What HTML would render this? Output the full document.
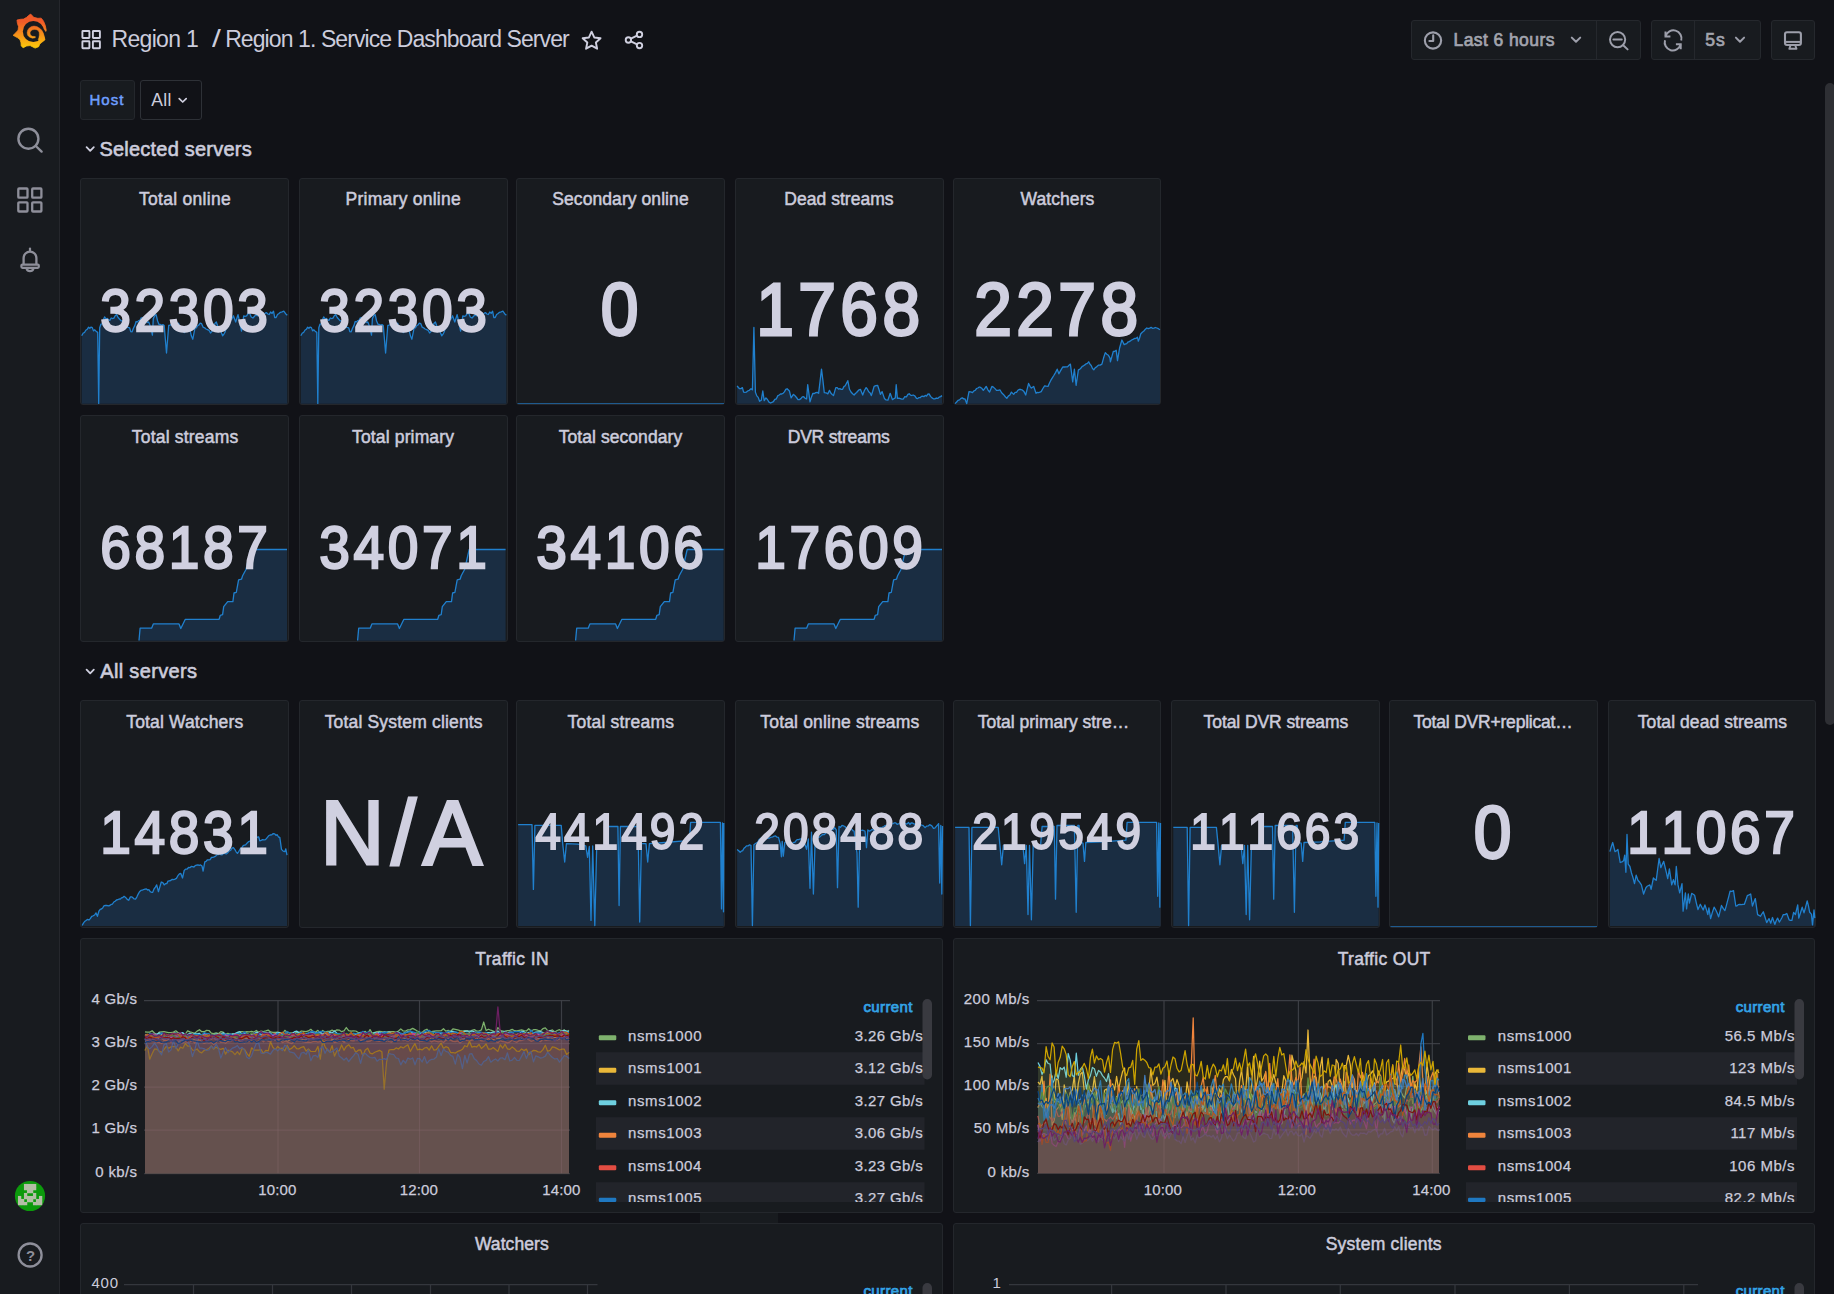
<!DOCTYPE html>
<html lang="en"><head><meta charset="utf-8"><title>Region 1. Service Dashboard Server - Grafana</title>
<style>
html,body{margin:0;padding:0;background:#111217;}
body{width:1834px;height:1294px;overflow:hidden;position:relative;font-family:"Liberation Sans",sans-serif;color:#ccccdc;}
.t{position:absolute;white-space:nowrap;line-height:1;}
.v{font-kerning:none;}
.p{position:absolute;background:#181b1f;border:1px solid #24272c;border-radius:3px;box-sizing:border-box;overflow:hidden;}
.b{position:absolute;box-sizing:border-box;}
svg{position:absolute;left:0;top:0;overflow:visible;}
</style></head><body>

<div class="b" style="left:0;top:0;width:60px;height:1294px;background:#181b1f;border-right:1px solid #25272c;"></div>
<div class="b" style="left:1825px;top:82.8px;width:10px;height:642.2px;background:#2e2f34;border-radius:5px;"></div>
<div class="t" style="left:111.56px;top:28.00px;font-size:23px;color:#ccccdc;letter-spacing:-0.689px;">Region 1</div>
<div class="t" style="left:211.60px;top:28.00px;font-size:23px;color:#ccccdc;letter-spacing:2.460px;transform:scaleX(1.382);transform-origin:0.00px 50%;">/</div>
<div class="t" style="left:225.16px;top:28.00px;font-size:23px;color:#ccccdc;letter-spacing:-0.909px;">Region 1. Service Dashboard Server</div>
<div class="b" style="left:80px;top:80px;width:55px;height:40px;background:#181b1f;border:1px solid #24272c;border-radius:3px;"></div>
<div class="t" style="left:89.50px;top:92.00px;font-size:15px;color:#6e9fff;letter-spacing:1.025px;-webkit-text-stroke:0.5px #6e9fff;">Host</div>
<div class="b" style="left:140px;top:80px;width:62px;height:40px;background:#111217;border:1px solid #2e3137;border-radius:3px;"></div>
<div class="t" style="left:151.20px;top:92.00px;font-size:17.5px;color:#ccccdc;letter-spacing:0.363px;">All</div>
<div class="t" style="left:99.40px;top:139.00px;font-size:20px;color:#ccccdc;letter-spacing:0.220px;-webkit-text-stroke:0.6px #ccccdc;">Selected servers</div>
<div class="t" style="left:100.20px;top:661.00px;font-size:20px;color:#ccccdc;letter-spacing:0.350px;-webkit-text-stroke:0.6px #ccccdc;">All servers</div>
<div class="b" style="left:1411px;top:20px;width:230px;height:40px;background:#181b1f;border:1px solid #25282d;border-radius:3px;"></div>
<div class="b" style="left:1651px;top:20px;width:110px;height:40px;background:#181b1f;border:1px solid #25282d;border-radius:3px;"></div>
<div class="b" style="left:1771px;top:20px;width:44px;height:40px;background:#181b1f;border:1px solid #25282d;border-radius:3px;"></div>
<div class="b" style="left:1596px;top:21px;width:1px;height:38px;background:#25282d;"></div>
<div class="b" style="left:1694px;top:21px;width:1px;height:38px;background:#25282d;"></div>
<div class="t" style="left:1453.60px;top:32.00px;font-size:17.5px;color:#a2a4ae;letter-spacing:0.407px;-webkit-text-stroke:0.7px #a2a4ae;">Last 6 hours</div>
<div class="t" style="left:1705.30px;top:32.00px;font-size:17.5px;color:#a2a4ae;letter-spacing:1.050px;-webkit-text-stroke:0.7px #a2a4ae;">5s</div>
<div class="p" style="left:80px;top:178px;width:209px;height:227px;"></div>
<div class="p" style="left:299px;top:178px;width:209px;height:227px;"></div>
<div class="p" style="left:516px;top:178px;width:209px;height:227px;"></div>
<div class="p" style="left:735px;top:178px;width:209px;height:227px;"></div>
<div class="p" style="left:953px;top:178px;width:208px;height:227px;"></div>
<div class="p" style="left:80px;top:415px;width:209px;height:227px;"></div>
<div class="p" style="left:299px;top:415px;width:209px;height:227px;"></div>
<div class="p" style="left:516px;top:415px;width:209px;height:227px;"></div>
<div class="p" style="left:735px;top:415px;width:209px;height:227px;"></div>
<div class="p" style="left:80px;top:700px;width:209px;height:228px;"></div>
<div class="p" style="left:299px;top:700px;width:209px;height:228px;"></div>
<div class="p" style="left:516px;top:700px;width:209px;height:228px;"></div>
<div class="p" style="left:735px;top:700px;width:209px;height:228px;"></div>
<div class="p" style="left:953px;top:700px;width:208px;height:228px;"></div>
<div class="p" style="left:1171px;top:700px;width:209px;height:228px;"></div>
<div class="p" style="left:1389px;top:700px;width:209px;height:228px;"></div>
<div class="p" style="left:1608px;top:700px;width:208px;height:228px;"></div>
<div class="p" style="left:80px;top:938px;width:863px;height:275px;"></div>
<div class="p" style="left:953px;top:938px;width:862px;height:275px;"></div>
<div class="p" style="left:80px;top:1223px;width:863px;height:100px;"></div>
<div class="p" style="left:953px;top:1223px;width:862px;height:100px;"></div>
<svg width="1834" height="1294" viewBox="0 0 1834 1294">
<path d="M81.7,335.8 L83.1,333.2 L84.5,332.5 L85.8,330.2 L87.2,329.3 L88.6,327.2 L89.8,328.3 L91.1,327.1 L92.3,327.6 L93.5,330.9 L94.8,329.8 L96.0,331.2 L97.7,332.4 L98.7,403.4 L99.7,327.8 L100.9,324.2 L102.2,323.9 L103.4,319.5 L104.6,316.9 L105.9,318.8 L107.2,318.5 L108.5,319.9 L109.8,320.3 L111.2,318.0 L112.5,318.5 L113.9,318.1 L115.2,315.8 L116.6,314.6 L118.1,317.5 L119.7,319.3 L121.2,320.9 L122.7,321.0 L124.3,324.8 L125.8,325.5 L127.1,327.1 L128.3,327.4 L129.6,327.8 L130.8,331.7 L132.1,331.8 L133.4,328.3 L134.8,325.6 L136.1,321.5 L137.4,321.9 L138.6,320.6 L139.9,320.4 L141.1,318.0 L142.4,317.5 L143.7,319.4 L144.9,319.1 L146.2,321.6 L147.4,322.3 L148.7,322.0 L149.9,325.1 L151.2,329.6 L152.4,335.2 L153.3,318.6 L154.7,315.7 L156.1,314.6 L157.6,321.0 L159.0,324.4 L160.3,324.5 L161.6,325.4 L162.9,324.6 L164.2,325.5 L166.5,353.0 L168.7,325.5 L169.9,325.2 L171.1,324.6 L172.4,324.2 L173.6,324.6 L174.8,324.3 L176.1,325.1 L177.3,324.1 L178.5,323.2 L180.0,327.2 L181.5,329.7 L183.0,331.2 L184.4,332.5 L185.8,331.3 L187.2,329.4 L188.6,331.4 L190.0,330.0 L191.4,336.1 L192.8,339.2 L195.0,327.8 L196.3,327.9 L197.6,325.7 L198.9,325.0 L200.2,323.2 L201.6,323.7 L203.1,327.2 L204.6,327.8 L206.0,329.0 L207.5,329.6 L209.0,330.3 L210.5,333.0 L211.9,331.4 L213.4,329.1 L214.9,323.4 L216.3,322.0 L217.6,325.7 L218.8,327.2 L220.1,329.2 L221.3,332.4 L222.6,335.8 L223.9,334.1 L225.1,332.0 L226.4,326.8 L227.6,326.1 L228.9,323.2 L230.4,319.3 L231.9,319.0 L233.4,315.8 L235.7,322.0 L238.0,314.6 L239.8,322.4 L241.5,331.2 L243.7,315.8 L245.1,316.3 L246.6,315.9 L248.1,313.6 L249.5,312.9 L251.2,317.0 L252.9,318.0 L254.3,316.5 L255.8,314.9 L257.2,315.8 L258.6,314.6 L259.9,313.0 L261.2,313.5 L262.5,314.0 L263.9,314.6 L265.2,313.1 L266.5,312.6 L267.8,314.0 L269.2,314.5 L270.6,312.0 L272.1,313.4 L273.5,311.2 L274.7,317.5 L276.1,317.5 L277.5,314.5 L279.0,313.5 L280.4,312.3 L282.1,311.8 L283.8,311.2 L285.6,313.7 L287.3,315.2 L287.3,403.8 L81.7,403.8 Z" fill="#1a2d42" stroke="none"/><path d="M81.7,335.8 L83.1,333.2 L84.5,332.5 L85.8,330.2 L87.2,329.3 L88.6,327.2 L89.8,328.3 L91.1,327.1 L92.3,327.6 L93.5,330.9 L94.8,329.8 L96.0,331.2 L97.7,332.4 L98.7,403.4 L99.7,327.8 L100.9,324.2 L102.2,323.9 L103.4,319.5 L104.6,316.9 L105.9,318.8 L107.2,318.5 L108.5,319.9 L109.8,320.3 L111.2,318.0 L112.5,318.5 L113.9,318.1 L115.2,315.8 L116.6,314.6 L118.1,317.5 L119.7,319.3 L121.2,320.9 L122.7,321.0 L124.3,324.8 L125.8,325.5 L127.1,327.1 L128.3,327.4 L129.6,327.8 L130.8,331.7 L132.1,331.8 L133.4,328.3 L134.8,325.6 L136.1,321.5 L137.4,321.9 L138.6,320.6 L139.9,320.4 L141.1,318.0 L142.4,317.5 L143.7,319.4 L144.9,319.1 L146.2,321.6 L147.4,322.3 L148.7,322.0 L149.9,325.1 L151.2,329.6 L152.4,335.2 L153.3,318.6 L154.7,315.7 L156.1,314.6 L157.6,321.0 L159.0,324.4 L160.3,324.5 L161.6,325.4 L162.9,324.6 L164.2,325.5 L166.5,353.0 L168.7,325.5 L169.9,325.2 L171.1,324.6 L172.4,324.2 L173.6,324.6 L174.8,324.3 L176.1,325.1 L177.3,324.1 L178.5,323.2 L180.0,327.2 L181.5,329.7 L183.0,331.2 L184.4,332.5 L185.8,331.3 L187.2,329.4 L188.6,331.4 L190.0,330.0 L191.4,336.1 L192.8,339.2 L195.0,327.8 L196.3,327.9 L197.6,325.7 L198.9,325.0 L200.2,323.2 L201.6,323.7 L203.1,327.2 L204.6,327.8 L206.0,329.0 L207.5,329.6 L209.0,330.3 L210.5,333.0 L211.9,331.4 L213.4,329.1 L214.9,323.4 L216.3,322.0 L217.6,325.7 L218.8,327.2 L220.1,329.2 L221.3,332.4 L222.6,335.8 L223.9,334.1 L225.1,332.0 L226.4,326.8 L227.6,326.1 L228.9,323.2 L230.4,319.3 L231.9,319.0 L233.4,315.8 L235.7,322.0 L238.0,314.6 L239.8,322.4 L241.5,331.2 L243.7,315.8 L245.1,316.3 L246.6,315.9 L248.1,313.6 L249.5,312.9 L251.2,317.0 L252.9,318.0 L254.3,316.5 L255.8,314.9 L257.2,315.8 L258.6,314.6 L259.9,313.0 L261.2,313.5 L262.5,314.0 L263.9,314.6 L265.2,313.1 L266.5,312.6 L267.8,314.0 L269.2,314.5 L270.6,312.0 L272.1,313.4 L273.5,311.2 L274.7,317.5 L276.1,317.5 L277.5,314.5 L279.0,313.5 L280.4,312.3 L282.1,311.8 L283.8,311.2 L285.6,313.7 L287.3,315.2" fill="none" stroke="#2080ce" stroke-width="1.3" stroke-linejoin="round"/>
<path d="M300.8,335.8 L302.2,333.2 L303.6,332.5 L304.9,330.2 L306.3,329.3 L307.7,327.2 L308.9,328.3 L310.2,327.1 L311.4,327.6 L312.6,330.9 L313.9,329.8 L315.1,331.2 L316.8,332.4 L317.8,403.4 L318.8,327.8 L320.0,324.2 L321.2,323.9 L322.5,319.5 L323.7,316.9 L325.0,318.8 L326.3,318.5 L327.6,319.9 L328.9,320.3 L330.3,318.0 L331.6,318.5 L333.0,318.1 L334.3,315.8 L335.7,314.6 L337.2,317.5 L338.8,319.3 L340.3,320.9 L341.8,321.0 L343.4,324.8 L344.9,325.5 L346.2,327.1 L347.4,327.4 L348.7,327.8 L349.9,331.7 L351.2,331.8 L352.5,328.3 L353.9,325.6 L355.2,321.5 L356.5,321.9 L357.7,320.6 L359.0,320.4 L360.2,318.0 L361.5,317.5 L362.8,319.4 L364.0,319.1 L365.3,321.6 L366.5,322.3 L367.8,322.0 L369.0,325.1 L370.3,329.6 L371.5,335.2 L372.4,318.6 L373.8,315.7 L375.2,314.6 L376.6,321.0 L378.1,324.4 L379.4,324.5 L380.7,325.4 L382.0,324.6 L383.3,325.5 L385.6,353.0 L387.8,325.5 L389.0,325.2 L390.2,324.6 L391.5,324.2 L392.7,324.6 L393.9,324.3 L395.1,325.1 L396.4,324.1 L397.6,323.2 L399.1,327.2 L400.6,329.7 L402.1,331.2 L403.5,332.5 L404.9,331.3 L406.3,329.4 L407.7,331.4 L409.1,330.0 L410.5,336.1 L411.9,339.2 L414.1,327.8 L415.4,327.9 L416.7,325.7 L418.0,325.0 L419.3,323.2 L420.8,323.7 L422.2,327.2 L423.6,327.8 L425.1,329.0 L426.6,329.6 L428.1,330.3 L429.6,333.0 L431.1,331.4 L432.5,329.1 L433.9,323.4 L435.4,322.0 L436.7,325.7 L437.9,327.2 L439.2,329.2 L440.4,332.4 L441.7,335.8 L443.0,334.1 L444.2,332.0 L445.5,326.8 L446.7,326.1 L448.0,323.2 L449.5,319.3 L451.0,319.0 L452.5,315.8 L454.8,322.0 L457.1,314.6 L458.9,322.4 L460.6,331.2 L462.8,315.8 L464.2,316.3 L465.7,315.9 L467.1,313.6 L468.6,312.9 L470.3,317.0 L472.0,318.0 L473.4,316.5 L474.9,314.9 L476.3,315.8 L477.7,314.6 L479.0,313.0 L480.3,313.5 L481.6,314.0 L483.0,314.6 L484.3,313.1 L485.6,312.6 L486.9,314.0 L488.3,314.5 L489.8,312.0 L491.2,313.4 L492.6,311.2 L493.8,317.5 L495.2,317.5 L496.6,314.5 L498.1,313.5 L499.5,312.3 L501.2,311.8 L502.9,311.2 L504.6,313.7 L506.4,315.2 L506.4,403.8 L300.8,403.8 Z" fill="#1a2d42" stroke="none"/><path d="M300.8,335.8 L302.2,333.2 L303.6,332.5 L304.9,330.2 L306.3,329.3 L307.7,327.2 L308.9,328.3 L310.2,327.1 L311.4,327.6 L312.6,330.9 L313.9,329.8 L315.1,331.2 L316.8,332.4 L317.8,403.4 L318.8,327.8 L320.0,324.2 L321.2,323.9 L322.5,319.5 L323.7,316.9 L325.0,318.8 L326.3,318.5 L327.6,319.9 L328.9,320.3 L330.3,318.0 L331.6,318.5 L333.0,318.1 L334.3,315.8 L335.7,314.6 L337.2,317.5 L338.8,319.3 L340.3,320.9 L341.8,321.0 L343.4,324.8 L344.9,325.5 L346.2,327.1 L347.4,327.4 L348.7,327.8 L349.9,331.7 L351.2,331.8 L352.5,328.3 L353.9,325.6 L355.2,321.5 L356.5,321.9 L357.7,320.6 L359.0,320.4 L360.2,318.0 L361.5,317.5 L362.8,319.4 L364.0,319.1 L365.3,321.6 L366.5,322.3 L367.8,322.0 L369.0,325.1 L370.3,329.6 L371.5,335.2 L372.4,318.6 L373.8,315.7 L375.2,314.6 L376.6,321.0 L378.1,324.4 L379.4,324.5 L380.7,325.4 L382.0,324.6 L383.3,325.5 L385.6,353.0 L387.8,325.5 L389.0,325.2 L390.2,324.6 L391.5,324.2 L392.7,324.6 L393.9,324.3 L395.1,325.1 L396.4,324.1 L397.6,323.2 L399.1,327.2 L400.6,329.7 L402.1,331.2 L403.5,332.5 L404.9,331.3 L406.3,329.4 L407.7,331.4 L409.1,330.0 L410.5,336.1 L411.9,339.2 L414.1,327.8 L415.4,327.9 L416.7,325.7 L418.0,325.0 L419.3,323.2 L420.8,323.7 L422.2,327.2 L423.6,327.8 L425.1,329.0 L426.6,329.6 L428.1,330.3 L429.6,333.0 L431.1,331.4 L432.5,329.1 L433.9,323.4 L435.4,322.0 L436.7,325.7 L437.9,327.2 L439.2,329.2 L440.4,332.4 L441.7,335.8 L443.0,334.1 L444.2,332.0 L445.5,326.8 L446.7,326.1 L448.0,323.2 L449.5,319.3 L451.0,319.0 L452.5,315.8 L454.8,322.0 L457.1,314.6 L458.9,322.4 L460.6,331.2 L462.8,315.8 L464.2,316.3 L465.7,315.9 L467.1,313.6 L468.6,312.9 L470.3,317.0 L472.0,318.0 L473.4,316.5 L474.9,314.9 L476.3,315.8 L477.7,314.6 L479.0,313.0 L480.3,313.5 L481.6,314.0 L483.0,314.6 L484.3,313.1 L485.6,312.6 L486.9,314.0 L488.3,314.5 L489.8,312.0 L491.2,313.4 L492.6,311.2 L493.8,317.5 L495.2,317.5 L496.6,314.5 L498.1,313.5 L499.5,312.3 L501.2,311.8 L502.9,311.2 L504.6,313.7 L506.4,315.2" fill="none" stroke="#2080ce" stroke-width="1.3" stroke-linejoin="round"/>
<path d="M517.5,403.5 L724,403.5" stroke="#1f5a8e" stroke-width="1" fill="none"/>
<path d="M737.1,385.8 L738.4,387.5 L739.6,388.7 L741.0,388.6 L742.4,387.6 L743.6,392.1 L744.9,392.3 L746.3,392.2 L747.6,391.0 L749.3,390.3 L751.0,388.7 L752.4,389.8 L753.9,327.4 L755.4,392.1 L756.8,395.9 L758.2,397.4 L759.6,401.3 L761.3,400.2 L762.8,391.0 L764.2,400.7 L765.9,397.9 L767.4,399.5 L769.0,402.1 L770.5,403.0 L771.9,402.3 L773.4,401.7 L774.8,399.3 L776.2,399.0 L777.9,395.6 L779.2,395.0 L780.5,394.0 L781.8,394.0 L783.1,393.3 L784.4,391.9 L785.8,389.4 L787.1,388.7 L789.4,391.0 L791.1,397.9 L793.4,394.4 L794.9,395.6 L796.5,397.5 L798.0,399.6 L799.4,399.6 L800.9,398.6 L802.3,396.8 L803.7,396.7 L805.2,398.4 L806.6,399.0 L807.7,384.7 L810.0,401.9 L811.5,396.9 L812.9,393.3 L814.3,393.5 L815.8,392.6 L817.2,392.4 L818.6,393.3 L820.0,381.9 L821.5,369.2 L822.9,380.4 L824.3,392.7 L826.0,392.8 L827.8,393.9 L829.5,390.4 L830.8,393.0 L832.2,394.5 L833.5,395.6 L835.8,387.6 L837.2,387.6 L838.5,389.1 L839.9,388.7 L841.2,389.3 L842.6,389.3 L843.9,386.6 L845.2,385.8 L846.5,383.2 L847.8,380.7 L849.5,389.3 L851.0,392.0 L852.6,393.8 L854.1,395.0 L855.4,393.5 L856.6,392.5 L857.9,391.0 L859.1,389.8 L860.4,389.3 L862.7,395.0 L864.4,390.5 L866.1,387.6 L867.4,389.2 L868.7,391.8 L870.0,392.7 L871.3,395.6 L872.7,391.3 L874.1,386.4 L875.9,385.6 L877.6,385.3 L879.0,389.5 L880.4,394.4 L882.1,391.6 L884.4,398.4 L886.1,399.9 L887.9,400.2 L890.2,393.3 L892.4,399.6 L893.8,398.7 L895.3,397.9 L896.2,384.7 L897.4,398.4 L898.9,398.2 L900.3,398.7 L901.8,399.2 L903.3,399.0 L904.8,396.7 L906.4,396.8 L907.9,394.4 L909.2,393.7 L910.5,395.1 L911.8,395.5 L913.1,395.0 L914.8,395.8 L916.5,398.4 L917.7,398.6 L919.0,397.6 L920.2,397.7 L921.4,396.4 L922.7,396.2 L923.9,396.7 L925.2,395.4 L926.5,396.1 L927.8,394.1 L929.1,393.9 L930.5,396.4 L932.0,397.9 L933.4,398.8 L934.9,398.9 L936.3,398.0 L937.7,398.4 L939.1,397.2 L940.6,396.6 L942.0,395.6 L942.0,403.8 L737.1,403.8 Z" fill="#1a2d42" stroke="none"/><path d="M737.1,385.8 L738.4,387.5 L739.6,388.7 L741.0,388.6 L742.4,387.6 L743.6,392.1 L744.9,392.3 L746.3,392.2 L747.6,391.0 L749.3,390.3 L751.0,388.7 L752.4,389.8 L753.9,327.4 L755.4,392.1 L756.8,395.9 L758.2,397.4 L759.6,401.3 L761.3,400.2 L762.8,391.0 L764.2,400.7 L765.9,397.9 L767.4,399.5 L769.0,402.1 L770.5,403.0 L771.9,402.3 L773.4,401.7 L774.8,399.3 L776.2,399.0 L777.9,395.6 L779.2,395.0 L780.5,394.0 L781.8,394.0 L783.1,393.3 L784.4,391.9 L785.8,389.4 L787.1,388.7 L789.4,391.0 L791.1,397.9 L793.4,394.4 L794.9,395.6 L796.5,397.5 L798.0,399.6 L799.4,399.6 L800.9,398.6 L802.3,396.8 L803.7,396.7 L805.2,398.4 L806.6,399.0 L807.7,384.7 L810.0,401.9 L811.5,396.9 L812.9,393.3 L814.3,393.5 L815.8,392.6 L817.2,392.4 L818.6,393.3 L820.0,381.9 L821.5,369.2 L822.9,380.4 L824.3,392.7 L826.0,392.8 L827.8,393.9 L829.5,390.4 L830.8,393.0 L832.2,394.5 L833.5,395.6 L835.8,387.6 L837.2,387.6 L838.5,389.1 L839.9,388.7 L841.2,389.3 L842.6,389.3 L843.9,386.6 L845.2,385.8 L846.5,383.2 L847.8,380.7 L849.5,389.3 L851.0,392.0 L852.6,393.8 L854.1,395.0 L855.4,393.5 L856.6,392.5 L857.9,391.0 L859.1,389.8 L860.4,389.3 L862.7,395.0 L864.4,390.5 L866.1,387.6 L867.4,389.2 L868.7,391.8 L870.0,392.7 L871.3,395.6 L872.7,391.3 L874.1,386.4 L875.9,385.6 L877.6,385.3 L879.0,389.5 L880.4,394.4 L882.1,391.6 L884.4,398.4 L886.1,399.9 L887.9,400.2 L890.2,393.3 L892.4,399.6 L893.8,398.7 L895.3,397.9 L896.2,384.7 L897.4,398.4 L898.9,398.2 L900.3,398.7 L901.8,399.2 L903.3,399.0 L904.8,396.7 L906.4,396.8 L907.9,394.4 L909.2,393.7 L910.5,395.1 L911.8,395.5 L913.1,395.0 L914.8,395.8 L916.5,398.4 L917.7,398.6 L919.0,397.6 L920.2,397.7 L921.4,396.4 L922.7,396.2 L923.9,396.7 L925.2,395.4 L926.5,396.1 L927.8,394.1 L929.1,393.9 L930.5,396.4 L932.0,397.9 L933.4,398.8 L934.9,398.9 L936.3,398.0 L937.7,398.4 L939.1,397.2 L940.6,396.6 L942.0,395.6" fill="none" stroke="#2080ce" stroke-width="1.3" stroke-linejoin="round"/>
<path d="M955.1,403.6 L956.6,402.0 L958.0,400.4 L959.5,399.9 L961.0,398.4 L962.3,397.9 L963.7,398.9 L965.0,399.0 L966.7,403.6 L969.0,391.6 L970.8,391.9 L972.5,392.7 L973.9,390.9 L975.2,390.4 L976.6,388.5 L977.9,388.0 L979.3,387.0 L980.6,387.4 L982.0,388.6 L983.3,390.4 L984.8,388.3 L986.2,386.4 L987.9,389.8 L989.6,392.1 L991.9,386.4 L993.4,387.1 L995.0,388.6 L996.5,390.4 L998.2,390.3 L999.9,389.8 L1001.6,392.8 L1003.4,394.4 L1005.1,396.5 L1006.8,398.4 L1008.3,396.1 L1009.9,395.0 L1011.4,392.1 L1013.7,394.4 L1015.1,392.4 L1016.5,392.4 L1018.0,390.2 L1019.4,389.3 L1020.9,389.5 L1022.5,390.2 L1024.0,391.6 L1025.7,395.0 L1027.2,388.9 L1028.6,383.5 L1030.0,386.3 L1031.4,388.1 L1033.7,386.4 L1036.0,393.3 L1037.3,392.4 L1038.6,392.6 L1039.9,392.2 L1041.2,391.6 L1042.9,388.5 L1044.6,385.8 L1046.3,386.2 L1048.0,386.4 L1049.5,383.0 L1050.9,380.2 L1052.3,377.8 L1053.8,375.5 L1055.5,372.6 L1057.2,369.2 L1058.9,373.8 L1060.2,371.4 L1061.6,368.9 L1062.9,366.9 L1064.4,367.0 L1066.0,366.8 L1067.5,366.9 L1069.0,365.2 L1070.4,364.1 L1072.7,381.8 L1074.4,369.2 L1076.1,385.3 L1078.4,369.8 L1079.7,369.3 L1081.0,368.1 L1082.2,366.4 L1083.5,365.8 L1084.8,364.9 L1086.1,363.8 L1087.4,363.4 L1088.7,361.8 L1090.0,364.2 L1091.2,365.5 L1092.5,368.6 L1093.8,369.8 L1095.3,367.7 L1096.9,366.6 L1098.4,365.2 L1100.2,365.1 L1101.9,364.1 L1103.6,357.8 L1105.3,352.6 L1106.8,354.3 L1108.4,355.3 L1109.9,357.8 L1110.4,361.8 L1111.8,356.9 L1113.3,351.5 L1114.8,351.3 L1116.2,350.3 L1117.5,360.6 L1119.6,348.0 L1121.9,340.0 L1124.2,344.6 L1125.4,344.0 L1126.7,343.7 L1127.9,342.0 L1129.1,341.8 L1130.4,340.9 L1131.6,340.0 L1133.0,339.4 L1134.5,338.5 L1136.0,338.4 L1137.4,337.2 L1138.3,341.2 L1139.5,338.2 L1140.8,333.7 L1142.3,332.2 L1143.9,331.0 L1145.4,329.2 L1146.8,328.0 L1148.2,328.6 L1149.7,328.1 L1151.1,327.4 L1152.5,328.3 L1153.9,328.2 L1155.4,327.5 L1156.8,328.0 L1158.4,328.7 L1160.0,329.7 L1160.0,403.8 L955.1,403.8 Z" fill="#1a2d42" stroke="none"/><path d="M955.1,403.6 L956.6,402.0 L958.0,400.4 L959.5,399.9 L961.0,398.4 L962.3,397.9 L963.7,398.9 L965.0,399.0 L966.7,403.6 L969.0,391.6 L970.8,391.9 L972.5,392.7 L973.9,390.9 L975.2,390.4 L976.6,388.5 L977.9,388.0 L979.3,387.0 L980.6,387.4 L982.0,388.6 L983.3,390.4 L984.8,388.3 L986.2,386.4 L987.9,389.8 L989.6,392.1 L991.9,386.4 L993.4,387.1 L995.0,388.6 L996.5,390.4 L998.2,390.3 L999.9,389.8 L1001.6,392.8 L1003.4,394.4 L1005.1,396.5 L1006.8,398.4 L1008.3,396.1 L1009.9,395.0 L1011.4,392.1 L1013.7,394.4 L1015.1,392.4 L1016.5,392.4 L1018.0,390.2 L1019.4,389.3 L1020.9,389.5 L1022.5,390.2 L1024.0,391.6 L1025.7,395.0 L1027.2,388.9 L1028.6,383.5 L1030.0,386.3 L1031.4,388.1 L1033.7,386.4 L1036.0,393.3 L1037.3,392.4 L1038.6,392.6 L1039.9,392.2 L1041.2,391.6 L1042.9,388.5 L1044.6,385.8 L1046.3,386.2 L1048.0,386.4 L1049.5,383.0 L1050.9,380.2 L1052.3,377.8 L1053.8,375.5 L1055.5,372.6 L1057.2,369.2 L1058.9,373.8 L1060.2,371.4 L1061.6,368.9 L1062.9,366.9 L1064.4,367.0 L1066.0,366.8 L1067.5,366.9 L1069.0,365.2 L1070.4,364.1 L1072.7,381.8 L1074.4,369.2 L1076.1,385.3 L1078.4,369.8 L1079.7,369.3 L1081.0,368.1 L1082.2,366.4 L1083.5,365.8 L1084.8,364.9 L1086.1,363.8 L1087.4,363.4 L1088.7,361.8 L1090.0,364.2 L1091.2,365.5 L1092.5,368.6 L1093.8,369.8 L1095.3,367.7 L1096.9,366.6 L1098.4,365.2 L1100.2,365.1 L1101.9,364.1 L1103.6,357.8 L1105.3,352.6 L1106.8,354.3 L1108.4,355.3 L1109.9,357.8 L1110.4,361.8 L1111.8,356.9 L1113.3,351.5 L1114.8,351.3 L1116.2,350.3 L1117.5,360.6 L1119.6,348.0 L1121.9,340.0 L1124.2,344.6 L1125.4,344.0 L1126.7,343.7 L1127.9,342.0 L1129.1,341.8 L1130.4,340.9 L1131.6,340.0 L1133.0,339.4 L1134.5,338.5 L1136.0,338.4 L1137.4,337.2 L1138.3,341.2 L1139.5,338.2 L1140.8,333.7 L1142.3,332.2 L1143.9,331.0 L1145.4,329.2 L1146.8,328.0 L1148.2,328.6 L1149.7,328.1 L1151.1,327.4 L1152.5,328.3 L1153.9,328.2 L1155.4,327.5 L1156.8,328.0 L1158.4,328.7 L1160.0,329.7" fill="none" stroke="#2080ce" stroke-width="1.3" stroke-linejoin="round"/>
<path d="M139.0,640.5 L140.1,628.2 L151.6,628.2 L153.3,623.9 L179.0,623.9 L180.8,628.5 L185.3,619.3 L219.1,619.3 L220.3,615.3 L222.6,614.7 L223.7,606.7 L227.7,601.6 L232.9,601.6 L234.0,593.0 L236.3,592.4 L238.6,579.8 L241.5,579.2 L242.6,575.8 L246.0,569.5 L250.6,549.5 L287.0,549.5 L287.0,640.8 L139.0,640.8 Z" fill="#1a2d42" stroke="none"/><path d="M139.0,640.5 L140.1,628.2 L151.6,628.2 L153.3,623.9 L179.0,623.9 L180.8,628.5 L185.3,619.3 L219.1,619.3 L220.3,615.3 L222.6,614.7 L223.7,606.7 L227.7,601.6 L232.9,601.6 L234.0,593.0 L236.3,592.4 L238.6,579.8 L241.5,579.2 L242.6,575.8 L246.0,569.5 L250.6,549.5 L287.0,549.5" fill="none" stroke="#2080ce" stroke-width="1.3" stroke-linejoin="round"/>
<path d="M357.6,640.5 L358.7,628.2 L370.2,628.2 L371.9,623.9 L397.6,623.9 L399.4,628.5 L403.9,619.3 L437.7,619.3 L438.9,615.3 L441.2,614.7 L442.3,606.7 L446.3,601.6 L451.5,601.6 L452.6,593.0 L454.9,592.4 L457.2,579.8 L460.1,579.2 L461.2,575.8 L464.6,569.5 L469.2,549.5 L505.6,549.5 L505.6,640.8 L357.6,640.8 Z" fill="#1a2d42" stroke="none"/><path d="M357.6,640.5 L358.7,628.2 L370.2,628.2 L371.9,623.9 L397.6,623.9 L399.4,628.5 L403.9,619.3 L437.7,619.3 L438.9,615.3 L441.2,614.7 L442.3,606.7 L446.3,601.6 L451.5,601.6 L452.6,593.0 L454.9,592.4 L457.2,579.8 L460.1,579.2 L461.2,575.8 L464.6,569.5 L469.2,549.5 L505.6,549.5" fill="none" stroke="#2080ce" stroke-width="1.3" stroke-linejoin="round"/>
<path d="M575.6,640.5 L576.7,628.2 L588.2,628.2 L589.9,623.9 L615.6,623.9 L617.4,628.5 L621.9,619.3 L655.7,619.3 L656.9,615.3 L659.2,614.7 L660.3,606.7 L664.3,601.6 L669.5,601.6 L670.6,593.0 L672.9,592.4 L675.2,579.8 L678.1,579.2 L679.2,575.8 L682.6,569.5 L687.2,549.5 L723.6,549.5 L723.6,640.8 L575.6,640.8 Z" fill="#1a2d42" stroke="none"/><path d="M575.6,640.5 L576.7,628.2 L588.2,628.2 L589.9,623.9 L615.6,623.9 L617.4,628.5 L621.9,619.3 L655.7,619.3 L656.9,615.3 L659.2,614.7 L660.3,606.7 L664.3,601.6 L669.5,601.6 L670.6,593.0 L672.9,592.4 L675.2,579.8 L678.1,579.2 L679.2,575.8 L682.6,569.5 L687.2,549.5 L723.6,549.5" fill="none" stroke="#2080ce" stroke-width="1.3" stroke-linejoin="round"/>
<path d="M794.0,640.5 L795.1,628.2 L806.6,628.2 L808.3,623.9 L834.0,623.9 L835.8,628.5 L840.3,619.3 L874.1,619.3 L875.3,615.3 L877.6,614.7 L878.7,606.7 L882.7,601.6 L887.9,601.6 L889.0,593.0 L891.3,592.4 L893.6,579.8 L896.5,579.2 L897.6,575.8 L901.0,569.5 L905.6,549.5 L942.0,549.5 L942.0,640.8 L794.0,640.8 Z" fill="#1a2d42" stroke="none"/><path d="M794.0,640.5 L795.1,628.2 L806.6,628.2 L808.3,623.9 L834.0,623.9 L835.8,628.5 L840.3,619.3 L874.1,619.3 L875.3,615.3 L877.6,614.7 L878.7,606.7 L882.7,601.6 L887.9,601.6 L889.0,593.0 L891.3,592.4 L893.6,579.8 L896.5,579.2 L897.6,575.8 L901.0,569.5 L905.6,549.5 L942.0,549.5" fill="none" stroke="#2080ce" stroke-width="1.3" stroke-linejoin="round"/>
<path d="M82.1,925.5 L83.3,923.4 L84.6,921.5 L86.0,920.5 L87.4,919.4 L88.9,920.0 L90.3,918.6 L91.7,916.3 L93.2,915.8 L94.6,915.0 L96.0,912.9 L97.4,916.3 L98.9,911.2 L100.2,909.3 L101.4,909.0 L102.7,908.0 L103.9,905.8 L105.2,905.5 L106.7,905.3 L108.3,905.9 L109.8,905.5 L111.1,904.4 L112.5,904.0 L113.8,902.0 L115.1,901.2 L116.5,900.0 L117.8,899.7 L119.1,899.0 L120.3,899.1 L121.6,897.8 L122.8,897.5 L124.1,896.3 L125.6,897.4 L127.2,899.4 L128.7,900.3 L130.4,896.9 L131.7,896.8 L132.9,897.7 L134.2,898.9 L135.5,899.2 L136.8,897.1 L138.2,894.1 L139.5,891.7 L140.9,890.4 L142.3,890.2 L143.6,889.5 L145.0,889.1 L146.4,888.9 L147.7,890.1 L148.9,889.7 L150.2,891.6 L151.4,892.3 L152.7,892.3 L154.0,889.0 L155.4,887.1 L156.7,884.9 L158.4,891.7 L159.9,886.8 L161.3,882.0 L162.8,882.6 L164.2,884.9 L165.5,883.7 L166.8,883.6 L168.0,881.1 L169.3,880.8 L170.7,880.5 L172.2,879.3 L173.6,879.7 L175.0,879.1 L176.4,878.4 L177.9,875.7 L179.4,873.9 L180.8,873.4 L182.5,878.0 L184.2,870.5 L185.6,869.1 L187.1,869.2 L188.5,867.5 L189.9,867.7 L191.2,866.5 L192.6,866.7 L193.9,867.0 L195.2,865.6 L196.6,865.1 L197.9,864.8 L199.3,865.4 L200.6,864.9 L202.0,866.0 L203.1,871.1 L204.8,861.9 L206.1,861.3 L207.5,859.8 L208.8,859.8 L210.1,859.7 L211.5,857.3 L212.8,857.4 L214.2,856.8 L215.7,856.1 L217.2,854.6 L218.6,854.5 L219.9,853.8 L221.2,854.9 L222.5,854.7 L223.8,852.8 L225.1,853.7 L226.4,853.9 L227.7,852.8 L229.1,851.0 L230.6,850.4 L232.0,848.1 L233.4,847.6 L234.7,849.3 L236.1,851.8 L237.4,853.4 L238.9,851.3 L240.3,848.8 L241.6,848.1 L243.0,845.8 L244.3,845.1 L245.6,844.9 L247.0,843.2 L248.3,841.9 L249.6,841.2 L250.9,840.4 L252.2,840.9 L253.5,839.5 L254.7,837.8 L256.0,838.6 L257.3,837.1 L258.6,836.8 L259.8,840.8 L261.2,840.4 L262.6,839.7 L264.1,839.8 L265.5,839.6 L267.0,837.8 L268.6,835.8 L270.1,835.0 L271.6,834.9 L273.2,833.6 L274.7,833.9 L276.0,835.3 L277.2,834.7 L278.5,837.0 L279.8,837.3 L281.5,849.4 L283.2,851.1 L285.0,851.6 L285.8,848.8 L287.0,855.1 L287.0,926 L82.1,926 Z" fill="#1a2d42" stroke="none"/><path d="M82.1,925.5 L83.3,923.4 L84.6,921.5 L86.0,920.5 L87.4,919.4 L88.9,920.0 L90.3,918.6 L91.7,916.3 L93.2,915.8 L94.6,915.0 L96.0,912.9 L97.4,916.3 L98.9,911.2 L100.2,909.3 L101.4,909.0 L102.7,908.0 L103.9,905.8 L105.2,905.5 L106.7,905.3 L108.3,905.9 L109.8,905.5 L111.1,904.4 L112.5,904.0 L113.8,902.0 L115.1,901.2 L116.5,900.0 L117.8,899.7 L119.1,899.0 L120.3,899.1 L121.6,897.8 L122.8,897.5 L124.1,896.3 L125.6,897.4 L127.2,899.4 L128.7,900.3 L130.4,896.9 L131.7,896.8 L132.9,897.7 L134.2,898.9 L135.5,899.2 L136.8,897.1 L138.2,894.1 L139.5,891.7 L140.9,890.4 L142.3,890.2 L143.6,889.5 L145.0,889.1 L146.4,888.9 L147.7,890.1 L148.9,889.7 L150.2,891.6 L151.4,892.3 L152.7,892.3 L154.0,889.0 L155.4,887.1 L156.7,884.9 L158.4,891.7 L159.9,886.8 L161.3,882.0 L162.8,882.6 L164.2,884.9 L165.5,883.7 L166.8,883.6 L168.0,881.1 L169.3,880.8 L170.7,880.5 L172.2,879.3 L173.6,879.7 L175.0,879.1 L176.4,878.4 L177.9,875.7 L179.4,873.9 L180.8,873.4 L182.5,878.0 L184.2,870.5 L185.6,869.1 L187.1,869.2 L188.5,867.5 L189.9,867.7 L191.2,866.5 L192.6,866.7 L193.9,867.0 L195.2,865.6 L196.6,865.1 L197.9,864.8 L199.3,865.4 L200.6,864.9 L202.0,866.0 L203.1,871.1 L204.8,861.9 L206.1,861.3 L207.5,859.8 L208.8,859.8 L210.1,859.7 L211.5,857.3 L212.8,857.4 L214.2,856.8 L215.7,856.1 L217.2,854.6 L218.6,854.5 L219.9,853.8 L221.2,854.9 L222.5,854.7 L223.8,852.8 L225.1,853.7 L226.4,853.9 L227.7,852.8 L229.1,851.0 L230.6,850.4 L232.0,848.1 L233.4,847.6 L234.7,849.3 L236.1,851.8 L237.4,853.4 L238.9,851.3 L240.3,848.8 L241.6,848.1 L243.0,845.8 L244.3,845.1 L245.6,844.9 L247.0,843.2 L248.3,841.9 L249.6,841.2 L250.9,840.4 L252.2,840.9 L253.5,839.5 L254.7,837.8 L256.0,838.6 L257.3,837.1 L258.6,836.8 L259.8,840.8 L261.2,840.4 L262.6,839.7 L264.1,839.8 L265.5,839.6 L267.0,837.8 L268.6,835.8 L270.1,835.0 L271.6,834.9 L273.2,833.6 L274.7,833.9 L276.0,835.3 L277.2,834.7 L278.5,837.0 L279.8,837.3 L281.5,849.4 L283.2,851.1 L285.0,851.6 L285.8,848.8 L287.0,855.1" fill="none" stroke="#2080ce" stroke-width="1.3" stroke-linejoin="round"/>
<path d="M518.1,824.7 L532.0,824.7 L533.4,889.4 L534.9,825.3 L561.2,825.3 L562.7,843.6 L564.7,862.0 L566.4,843.6 L577.8,844.2 L585.8,845.9 L587.6,857.4 L589.3,846.5 L591.0,920.4 L592.7,845.9 L594.8,925.5 L596.7,845.9 L604.2,845.3 L605.3,826.5 L617.9,826.5 L619.1,905.5 L620.4,826.5 L637.4,826.5 L638.3,843.6 L639.7,922.1 L641.4,843.6 L646.0,843.6 L647.7,862.0 L649.4,843.6 L664.9,842.5 L684.3,840.8 L689.5,840.2 L690.6,822.4 L720.4,822.4 L721.5,908.9 L722.5,823.0 L723.5,911.8 L723.8,823.0 L723.8,926 L518.1,926 Z" fill="#1a2d42" stroke="none"/><path d="M518.1,824.7 L532.0,824.7 L533.4,889.4 L534.9,825.3 L561.2,825.3 L562.7,843.6 L564.7,862.0 L566.4,843.6 L577.8,844.2 L585.8,845.9 L587.6,857.4 L589.3,846.5 L591.0,920.4 L592.7,845.9 L594.8,925.5 L596.7,845.9 L604.2,845.3 L605.3,826.5 L617.9,826.5 L619.1,905.5 L620.4,826.5 L637.4,826.5 L638.3,843.6 L639.7,922.1 L641.4,843.6 L646.0,843.6 L647.7,862.0 L649.4,843.6 L664.9,842.5 L684.3,840.8 L689.5,840.2 L690.6,822.4 L720.4,822.4 L721.5,908.9 L722.5,823.0 L723.5,911.8 L723.8,823.0" fill="none" stroke="#2080ce" stroke-width="1.3" stroke-linejoin="round"/>
<path d="M737.1,849.4 L738.7,850.7 L740.2,852.2 L741.5,851.1 L742.7,850.6 L744.0,848.3 L745.2,847.2 L746.5,845.9 L748.0,845.9 L749.5,844.8 L751.0,845.3 L752.4,925.5 L753.9,844.8 L755.2,843.7 L756.6,842.8 L757.9,842.0 L759.2,839.3 L760.6,838.6 L761.9,837.9 L763.1,836.9 L764.3,838.3 L765.5,838.0 L766.7,836.4 L768.0,838.3 L769.2,838.2 L770.4,837.4 L771.6,837.2 L772.8,836.8 L774.2,836.2 L775.6,836.0 L777.1,837.2 L778.5,837.3 L780.2,843.6 L781.4,856.8 L782.2,841.3 L783.3,856.2 L784.8,842.5 L786.0,841.7 L787.3,842.2 L788.5,842.5 L789.8,842.2 L791.0,843.3 L792.3,843.6 L793.6,842.5 L794.8,842.4 L796.1,840.6 L797.4,839.6 L798.7,839.6 L800.0,839.0 L801.3,839.1 L802.6,838.5 L803.9,842.0 L805.3,845.3 L806.6,849.4 L808.3,839.0 L810.0,888.3 L811.5,832.2 L813.4,894.0 L815.2,837.9 L816.5,838.5 L817.8,838.0 L819.1,837.2 L820.4,836.4 L821.7,835.1 L823.0,834.4 L824.3,834.5 L825.6,833.2 L826.9,831.8 L828.2,832.5 L829.5,830.8 L830.7,830.9 L832.0,829.1 L833.3,829.5 L834.6,827.6 L836.3,829.9 L837.5,887.7 L839.0,826.5 L840.5,827.3 L842.0,825.4 L843.4,825.9 L844.9,826.5 L846.2,828.0 L847.5,827.7 L848.8,829.5 L850.2,828.8 L851.5,828.8 L852.8,830.6 L854.1,831.0 L855.5,842.5 L857.0,852.8 L858.2,907.2 L859.8,831.0 L861.1,830.5 L862.4,830.1 L863.7,830.6 L865.0,831.0 L866.5,847.6 L867.8,829.9 L869.2,831.0 L870.6,830.7 L871.9,829.4 L873.3,829.8 L874.7,830.5 L876.0,829.1 L877.3,828.4 L878.6,829.4 L880.0,827.5 L881.3,827.8 L882.6,827.0 L883.9,826.5 L885.2,825.4 L886.5,826.2 L887.8,824.4 L889.1,825.2 L890.4,823.6 L891.7,823.8 L893.0,823.6 L894.4,822.8 L895.8,822.9 L897.1,824.3 L898.5,823.8 L899.9,823.0 L901.1,822.6 L902.4,824.0 L903.6,822.5 L904.9,823.0 L906.1,824.1 L907.4,823.6 L908.6,822.5 L909.9,824.5 L911.1,822.9 L912.4,823.0 L913.6,823.6 L914.9,824.4 L916.2,823.7 L917.5,823.9 L918.9,823.6 L920.2,823.9 L921.5,825.2 L922.8,825.3 L925.1,827.6 L926.6,826.1 L928.2,825.9 L929.7,824.7 L931.0,825.3 L932.2,826.3 L933.5,828.3 L934.8,828.2 L936.1,826.6 L937.3,825.3 L938.6,823.6 L939.7,883.1 L940.8,825.3 L941.8,894.0 L942.5,825.9 L942.5,926 L737.1,926 Z" fill="#1a2d42" stroke="none"/><path d="M737.1,849.4 L738.7,850.7 L740.2,852.2 L741.5,851.1 L742.7,850.6 L744.0,848.3 L745.2,847.2 L746.5,845.9 L748.0,845.9 L749.5,844.8 L751.0,845.3 L752.4,925.5 L753.9,844.8 L755.2,843.7 L756.6,842.8 L757.9,842.0 L759.2,839.3 L760.6,838.6 L761.9,837.9 L763.1,836.9 L764.3,838.3 L765.5,838.0 L766.7,836.4 L768.0,838.3 L769.2,838.2 L770.4,837.4 L771.6,837.2 L772.8,836.8 L774.2,836.2 L775.6,836.0 L777.1,837.2 L778.5,837.3 L780.2,843.6 L781.4,856.8 L782.2,841.3 L783.3,856.2 L784.8,842.5 L786.0,841.7 L787.3,842.2 L788.5,842.5 L789.8,842.2 L791.0,843.3 L792.3,843.6 L793.6,842.5 L794.8,842.4 L796.1,840.6 L797.4,839.6 L798.7,839.6 L800.0,839.0 L801.3,839.1 L802.6,838.5 L803.9,842.0 L805.3,845.3 L806.6,849.4 L808.3,839.0 L810.0,888.3 L811.5,832.2 L813.4,894.0 L815.2,837.9 L816.5,838.5 L817.8,838.0 L819.1,837.2 L820.4,836.4 L821.7,835.1 L823.0,834.4 L824.3,834.5 L825.6,833.2 L826.9,831.8 L828.2,832.5 L829.5,830.8 L830.7,830.9 L832.0,829.1 L833.3,829.5 L834.6,827.6 L836.3,829.9 L837.5,887.7 L839.0,826.5 L840.5,827.3 L842.0,825.4 L843.4,825.9 L844.9,826.5 L846.2,828.0 L847.5,827.7 L848.8,829.5 L850.2,828.8 L851.5,828.8 L852.8,830.6 L854.1,831.0 L855.5,842.5 L857.0,852.8 L858.2,907.2 L859.8,831.0 L861.1,830.5 L862.4,830.1 L863.7,830.6 L865.0,831.0 L866.5,847.6 L867.8,829.9 L869.2,831.0 L870.6,830.7 L871.9,829.4 L873.3,829.8 L874.7,830.5 L876.0,829.1 L877.3,828.4 L878.6,829.4 L880.0,827.5 L881.3,827.8 L882.6,827.0 L883.9,826.5 L885.2,825.4 L886.5,826.2 L887.8,824.4 L889.1,825.2 L890.4,823.6 L891.7,823.8 L893.0,823.6 L894.4,822.8 L895.8,822.9 L897.1,824.3 L898.5,823.8 L899.9,823.0 L901.1,822.6 L902.4,824.0 L903.6,822.5 L904.9,823.0 L906.1,824.1 L907.4,823.6 L908.6,822.5 L909.9,824.5 L911.1,822.9 L912.4,823.0 L913.6,823.6 L914.9,824.4 L916.2,823.7 L917.5,823.9 L918.9,823.6 L920.2,823.9 L921.5,825.2 L922.8,825.3 L925.1,827.6 L926.6,826.1 L928.2,825.9 L929.7,824.7 L931.0,825.3 L932.2,826.3 L933.5,828.3 L934.8,828.2 L936.1,826.6 L937.3,825.3 L938.6,823.6 L939.7,883.1 L940.8,825.3 L941.8,894.0 L942.5,825.9" fill="none" stroke="#2080ce" stroke-width="1.3" stroke-linejoin="round"/>
<path d="M955.1,827.4 L969.0,827.4 L970.4,925.5 L971.9,827.4 L998.2,827.4 L1000.0,845.9 L1001.7,864.8 L1003.4,845.3 L1022.9,845.3 L1024.6,863.7 L1026.3,845.3 L1028.0,914.6 L1029.5,845.3 L1031.4,919.8 L1033.2,845.3 L1040.6,845.3 L1042.1,826.5 L1054.3,826.5 L1055.5,899.2 L1057.0,825.5 L1074.4,825.5 L1076.2,912.3 L1077.8,825.3 L1079.0,825.3 L1080.7,842.5 L1083.0,843.1 L1084.5,861.4 L1085.8,842.5 L1101.9,841.9 L1125.9,840.2 L1127.1,822.4 L1156.6,822.4 L1157.7,896.3 L1158.8,823.0 L1159.8,907.2 L1160.5,823.0 L1160.5,926 L955.1,926 Z" fill="#1a2d42" stroke="none"/><path d="M955.1,827.4 L969.0,827.4 L970.4,925.5 L971.9,827.4 L998.2,827.4 L1000.0,845.9 L1001.7,864.8 L1003.4,845.3 L1022.9,845.3 L1024.6,863.7 L1026.3,845.3 L1028.0,914.6 L1029.5,845.3 L1031.4,919.8 L1033.2,845.3 L1040.6,845.3 L1042.1,826.5 L1054.3,826.5 L1055.5,899.2 L1057.0,825.5 L1074.4,825.5 L1076.2,912.3 L1077.8,825.3 L1079.0,825.3 L1080.7,842.5 L1083.0,843.1 L1084.5,861.4 L1085.8,842.5 L1101.9,841.9 L1125.9,840.2 L1127.1,822.4 L1156.6,822.4 L1157.7,896.3 L1158.8,823.0 L1159.8,907.2 L1160.5,823.0" fill="none" stroke="#2080ce" stroke-width="1.3" stroke-linejoin="round"/>
<path d="M1173.3,827.4 L1187.2,827.4 L1188.6,925.5 L1190.1,827.4 L1216.4,827.4 L1218.2,845.9 L1219.9,864.8 L1221.6,845.3 L1241.1,845.3 L1242.8,863.7 L1244.5,845.3 L1246.2,914.6 L1247.7,845.3 L1249.6,919.8 L1251.4,845.3 L1258.8,845.3 L1260.3,826.5 L1272.5,826.5 L1273.7,899.2 L1275.2,825.5 L1292.6,825.5 L1294.4,912.3 L1296.0,825.3 L1297.2,825.3 L1298.9,842.5 L1301.2,843.1 L1302.7,861.4 L1304.0,842.5 L1320.1,841.9 L1344.1,840.2 L1345.3,822.4 L1374.8,822.4 L1375.9,896.3 L1377.0,823.0 L1378.0,907.2 L1378.7,823.0 L1378.7,926 L1173.3,926 Z" fill="#1a2d42" stroke="none"/><path d="M1173.3,827.4 L1187.2,827.4 L1188.6,925.5 L1190.1,827.4 L1216.4,827.4 L1218.2,845.9 L1219.9,864.8 L1221.6,845.3 L1241.1,845.3 L1242.8,863.7 L1244.5,845.3 L1246.2,914.6 L1247.7,845.3 L1249.6,919.8 L1251.4,845.3 L1258.8,845.3 L1260.3,826.5 L1272.5,826.5 L1273.7,899.2 L1275.2,825.5 L1292.6,825.5 L1294.4,912.3 L1296.0,825.3 L1297.2,825.3 L1298.9,842.5 L1301.2,843.1 L1302.7,861.4 L1304.0,842.5 L1320.1,841.9 L1344.1,840.2 L1345.3,822.4 L1374.8,822.4 L1375.9,896.3 L1377.0,823.0 L1378.0,907.2 L1378.7,823.0" fill="none" stroke="#2080ce" stroke-width="1.3" stroke-linejoin="round"/>
<path d="M1390.5,926.5 L1597,926.5" stroke="#1f5a8e" stroke-width="1" fill="none"/>
<path d="M1609.9,851.6 L1611.3,846.8 L1612.7,842.5 L1615.0,851.6 L1616.5,850.7 L1617.9,849.4 L1620.2,862.5 L1621.9,861.9 L1623.6,860.8 L1624.7,855.1 L1625.9,872.3 L1627.0,834.5 L1628.2,864.2 L1629.9,866.5 L1631.4,872.7 L1633.0,877.6 L1634.5,883.7 L1636.2,875.1 L1637.9,880.3 L1639.7,882.3 L1641.4,884.9 L1643.6,894.0 L1645.9,887.7 L1647.2,886.3 L1648.6,885.5 L1649.9,884.9 L1651.1,889.4 L1653.4,878.0 L1654.8,879.4 L1656.2,880.3 L1657.7,869.0 L1659.1,858.5 L1660.8,867.7 L1662.2,864.6 L1663.7,861.4 L1665.0,866.8 L1666.4,872.6 L1667.7,878.6 L1669.4,868.8 L1671.7,884.9 L1673.4,879.7 L1675.1,884.9 L1676.3,866.5 L1678.0,884.9 L1679.7,892.9 L1682.0,883.7 L1683.1,911.2 L1685.4,892.9 L1686.6,908.9 L1688.3,894.0 L1689.4,903.2 L1691.7,893.4 L1693.2,894.2 L1694.6,895.2 L1696.3,902.8 L1698.0,909.5 L1700.3,904.3 L1701.8,907.3 L1703.2,910.0 L1704.9,904.9 L1706.3,909.2 L1707.8,914.6 L1708.9,907.8 L1710.6,918.6 L1712.3,912.6 L1714.1,907.2 L1715.8,910.0 L1717.2,913.0 L1718.6,916.9 L1720.0,911.6 L1721.5,905.5 L1723.2,908.4 L1724.9,910.6 L1726.2,906.1 L1727.5,901.2 L1728.8,896.3 L1730.1,891.1 L1731.8,891.4 L1733.5,890.6 L1735.8,906.0 L1737.1,905.8 L1738.5,904.6 L1739.8,904.3 L1741.3,904.7 L1742.9,904.3 L1744.4,904.3 L1745.8,900.3 L1747.3,895.7 L1749.0,894.9 L1750.7,894.0 L1752.4,906.0 L1753.8,902.2 L1755.3,898.6 L1757.6,914.6 L1759.0,915.3 L1760.4,916.3 L1761.8,914.0 L1763.3,911.8 L1765.0,917.0 L1766.7,922.6 L1769.0,918.6 L1770.7,923.2 L1772.5,917.5 L1774.8,924.4 L1776.2,920.8 L1777.6,918.1 L1779.3,922.1 L1780.6,920.0 L1782.0,917.5 L1783.3,914.6 L1785.0,914.6 L1786.8,913.5 L1789.1,919.8 L1790.5,920.3 L1791.9,920.4 L1793.6,912.3 L1795.4,914.6 L1797.7,904.9 L1798.8,918.1 L1800.5,912.7 L1802.2,907.2 L1804.0,912.9 L1805.6,907.2 L1807.2,900.9 L1808.5,906.2 L1809.7,912.3 L1811.4,914.1 L1812.5,924.9 L1814.0,910.0 L1814.8,918.1 L1814.8,926 L1609.9,926 Z" fill="#1a2d42" stroke="none"/><path d="M1609.9,851.6 L1611.3,846.8 L1612.7,842.5 L1615.0,851.6 L1616.5,850.7 L1617.9,849.4 L1620.2,862.5 L1621.9,861.9 L1623.6,860.8 L1624.7,855.1 L1625.9,872.3 L1627.0,834.5 L1628.2,864.2 L1629.9,866.5 L1631.4,872.7 L1633.0,877.6 L1634.5,883.7 L1636.2,875.1 L1637.9,880.3 L1639.7,882.3 L1641.4,884.9 L1643.6,894.0 L1645.9,887.7 L1647.2,886.3 L1648.6,885.5 L1649.9,884.9 L1651.1,889.4 L1653.4,878.0 L1654.8,879.4 L1656.2,880.3 L1657.7,869.0 L1659.1,858.5 L1660.8,867.7 L1662.2,864.6 L1663.7,861.4 L1665.0,866.8 L1666.4,872.6 L1667.7,878.6 L1669.4,868.8 L1671.7,884.9 L1673.4,879.7 L1675.1,884.9 L1676.3,866.5 L1678.0,884.9 L1679.7,892.9 L1682.0,883.7 L1683.1,911.2 L1685.4,892.9 L1686.6,908.9 L1688.3,894.0 L1689.4,903.2 L1691.7,893.4 L1693.2,894.2 L1694.6,895.2 L1696.3,902.8 L1698.0,909.5 L1700.3,904.3 L1701.8,907.3 L1703.2,910.0 L1704.9,904.9 L1706.3,909.2 L1707.8,914.6 L1708.9,907.8 L1710.6,918.6 L1712.3,912.6 L1714.1,907.2 L1715.8,910.0 L1717.2,913.0 L1718.6,916.9 L1720.0,911.6 L1721.5,905.5 L1723.2,908.4 L1724.9,910.6 L1726.2,906.1 L1727.5,901.2 L1728.8,896.3 L1730.1,891.1 L1731.8,891.4 L1733.5,890.6 L1735.8,906.0 L1737.1,905.8 L1738.5,904.6 L1739.8,904.3 L1741.3,904.7 L1742.9,904.3 L1744.4,904.3 L1745.8,900.3 L1747.3,895.7 L1749.0,894.9 L1750.7,894.0 L1752.4,906.0 L1753.8,902.2 L1755.3,898.6 L1757.6,914.6 L1759.0,915.3 L1760.4,916.3 L1761.8,914.0 L1763.3,911.8 L1765.0,917.0 L1766.7,922.6 L1769.0,918.6 L1770.7,923.2 L1772.5,917.5 L1774.8,924.4 L1776.2,920.8 L1777.6,918.1 L1779.3,922.1 L1780.6,920.0 L1782.0,917.5 L1783.3,914.6 L1785.0,914.6 L1786.8,913.5 L1789.1,919.8 L1790.5,920.3 L1791.9,920.4 L1793.6,912.3 L1795.4,914.6 L1797.7,904.9 L1798.8,918.1 L1800.5,912.7 L1802.2,907.2 L1804.0,912.9 L1805.6,907.2 L1807.2,900.9 L1808.5,906.2 L1809.7,912.3 L1811.4,914.1 L1812.5,924.9 L1814.0,910.0 L1814.8,918.1" fill="none" stroke="#2080ce" stroke-width="1.3" stroke-linejoin="round"/>
</svg>
<div class="t" style="left:138.95px;top:191.00px;font-size:17.5px;color:#ccccdc;letter-spacing:0.291px;-webkit-text-stroke:0.5px #ccccdc;">Total online</div>
<div class="t v" style="left:92.53px;top:281.00px;font-size:59.88px;color:#d0d0e0;letter-spacing:3.926px;-webkit-text-stroke:2.32px #d0d0e0;text-shadow:0 0 2px #15181c;transform:scaleX(0.92);transform-origin:91.11px 50%;">32303</div>
<div class="t" style="left:345.60px;top:191.00px;font-size:17.5px;color:#ccccdc;letter-spacing:0.252px;-webkit-text-stroke:0.5px #ccccdc;">Primary online</div>
<div class="t v" style="left:311.53px;top:281.00px;font-size:59.88px;color:#d0d0e0;letter-spacing:3.926px;-webkit-text-stroke:2.32px #d0d0e0;text-shadow:0 0 2px #15181c;transform:scaleX(0.92);transform-origin:91.11px 50%;">32303</div>
<div class="t" style="left:552.31px;top:191.00px;font-size:17.5px;color:#ccccdc;letter-spacing:0.073px;-webkit-text-stroke:0.5px #ccccdc;">Secondary online</div>
<div class="t v" style="left:598.98px;top:273.00px;font-size:73.62px;color:#d0d0e0;letter-spacing:4.825px;-webkit-text-stroke:2.85px #d0d0e0;text-shadow:0 0 2px #15181c;transform:scaleX(0.92);transform-origin:20.47px 50%;">0</div>
<div class="t" style="left:784.30px;top:191.00px;font-size:17.5px;color:#ccccdc;letter-spacing:0.034px;-webkit-text-stroke:0.5px #ccccdc;">Dead streams</div>
<div class="t v" style="left:749.31px;top:273.00px;font-size:73.62px;color:#d0d0e0;letter-spacing:4.825px;-webkit-text-stroke:2.85px #d0d0e0;text-shadow:0 0 2px #15181c;transform:scaleX(0.92);transform-origin:89.14px 50%;">1768</div>
<div class="t" style="left:1020.50px;top:191.00px;font-size:17.5px;color:#ccccdc;letter-spacing:0.082px;-webkit-text-stroke:0.5px #ccccdc;">Watchers</div>
<div class="t v" style="left:966.81px;top:273.00px;font-size:73.62px;color:#d0d0e0;letter-spacing:4.825px;-webkit-text-stroke:2.85px #d0d0e0;text-shadow:0 0 2px #15181c;transform:scaleX(0.92);transform-origin:89.14px 50%;">2278</div>
<div class="t" style="left:131.75px;top:429.00px;font-size:17.5px;color:#ccccdc;letter-spacing:0.202px;-webkit-text-stroke:0.5px #ccccdc;">Total streams</div>
<div class="t v" style="left:92.53px;top:518.00px;font-size:59.88px;color:#d0d0e0;letter-spacing:3.926px;-webkit-text-stroke:2.32px #d0d0e0;text-shadow:0 0 2px #15181c;transform:scaleX(0.92);transform-origin:91.11px 50%;">68187</div>
<div class="t" style="left:352.05px;top:429.00px;font-size:17.5px;color:#ccccdc;letter-spacing:0.147px;-webkit-text-stroke:0.5px #ccccdc;">Total primary</div>
<div class="t v" style="left:311.53px;top:518.00px;font-size:59.88px;color:#d0d0e0;letter-spacing:3.926px;-webkit-text-stroke:2.32px #d0d0e0;text-shadow:0 0 2px #15181c;transform:scaleX(0.92);transform-origin:91.11px 50%;">34071</div>
<div class="t" style="left:558.65px;top:429.00px;font-size:17.5px;color:#ccccdc;letter-spacing:0.069px;-webkit-text-stroke:0.5px #ccccdc;">Total secondary</div>
<div class="t v" style="left:528.53px;top:518.00px;font-size:59.88px;color:#d0d0e0;letter-spacing:3.926px;-webkit-text-stroke:2.32px #d0d0e0;text-shadow:0 0 2px #15181c;transform:scaleX(0.92);transform-origin:91.11px 50%;">34106</div>
<div class="t" style="left:787.70px;top:429.00px;font-size:17.5px;color:#ccccdc;letter-spacing:-0.192px;-webkit-text-stroke:0.5px #ccccdc;">DVR streams</div>
<div class="t v" style="left:747.53px;top:518.00px;font-size:59.88px;color:#d0d0e0;letter-spacing:3.926px;-webkit-text-stroke:2.32px #d0d0e0;text-shadow:0 0 2px #15181c;transform:scaleX(0.92);transform-origin:91.11px 50%;">17609</div>
<div class="t" style="left:126.35px;top:714.00px;font-size:17.5px;color:#ccccdc;letter-spacing:0.131px;-webkit-text-stroke:0.5px #ccccdc;">Total Watchers</div>
<div class="t v" style="left:92.53px;top:803.00px;font-size:59.88px;color:#d0d0e0;letter-spacing:3.926px;-webkit-text-stroke:2.32px #d0d0e0;text-shadow:0 0 2px #15181c;transform:scaleX(0.92);transform-origin:91.11px 50%;">14831</div>
<div class="t" style="left:324.65px;top:714.00px;font-size:17.5px;color:#ccccdc;letter-spacing:0.176px;-webkit-text-stroke:0.5px #ccccdc;">Total System clients</div>
<div class="t v" style="left:318.46px;top:787px;font-size:91.28px;color:#d0d0e0;letter-spacing:7.0px;-webkit-text-stroke:2.9px #d0d0e0;transform:scaleX(0.975);transform-origin:85.59px 50%;">N/A</div>
<div class="t" style="left:567.55px;top:714.00px;font-size:17.5px;color:#ccccdc;letter-spacing:0.194px;-webkit-text-stroke:0.5px #ccccdc;">Total streams</div>
<div class="t v" style="left:528.05px;top:807.00px;font-size:50.06px;color:#d0d0e0;letter-spacing:3.283px;-webkit-text-stroke:1.94px #d0d0e0;text-shadow:0 0 2px #15181c;transform:scaleX(0.92);transform-origin:91.74px 50%;">441492</div>
<div class="t" style="left:760.35px;top:714.00px;font-size:17.5px;color:#ccccdc;letter-spacing:0.174px;-webkit-text-stroke:0.5px #ccccdc;">Total online streams</div>
<div class="t v" style="left:747.05px;top:807.00px;font-size:50.06px;color:#d0d0e0;letter-spacing:3.283px;-webkit-text-stroke:1.94px #d0d0e0;text-shadow:0 0 2px #15181c;transform:scaleX(0.92);transform-origin:91.74px 50%;">208488</div>
<div class="t" style="left:977.85px;top:714.00px;font-size:17.5px;color:#ccccdc;letter-spacing:-0.023px;-webkit-text-stroke:0.5px #ccccdc;">Total primary stre…</div>
<div class="t v" style="left:964.55px;top:807.00px;font-size:50.06px;color:#d0d0e0;letter-spacing:3.283px;-webkit-text-stroke:1.94px #d0d0e0;text-shadow:0 0 2px #15181c;transform:scaleX(0.92);transform-origin:91.74px 50%;">219549</div>
<div class="t" style="left:1203.55px;top:714.00px;font-size:17.5px;color:#ccccdc;letter-spacing:-0.075px;-webkit-text-stroke:0.5px #ccccdc;">Total DVR streams</div>
<div class="t v" style="left:1183.05px;top:807.00px;font-size:50.06px;color:#d0d0e0;letter-spacing:3.283px;-webkit-text-stroke:1.94px #d0d0e0;text-shadow:0 0 2px #15181c;transform:scaleX(0.92);transform-origin:91.74px 50%;">111663</div>
<div class="t" style="left:1413.55px;top:714.00px;font-size:17.5px;color:#ccccdc;letter-spacing:-0.206px;-webkit-text-stroke:0.5px #ccccdc;">Total DVR+replicat…</div>
<div class="t v" style="left:1471.98px;top:796.00px;font-size:73.62px;color:#d0d0e0;letter-spacing:4.825px;-webkit-text-stroke:2.85px #d0d0e0;text-shadow:0 0 2px #15181c;transform:scaleX(0.92);transform-origin:20.47px 50%;">0</div>
<div class="t" style="left:1637.75px;top:714.00px;font-size:17.5px;color:#ccccdc;letter-spacing:0.076px;-webkit-text-stroke:0.5px #ccccdc;">Total dead streams</div>
<div class="t v" style="left:1620.03px;top:803.00px;font-size:59.88px;color:#d0d0e0;letter-spacing:3.926px;-webkit-text-stroke:2.32px #d0d0e0;text-shadow:0 0 2px #15181c;transform:scaleX(0.92);transform-origin:91.11px 50%;">11067</div>
<div class="t" style="left:475.25px;top:951.00px;font-size:17.5px;color:#ccccdc;letter-spacing:0.363px;-webkit-text-stroke:0.5px #ccccdc;">Traffic IN</div>
<div class="t" style="left:1337.73px;top:951.00px;font-size:17.5px;color:#ccccdc;letter-spacing:0.311px;-webkit-text-stroke:0.5px #ccccdc;">Traffic OUT</div>
<div class="t" style="left:474.90px;top:1236.00px;font-size:17.5px;color:#ccccdc;letter-spacing:0.082px;-webkit-text-stroke:0.5px #ccccdc;">Watchers</div>
<div class="t" style="left:1325.71px;top:1236.00px;font-size:17.5px;color:#ccccdc;letter-spacing:0.232px;-webkit-text-stroke:0.5px #ccccdc;">System clients</div>
<svg width="1834" height="1294" viewBox="0 0 1834 1294">
<path d="M144,1000.5 L570,1000.5" stroke="#34373d" stroke-width="1.25"/>
<path d="M144,1043.5 L570,1043.5" stroke="#34373d" stroke-width="1.25"/>
<path d="M144,1087 L570,1087" stroke="#34373d" stroke-width="1.25"/>
<path d="M144,1130 L570,1130" stroke="#34373d" stroke-width="1.25"/>
<path d="M144,1173.5 L570,1173.5" stroke="#34373d" stroke-width="1.25"/>
<path d="M278,1000.5 L278,1173.5" stroke="#34373d" stroke-width="1.25"/>
<path d="M419.5,1000.5 L419.5,1173.5" stroke="#34373d" stroke-width="1.25"/>
<path d="M561.5,1000.5 L561.5,1173.5" stroke="#34373d" stroke-width="1.25"/>
<path d="M145.0,1031.8 L147.4,1032.2 L149.7,1032.2 L152.1,1030.7 L154.5,1033.0 L156.8,1034.7 L159.2,1032.2 L161.6,1031.8 L163.9,1031.6 L166.3,1032.1 L168.7,1032.6 L171.1,1032.5 L173.4,1032.0 L175.8,1030.8 L178.2,1032.7 L180.5,1032.7 L182.9,1034.1 L185.3,1034.0 L187.6,1030.9 L190.0,1031.8 L192.4,1032.5 L194.7,1033.3 L197.1,1031.1 L199.5,1029.7 L201.8,1031.7 L204.2,1031.7 L206.6,1030.4 L209.0,1030.5 L211.3,1033.2 L213.7,1033.7 L216.1,1032.8 L218.4,1033.7 L220.8,1031.6 L223.2,1032.1 L225.5,1034.1 L227.9,1033.3 L230.3,1034.1 L232.6,1034.1 L235.0,1034.2 L237.4,1033.5 L239.7,1031.7 L242.1,1031.7 L244.5,1032.0 L246.9,1031.6 L249.2,1031.8 L251.6,1031.4 L254.0,1032.1 L256.3,1030.5 L258.7,1032.2 L261.1,1031.2 L263.4,1031.5 L265.8,1030.9 L268.2,1030.1 L270.5,1031.9 L272.9,1032.4 L275.3,1032.4 L277.6,1032.1 L280.0,1032.5 L282.4,1034.4 L284.8,1030.3 L287.1,1032.2 L289.5,1032.9 L291.9,1032.9 L294.2,1034.0 L296.6,1032.2 L299.0,1032.6 L301.3,1031.0 L303.7,1031.3 L306.1,1031.6 L308.4,1030.9 L310.8,1029.3 L313.2,1031.7 L315.5,1032.2 L317.9,1030.3 L320.3,1033.1 L322.7,1030.5 L325.0,1032.0 L327.4,1031.4 L329.8,1031.4 L332.1,1030.1 L334.5,1031.2 L336.9,1029.9 L339.2,1030.1 L341.6,1031.7 L344.0,1030.8 L346.3,1027.5 L348.7,1030.7 L351.1,1031.2 L353.4,1030.8 L355.8,1031.0 L358.2,1032.6 L360.6,1033.1 L362.9,1032.2 L365.3,1031.4 L367.7,1033.9 L370.0,1029.6 L372.4,1033.6 L374.8,1032.4 L377.1,1031.5 L379.5,1031.4 L381.9,1031.5 L384.2,1032.9 L386.6,1032.5 L389.0,1031.7 L391.3,1031.6 L393.7,1031.7 L396.1,1032.3 L398.5,1031.0 L400.8,1028.9 L403.2,1031.0 L405.6,1031.1 L407.9,1029.8 L410.3,1029.6 L412.7,1028.4 L415.0,1029.6 L417.4,1031.2 L419.8,1032.0 L422.1,1032.4 L424.5,1030.3 L426.9,1029.2 L429.2,1032.2 L431.6,1031.7 L434.0,1031.1 L436.4,1030.9 L438.7,1030.9 L441.1,1030.7 L443.5,1028.7 L445.8,1031.1 L448.2,1030.4 L450.6,1031.5 L452.9,1028.9 L455.3,1029.4 L457.7,1029.9 L460.0,1030.6 L462.4,1031.1 L464.8,1030.7 L467.1,1030.6 L469.5,1032.4 L471.9,1030.3 L474.3,1029.6 L476.6,1031.1 L479.0,1031.0 L481.4,1029.9 L483.7,1022.0 L486.1,1030.4 L488.5,1029.2 L490.8,1030.2 L493.2,1031.1 L495.6,1032.0 L497.9,1027.6 L500.3,1030.3 L502.7,1031.3 L505.0,1031.2 L507.4,1030.7 L509.8,1030.3 L512.2,1029.4 L514.5,1030.7 L516.9,1030.9 L519.3,1030.4 L521.6,1029.9 L524.0,1030.7 L526.4,1031.0 L528.7,1028.7 L531.1,1031.0 L533.5,1029.7 L535.8,1029.7 L538.2,1030.4 L540.6,1030.9 L542.9,1028.7 L545.3,1027.9 L547.7,1030.6 L550.1,1030.8 L552.4,1029.9 L554.8,1032.0 L557.2,1030.5 L559.5,1029.7 L561.9,1031.0 L564.3,1029.9 L566.6,1031.7 L569.0,1030.2 L569.0,1173.5 L145.0,1173.5 Z" fill="#7EB26D" fill-opacity="0.1" stroke="none"/>
<path d="M145.0,1031.8 L147.4,1032.2 L149.7,1032.2 L152.1,1030.7 L154.5,1033.0 L156.8,1034.7 L159.2,1032.2 L161.6,1031.8 L163.9,1031.6 L166.3,1032.1 L168.7,1032.6 L171.1,1032.5 L173.4,1032.0 L175.8,1030.8 L178.2,1032.7 L180.5,1032.7 L182.9,1034.1 L185.3,1034.0 L187.6,1030.9 L190.0,1031.8 L192.4,1032.5 L194.7,1033.3 L197.1,1031.1 L199.5,1029.7 L201.8,1031.7 L204.2,1031.7 L206.6,1030.4 L209.0,1030.5 L211.3,1033.2 L213.7,1033.7 L216.1,1032.8 L218.4,1033.7 L220.8,1031.6 L223.2,1032.1 L225.5,1034.1 L227.9,1033.3 L230.3,1034.1 L232.6,1034.1 L235.0,1034.2 L237.4,1033.5 L239.7,1031.7 L242.1,1031.7 L244.5,1032.0 L246.9,1031.6 L249.2,1031.8 L251.6,1031.4 L254.0,1032.1 L256.3,1030.5 L258.7,1032.2 L261.1,1031.2 L263.4,1031.5 L265.8,1030.9 L268.2,1030.1 L270.5,1031.9 L272.9,1032.4 L275.3,1032.4 L277.6,1032.1 L280.0,1032.5 L282.4,1034.4 L284.8,1030.3 L287.1,1032.2 L289.5,1032.9 L291.9,1032.9 L294.2,1034.0 L296.6,1032.2 L299.0,1032.6 L301.3,1031.0 L303.7,1031.3 L306.1,1031.6 L308.4,1030.9 L310.8,1029.3 L313.2,1031.7 L315.5,1032.2 L317.9,1030.3 L320.3,1033.1 L322.7,1030.5 L325.0,1032.0 L327.4,1031.4 L329.8,1031.4 L332.1,1030.1 L334.5,1031.2 L336.9,1029.9 L339.2,1030.1 L341.6,1031.7 L344.0,1030.8 L346.3,1027.5 L348.7,1030.7 L351.1,1031.2 L353.4,1030.8 L355.8,1031.0 L358.2,1032.6 L360.6,1033.1 L362.9,1032.2 L365.3,1031.4 L367.7,1033.9 L370.0,1029.6 L372.4,1033.6 L374.8,1032.4 L377.1,1031.5 L379.5,1031.4 L381.9,1031.5 L384.2,1032.9 L386.6,1032.5 L389.0,1031.7 L391.3,1031.6 L393.7,1031.7 L396.1,1032.3 L398.5,1031.0 L400.8,1028.9 L403.2,1031.0 L405.6,1031.1 L407.9,1029.8 L410.3,1029.6 L412.7,1028.4 L415.0,1029.6 L417.4,1031.2 L419.8,1032.0 L422.1,1032.4 L424.5,1030.3 L426.9,1029.2 L429.2,1032.2 L431.6,1031.7 L434.0,1031.1 L436.4,1030.9 L438.7,1030.9 L441.1,1030.7 L443.5,1028.7 L445.8,1031.1 L448.2,1030.4 L450.6,1031.5 L452.9,1028.9 L455.3,1029.4 L457.7,1029.9 L460.0,1030.6 L462.4,1031.1 L464.8,1030.7 L467.1,1030.6 L469.5,1032.4 L471.9,1030.3 L474.3,1029.6 L476.6,1031.1 L479.0,1031.0 L481.4,1029.9 L483.7,1022.0 L486.1,1030.4 L488.5,1029.2 L490.8,1030.2 L493.2,1031.1 L495.6,1032.0 L497.9,1027.6 L500.3,1030.3 L502.7,1031.3 L505.0,1031.2 L507.4,1030.7 L509.8,1030.3 L512.2,1029.4 L514.5,1030.7 L516.9,1030.9 L519.3,1030.4 L521.6,1029.9 L524.0,1030.7 L526.4,1031.0 L528.7,1028.7 L531.1,1031.0 L533.5,1029.7 L535.8,1029.7 L538.2,1030.4 L540.6,1030.9 L542.9,1028.7 L545.3,1027.9 L547.7,1030.6 L550.1,1030.8 L552.4,1029.9 L554.8,1032.0 L557.2,1030.5 L559.5,1029.7 L561.9,1031.0 L564.3,1029.9 L566.6,1031.7 L569.0,1030.2" fill="none" stroke="#7EB26D" stroke-width="1.25" stroke-linejoin="round"/>
<path d="M145.0,1039.3 L147.4,1039.7 L149.7,1040.5 L152.1,1039.4 L154.5,1039.1 L156.8,1040.1 L159.2,1039.4 L161.6,1038.5 L163.9,1040.1 L166.3,1039.4 L168.7,1039.6 L171.1,1037.2 L173.4,1040.9 L175.8,1039.2 L178.2,1039.8 L180.5,1039.8 L182.9,1037.6 L185.3,1039.0 L187.6,1036.9 L190.0,1039.2 L192.4,1039.1 L194.7,1039.9 L197.1,1040.4 L199.5,1039.7 L201.8,1039.8 L204.2,1039.4 L206.6,1041.7 L209.0,1037.9 L211.3,1039.2 L213.7,1037.4 L216.1,1039.9 L218.4,1039.2 L220.8,1035.9 L223.2,1039.3 L225.5,1040.9 L227.9,1040.4 L230.3,1039.1 L232.6,1038.5 L235.0,1037.7 L237.4,1039.1 L239.7,1041.0 L242.1,1040.2 L244.5,1038.2 L246.9,1038.4 L249.2,1041.1 L251.6,1039.8 L254.0,1037.9 L256.3,1036.5 L258.7,1037.8 L261.1,1038.4 L263.4,1040.3 L265.8,1040.4 L268.2,1039.5 L270.5,1038.7 L272.9,1038.3 L275.3,1039.4 L277.6,1040.4 L280.0,1040.3 L282.4,1040.7 L284.8,1038.8 L287.1,1041.5 L289.5,1040.1 L291.9,1038.9 L294.2,1037.3 L296.6,1038.4 L299.0,1037.7 L301.3,1039.0 L303.7,1039.8 L306.1,1039.9 L308.4,1037.6 L310.8,1037.4 L313.2,1037.9 L315.5,1035.0 L317.9,1037.7 L320.3,1037.9 L322.7,1038.2 L325.0,1038.9 L327.4,1036.3 L329.8,1036.4 L332.1,1039.6 L334.5,1039.5 L336.9,1038.5 L339.2,1037.8 L341.6,1039.9 L344.0,1041.5 L346.3,1041.6 L348.7,1039.7 L351.1,1039.1 L353.4,1038.4 L355.8,1039.4 L358.2,1040.2 L360.6,1041.3 L362.9,1039.1 L365.3,1038.4 L367.7,1037.5 L370.0,1037.4 L372.4,1038.4 L374.8,1037.1 L377.1,1038.3 L379.5,1039.2 L381.9,1039.3 L384.2,1039.4 L386.6,1041.1 L389.0,1039.1 L391.3,1038.4 L393.7,1038.9 L396.1,1039.4 L398.5,1038.3 L400.8,1036.6 L403.2,1037.8 L405.6,1038.8 L407.9,1039.2 L410.3,1038.7 L412.7,1039.9 L415.0,1039.0 L417.4,1038.5 L419.8,1036.4 L422.1,1036.7 L424.5,1036.7 L426.9,1038.6 L429.2,1037.7 L431.6,1039.3 L434.0,1038.3 L436.4,1037.8 L438.7,1039.0 L441.1,1036.3 L443.5,1037.0 L445.8,1039.9 L448.2,1038.1 L450.6,1038.6 L452.9,1038.3 L455.3,1037.7 L457.7,1037.6 L460.0,1040.2 L462.4,1040.0 L464.8,1037.9 L467.1,1036.6 L469.5,1035.6 L471.9,1035.4 L474.3,1039.5 L476.6,1037.7 L479.0,1040.0 L481.4,1036.9 L483.7,1037.4 L486.1,1039.1 L488.5,1036.2 L490.8,1036.7 L493.2,1039.7 L495.6,1038.2 L497.9,1038.8 L500.3,1038.1 L502.7,1038.5 L505.0,1036.6 L507.4,1039.1 L509.8,1037.9 L512.2,1035.9 L514.5,1038.2 L516.9,1037.7 L519.3,1037.6 L521.6,1038.5 L524.0,1037.3 L526.4,1037.6 L528.7,1038.8 L531.1,1036.2 L533.5,1036.4 L535.8,1037.5 L538.2,1038.4 L540.6,1038.8 L542.9,1036.7 L545.3,1037.6 L547.7,1037.2 L550.1,1037.7 L552.4,1037.0 L554.8,1037.6 L557.2,1036.8 L559.5,1037.6 L561.9,1036.7 L564.3,1036.6 L566.6,1037.4 L569.0,1038.5 L569.0,1173.5 L145.0,1173.5 Z" fill="#EAB839" fill-opacity="0.1" stroke="none"/>
<path d="M145.0,1039.3 L147.4,1039.7 L149.7,1040.5 L152.1,1039.4 L154.5,1039.1 L156.8,1040.1 L159.2,1039.4 L161.6,1038.5 L163.9,1040.1 L166.3,1039.4 L168.7,1039.6 L171.1,1037.2 L173.4,1040.9 L175.8,1039.2 L178.2,1039.8 L180.5,1039.8 L182.9,1037.6 L185.3,1039.0 L187.6,1036.9 L190.0,1039.2 L192.4,1039.1 L194.7,1039.9 L197.1,1040.4 L199.5,1039.7 L201.8,1039.8 L204.2,1039.4 L206.6,1041.7 L209.0,1037.9 L211.3,1039.2 L213.7,1037.4 L216.1,1039.9 L218.4,1039.2 L220.8,1035.9 L223.2,1039.3 L225.5,1040.9 L227.9,1040.4 L230.3,1039.1 L232.6,1038.5 L235.0,1037.7 L237.4,1039.1 L239.7,1041.0 L242.1,1040.2 L244.5,1038.2 L246.9,1038.4 L249.2,1041.1 L251.6,1039.8 L254.0,1037.9 L256.3,1036.5 L258.7,1037.8 L261.1,1038.4 L263.4,1040.3 L265.8,1040.4 L268.2,1039.5 L270.5,1038.7 L272.9,1038.3 L275.3,1039.4 L277.6,1040.4 L280.0,1040.3 L282.4,1040.7 L284.8,1038.8 L287.1,1041.5 L289.5,1040.1 L291.9,1038.9 L294.2,1037.3 L296.6,1038.4 L299.0,1037.7 L301.3,1039.0 L303.7,1039.8 L306.1,1039.9 L308.4,1037.6 L310.8,1037.4 L313.2,1037.9 L315.5,1035.0 L317.9,1037.7 L320.3,1037.9 L322.7,1038.2 L325.0,1038.9 L327.4,1036.3 L329.8,1036.4 L332.1,1039.6 L334.5,1039.5 L336.9,1038.5 L339.2,1037.8 L341.6,1039.9 L344.0,1041.5 L346.3,1041.6 L348.7,1039.7 L351.1,1039.1 L353.4,1038.4 L355.8,1039.4 L358.2,1040.2 L360.6,1041.3 L362.9,1039.1 L365.3,1038.4 L367.7,1037.5 L370.0,1037.4 L372.4,1038.4 L374.8,1037.1 L377.1,1038.3 L379.5,1039.2 L381.9,1039.3 L384.2,1039.4 L386.6,1041.1 L389.0,1039.1 L391.3,1038.4 L393.7,1038.9 L396.1,1039.4 L398.5,1038.3 L400.8,1036.6 L403.2,1037.8 L405.6,1038.8 L407.9,1039.2 L410.3,1038.7 L412.7,1039.9 L415.0,1039.0 L417.4,1038.5 L419.8,1036.4 L422.1,1036.7 L424.5,1036.7 L426.9,1038.6 L429.2,1037.7 L431.6,1039.3 L434.0,1038.3 L436.4,1037.8 L438.7,1039.0 L441.1,1036.3 L443.5,1037.0 L445.8,1039.9 L448.2,1038.1 L450.6,1038.6 L452.9,1038.3 L455.3,1037.7 L457.7,1037.6 L460.0,1040.2 L462.4,1040.0 L464.8,1037.9 L467.1,1036.6 L469.5,1035.6 L471.9,1035.4 L474.3,1039.5 L476.6,1037.7 L479.0,1040.0 L481.4,1036.9 L483.7,1037.4 L486.1,1039.1 L488.5,1036.2 L490.8,1036.7 L493.2,1039.7 L495.6,1038.2 L497.9,1038.8 L500.3,1038.1 L502.7,1038.5 L505.0,1036.6 L507.4,1039.1 L509.8,1037.9 L512.2,1035.9 L514.5,1038.2 L516.9,1037.7 L519.3,1037.6 L521.6,1038.5 L524.0,1037.3 L526.4,1037.6 L528.7,1038.8 L531.1,1036.2 L533.5,1036.4 L535.8,1037.5 L538.2,1038.4 L540.6,1038.8 L542.9,1036.7 L545.3,1037.6 L547.7,1037.2 L550.1,1037.7 L552.4,1037.0 L554.8,1037.6 L557.2,1036.8 L559.5,1037.6 L561.9,1036.7 L564.3,1036.6 L566.6,1037.4 L569.0,1038.5" fill="none" stroke="#EAB839" stroke-width="1.25" stroke-linejoin="round"/>
<path d="M145.0,1035.2 L147.4,1034.5 L149.7,1035.0 L152.1,1034.7 L154.5,1034.3 L156.8,1034.2 L159.2,1032.9 L161.6,1034.3 L163.9,1034.5 L166.3,1035.9 L168.7,1035.1 L171.1,1035.2 L173.4,1032.9 L175.8,1033.0 L178.2,1034.1 L180.5,1033.2 L182.9,1032.7 L185.3,1035.0 L187.6,1034.5 L190.0,1033.2 L192.4,1034.6 L194.7,1033.5 L197.1,1033.9 L199.5,1033.3 L201.8,1035.9 L204.2,1033.2 L206.6,1034.7 L209.0,1036.2 L211.3,1035.2 L213.7,1034.8 L216.1,1034.1 L218.4,1033.9 L220.8,1034.0 L223.2,1032.7 L225.5,1034.8 L227.9,1034.8 L230.3,1035.2 L232.6,1033.9 L235.0,1033.5 L237.4,1032.4 L239.7,1031.7 L242.1,1034.2 L244.5,1033.6 L246.9,1033.2 L249.2,1035.0 L251.6,1034.2 L254.0,1034.8 L256.3,1032.2 L258.7,1033.1 L261.1,1035.0 L263.4,1033.9 L265.8,1032.9 L268.2,1032.5 L270.5,1033.1 L272.9,1035.4 L275.3,1033.7 L277.6,1032.5 L280.0,1032.7 L282.4,1033.7 L284.8,1034.0 L287.1,1034.0 L289.5,1034.8 L291.9,1033.7 L294.2,1031.9 L296.6,1031.1 L299.0,1032.6 L301.3,1033.1 L303.7,1033.8 L306.1,1034.0 L308.4,1033.2 L310.8,1032.0 L313.2,1033.2 L315.5,1032.5 L317.9,1032.8 L320.3,1032.4 L322.7,1034.0 L325.0,1032.9 L327.4,1034.6 L329.8,1032.2 L332.1,1033.0 L334.5,1030.9 L336.9,1033.2 L339.2,1034.5 L341.6,1034.7 L344.0,1035.6 L346.3,1033.9 L348.7,1035.5 L351.1,1034.5 L353.4,1033.5 L355.8,1034.4 L358.2,1033.5 L360.6,1032.4 L362.9,1034.0 L365.3,1034.7 L367.7,1035.0 L370.0,1033.8 L372.4,1033.3 L374.8,1032.6 L377.1,1033.0 L379.5,1032.1 L381.9,1033.3 L384.2,1031.8 L386.6,1032.1 L389.0,1032.0 L391.3,1033.2 L393.7,1034.6 L396.1,1032.3 L398.5,1032.3 L400.8,1033.7 L403.2,1033.4 L405.6,1032.7 L407.9,1031.7 L410.3,1031.3 L412.7,1033.1 L415.0,1033.6 L417.4,1035.0 L419.8,1033.3 L422.1,1033.9 L424.5,1032.1 L426.9,1032.5 L429.2,1032.6 L431.6,1034.8 L434.0,1032.2 L436.4,1032.8 L438.7,1032.7 L441.1,1034.0 L443.5,1033.6 L445.8,1033.4 L448.2,1032.6 L450.6,1031.4 L452.9,1031.3 L455.3,1032.0 L457.7,1032.8 L460.0,1033.6 L462.4,1032.2 L464.8,1031.4 L467.1,1031.1 L469.5,1031.0 L471.9,1031.0 L474.3,1031.8 L476.6,1032.5 L479.0,1032.5 L481.4,1032.8 L483.7,1033.0 L486.1,1032.9 L488.5,1032.5 L490.8,1032.9 L493.2,1032.0 L495.6,1033.1 L497.9,1030.9 L500.3,1033.2 L502.7,1031.3 L505.0,1031.6 L507.4,1032.8 L509.8,1032.2 L512.2,1032.1 L514.5,1036.7 L516.9,1034.7 L519.3,1033.9 L521.6,1031.4 L524.0,1031.7 L526.4,1033.6 L528.7,1032.5 L531.1,1034.9 L533.5,1032.9 L535.8,1032.2 L538.2,1031.8 L540.6,1031.6 L542.9,1032.6 L545.3,1033.5 L547.7,1032.2 L550.1,1030.5 L552.4,1031.5 L554.8,1032.5 L557.2,1033.6 L559.5,1033.6 L561.9,1031.0 L564.3,1030.4 L566.6,1031.0 L569.0,1031.8 L569.0,1173.5 L145.0,1173.5 Z" fill="#6ED0E0" fill-opacity="0.1" stroke="none"/>
<path d="M145.0,1035.2 L147.4,1034.5 L149.7,1035.0 L152.1,1034.7 L154.5,1034.3 L156.8,1034.2 L159.2,1032.9 L161.6,1034.3 L163.9,1034.5 L166.3,1035.9 L168.7,1035.1 L171.1,1035.2 L173.4,1032.9 L175.8,1033.0 L178.2,1034.1 L180.5,1033.2 L182.9,1032.7 L185.3,1035.0 L187.6,1034.5 L190.0,1033.2 L192.4,1034.6 L194.7,1033.5 L197.1,1033.9 L199.5,1033.3 L201.8,1035.9 L204.2,1033.2 L206.6,1034.7 L209.0,1036.2 L211.3,1035.2 L213.7,1034.8 L216.1,1034.1 L218.4,1033.9 L220.8,1034.0 L223.2,1032.7 L225.5,1034.8 L227.9,1034.8 L230.3,1035.2 L232.6,1033.9 L235.0,1033.5 L237.4,1032.4 L239.7,1031.7 L242.1,1034.2 L244.5,1033.6 L246.9,1033.2 L249.2,1035.0 L251.6,1034.2 L254.0,1034.8 L256.3,1032.2 L258.7,1033.1 L261.1,1035.0 L263.4,1033.9 L265.8,1032.9 L268.2,1032.5 L270.5,1033.1 L272.9,1035.4 L275.3,1033.7 L277.6,1032.5 L280.0,1032.7 L282.4,1033.7 L284.8,1034.0 L287.1,1034.0 L289.5,1034.8 L291.9,1033.7 L294.2,1031.9 L296.6,1031.1 L299.0,1032.6 L301.3,1033.1 L303.7,1033.8 L306.1,1034.0 L308.4,1033.2 L310.8,1032.0 L313.2,1033.2 L315.5,1032.5 L317.9,1032.8 L320.3,1032.4 L322.7,1034.0 L325.0,1032.9 L327.4,1034.6 L329.8,1032.2 L332.1,1033.0 L334.5,1030.9 L336.9,1033.2 L339.2,1034.5 L341.6,1034.7 L344.0,1035.6 L346.3,1033.9 L348.7,1035.5 L351.1,1034.5 L353.4,1033.5 L355.8,1034.4 L358.2,1033.5 L360.6,1032.4 L362.9,1034.0 L365.3,1034.7 L367.7,1035.0 L370.0,1033.8 L372.4,1033.3 L374.8,1032.6 L377.1,1033.0 L379.5,1032.1 L381.9,1033.3 L384.2,1031.8 L386.6,1032.1 L389.0,1032.0 L391.3,1033.2 L393.7,1034.6 L396.1,1032.3 L398.5,1032.3 L400.8,1033.7 L403.2,1033.4 L405.6,1032.7 L407.9,1031.7 L410.3,1031.3 L412.7,1033.1 L415.0,1033.6 L417.4,1035.0 L419.8,1033.3 L422.1,1033.9 L424.5,1032.1 L426.9,1032.5 L429.2,1032.6 L431.6,1034.8 L434.0,1032.2 L436.4,1032.8 L438.7,1032.7 L441.1,1034.0 L443.5,1033.6 L445.8,1033.4 L448.2,1032.6 L450.6,1031.4 L452.9,1031.3 L455.3,1032.0 L457.7,1032.8 L460.0,1033.6 L462.4,1032.2 L464.8,1031.4 L467.1,1031.1 L469.5,1031.0 L471.9,1031.0 L474.3,1031.8 L476.6,1032.5 L479.0,1032.5 L481.4,1032.8 L483.7,1033.0 L486.1,1032.9 L488.5,1032.5 L490.8,1032.9 L493.2,1032.0 L495.6,1033.1 L497.9,1030.9 L500.3,1033.2 L502.7,1031.3 L505.0,1031.6 L507.4,1032.8 L509.8,1032.2 L512.2,1032.1 L514.5,1036.7 L516.9,1034.7 L519.3,1033.9 L521.6,1031.4 L524.0,1031.7 L526.4,1033.6 L528.7,1032.5 L531.1,1034.9 L533.5,1032.9 L535.8,1032.2 L538.2,1031.8 L540.6,1031.6 L542.9,1032.6 L545.3,1033.5 L547.7,1032.2 L550.1,1030.5 L552.4,1031.5 L554.8,1032.5 L557.2,1033.6 L559.5,1033.6 L561.9,1031.0 L564.3,1030.4 L566.6,1031.0 L569.0,1031.8" fill="none" stroke="#6ED0E0" stroke-width="1.25" stroke-linejoin="round"/>
<path d="M145.0,1042.5 L147.4,1040.6 L149.7,1040.5 L152.1,1041.7 L154.5,1041.9 L156.8,1042.3 L159.2,1042.5 L161.6,1043.5 L163.9,1040.8 L166.3,1040.4 L168.7,1040.5 L171.1,1042.6 L173.4,1039.8 L175.8,1039.0 L178.2,1040.7 L180.5,1042.4 L182.9,1042.9 L185.3,1041.6 L187.6,1042.7 L190.0,1042.0 L192.4,1040.6 L194.7,1043.0 L197.1,1039.9 L199.5,1039.4 L201.8,1042.3 L204.2,1043.4 L206.6,1042.4 L209.0,1043.0 L211.3,1042.3 L213.7,1044.6 L216.1,1042.7 L218.4,1039.9 L220.8,1042.3 L223.2,1042.0 L225.5,1043.3 L227.9,1041.3 L230.3,1041.7 L232.6,1039.4 L235.0,1040.6 L237.4,1041.6 L239.7,1040.9 L242.1,1041.8 L244.5,1043.0 L246.9,1041.6 L249.2,1041.6 L251.6,1041.3 L254.0,1040.9 L256.3,1041.8 L258.7,1041.0 L261.1,1039.4 L263.4,1041.9 L265.8,1039.6 L268.2,1041.1 L270.5,1042.0 L272.9,1038.9 L275.3,1040.4 L277.6,1039.5 L280.0,1039.8 L282.4,1042.6 L284.8,1041.5 L287.1,1041.9 L289.5,1042.8 L291.9,1043.6 L294.2,1041.8 L296.6,1040.7 L299.0,1040.6 L301.3,1041.3 L303.7,1042.0 L306.1,1042.4 L308.4,1042.1 L310.8,1042.5 L313.2,1041.7 L315.5,1041.3 L317.9,1042.1 L320.3,1041.6 L322.7,1042.0 L325.0,1041.3 L327.4,1040.5 L329.8,1040.7 L332.1,1040.4 L334.5,1042.6 L336.9,1041.8 L339.2,1040.9 L341.6,1040.2 L344.0,1042.4 L346.3,1041.2 L348.7,1039.7 L351.1,1040.7 L353.4,1040.9 L355.8,1040.4 L358.2,1040.4 L360.6,1040.0 L362.9,1040.5 L365.3,1040.5 L367.7,1041.6 L370.0,1041.2 L372.4,1039.5 L374.8,1040.6 L377.1,1040.9 L379.5,1041.3 L381.9,1040.0 L384.2,1041.4 L386.6,1039.9 L389.0,1041.5 L391.3,1042.1 L393.7,1040.9 L396.1,1040.6 L398.5,1040.3 L400.8,1039.4 L403.2,1040.7 L405.6,1040.1 L407.9,1041.4 L410.3,1039.5 L412.7,1039.5 L415.0,1039.7 L417.4,1040.1 L419.8,1041.2 L422.1,1041.1 L424.5,1040.1 L426.9,1040.4 L429.2,1040.3 L431.6,1041.9 L434.0,1040.7 L436.4,1041.3 L438.7,1041.8 L441.1,1041.0 L443.5,1042.6 L445.8,1040.3 L448.2,1039.4 L450.6,1040.1 L452.9,1041.4 L455.3,1041.7 L457.7,1040.9 L460.0,1043.1 L462.4,1041.0 L464.8,1039.8 L467.1,1040.5 L469.5,1040.9 L471.9,1040.2 L474.3,1039.9 L476.6,1038.9 L479.0,1039.8 L481.4,1040.8 L483.7,1040.9 L486.1,1040.2 L488.5,1038.5 L490.8,1040.0 L493.2,1041.2 L495.6,1041.4 L497.9,1042.8 L500.3,1040.6 L502.7,1041.7 L505.0,1041.9 L507.4,1042.8 L509.8,1042.1 L512.2,1040.0 L514.5,1041.5 L516.9,1042.3 L519.3,1040.5 L521.6,1040.5 L524.0,1039.7 L526.4,1039.1 L528.7,1039.7 L531.1,1041.3 L533.5,1040.5 L535.8,1039.6 L538.2,1040.4 L540.6,1041.6 L542.9,1039.2 L545.3,1040.1 L547.7,1040.4 L550.1,1040.0 L552.4,1038.8 L554.8,1039.2 L557.2,1040.0 L559.5,1039.1 L561.9,1037.3 L564.3,1037.5 L566.6,1038.4 L569.0,1040.6 L569.0,1173.5 L145.0,1173.5 Z" fill="#EF843C" fill-opacity="0.1" stroke="none"/>
<path d="M145.0,1042.5 L147.4,1040.6 L149.7,1040.5 L152.1,1041.7 L154.5,1041.9 L156.8,1042.3 L159.2,1042.5 L161.6,1043.5 L163.9,1040.8 L166.3,1040.4 L168.7,1040.5 L171.1,1042.6 L173.4,1039.8 L175.8,1039.0 L178.2,1040.7 L180.5,1042.4 L182.9,1042.9 L185.3,1041.6 L187.6,1042.7 L190.0,1042.0 L192.4,1040.6 L194.7,1043.0 L197.1,1039.9 L199.5,1039.4 L201.8,1042.3 L204.2,1043.4 L206.6,1042.4 L209.0,1043.0 L211.3,1042.3 L213.7,1044.6 L216.1,1042.7 L218.4,1039.9 L220.8,1042.3 L223.2,1042.0 L225.5,1043.3 L227.9,1041.3 L230.3,1041.7 L232.6,1039.4 L235.0,1040.6 L237.4,1041.6 L239.7,1040.9 L242.1,1041.8 L244.5,1043.0 L246.9,1041.6 L249.2,1041.6 L251.6,1041.3 L254.0,1040.9 L256.3,1041.8 L258.7,1041.0 L261.1,1039.4 L263.4,1041.9 L265.8,1039.6 L268.2,1041.1 L270.5,1042.0 L272.9,1038.9 L275.3,1040.4 L277.6,1039.5 L280.0,1039.8 L282.4,1042.6 L284.8,1041.5 L287.1,1041.9 L289.5,1042.8 L291.9,1043.6 L294.2,1041.8 L296.6,1040.7 L299.0,1040.6 L301.3,1041.3 L303.7,1042.0 L306.1,1042.4 L308.4,1042.1 L310.8,1042.5 L313.2,1041.7 L315.5,1041.3 L317.9,1042.1 L320.3,1041.6 L322.7,1042.0 L325.0,1041.3 L327.4,1040.5 L329.8,1040.7 L332.1,1040.4 L334.5,1042.6 L336.9,1041.8 L339.2,1040.9 L341.6,1040.2 L344.0,1042.4 L346.3,1041.2 L348.7,1039.7 L351.1,1040.7 L353.4,1040.9 L355.8,1040.4 L358.2,1040.4 L360.6,1040.0 L362.9,1040.5 L365.3,1040.5 L367.7,1041.6 L370.0,1041.2 L372.4,1039.5 L374.8,1040.6 L377.1,1040.9 L379.5,1041.3 L381.9,1040.0 L384.2,1041.4 L386.6,1039.9 L389.0,1041.5 L391.3,1042.1 L393.7,1040.9 L396.1,1040.6 L398.5,1040.3 L400.8,1039.4 L403.2,1040.7 L405.6,1040.1 L407.9,1041.4 L410.3,1039.5 L412.7,1039.5 L415.0,1039.7 L417.4,1040.1 L419.8,1041.2 L422.1,1041.1 L424.5,1040.1 L426.9,1040.4 L429.2,1040.3 L431.6,1041.9 L434.0,1040.7 L436.4,1041.3 L438.7,1041.8 L441.1,1041.0 L443.5,1042.6 L445.8,1040.3 L448.2,1039.4 L450.6,1040.1 L452.9,1041.4 L455.3,1041.7 L457.7,1040.9 L460.0,1043.1 L462.4,1041.0 L464.8,1039.8 L467.1,1040.5 L469.5,1040.9 L471.9,1040.2 L474.3,1039.9 L476.6,1038.9 L479.0,1039.8 L481.4,1040.8 L483.7,1040.9 L486.1,1040.2 L488.5,1038.5 L490.8,1040.0 L493.2,1041.2 L495.6,1041.4 L497.9,1042.8 L500.3,1040.6 L502.7,1041.7 L505.0,1041.9 L507.4,1042.8 L509.8,1042.1 L512.2,1040.0 L514.5,1041.5 L516.9,1042.3 L519.3,1040.5 L521.6,1040.5 L524.0,1039.7 L526.4,1039.1 L528.7,1039.7 L531.1,1041.3 L533.5,1040.5 L535.8,1039.6 L538.2,1040.4 L540.6,1041.6 L542.9,1039.2 L545.3,1040.1 L547.7,1040.4 L550.1,1040.0 L552.4,1038.8 L554.8,1039.2 L557.2,1040.0 L559.5,1039.1 L561.9,1037.3 L564.3,1037.5 L566.6,1038.4 L569.0,1040.6" fill="none" stroke="#EF843C" stroke-width="1.25" stroke-linejoin="round"/>
<path d="M145.0,1034.7 L147.4,1035.8 L149.7,1036.2 L152.1,1035.9 L154.5,1036.1 L156.8,1037.4 L159.2,1038.0 L161.6,1038.7 L163.9,1036.4 L166.3,1034.9 L168.7,1036.6 L171.1,1037.2 L173.4,1035.6 L175.8,1035.4 L178.2,1036.7 L180.5,1034.9 L182.9,1035.1 L185.3,1036.6 L187.6,1036.5 L190.0,1037.0 L192.4,1034.5 L194.7,1036.2 L197.1,1037.2 L199.5,1036.8 L201.8,1036.6 L204.2,1035.3 L206.6,1034.7 L209.0,1035.8 L211.3,1039.1 L213.7,1037.2 L216.1,1037.1 L218.4,1037.4 L220.8,1037.0 L223.2,1035.9 L225.5,1037.1 L227.9,1034.8 L230.3,1036.8 L232.6,1037.4 L235.0,1035.9 L237.4,1034.5 L239.7,1034.4 L242.1,1035.9 L244.5,1036.0 L246.9,1036.4 L249.2,1034.5 L251.6,1035.6 L254.0,1035.7 L256.3,1035.1 L258.7,1036.8 L261.1,1036.5 L263.4,1033.1 L265.8,1033.0 L268.2,1033.9 L270.5,1035.7 L272.9,1034.2 L275.3,1033.8 L277.6,1036.8 L280.0,1035.9 L282.4,1036.6 L284.8,1035.9 L287.1,1034.1 L289.5,1037.7 L291.9,1036.2 L294.2,1034.4 L296.6,1037.0 L299.0,1034.3 L301.3,1037.4 L303.7,1036.2 L306.1,1035.1 L308.4,1036.0 L310.8,1035.3 L313.2,1036.5 L315.5,1034.6 L317.9,1035.7 L320.3,1035.1 L322.7,1036.1 L325.0,1036.0 L327.4,1034.2 L329.8,1033.8 L332.1,1034.9 L334.5,1034.4 L336.9,1034.0 L339.2,1035.7 L341.6,1034.3 L344.0,1036.1 L346.3,1035.8 L348.7,1035.7 L351.1,1034.8 L353.4,1035.5 L355.8,1036.7 L358.2,1035.4 L360.6,1033.4 L362.9,1032.9 L365.3,1034.0 L367.7,1035.4 L370.0,1037.1 L372.4,1036.9 L374.8,1034.6 L377.1,1033.7 L379.5,1037.4 L381.9,1036.1 L384.2,1035.4 L386.6,1036.6 L389.0,1035.5 L391.3,1033.7 L393.7,1036.2 L396.1,1036.6 L398.5,1035.0 L400.8,1036.7 L403.2,1035.0 L405.6,1036.3 L407.9,1034.5 L410.3,1034.1 L412.7,1033.7 L415.0,1033.6 L417.4,1034.7 L419.8,1035.4 L422.1,1036.5 L424.5,1034.1 L426.9,1036.3 L429.2,1034.6 L431.6,1035.6 L434.0,1035.8 L436.4,1033.5 L438.7,1034.3 L441.1,1036.8 L443.5,1035.0 L445.8,1034.7 L448.2,1036.4 L450.6,1037.0 L452.9,1033.6 L455.3,1034.4 L457.7,1035.1 L460.0,1034.6 L462.4,1036.1 L464.8,1036.7 L467.1,1036.8 L469.5,1034.7 L471.9,1034.4 L474.3,1034.7 L476.6,1034.4 L479.0,1035.4 L481.4,1035.3 L483.7,1034.3 L486.1,1035.9 L488.5,1035.2 L490.8,1034.6 L493.2,1035.2 L495.6,1032.8 L497.9,1032.9 L500.3,1034.6 L502.7,1035.1 L505.0,1034.1 L507.4,1034.7 L509.8,1035.3 L512.2,1034.5 L514.5,1034.4 L516.9,1034.3 L519.3,1033.6 L521.6,1036.3 L524.0,1035.2 L526.4,1035.2 L528.7,1035.5 L531.1,1034.3 L533.5,1035.6 L535.8,1035.5 L538.2,1035.4 L540.6,1034.2 L542.9,1033.9 L545.3,1034.7 L547.7,1035.3 L550.1,1033.7 L552.4,1034.0 L554.8,1032.7 L557.2,1036.8 L559.5,1036.5 L561.9,1035.7 L564.3,1031.8 L566.6,1033.9 L569.0,1034.8 L569.0,1173.5 L145.0,1173.5 Z" fill="#E24D42" fill-opacity="0.1" stroke="none"/>
<path d="M145.0,1034.7 L147.4,1035.8 L149.7,1036.2 L152.1,1035.9 L154.5,1036.1 L156.8,1037.4 L159.2,1038.0 L161.6,1038.7 L163.9,1036.4 L166.3,1034.9 L168.7,1036.6 L171.1,1037.2 L173.4,1035.6 L175.8,1035.4 L178.2,1036.7 L180.5,1034.9 L182.9,1035.1 L185.3,1036.6 L187.6,1036.5 L190.0,1037.0 L192.4,1034.5 L194.7,1036.2 L197.1,1037.2 L199.5,1036.8 L201.8,1036.6 L204.2,1035.3 L206.6,1034.7 L209.0,1035.8 L211.3,1039.1 L213.7,1037.2 L216.1,1037.1 L218.4,1037.4 L220.8,1037.0 L223.2,1035.9 L225.5,1037.1 L227.9,1034.8 L230.3,1036.8 L232.6,1037.4 L235.0,1035.9 L237.4,1034.5 L239.7,1034.4 L242.1,1035.9 L244.5,1036.0 L246.9,1036.4 L249.2,1034.5 L251.6,1035.6 L254.0,1035.7 L256.3,1035.1 L258.7,1036.8 L261.1,1036.5 L263.4,1033.1 L265.8,1033.0 L268.2,1033.9 L270.5,1035.7 L272.9,1034.2 L275.3,1033.8 L277.6,1036.8 L280.0,1035.9 L282.4,1036.6 L284.8,1035.9 L287.1,1034.1 L289.5,1037.7 L291.9,1036.2 L294.2,1034.4 L296.6,1037.0 L299.0,1034.3 L301.3,1037.4 L303.7,1036.2 L306.1,1035.1 L308.4,1036.0 L310.8,1035.3 L313.2,1036.5 L315.5,1034.6 L317.9,1035.7 L320.3,1035.1 L322.7,1036.1 L325.0,1036.0 L327.4,1034.2 L329.8,1033.8 L332.1,1034.9 L334.5,1034.4 L336.9,1034.0 L339.2,1035.7 L341.6,1034.3 L344.0,1036.1 L346.3,1035.8 L348.7,1035.7 L351.1,1034.8 L353.4,1035.5 L355.8,1036.7 L358.2,1035.4 L360.6,1033.4 L362.9,1032.9 L365.3,1034.0 L367.7,1035.4 L370.0,1037.1 L372.4,1036.9 L374.8,1034.6 L377.1,1033.7 L379.5,1037.4 L381.9,1036.1 L384.2,1035.4 L386.6,1036.6 L389.0,1035.5 L391.3,1033.7 L393.7,1036.2 L396.1,1036.6 L398.5,1035.0 L400.8,1036.7 L403.2,1035.0 L405.6,1036.3 L407.9,1034.5 L410.3,1034.1 L412.7,1033.7 L415.0,1033.6 L417.4,1034.7 L419.8,1035.4 L422.1,1036.5 L424.5,1034.1 L426.9,1036.3 L429.2,1034.6 L431.6,1035.6 L434.0,1035.8 L436.4,1033.5 L438.7,1034.3 L441.1,1036.8 L443.5,1035.0 L445.8,1034.7 L448.2,1036.4 L450.6,1037.0 L452.9,1033.6 L455.3,1034.4 L457.7,1035.1 L460.0,1034.6 L462.4,1036.1 L464.8,1036.7 L467.1,1036.8 L469.5,1034.7 L471.9,1034.4 L474.3,1034.7 L476.6,1034.4 L479.0,1035.4 L481.4,1035.3 L483.7,1034.3 L486.1,1035.9 L488.5,1035.2 L490.8,1034.6 L493.2,1035.2 L495.6,1032.8 L497.9,1032.9 L500.3,1034.6 L502.7,1035.1 L505.0,1034.1 L507.4,1034.7 L509.8,1035.3 L512.2,1034.5 L514.5,1034.4 L516.9,1034.3 L519.3,1033.6 L521.6,1036.3 L524.0,1035.2 L526.4,1035.2 L528.7,1035.5 L531.1,1034.3 L533.5,1035.6 L535.8,1035.5 L538.2,1035.4 L540.6,1034.2 L542.9,1033.9 L545.3,1034.7 L547.7,1035.3 L550.1,1033.7 L552.4,1034.0 L554.8,1032.7 L557.2,1036.8 L559.5,1036.5 L561.9,1035.7 L564.3,1031.8 L566.6,1033.9 L569.0,1034.8" fill="none" stroke="#E24D42" stroke-width="1.25" stroke-linejoin="round"/>
<path d="M145.0,1035.3 L147.4,1036.4 L149.7,1033.7 L152.1,1033.8 L154.5,1036.7 L156.8,1035.1 L159.2,1035.1 L161.6,1032.8 L163.9,1034.8 L166.3,1035.2 L168.7,1035.6 L171.1,1035.9 L173.4,1035.6 L175.8,1036.3 L178.2,1036.1 L180.5,1036.6 L182.9,1036.7 L185.3,1036.7 L187.6,1035.6 L190.0,1035.5 L192.4,1036.0 L194.7,1034.3 L197.1,1034.4 L199.5,1034.8 L201.8,1034.9 L204.2,1032.7 L206.6,1033.5 L209.0,1033.5 L211.3,1036.8 L213.7,1035.7 L216.1,1037.0 L218.4,1035.5 L220.8,1034.2 L223.2,1034.9 L225.5,1033.8 L227.9,1035.2 L230.3,1033.8 L232.6,1035.7 L235.0,1034.9 L237.4,1033.9 L239.7,1033.4 L242.1,1034.0 L244.5,1031.9 L246.9,1033.9 L249.2,1034.5 L251.6,1037.1 L254.0,1033.0 L256.3,1034.1 L258.7,1035.3 L261.1,1032.9 L263.4,1032.3 L265.8,1033.3 L268.2,1035.3 L270.5,1033.9 L272.9,1034.6 L275.3,1035.4 L277.6,1033.2 L280.0,1036.0 L282.4,1033.9 L284.8,1033.4 L287.1,1031.5 L289.5,1032.8 L291.9,1035.7 L294.2,1035.3 L296.6,1034.2 L299.0,1033.5 L301.3,1032.6 L303.7,1035.5 L306.1,1034.6 L308.4,1033.0 L310.8,1031.8 L313.2,1031.1 L315.5,1033.3 L317.9,1032.4 L320.3,1031.4 L322.7,1031.7 L325.0,1032.3 L327.4,1032.3 L329.8,1034.1 L332.1,1035.3 L334.5,1033.1 L336.9,1033.8 L339.2,1033.7 L341.6,1034.2 L344.0,1034.2 L346.3,1033.5 L348.7,1034.6 L351.1,1033.8 L353.4,1033.3 L355.8,1033.5 L358.2,1034.3 L360.6,1032.9 L362.9,1031.3 L365.3,1033.4 L367.7,1032.1 L370.0,1032.1 L372.4,1035.9 L374.8,1035.0 L377.1,1034.5 L379.5,1032.9 L381.9,1033.0 L384.2,1032.7 L386.6,1032.5 L389.0,1034.0 L391.3,1034.3 L393.7,1034.9 L396.1,1034.0 L398.5,1033.6 L400.8,1033.2 L403.2,1034.0 L405.6,1032.5 L407.9,1032.0 L410.3,1031.2 L412.7,1031.8 L415.0,1032.6 L417.4,1032.3 L419.8,1032.2 L422.1,1033.6 L424.5,1031.9 L426.9,1030.9 L429.2,1030.3 L431.6,1032.2 L434.0,1032.5 L436.4,1032.4 L438.7,1032.9 L441.1,1032.3 L443.5,1033.0 L445.8,1033.2 L448.2,1031.2 L450.6,1032.3 L452.9,1032.7 L455.3,1031.9 L457.7,1032.5 L460.0,1032.5 L462.4,1032.9 L464.8,1034.2 L467.1,1033.4 L469.5,1034.3 L471.9,1033.1 L474.3,1034.2 L476.6,1032.3 L479.0,1031.9 L481.4,1032.3 L483.7,1032.8 L486.1,1032.4 L488.5,1034.8 L490.8,1034.6 L493.2,1033.5 L495.6,1032.6 L497.9,1032.8 L500.3,1033.9 L502.7,1032.9 L505.0,1033.3 L507.4,1034.0 L509.8,1032.7 L512.2,1032.9 L514.5,1031.5 L516.9,1031.6 L519.3,1031.5 L521.6,1032.0 L524.0,1033.3 L526.4,1033.8 L528.7,1034.6 L531.1,1030.1 L533.5,1033.0 L535.8,1032.9 L538.2,1033.1 L540.6,1033.0 L542.9,1033.3 L545.3,1034.8 L547.7,1034.3 L550.1,1034.5 L552.4,1033.2 L554.8,1033.4 L557.2,1033.5 L559.5,1032.5 L561.9,1033.1 L564.3,1031.6 L566.6,1032.6 L569.0,1032.2 L569.0,1173.5 L145.0,1173.5 Z" fill="#1F78C1" fill-opacity="0.1" stroke="none"/>
<path d="M145.0,1035.3 L147.4,1036.4 L149.7,1033.7 L152.1,1033.8 L154.5,1036.7 L156.8,1035.1 L159.2,1035.1 L161.6,1032.8 L163.9,1034.8 L166.3,1035.2 L168.7,1035.6 L171.1,1035.9 L173.4,1035.6 L175.8,1036.3 L178.2,1036.1 L180.5,1036.6 L182.9,1036.7 L185.3,1036.7 L187.6,1035.6 L190.0,1035.5 L192.4,1036.0 L194.7,1034.3 L197.1,1034.4 L199.5,1034.8 L201.8,1034.9 L204.2,1032.7 L206.6,1033.5 L209.0,1033.5 L211.3,1036.8 L213.7,1035.7 L216.1,1037.0 L218.4,1035.5 L220.8,1034.2 L223.2,1034.9 L225.5,1033.8 L227.9,1035.2 L230.3,1033.8 L232.6,1035.7 L235.0,1034.9 L237.4,1033.9 L239.7,1033.4 L242.1,1034.0 L244.5,1031.9 L246.9,1033.9 L249.2,1034.5 L251.6,1037.1 L254.0,1033.0 L256.3,1034.1 L258.7,1035.3 L261.1,1032.9 L263.4,1032.3 L265.8,1033.3 L268.2,1035.3 L270.5,1033.9 L272.9,1034.6 L275.3,1035.4 L277.6,1033.2 L280.0,1036.0 L282.4,1033.9 L284.8,1033.4 L287.1,1031.5 L289.5,1032.8 L291.9,1035.7 L294.2,1035.3 L296.6,1034.2 L299.0,1033.5 L301.3,1032.6 L303.7,1035.5 L306.1,1034.6 L308.4,1033.0 L310.8,1031.8 L313.2,1031.1 L315.5,1033.3 L317.9,1032.4 L320.3,1031.4 L322.7,1031.7 L325.0,1032.3 L327.4,1032.3 L329.8,1034.1 L332.1,1035.3 L334.5,1033.1 L336.9,1033.8 L339.2,1033.7 L341.6,1034.2 L344.0,1034.2 L346.3,1033.5 L348.7,1034.6 L351.1,1033.8 L353.4,1033.3 L355.8,1033.5 L358.2,1034.3 L360.6,1032.9 L362.9,1031.3 L365.3,1033.4 L367.7,1032.1 L370.0,1032.1 L372.4,1035.9 L374.8,1035.0 L377.1,1034.5 L379.5,1032.9 L381.9,1033.0 L384.2,1032.7 L386.6,1032.5 L389.0,1034.0 L391.3,1034.3 L393.7,1034.9 L396.1,1034.0 L398.5,1033.6 L400.8,1033.2 L403.2,1034.0 L405.6,1032.5 L407.9,1032.0 L410.3,1031.2 L412.7,1031.8 L415.0,1032.6 L417.4,1032.3 L419.8,1032.2 L422.1,1033.6 L424.5,1031.9 L426.9,1030.9 L429.2,1030.3 L431.6,1032.2 L434.0,1032.5 L436.4,1032.4 L438.7,1032.9 L441.1,1032.3 L443.5,1033.0 L445.8,1033.2 L448.2,1031.2 L450.6,1032.3 L452.9,1032.7 L455.3,1031.9 L457.7,1032.5 L460.0,1032.5 L462.4,1032.9 L464.8,1034.2 L467.1,1033.4 L469.5,1034.3 L471.9,1033.1 L474.3,1034.2 L476.6,1032.3 L479.0,1031.9 L481.4,1032.3 L483.7,1032.8 L486.1,1032.4 L488.5,1034.8 L490.8,1034.6 L493.2,1033.5 L495.6,1032.6 L497.9,1032.8 L500.3,1033.9 L502.7,1032.9 L505.0,1033.3 L507.4,1034.0 L509.8,1032.7 L512.2,1032.9 L514.5,1031.5 L516.9,1031.6 L519.3,1031.5 L521.6,1032.0 L524.0,1033.3 L526.4,1033.8 L528.7,1034.6 L531.1,1030.1 L533.5,1033.0 L535.8,1032.9 L538.2,1033.1 L540.6,1033.0 L542.9,1033.3 L545.3,1034.8 L547.7,1034.3 L550.1,1034.5 L552.4,1033.2 L554.8,1033.4 L557.2,1033.5 L559.5,1032.5 L561.9,1033.1 L564.3,1031.6 L566.6,1032.6 L569.0,1032.2" fill="none" stroke="#1F78C1" stroke-width="1.25" stroke-linejoin="round"/>
<path d="M145.0,1037.2 L147.4,1037.7 L149.7,1035.6 L152.1,1034.3 L154.5,1034.1 L156.8,1035.0 L159.2,1035.7 L161.6,1036.1 L163.9,1036.6 L166.3,1038.5 L168.7,1038.5 L171.1,1037.6 L173.4,1037.8 L175.8,1037.3 L178.2,1036.0 L180.5,1035.7 L182.9,1037.2 L185.3,1038.2 L187.6,1035.8 L190.0,1037.5 L192.4,1035.3 L194.7,1036.4 L197.1,1037.3 L199.5,1035.5 L201.8,1035.8 L204.2,1034.7 L206.6,1035.8 L209.0,1035.7 L211.3,1035.6 L213.7,1037.0 L216.1,1036.4 L218.4,1037.7 L220.8,1036.0 L223.2,1038.2 L225.5,1034.9 L227.9,1036.2 L230.3,1037.4 L232.6,1037.6 L235.0,1034.2 L237.4,1035.2 L239.7,1035.5 L242.1,1036.7 L244.5,1035.6 L246.9,1034.5 L249.2,1036.0 L251.6,1035.2 L254.0,1033.7 L256.3,1035.3 L258.7,1036.9 L261.1,1036.8 L263.4,1035.3 L265.8,1034.7 L268.2,1033.9 L270.5,1035.0 L272.9,1035.5 L275.3,1034.8 L277.6,1036.2 L280.0,1035.2 L282.4,1036.1 L284.8,1037.8 L287.1,1036.9 L289.5,1036.4 L291.9,1035.5 L294.2,1035.6 L296.6,1037.0 L299.0,1037.3 L301.3,1036.5 L303.7,1034.5 L306.1,1036.6 L308.4,1036.0 L310.8,1036.1 L313.2,1034.1 L315.5,1034.4 L317.9,1034.6 L320.3,1035.8 L322.7,1034.2 L325.0,1036.9 L327.4,1036.0 L329.8,1034.8 L332.1,1035.1 L334.5,1035.7 L336.9,1035.8 L339.2,1036.0 L341.6,1035.1 L344.0,1034.9 L346.3,1034.8 L348.7,1035.5 L351.1,1035.5 L353.4,1035.6 L355.8,1036.3 L358.2,1037.0 L360.6,1034.9 L362.9,1037.4 L365.3,1036.1 L367.7,1035.6 L370.0,1035.9 L372.4,1035.4 L374.8,1035.7 L377.1,1033.1 L379.5,1034.5 L381.9,1034.3 L384.2,1036.2 L386.6,1037.2 L389.0,1036.7 L391.3,1036.3 L393.7,1035.4 L396.1,1034.5 L398.5,1035.0 L400.8,1034.8 L403.2,1036.6 L405.6,1034.5 L407.9,1037.2 L410.3,1034.1 L412.7,1033.9 L415.0,1034.8 L417.4,1033.7 L419.8,1035.9 L422.1,1035.6 L424.5,1035.7 L426.9,1034.5 L429.2,1035.3 L431.6,1034.7 L434.0,1035.6 L436.4,1035.3 L438.7,1037.6 L441.1,1036.0 L443.5,1036.4 L445.8,1034.1 L448.2,1034.0 L450.6,1036.6 L452.9,1035.5 L455.3,1034.6 L457.7,1034.5 L460.0,1033.5 L462.4,1034.5 L464.8,1036.5 L467.1,1034.6 L469.5,1033.2 L471.9,1036.3 L474.3,1035.3 L476.6,1035.0 L479.0,1036.2 L481.4,1034.1 L483.7,1035.3 L486.1,1036.1 L488.5,1036.4 L490.8,1034.4 L493.2,1035.9 L495.6,1035.0 L497.9,1034.6 L500.3,1035.6 L502.7,1034.8 L505.0,1034.9 L507.4,1034.5 L509.8,1035.7 L512.2,1035.1 L514.5,1035.2 L516.9,1034.8 L519.3,1034.6 L521.6,1035.1 L524.0,1033.4 L526.4,1036.0 L528.7,1036.1 L531.1,1036.0 L533.5,1036.4 L535.8,1034.9 L538.2,1034.1 L540.6,1036.7 L542.9,1037.1 L545.3,1034.8 L547.7,1035.2 L550.1,1035.6 L552.4,1035.5 L554.8,1034.8 L557.2,1034.2 L559.5,1034.3 L561.9,1033.7 L564.3,1034.9 L566.6,1034.9 L569.0,1035.9 L569.0,1173.5 L145.0,1173.5 Z" fill="#BA43A9" fill-opacity="0.1" stroke="none"/>
<path d="M145.0,1037.2 L147.4,1037.7 L149.7,1035.6 L152.1,1034.3 L154.5,1034.1 L156.8,1035.0 L159.2,1035.7 L161.6,1036.1 L163.9,1036.6 L166.3,1038.5 L168.7,1038.5 L171.1,1037.6 L173.4,1037.8 L175.8,1037.3 L178.2,1036.0 L180.5,1035.7 L182.9,1037.2 L185.3,1038.2 L187.6,1035.8 L190.0,1037.5 L192.4,1035.3 L194.7,1036.4 L197.1,1037.3 L199.5,1035.5 L201.8,1035.8 L204.2,1034.7 L206.6,1035.8 L209.0,1035.7 L211.3,1035.6 L213.7,1037.0 L216.1,1036.4 L218.4,1037.7 L220.8,1036.0 L223.2,1038.2 L225.5,1034.9 L227.9,1036.2 L230.3,1037.4 L232.6,1037.6 L235.0,1034.2 L237.4,1035.2 L239.7,1035.5 L242.1,1036.7 L244.5,1035.6 L246.9,1034.5 L249.2,1036.0 L251.6,1035.2 L254.0,1033.7 L256.3,1035.3 L258.7,1036.9 L261.1,1036.8 L263.4,1035.3 L265.8,1034.7 L268.2,1033.9 L270.5,1035.0 L272.9,1035.5 L275.3,1034.8 L277.6,1036.2 L280.0,1035.2 L282.4,1036.1 L284.8,1037.8 L287.1,1036.9 L289.5,1036.4 L291.9,1035.5 L294.2,1035.6 L296.6,1037.0 L299.0,1037.3 L301.3,1036.5 L303.7,1034.5 L306.1,1036.6 L308.4,1036.0 L310.8,1036.1 L313.2,1034.1 L315.5,1034.4 L317.9,1034.6 L320.3,1035.8 L322.7,1034.2 L325.0,1036.9 L327.4,1036.0 L329.8,1034.8 L332.1,1035.1 L334.5,1035.7 L336.9,1035.8 L339.2,1036.0 L341.6,1035.1 L344.0,1034.9 L346.3,1034.8 L348.7,1035.5 L351.1,1035.5 L353.4,1035.6 L355.8,1036.3 L358.2,1037.0 L360.6,1034.9 L362.9,1037.4 L365.3,1036.1 L367.7,1035.6 L370.0,1035.9 L372.4,1035.4 L374.8,1035.7 L377.1,1033.1 L379.5,1034.5 L381.9,1034.3 L384.2,1036.2 L386.6,1037.2 L389.0,1036.7 L391.3,1036.3 L393.7,1035.4 L396.1,1034.5 L398.5,1035.0 L400.8,1034.8 L403.2,1036.6 L405.6,1034.5 L407.9,1037.2 L410.3,1034.1 L412.7,1033.9 L415.0,1034.8 L417.4,1033.7 L419.8,1035.9 L422.1,1035.6 L424.5,1035.7 L426.9,1034.5 L429.2,1035.3 L431.6,1034.7 L434.0,1035.6 L436.4,1035.3 L438.7,1037.6 L441.1,1036.0 L443.5,1036.4 L445.8,1034.1 L448.2,1034.0 L450.6,1036.6 L452.9,1035.5 L455.3,1034.6 L457.7,1034.5 L460.0,1033.5 L462.4,1034.5 L464.8,1036.5 L467.1,1034.6 L469.5,1033.2 L471.9,1036.3 L474.3,1035.3 L476.6,1035.0 L479.0,1036.2 L481.4,1034.1 L483.7,1035.3 L486.1,1036.1 L488.5,1036.4 L490.8,1034.4 L493.2,1035.9 L495.6,1035.0 L497.9,1034.6 L500.3,1035.6 L502.7,1034.8 L505.0,1034.9 L507.4,1034.5 L509.8,1035.7 L512.2,1035.1 L514.5,1035.2 L516.9,1034.8 L519.3,1034.6 L521.6,1035.1 L524.0,1033.4 L526.4,1036.0 L528.7,1036.1 L531.1,1036.0 L533.5,1036.4 L535.8,1034.9 L538.2,1034.1 L540.6,1036.7 L542.9,1037.1 L545.3,1034.8 L547.7,1035.2 L550.1,1035.6 L552.4,1035.5 L554.8,1034.8 L557.2,1034.2 L559.5,1034.3 L561.9,1033.7 L564.3,1034.9 L566.6,1034.9 L569.0,1035.9" fill="none" stroke="#BA43A9" stroke-width="1.25" stroke-linejoin="round"/>
<path d="M145.0,1038.8 L147.4,1037.6 L149.7,1039.6 L152.1,1038.5 L154.5,1038.1 L156.8,1037.6 L159.2,1038.6 L161.6,1037.6 L163.9,1039.1 L166.3,1037.6 L168.7,1037.9 L171.1,1039.9 L173.4,1038.6 L175.8,1038.4 L178.2,1038.9 L180.5,1039.5 L182.9,1039.1 L185.3,1040.3 L187.6,1037.2 L190.0,1039.4 L192.4,1039.5 L194.7,1037.6 L197.1,1037.6 L199.5,1037.4 L201.8,1036.5 L204.2,1038.2 L206.6,1039.5 L209.0,1037.9 L211.3,1037.4 L213.7,1038.5 L216.1,1039.8 L218.4,1037.5 L220.8,1037.5 L223.2,1039.6 L225.5,1037.9 L227.9,1039.8 L230.3,1039.3 L232.6,1039.8 L235.0,1039.5 L237.4,1039.6 L239.7,1039.3 L242.1,1037.8 L244.5,1037.8 L246.9,1037.4 L249.2,1036.8 L251.6,1038.2 L254.0,1038.1 L256.3,1037.6 L258.7,1036.2 L261.1,1036.6 L263.4,1036.2 L265.8,1036.5 L268.2,1036.5 L270.5,1039.6 L272.9,1037.6 L275.3,1037.7 L277.6,1037.9 L280.0,1038.6 L282.4,1038.7 L284.8,1037.8 L287.1,1037.1 L289.5,1039.4 L291.9,1038.2 L294.2,1038.7 L296.6,1039.2 L299.0,1037.9 L301.3,1038.3 L303.7,1038.8 L306.1,1039.0 L308.4,1038.0 L310.8,1037.9 L313.2,1039.1 L315.5,1039.2 L317.9,1038.5 L320.3,1037.6 L322.7,1038.9 L325.0,1037.6 L327.4,1038.7 L329.8,1035.1 L332.1,1038.0 L334.5,1038.7 L336.9,1037.9 L339.2,1038.8 L341.6,1037.2 L344.0,1035.6 L346.3,1037.5 L348.7,1037.5 L351.1,1038.2 L353.4,1037.9 L355.8,1036.2 L358.2,1036.3 L360.6,1038.2 L362.9,1036.2 L365.3,1035.9 L367.7,1036.6 L370.0,1038.0 L372.4,1037.7 L374.8,1038.5 L377.1,1037.4 L379.5,1037.9 L381.9,1040.1 L384.2,1037.3 L386.6,1037.3 L389.0,1036.3 L391.3,1037.3 L393.7,1037.2 L396.1,1036.2 L398.5,1036.7 L400.8,1036.9 L403.2,1033.8 L405.6,1036.5 L407.9,1037.0 L410.3,1035.4 L412.7,1037.7 L415.0,1038.6 L417.4,1039.3 L419.8,1037.4 L422.1,1036.7 L424.5,1036.3 L426.9,1038.5 L429.2,1036.6 L431.6,1035.8 L434.0,1037.0 L436.4,1037.2 L438.7,1036.5 L441.1,1036.6 L443.5,1036.4 L445.8,1038.2 L448.2,1037.7 L450.6,1038.7 L452.9,1037.0 L455.3,1036.5 L457.7,1037.1 L460.0,1036.8 L462.4,1038.7 L464.8,1036.7 L467.1,1037.5 L469.5,1037.1 L471.9,1035.9 L474.3,1037.6 L476.6,1035.9 L479.0,1036.6 L481.4,1036.9 L483.7,1036.4 L486.1,1038.2 L488.5,1036.7 L490.8,1036.9 L493.2,1035.8 L495.6,1036.9 L497.9,1037.3 L500.3,1036.7 L502.7,1036.9 L505.0,1038.2 L507.4,1037.5 L509.8,1035.7 L512.2,1036.6 L514.5,1037.8 L516.9,1036.4 L519.3,1038.7 L521.6,1039.7 L524.0,1037.7 L526.4,1036.9 L528.7,1036.6 L531.1,1037.7 L533.5,1037.2 L535.8,1038.4 L538.2,1037.0 L540.6,1038.6 L542.9,1037.5 L545.3,1036.7 L547.7,1038.6 L550.1,1037.8 L552.4,1036.2 L554.8,1034.9 L557.2,1037.8 L559.5,1036.6 L561.9,1038.0 L564.3,1038.5 L566.6,1035.5 L569.0,1035.5 L569.0,1173.5 L145.0,1173.5 Z" fill="#705DA0" fill-opacity="0.1" stroke="none"/>
<path d="M145.0,1038.8 L147.4,1037.6 L149.7,1039.6 L152.1,1038.5 L154.5,1038.1 L156.8,1037.6 L159.2,1038.6 L161.6,1037.6 L163.9,1039.1 L166.3,1037.6 L168.7,1037.9 L171.1,1039.9 L173.4,1038.6 L175.8,1038.4 L178.2,1038.9 L180.5,1039.5 L182.9,1039.1 L185.3,1040.3 L187.6,1037.2 L190.0,1039.4 L192.4,1039.5 L194.7,1037.6 L197.1,1037.6 L199.5,1037.4 L201.8,1036.5 L204.2,1038.2 L206.6,1039.5 L209.0,1037.9 L211.3,1037.4 L213.7,1038.5 L216.1,1039.8 L218.4,1037.5 L220.8,1037.5 L223.2,1039.6 L225.5,1037.9 L227.9,1039.8 L230.3,1039.3 L232.6,1039.8 L235.0,1039.5 L237.4,1039.6 L239.7,1039.3 L242.1,1037.8 L244.5,1037.8 L246.9,1037.4 L249.2,1036.8 L251.6,1038.2 L254.0,1038.1 L256.3,1037.6 L258.7,1036.2 L261.1,1036.6 L263.4,1036.2 L265.8,1036.5 L268.2,1036.5 L270.5,1039.6 L272.9,1037.6 L275.3,1037.7 L277.6,1037.9 L280.0,1038.6 L282.4,1038.7 L284.8,1037.8 L287.1,1037.1 L289.5,1039.4 L291.9,1038.2 L294.2,1038.7 L296.6,1039.2 L299.0,1037.9 L301.3,1038.3 L303.7,1038.8 L306.1,1039.0 L308.4,1038.0 L310.8,1037.9 L313.2,1039.1 L315.5,1039.2 L317.9,1038.5 L320.3,1037.6 L322.7,1038.9 L325.0,1037.6 L327.4,1038.7 L329.8,1035.1 L332.1,1038.0 L334.5,1038.7 L336.9,1037.9 L339.2,1038.8 L341.6,1037.2 L344.0,1035.6 L346.3,1037.5 L348.7,1037.5 L351.1,1038.2 L353.4,1037.9 L355.8,1036.2 L358.2,1036.3 L360.6,1038.2 L362.9,1036.2 L365.3,1035.9 L367.7,1036.6 L370.0,1038.0 L372.4,1037.7 L374.8,1038.5 L377.1,1037.4 L379.5,1037.9 L381.9,1040.1 L384.2,1037.3 L386.6,1037.3 L389.0,1036.3 L391.3,1037.3 L393.7,1037.2 L396.1,1036.2 L398.5,1036.7 L400.8,1036.9 L403.2,1033.8 L405.6,1036.5 L407.9,1037.0 L410.3,1035.4 L412.7,1037.7 L415.0,1038.6 L417.4,1039.3 L419.8,1037.4 L422.1,1036.7 L424.5,1036.3 L426.9,1038.5 L429.2,1036.6 L431.6,1035.8 L434.0,1037.0 L436.4,1037.2 L438.7,1036.5 L441.1,1036.6 L443.5,1036.4 L445.8,1038.2 L448.2,1037.7 L450.6,1038.7 L452.9,1037.0 L455.3,1036.5 L457.7,1037.1 L460.0,1036.8 L462.4,1038.7 L464.8,1036.7 L467.1,1037.5 L469.5,1037.1 L471.9,1035.9 L474.3,1037.6 L476.6,1035.9 L479.0,1036.6 L481.4,1036.9 L483.7,1036.4 L486.1,1038.2 L488.5,1036.7 L490.8,1036.9 L493.2,1035.8 L495.6,1036.9 L497.9,1037.3 L500.3,1036.7 L502.7,1036.9 L505.0,1038.2 L507.4,1037.5 L509.8,1035.7 L512.2,1036.6 L514.5,1037.8 L516.9,1036.4 L519.3,1038.7 L521.6,1039.7 L524.0,1037.7 L526.4,1036.9 L528.7,1036.6 L531.1,1037.7 L533.5,1037.2 L535.8,1038.4 L538.2,1037.0 L540.6,1038.6 L542.9,1037.5 L545.3,1036.7 L547.7,1038.6 L550.1,1037.8 L552.4,1036.2 L554.8,1034.9 L557.2,1037.8 L559.5,1036.6 L561.9,1038.0 L564.3,1038.5 L566.6,1035.5 L569.0,1035.5" fill="none" stroke="#705DA0" stroke-width="1.25" stroke-linejoin="round"/>
<path d="M145.0,1036.5 L147.4,1036.1 L149.7,1036.2 L152.1,1036.0 L154.5,1035.1 L156.8,1036.5 L159.2,1035.1 L161.6,1036.0 L163.9,1036.3 L166.3,1034.5 L168.7,1035.4 L171.1,1035.1 L173.4,1035.5 L175.8,1038.2 L178.2,1037.1 L180.5,1036.0 L182.9,1037.7 L185.3,1035.0 L187.6,1035.9 L190.0,1038.4 L192.4,1039.1 L194.7,1035.1 L197.1,1037.1 L199.5,1036.4 L201.8,1035.1 L204.2,1036.4 L206.6,1035.7 L209.0,1037.6 L211.3,1035.3 L213.7,1035.1 L216.1,1035.2 L218.4,1037.0 L220.8,1036.5 L223.2,1035.8 L225.5,1036.4 L227.9,1036.9 L230.3,1037.2 L232.6,1037.0 L235.0,1036.7 L237.4,1037.1 L239.7,1034.2 L242.1,1034.8 L244.5,1037.9 L246.9,1033.4 L249.2,1035.6 L251.6,1032.8 L254.0,1034.6 L256.3,1035.6 L258.7,1036.4 L261.1,1036.8 L263.4,1035.6 L265.8,1037.3 L268.2,1035.7 L270.5,1035.9 L272.9,1037.3 L275.3,1037.4 L277.6,1035.9 L280.0,1035.7 L282.4,1035.5 L284.8,1036.7 L287.1,1037.0 L289.5,1035.2 L291.9,1036.8 L294.2,1037.0 L296.6,1035.1 L299.0,1035.8 L301.3,1035.6 L303.7,1037.0 L306.1,1037.1 L308.4,1036.2 L310.8,1036.3 L313.2,1036.4 L315.5,1034.5 L317.9,1034.1 L320.3,1036.2 L322.7,1035.7 L325.0,1036.4 L327.4,1036.1 L329.8,1035.7 L332.1,1034.4 L334.5,1034.2 L336.9,1035.1 L339.2,1034.3 L341.6,1035.7 L344.0,1034.0 L346.3,1033.5 L348.7,1037.0 L351.1,1035.2 L353.4,1035.7 L355.8,1035.3 L358.2,1036.2 L360.6,1037.5 L362.9,1036.4 L365.3,1034.7 L367.7,1033.9 L370.0,1034.3 L372.4,1033.3 L374.8,1036.0 L377.1,1036.1 L379.5,1037.9 L381.9,1037.3 L384.2,1037.3 L386.6,1036.4 L389.0,1035.6 L391.3,1035.1 L393.7,1034.6 L396.1,1034.9 L398.5,1035.3 L400.8,1036.2 L403.2,1035.8 L405.6,1034.8 L407.9,1036.3 L410.3,1035.8 L412.7,1035.6 L415.0,1036.8 L417.4,1031.6 L419.8,1034.2 L422.1,1036.1 L424.5,1035.1 L426.9,1037.0 L429.2,1033.0 L431.6,1033.1 L434.0,1035.1 L436.4,1035.9 L438.7,1035.7 L441.1,1036.0 L443.5,1033.9 L445.8,1035.9 L448.2,1035.6 L450.6,1035.6 L452.9,1034.0 L455.3,1034.8 L457.7,1034.5 L460.0,1034.9 L462.4,1034.4 L464.8,1034.2 L467.1,1034.1 L469.5,1033.8 L471.9,1034.7 L474.3,1035.7 L476.6,1032.9 L479.0,1035.0 L481.4,1034.3 L483.7,1035.3 L486.1,1035.8 L488.5,1036.0 L490.8,1034.4 L493.2,1033.9 L495.6,1035.7 L497.9,1035.2 L500.3,1033.5 L502.7,1032.0 L505.0,1032.9 L507.4,1032.8 L509.8,1034.3 L512.2,1035.9 L514.5,1034.2 L516.9,1035.6 L519.3,1034.7 L521.6,1034.8 L524.0,1033.1 L526.4,1033.6 L528.7,1035.6 L531.1,1035.5 L533.5,1034.7 L535.8,1035.6 L538.2,1035.6 L540.6,1035.7 L542.9,1035.4 L545.3,1035.3 L547.7,1033.5 L550.1,1034.4 L552.4,1033.8 L554.8,1035.7 L557.2,1034.9 L559.5,1034.1 L561.9,1033.2 L564.3,1033.5 L566.6,1034.8 L569.0,1034.3 L569.0,1173.5 L145.0,1173.5 Z" fill="#508642" fill-opacity="0.1" stroke="none"/>
<path d="M145.0,1036.5 L147.4,1036.1 L149.7,1036.2 L152.1,1036.0 L154.5,1035.1 L156.8,1036.5 L159.2,1035.1 L161.6,1036.0 L163.9,1036.3 L166.3,1034.5 L168.7,1035.4 L171.1,1035.1 L173.4,1035.5 L175.8,1038.2 L178.2,1037.1 L180.5,1036.0 L182.9,1037.7 L185.3,1035.0 L187.6,1035.9 L190.0,1038.4 L192.4,1039.1 L194.7,1035.1 L197.1,1037.1 L199.5,1036.4 L201.8,1035.1 L204.2,1036.4 L206.6,1035.7 L209.0,1037.6 L211.3,1035.3 L213.7,1035.1 L216.1,1035.2 L218.4,1037.0 L220.8,1036.5 L223.2,1035.8 L225.5,1036.4 L227.9,1036.9 L230.3,1037.2 L232.6,1037.0 L235.0,1036.7 L237.4,1037.1 L239.7,1034.2 L242.1,1034.8 L244.5,1037.9 L246.9,1033.4 L249.2,1035.6 L251.6,1032.8 L254.0,1034.6 L256.3,1035.6 L258.7,1036.4 L261.1,1036.8 L263.4,1035.6 L265.8,1037.3 L268.2,1035.7 L270.5,1035.9 L272.9,1037.3 L275.3,1037.4 L277.6,1035.9 L280.0,1035.7 L282.4,1035.5 L284.8,1036.7 L287.1,1037.0 L289.5,1035.2 L291.9,1036.8 L294.2,1037.0 L296.6,1035.1 L299.0,1035.8 L301.3,1035.6 L303.7,1037.0 L306.1,1037.1 L308.4,1036.2 L310.8,1036.3 L313.2,1036.4 L315.5,1034.5 L317.9,1034.1 L320.3,1036.2 L322.7,1035.7 L325.0,1036.4 L327.4,1036.1 L329.8,1035.7 L332.1,1034.4 L334.5,1034.2 L336.9,1035.1 L339.2,1034.3 L341.6,1035.7 L344.0,1034.0 L346.3,1033.5 L348.7,1037.0 L351.1,1035.2 L353.4,1035.7 L355.8,1035.3 L358.2,1036.2 L360.6,1037.5 L362.9,1036.4 L365.3,1034.7 L367.7,1033.9 L370.0,1034.3 L372.4,1033.3 L374.8,1036.0 L377.1,1036.1 L379.5,1037.9 L381.9,1037.3 L384.2,1037.3 L386.6,1036.4 L389.0,1035.6 L391.3,1035.1 L393.7,1034.6 L396.1,1034.9 L398.5,1035.3 L400.8,1036.2 L403.2,1035.8 L405.6,1034.8 L407.9,1036.3 L410.3,1035.8 L412.7,1035.6 L415.0,1036.8 L417.4,1031.6 L419.8,1034.2 L422.1,1036.1 L424.5,1035.1 L426.9,1037.0 L429.2,1033.0 L431.6,1033.1 L434.0,1035.1 L436.4,1035.9 L438.7,1035.7 L441.1,1036.0 L443.5,1033.9 L445.8,1035.9 L448.2,1035.6 L450.6,1035.6 L452.9,1034.0 L455.3,1034.8 L457.7,1034.5 L460.0,1034.9 L462.4,1034.4 L464.8,1034.2 L467.1,1034.1 L469.5,1033.8 L471.9,1034.7 L474.3,1035.7 L476.6,1032.9 L479.0,1035.0 L481.4,1034.3 L483.7,1035.3 L486.1,1035.8 L488.5,1036.0 L490.8,1034.4 L493.2,1033.9 L495.6,1035.7 L497.9,1035.2 L500.3,1033.5 L502.7,1032.0 L505.0,1032.9 L507.4,1032.8 L509.8,1034.3 L512.2,1035.9 L514.5,1034.2 L516.9,1035.6 L519.3,1034.7 L521.6,1034.8 L524.0,1033.1 L526.4,1033.6 L528.7,1035.6 L531.1,1035.5 L533.5,1034.7 L535.8,1035.6 L538.2,1035.6 L540.6,1035.7 L542.9,1035.4 L545.3,1035.3 L547.7,1033.5 L550.1,1034.4 L552.4,1033.8 L554.8,1035.7 L557.2,1034.9 L559.5,1034.1 L561.9,1033.2 L564.3,1033.5 L566.6,1034.8 L569.0,1034.3" fill="none" stroke="#508642" stroke-width="1.25" stroke-linejoin="round"/>
<path d="M145.0,1050.4 L147.4,1045.5 L149.7,1059.2 L152.1,1053.8 L154.5,1049.0 L156.8,1049.1 L159.2,1051.2 L161.6,1052.3 L163.9,1049.6 L166.3,1046.4 L168.7,1048.3 L171.1,1046.8 L173.4,1046.5 L175.8,1046.9 L178.2,1050.9 L180.5,1047.1 L182.9,1048.3 L185.3,1043.5 L187.6,1046.0 L190.0,1046.0 L192.4,1050.0 L194.7,1050.3 L197.1,1049.0 L199.5,1051.9 L201.8,1052.8 L204.2,1050.3 L206.6,1049.5 L209.0,1048.5 L211.3,1045.9 L213.7,1049.0 L216.1,1047.1 L218.4,1048.7 L220.8,1049.3 L223.2,1048.3 L225.5,1054.1 L227.9,1050.2 L230.3,1050.9 L232.6,1051.9 L235.0,1054.7 L237.4,1051.7 L239.7,1054.6 L242.1,1048.3 L244.5,1049.3 L246.9,1053.4 L249.2,1056.3 L251.6,1047.8 L254.0,1050.1 L256.3,1050.0 L258.7,1050.1 L261.1,1049.6 L263.4,1053.5 L265.8,1050.4 L268.2,1050.8 L270.5,1041.8 L272.9,1047.3 L275.3,1049.6 L277.6,1046.5 L280.0,1048.6 L282.4,1048.1 L284.8,1050.9 L287.1,1045.4 L289.5,1049.5 L291.9,1048.1 L294.2,1045.7 L296.6,1048.7 L299.0,1048.8 L301.3,1047.3 L303.7,1046.6 L306.1,1051.0 L308.4,1049.0 L310.8,1051.4 L313.2,1051.5 L315.5,1051.3 L317.9,1046.4 L320.3,1059.1 L322.7,1040.6 L325.0,1046.5 L327.4,1050.3 L329.8,1051.8 L332.1,1045.6 L334.5,1056.2 L336.9,1050.6 L339.2,1050.8 L341.6,1044.9 L344.0,1050.3 L346.3,1046.4 L348.7,1044.7 L351.1,1048.0 L353.4,1047.4 L355.8,1052.4 L358.2,1050.2 L360.6,1049.8 L362.9,1055.8 L365.3,1049.9 L367.7,1048.2 L370.0,1053.1 L372.4,1053.8 L374.8,1052.3 L377.1,1051.3 L379.5,1050.4 L381.9,1051.8 L384.2,1089.1 L386.6,1062.0 L389.0,1050.2 L391.3,1049.5 L393.7,1049.7 L396.1,1047.9 L398.5,1049.0 L400.8,1046.7 L403.2,1047.9 L405.6,1046.3 L407.9,1044.8 L410.3,1051.4 L412.7,1047.2 L415.0,1043.7 L417.4,1049.8 L419.8,1049.2 L422.1,1049.9 L424.5,1048.0 L426.9,1047.3 L429.2,1050.1 L431.6,1045.8 L434.0,1050.2 L436.4,1049.6 L438.7,1046.4 L441.1,1043.1 L443.5,1048.4 L445.8,1046.7 L448.2,1047.6 L450.6,1052.6 L452.9,1052.5 L455.3,1053.1 L457.7,1051.4 L460.0,1050.7 L462.4,1049.3 L464.8,1045.7 L467.1,1046.8 L469.5,1041.3 L471.9,1047.2 L474.3,1046.3 L476.6,1047.0 L479.0,1044.4 L481.4,1048.5 L483.7,1046.6 L486.1,1043.9 L488.5,1049.2 L490.8,1049.2 L493.2,1047.6 L495.6,1049.6 L497.9,1051.4 L500.3,1044.8 L502.7,1048.2 L505.0,1044.2 L507.4,1048.8 L509.8,1049.4 L512.2,1046.9 L514.5,1048.8 L516.9,1051.2 L519.3,1051.4 L521.6,1048.9 L524.0,1050.6 L526.4,1049.1 L528.7,1054.8 L531.1,1052.1 L533.5,1050.3 L535.8,1050.6 L538.2,1052.0 L540.6,1052.1 L542.9,1049.6 L545.3,1045.2 L547.7,1051.4 L550.1,1050.3 L552.4,1046.8 L554.8,1047.4 L557.2,1048.6 L559.5,1050.0 L561.9,1049.2 L564.3,1049.2 L566.6,1054.6 L569.0,1052.4 L569.0,1173.5 L145.0,1173.5 Z" fill="#CCA300" fill-opacity="0.1" stroke="none"/>
<path d="M145.0,1050.4 L147.4,1045.5 L149.7,1059.2 L152.1,1053.8 L154.5,1049.0 L156.8,1049.1 L159.2,1051.2 L161.6,1052.3 L163.9,1049.6 L166.3,1046.4 L168.7,1048.3 L171.1,1046.8 L173.4,1046.5 L175.8,1046.9 L178.2,1050.9 L180.5,1047.1 L182.9,1048.3 L185.3,1043.5 L187.6,1046.0 L190.0,1046.0 L192.4,1050.0 L194.7,1050.3 L197.1,1049.0 L199.5,1051.9 L201.8,1052.8 L204.2,1050.3 L206.6,1049.5 L209.0,1048.5 L211.3,1045.9 L213.7,1049.0 L216.1,1047.1 L218.4,1048.7 L220.8,1049.3 L223.2,1048.3 L225.5,1054.1 L227.9,1050.2 L230.3,1050.9 L232.6,1051.9 L235.0,1054.7 L237.4,1051.7 L239.7,1054.6 L242.1,1048.3 L244.5,1049.3 L246.9,1053.4 L249.2,1056.3 L251.6,1047.8 L254.0,1050.1 L256.3,1050.0 L258.7,1050.1 L261.1,1049.6 L263.4,1053.5 L265.8,1050.4 L268.2,1050.8 L270.5,1041.8 L272.9,1047.3 L275.3,1049.6 L277.6,1046.5 L280.0,1048.6 L282.4,1048.1 L284.8,1050.9 L287.1,1045.4 L289.5,1049.5 L291.9,1048.1 L294.2,1045.7 L296.6,1048.7 L299.0,1048.8 L301.3,1047.3 L303.7,1046.6 L306.1,1051.0 L308.4,1049.0 L310.8,1051.4 L313.2,1051.5 L315.5,1051.3 L317.9,1046.4 L320.3,1059.1 L322.7,1040.6 L325.0,1046.5 L327.4,1050.3 L329.8,1051.8 L332.1,1045.6 L334.5,1056.2 L336.9,1050.6 L339.2,1050.8 L341.6,1044.9 L344.0,1050.3 L346.3,1046.4 L348.7,1044.7 L351.1,1048.0 L353.4,1047.4 L355.8,1052.4 L358.2,1050.2 L360.6,1049.8 L362.9,1055.8 L365.3,1049.9 L367.7,1048.2 L370.0,1053.1 L372.4,1053.8 L374.8,1052.3 L377.1,1051.3 L379.5,1050.4 L381.9,1051.8 L384.2,1089.1 L386.6,1062.0 L389.0,1050.2 L391.3,1049.5 L393.7,1049.7 L396.1,1047.9 L398.5,1049.0 L400.8,1046.7 L403.2,1047.9 L405.6,1046.3 L407.9,1044.8 L410.3,1051.4 L412.7,1047.2 L415.0,1043.7 L417.4,1049.8 L419.8,1049.2 L422.1,1049.9 L424.5,1048.0 L426.9,1047.3 L429.2,1050.1 L431.6,1045.8 L434.0,1050.2 L436.4,1049.6 L438.7,1046.4 L441.1,1043.1 L443.5,1048.4 L445.8,1046.7 L448.2,1047.6 L450.6,1052.6 L452.9,1052.5 L455.3,1053.1 L457.7,1051.4 L460.0,1050.7 L462.4,1049.3 L464.8,1045.7 L467.1,1046.8 L469.5,1041.3 L471.9,1047.2 L474.3,1046.3 L476.6,1047.0 L479.0,1044.4 L481.4,1048.5 L483.7,1046.6 L486.1,1043.9 L488.5,1049.2 L490.8,1049.2 L493.2,1047.6 L495.6,1049.6 L497.9,1051.4 L500.3,1044.8 L502.7,1048.2 L505.0,1044.2 L507.4,1048.8 L509.8,1049.4 L512.2,1046.9 L514.5,1048.8 L516.9,1051.2 L519.3,1051.4 L521.6,1048.9 L524.0,1050.6 L526.4,1049.1 L528.7,1054.8 L531.1,1052.1 L533.5,1050.3 L535.8,1050.6 L538.2,1052.0 L540.6,1052.1 L542.9,1049.6 L545.3,1045.2 L547.7,1051.4 L550.1,1050.3 L552.4,1046.8 L554.8,1047.4 L557.2,1048.6 L559.5,1050.0 L561.9,1049.2 L564.3,1049.2 L566.6,1054.6 L569.0,1052.4" fill="none" stroke="#CCA300" stroke-width="1.25" stroke-linejoin="round"/>
<path d="M145.0,1038.5 L147.4,1046.9 L149.7,1048.9 L152.1,1046.6 L154.5,1043.1 L156.8,1046.2 L159.2,1051.6 L161.6,1054.9 L163.9,1044.9 L166.3,1043.5 L168.7,1052.0 L171.1,1049.9 L173.4,1040.1 L175.8,1048.4 L178.2,1044.1 L180.5,1039.3 L182.9,1041.2 L185.3,1037.9 L187.6,1040.9 L190.0,1045.9 L192.4,1056.5 L194.7,1050.4 L197.1,1040.3 L199.5,1048.0 L201.8,1048.0 L204.2,1048.8 L206.6,1050.4 L209.0,1050.0 L211.3,1046.1 L213.7,1048.5 L216.1,1044.1 L218.4,1048.0 L220.8,1058.1 L223.2,1051.7 L225.5,1047.6 L227.9,1052.6 L230.3,1049.9 L232.6,1048.1 L235.0,1047.2 L237.4,1045.5 L239.7,1048.9 L242.1,1047.4 L244.5,1050.1 L246.9,1057.3 L249.2,1058.6 L251.6,1055.8 L254.0,1048.9 L256.3,1043.5 L258.7,1043.0 L261.1,1053.1 L263.4,1053.5 L265.8,1052.2 L268.2,1052.9 L270.5,1054.2 L272.9,1050.3 L275.3,1048.7 L277.6,1050.9 L280.0,1048.7 L282.4,1050.5 L284.8,1045.2 L287.1,1047.1 L289.5,1051.8 L291.9,1052.4 L294.2,1053.2 L296.6,1056.3 L299.0,1058.9 L301.3,1053.0 L303.7,1052.3 L306.1,1054.4 L308.4,1049.9 L310.8,1060.7 L313.2,1055.8 L315.5,1055.3 L317.9,1057.4 L320.3,1048.5 L322.7,1046.5 L325.0,1053.3 L327.4,1048.8 L329.8,1052.3 L332.1,1051.7 L334.5,1050.0 L336.9,1047.9 L339.2,1055.9 L341.6,1057.7 L344.0,1060.0 L346.3,1057.9 L348.7,1061.6 L351.1,1058.5 L353.4,1055.8 L355.8,1052.7 L358.2,1054.5 L360.6,1063.3 L362.9,1054.4 L365.3,1053.4 L367.7,1055.7 L370.0,1057.5 L372.4,1057.9 L374.8,1057.4 L377.1,1061.2 L379.5,1059.3 L381.9,1059.5 L384.2,1058.6 L386.6,1059.6 L389.0,1053.6 L391.3,1054.1 L393.7,1054.5 L396.1,1058.0 L398.5,1058.5 L400.8,1064.9 L403.2,1060.3 L405.6,1063.0 L407.9,1058.1 L410.3,1059.3 L412.7,1058.0 L415.0,1064.8 L417.4,1058.4 L419.8,1058.7 L422.1,1062.0 L424.5,1056.6 L426.9,1063.4 L429.2,1060.6 L431.6,1059.3 L434.0,1059.1 L436.4,1057.1 L438.7,1048.6 L441.1,1055.5 L443.5,1049.0 L445.8,1051.4 L448.2,1052.1 L450.6,1055.4 L452.9,1056.4 L455.3,1064.1 L457.7,1054.2 L460.0,1057.6 L462.4,1068.6 L464.8,1055.3 L467.1,1063.0 L469.5,1054.2 L471.9,1053.7 L474.3,1058.7 L476.6,1060.5 L479.0,1064.0 L481.4,1065.2 L483.7,1061.5 L486.1,1060.4 L488.5,1056.7 L490.8,1062.2 L493.2,1060.3 L495.6,1059.0 L497.9,1061.0 L500.3,1058.0 L502.7,1057.9 L505.0,1059.7 L507.4,1052.9 L509.8,1061.0 L512.2,1060.2 L514.5,1057.3 L516.9,1060.4 L519.3,1060.5 L521.6,1056.1 L524.0,1051.6 L526.4,1058.4 L528.7,1052.7 L531.1,1051.8 L533.5,1061.9 L535.8,1055.9 L538.2,1056.8 L540.6,1058.1 L542.9,1057.5 L545.3,1056.1 L547.7,1052.2 L550.1,1055.1 L552.4,1057.5 L554.8,1059.0 L557.2,1058.5 L559.5,1062.1 L561.9,1058.9 L564.3,1055.5 L566.6,1056.3 L569.0,1058.5 L569.0,1173.5 L145.0,1173.5 Z" fill="#447EBC" fill-opacity="0.1" stroke="none"/>
<path d="M145.0,1038.5 L147.4,1046.9 L149.7,1048.9 L152.1,1046.6 L154.5,1043.1 L156.8,1046.2 L159.2,1051.6 L161.6,1054.9 L163.9,1044.9 L166.3,1043.5 L168.7,1052.0 L171.1,1049.9 L173.4,1040.1 L175.8,1048.4 L178.2,1044.1 L180.5,1039.3 L182.9,1041.2 L185.3,1037.9 L187.6,1040.9 L190.0,1045.9 L192.4,1056.5 L194.7,1050.4 L197.1,1040.3 L199.5,1048.0 L201.8,1048.0 L204.2,1048.8 L206.6,1050.4 L209.0,1050.0 L211.3,1046.1 L213.7,1048.5 L216.1,1044.1 L218.4,1048.0 L220.8,1058.1 L223.2,1051.7 L225.5,1047.6 L227.9,1052.6 L230.3,1049.9 L232.6,1048.1 L235.0,1047.2 L237.4,1045.5 L239.7,1048.9 L242.1,1047.4 L244.5,1050.1 L246.9,1057.3 L249.2,1058.6 L251.6,1055.8 L254.0,1048.9 L256.3,1043.5 L258.7,1043.0 L261.1,1053.1 L263.4,1053.5 L265.8,1052.2 L268.2,1052.9 L270.5,1054.2 L272.9,1050.3 L275.3,1048.7 L277.6,1050.9 L280.0,1048.7 L282.4,1050.5 L284.8,1045.2 L287.1,1047.1 L289.5,1051.8 L291.9,1052.4 L294.2,1053.2 L296.6,1056.3 L299.0,1058.9 L301.3,1053.0 L303.7,1052.3 L306.1,1054.4 L308.4,1049.9 L310.8,1060.7 L313.2,1055.8 L315.5,1055.3 L317.9,1057.4 L320.3,1048.5 L322.7,1046.5 L325.0,1053.3 L327.4,1048.8 L329.8,1052.3 L332.1,1051.7 L334.5,1050.0 L336.9,1047.9 L339.2,1055.9 L341.6,1057.7 L344.0,1060.0 L346.3,1057.9 L348.7,1061.6 L351.1,1058.5 L353.4,1055.8 L355.8,1052.7 L358.2,1054.5 L360.6,1063.3 L362.9,1054.4 L365.3,1053.4 L367.7,1055.7 L370.0,1057.5 L372.4,1057.9 L374.8,1057.4 L377.1,1061.2 L379.5,1059.3 L381.9,1059.5 L384.2,1058.6 L386.6,1059.6 L389.0,1053.6 L391.3,1054.1 L393.7,1054.5 L396.1,1058.0 L398.5,1058.5 L400.8,1064.9 L403.2,1060.3 L405.6,1063.0 L407.9,1058.1 L410.3,1059.3 L412.7,1058.0 L415.0,1064.8 L417.4,1058.4 L419.8,1058.7 L422.1,1062.0 L424.5,1056.6 L426.9,1063.4 L429.2,1060.6 L431.6,1059.3 L434.0,1059.1 L436.4,1057.1 L438.7,1048.6 L441.1,1055.5 L443.5,1049.0 L445.8,1051.4 L448.2,1052.1 L450.6,1055.4 L452.9,1056.4 L455.3,1064.1 L457.7,1054.2 L460.0,1057.6 L462.4,1068.6 L464.8,1055.3 L467.1,1063.0 L469.5,1054.2 L471.9,1053.7 L474.3,1058.7 L476.6,1060.5 L479.0,1064.0 L481.4,1065.2 L483.7,1061.5 L486.1,1060.4 L488.5,1056.7 L490.8,1062.2 L493.2,1060.3 L495.6,1059.0 L497.9,1061.0 L500.3,1058.0 L502.7,1057.9 L505.0,1059.7 L507.4,1052.9 L509.8,1061.0 L512.2,1060.2 L514.5,1057.3 L516.9,1060.4 L519.3,1060.5 L521.6,1056.1 L524.0,1051.6 L526.4,1058.4 L528.7,1052.7 L531.1,1051.8 L533.5,1061.9 L535.8,1055.9 L538.2,1056.8 L540.6,1058.1 L542.9,1057.5 L545.3,1056.1 L547.7,1052.2 L550.1,1055.1 L552.4,1057.5 L554.8,1059.0 L557.2,1058.5 L559.5,1062.1 L561.9,1058.9 L564.3,1055.5 L566.6,1056.3 L569.0,1058.5" fill="none" stroke="#447EBC" stroke-width="1.25" stroke-linejoin="round"/>
<path d="M145.0,1036.5 L147.4,1034.3 L149.7,1035.6 L152.1,1036.8 L154.5,1037.6 L156.8,1037.4 L159.2,1036.8 L161.6,1035.4 L163.9,1034.8 L166.3,1034.4 L168.7,1035.3 L171.1,1034.8 L173.4,1033.1 L175.8,1034.1 L178.2,1033.6 L180.5,1036.8 L182.9,1036.9 L185.3,1037.0 L187.6,1039.1 L190.0,1036.7 L192.4,1034.6 L194.7,1036.0 L197.1,1035.6 L199.5,1036.7 L201.8,1036.6 L204.2,1035.7 L206.6,1037.0 L209.0,1034.8 L211.3,1037.5 L213.7,1035.9 L216.1,1036.3 L218.4,1034.2 L220.8,1034.4 L223.2,1037.5 L225.5,1038.8 L227.9,1037.7 L230.3,1036.8 L232.6,1036.2 L235.0,1035.7 L237.4,1034.9 L239.7,1036.8 L242.1,1037.9 L244.5,1036.0 L246.9,1036.1 L249.2,1035.8 L251.6,1036.3 L254.0,1035.9 L256.3,1034.0 L258.7,1036.8 L261.1,1037.2 L263.4,1035.3 L265.8,1033.7 L268.2,1035.1 L270.5,1036.7 L272.9,1037.9 L275.3,1035.9 L277.6,1036.9 L280.0,1033.5 L282.4,1032.2 L284.8,1034.2 L287.1,1034.5 L289.5,1035.2 L291.9,1034.0 L294.2,1034.9 L296.6,1035.1 L299.0,1033.7 L301.3,1034.1 L303.7,1032.6 L306.1,1036.2 L308.4,1036.1 L310.8,1036.5 L313.2,1034.7 L315.5,1035.6 L317.9,1034.6 L320.3,1036.3 L322.7,1035.6 L325.0,1032.8 L327.4,1032.6 L329.8,1036.4 L332.1,1035.1 L334.5,1034.2 L336.9,1035.3 L339.2,1036.3 L341.6,1034.7 L344.0,1034.8 L346.3,1034.4 L348.7,1035.0 L351.1,1032.5 L353.4,1035.2 L355.8,1035.6 L358.2,1034.6 L360.6,1034.0 L362.9,1036.2 L365.3,1033.9 L367.7,1036.2 L370.0,1035.3 L372.4,1035.3 L374.8,1035.8 L377.1,1033.9 L379.5,1037.1 L381.9,1036.3 L384.2,1036.2 L386.6,1034.3 L389.0,1033.0 L391.3,1033.4 L393.7,1032.9 L396.1,1036.6 L398.5,1035.1 L400.8,1036.4 L403.2,1035.6 L405.6,1034.7 L407.9,1034.6 L410.3,1033.2 L412.7,1036.4 L415.0,1036.1 L417.4,1036.7 L419.8,1037.0 L422.1,1034.3 L424.5,1034.3 L426.9,1032.8 L429.2,1032.8 L431.6,1034.0 L434.0,1035.4 L436.4,1033.8 L438.7,1035.1 L441.1,1036.0 L443.5,1036.2 L445.8,1034.9 L448.2,1033.2 L450.6,1034.1 L452.9,1033.0 L455.3,1033.9 L457.7,1034.8 L460.0,1031.6 L462.4,1031.6 L464.8,1033.4 L467.1,1035.0 L469.5,1036.3 L471.9,1034.5 L474.3,1034.7 L476.6,1034.0 L479.0,1033.9 L481.4,1033.7 L483.7,1032.9 L486.1,1033.5 L488.5,1034.9 L490.8,1035.3 L493.2,1033.9 L495.6,1035.3 L497.9,1033.8 L500.3,1033.3 L502.7,1034.0 L505.0,1035.0 L507.4,1036.4 L509.8,1036.1 L512.2,1036.5 L514.5,1034.8 L516.9,1034.8 L519.3,1035.3 L521.6,1033.5 L524.0,1033.8 L526.4,1034.0 L528.7,1033.4 L531.1,1032.8 L533.5,1035.4 L535.8,1033.7 L538.2,1035.9 L540.6,1035.4 L542.9,1033.4 L545.3,1033.1 L547.7,1033.0 L550.1,1033.5 L552.4,1032.3 L554.8,1035.1 L557.2,1034.6 L559.5,1034.1 L561.9,1031.8 L564.3,1032.2 L566.6,1032.3 L569.0,1034.2 L569.0,1173.5 L145.0,1173.5 Z" fill="#C15C17" fill-opacity="0.1" stroke="none"/>
<path d="M145.0,1036.5 L147.4,1034.3 L149.7,1035.6 L152.1,1036.8 L154.5,1037.6 L156.8,1037.4 L159.2,1036.8 L161.6,1035.4 L163.9,1034.8 L166.3,1034.4 L168.7,1035.3 L171.1,1034.8 L173.4,1033.1 L175.8,1034.1 L178.2,1033.6 L180.5,1036.8 L182.9,1036.9 L185.3,1037.0 L187.6,1039.1 L190.0,1036.7 L192.4,1034.6 L194.7,1036.0 L197.1,1035.6 L199.5,1036.7 L201.8,1036.6 L204.2,1035.7 L206.6,1037.0 L209.0,1034.8 L211.3,1037.5 L213.7,1035.9 L216.1,1036.3 L218.4,1034.2 L220.8,1034.4 L223.2,1037.5 L225.5,1038.8 L227.9,1037.7 L230.3,1036.8 L232.6,1036.2 L235.0,1035.7 L237.4,1034.9 L239.7,1036.8 L242.1,1037.9 L244.5,1036.0 L246.9,1036.1 L249.2,1035.8 L251.6,1036.3 L254.0,1035.9 L256.3,1034.0 L258.7,1036.8 L261.1,1037.2 L263.4,1035.3 L265.8,1033.7 L268.2,1035.1 L270.5,1036.7 L272.9,1037.9 L275.3,1035.9 L277.6,1036.9 L280.0,1033.5 L282.4,1032.2 L284.8,1034.2 L287.1,1034.5 L289.5,1035.2 L291.9,1034.0 L294.2,1034.9 L296.6,1035.1 L299.0,1033.7 L301.3,1034.1 L303.7,1032.6 L306.1,1036.2 L308.4,1036.1 L310.8,1036.5 L313.2,1034.7 L315.5,1035.6 L317.9,1034.6 L320.3,1036.3 L322.7,1035.6 L325.0,1032.8 L327.4,1032.6 L329.8,1036.4 L332.1,1035.1 L334.5,1034.2 L336.9,1035.3 L339.2,1036.3 L341.6,1034.7 L344.0,1034.8 L346.3,1034.4 L348.7,1035.0 L351.1,1032.5 L353.4,1035.2 L355.8,1035.6 L358.2,1034.6 L360.6,1034.0 L362.9,1036.2 L365.3,1033.9 L367.7,1036.2 L370.0,1035.3 L372.4,1035.3 L374.8,1035.8 L377.1,1033.9 L379.5,1037.1 L381.9,1036.3 L384.2,1036.2 L386.6,1034.3 L389.0,1033.0 L391.3,1033.4 L393.7,1032.9 L396.1,1036.6 L398.5,1035.1 L400.8,1036.4 L403.2,1035.6 L405.6,1034.7 L407.9,1034.6 L410.3,1033.2 L412.7,1036.4 L415.0,1036.1 L417.4,1036.7 L419.8,1037.0 L422.1,1034.3 L424.5,1034.3 L426.9,1032.8 L429.2,1032.8 L431.6,1034.0 L434.0,1035.4 L436.4,1033.8 L438.7,1035.1 L441.1,1036.0 L443.5,1036.2 L445.8,1034.9 L448.2,1033.2 L450.6,1034.1 L452.9,1033.0 L455.3,1033.9 L457.7,1034.8 L460.0,1031.6 L462.4,1031.6 L464.8,1033.4 L467.1,1035.0 L469.5,1036.3 L471.9,1034.5 L474.3,1034.7 L476.6,1034.0 L479.0,1033.9 L481.4,1033.7 L483.7,1032.9 L486.1,1033.5 L488.5,1034.9 L490.8,1035.3 L493.2,1033.9 L495.6,1035.3 L497.9,1033.8 L500.3,1033.3 L502.7,1034.0 L505.0,1035.0 L507.4,1036.4 L509.8,1036.1 L512.2,1036.5 L514.5,1034.8 L516.9,1034.8 L519.3,1035.3 L521.6,1033.5 L524.0,1033.8 L526.4,1034.0 L528.7,1033.4 L531.1,1032.8 L533.5,1035.4 L535.8,1033.7 L538.2,1035.9 L540.6,1035.4 L542.9,1033.4 L545.3,1033.1 L547.7,1033.0 L550.1,1033.5 L552.4,1032.3 L554.8,1035.1 L557.2,1034.6 L559.5,1034.1 L561.9,1031.8 L564.3,1032.2 L566.6,1032.3 L569.0,1034.2" fill="none" stroke="#C15C17" stroke-width="1.25" stroke-linejoin="round"/>
<path d="M145.0,1037.6 L147.4,1038.6 L149.7,1037.1 L152.1,1038.4 L154.5,1038.4 L156.8,1040.1 L159.2,1039.3 L161.6,1038.4 L163.9,1037.9 L166.3,1037.5 L168.7,1037.6 L171.1,1039.0 L173.4,1037.8 L175.8,1038.7 L178.2,1038.4 L180.5,1038.9 L182.9,1036.7 L185.3,1037.9 L187.6,1041.1 L190.0,1039.1 L192.4,1037.4 L194.7,1037.6 L197.1,1037.5 L199.5,1038.8 L201.8,1038.0 L204.2,1040.8 L206.6,1040.4 L209.0,1037.7 L211.3,1037.1 L213.7,1037.7 L216.1,1036.7 L218.4,1037.7 L220.8,1039.6 L223.2,1036.5 L225.5,1039.1 L227.9,1037.7 L230.3,1038.2 L232.6,1038.4 L235.0,1039.6 L237.4,1039.8 L239.7,1038.6 L242.1,1038.6 L244.5,1037.2 L246.9,1036.3 L249.2,1038.6 L251.6,1039.5 L254.0,1038.6 L256.3,1037.6 L258.7,1036.9 L261.1,1037.5 L263.4,1038.3 L265.8,1037.3 L268.2,1037.2 L270.5,1037.1 L272.9,1038.9 L275.3,1037.7 L277.6,1038.0 L280.0,1037.7 L282.4,1038.0 L284.8,1037.5 L287.1,1038.4 L289.5,1038.5 L291.9,1038.6 L294.2,1037.4 L296.6,1037.9 L299.0,1037.5 L301.3,1035.7 L303.7,1038.4 L306.1,1036.5 L308.4,1037.5 L310.8,1037.1 L313.2,1036.5 L315.5,1036.7 L317.9,1036.6 L320.3,1037.7 L322.7,1037.6 L325.0,1038.6 L327.4,1037.4 L329.8,1037.9 L332.1,1037.6 L334.5,1037.5 L336.9,1036.7 L339.2,1038.3 L341.6,1038.7 L344.0,1037.7 L346.3,1037.0 L348.7,1038.2 L351.1,1035.2 L353.4,1037.5 L355.8,1036.1 L358.2,1036.7 L360.6,1038.1 L362.9,1038.6 L365.3,1036.0 L367.7,1035.1 L370.0,1038.9 L372.4,1037.2 L374.8,1036.5 L377.1,1036.4 L379.5,1037.2 L381.9,1038.3 L384.2,1035.0 L386.6,1035.7 L389.0,1036.9 L391.3,1037.5 L393.7,1038.5 L396.1,1038.3 L398.5,1037.9 L400.8,1038.8 L403.2,1036.2 L405.6,1037.3 L407.9,1036.8 L410.3,1038.4 L412.7,1038.0 L415.0,1038.9 L417.4,1038.1 L419.8,1039.9 L422.1,1038.7 L424.5,1039.2 L426.9,1037.3 L429.2,1037.9 L431.6,1036.9 L434.0,1037.7 L436.4,1039.1 L438.7,1037.3 L441.1,1038.1 L443.5,1038.8 L445.8,1037.5 L448.2,1037.0 L450.6,1035.3 L452.9,1036.8 L455.3,1038.7 L457.7,1034.5 L460.0,1034.7 L462.4,1037.3 L464.8,1036.8 L467.1,1039.2 L469.5,1037.6 L471.9,1037.5 L474.3,1038.3 L476.6,1037.0 L479.0,1037.8 L481.4,1036.0 L483.7,1037.3 L486.1,1037.2 L488.5,1037.2 L490.8,1036.7 L493.2,1038.2 L495.6,1038.1 L497.9,1035.9 L500.3,1033.4 L502.7,1034.8 L505.0,1036.6 L507.4,1037.6 L509.8,1036.8 L512.2,1039.5 L514.5,1037.6 L516.9,1036.8 L519.3,1036.7 L521.6,1035.3 L524.0,1037.6 L526.4,1037.0 L528.7,1037.7 L531.1,1037.4 L533.5,1038.2 L535.8,1035.8 L538.2,1037.3 L540.6,1037.4 L542.9,1036.9 L545.3,1036.3 L547.7,1035.5 L550.1,1035.4 L552.4,1035.6 L554.8,1036.3 L557.2,1035.8 L559.5,1036.4 L561.9,1036.8 L564.3,1035.4 L566.6,1035.7 L569.0,1034.9 L569.0,1173.5 L145.0,1173.5 Z" fill="#890F02" fill-opacity="0.1" stroke="none"/>
<path d="M145.0,1037.6 L147.4,1038.6 L149.7,1037.1 L152.1,1038.4 L154.5,1038.4 L156.8,1040.1 L159.2,1039.3 L161.6,1038.4 L163.9,1037.9 L166.3,1037.5 L168.7,1037.6 L171.1,1039.0 L173.4,1037.8 L175.8,1038.7 L178.2,1038.4 L180.5,1038.9 L182.9,1036.7 L185.3,1037.9 L187.6,1041.1 L190.0,1039.1 L192.4,1037.4 L194.7,1037.6 L197.1,1037.5 L199.5,1038.8 L201.8,1038.0 L204.2,1040.8 L206.6,1040.4 L209.0,1037.7 L211.3,1037.1 L213.7,1037.7 L216.1,1036.7 L218.4,1037.7 L220.8,1039.6 L223.2,1036.5 L225.5,1039.1 L227.9,1037.7 L230.3,1038.2 L232.6,1038.4 L235.0,1039.6 L237.4,1039.8 L239.7,1038.6 L242.1,1038.6 L244.5,1037.2 L246.9,1036.3 L249.2,1038.6 L251.6,1039.5 L254.0,1038.6 L256.3,1037.6 L258.7,1036.9 L261.1,1037.5 L263.4,1038.3 L265.8,1037.3 L268.2,1037.2 L270.5,1037.1 L272.9,1038.9 L275.3,1037.7 L277.6,1038.0 L280.0,1037.7 L282.4,1038.0 L284.8,1037.5 L287.1,1038.4 L289.5,1038.5 L291.9,1038.6 L294.2,1037.4 L296.6,1037.9 L299.0,1037.5 L301.3,1035.7 L303.7,1038.4 L306.1,1036.5 L308.4,1037.5 L310.8,1037.1 L313.2,1036.5 L315.5,1036.7 L317.9,1036.6 L320.3,1037.7 L322.7,1037.6 L325.0,1038.6 L327.4,1037.4 L329.8,1037.9 L332.1,1037.6 L334.5,1037.5 L336.9,1036.7 L339.2,1038.3 L341.6,1038.7 L344.0,1037.7 L346.3,1037.0 L348.7,1038.2 L351.1,1035.2 L353.4,1037.5 L355.8,1036.1 L358.2,1036.7 L360.6,1038.1 L362.9,1038.6 L365.3,1036.0 L367.7,1035.1 L370.0,1038.9 L372.4,1037.2 L374.8,1036.5 L377.1,1036.4 L379.5,1037.2 L381.9,1038.3 L384.2,1035.0 L386.6,1035.7 L389.0,1036.9 L391.3,1037.5 L393.7,1038.5 L396.1,1038.3 L398.5,1037.9 L400.8,1038.8 L403.2,1036.2 L405.6,1037.3 L407.9,1036.8 L410.3,1038.4 L412.7,1038.0 L415.0,1038.9 L417.4,1038.1 L419.8,1039.9 L422.1,1038.7 L424.5,1039.2 L426.9,1037.3 L429.2,1037.9 L431.6,1036.9 L434.0,1037.7 L436.4,1039.1 L438.7,1037.3 L441.1,1038.1 L443.5,1038.8 L445.8,1037.5 L448.2,1037.0 L450.6,1035.3 L452.9,1036.8 L455.3,1038.7 L457.7,1034.5 L460.0,1034.7 L462.4,1037.3 L464.8,1036.8 L467.1,1039.2 L469.5,1037.6 L471.9,1037.5 L474.3,1038.3 L476.6,1037.0 L479.0,1037.8 L481.4,1036.0 L483.7,1037.3 L486.1,1037.2 L488.5,1037.2 L490.8,1036.7 L493.2,1038.2 L495.6,1038.1 L497.9,1035.9 L500.3,1033.4 L502.7,1034.8 L505.0,1036.6 L507.4,1037.6 L509.8,1036.8 L512.2,1039.5 L514.5,1037.6 L516.9,1036.8 L519.3,1036.7 L521.6,1035.3 L524.0,1037.6 L526.4,1037.0 L528.7,1037.7 L531.1,1037.4 L533.5,1038.2 L535.8,1035.8 L538.2,1037.3 L540.6,1037.4 L542.9,1036.9 L545.3,1036.3 L547.7,1035.5 L550.1,1035.4 L552.4,1035.6 L554.8,1036.3 L557.2,1035.8 L559.5,1036.4 L561.9,1036.8 L564.3,1035.4 L566.6,1035.7 L569.0,1034.9" fill="none" stroke="#890F02" stroke-width="1.25" stroke-linejoin="round"/>
<path d="M145.0,1043.0 L147.4,1041.3 L149.7,1041.8 L152.1,1040.7 L154.5,1041.0 L156.8,1041.8 L159.2,1040.6 L161.6,1042.4 L163.9,1042.0 L166.3,1042.1 L168.7,1040.8 L171.1,1041.2 L173.4,1041.0 L175.8,1040.6 L178.2,1043.6 L180.5,1043.0 L182.9,1041.6 L185.3,1040.3 L187.6,1040.3 L190.0,1039.5 L192.4,1040.9 L194.7,1041.0 L197.1,1041.7 L199.5,1041.8 L201.8,1042.2 L204.2,1042.0 L206.6,1041.6 L209.0,1042.0 L211.3,1041.3 L213.7,1043.1 L216.1,1041.2 L218.4,1040.9 L220.8,1040.5 L223.2,1041.4 L225.5,1041.7 L227.9,1040.1 L230.3,1040.9 L232.6,1038.8 L235.0,1041.8 L237.4,1041.5 L239.7,1042.3 L242.1,1042.2 L244.5,1042.1 L246.9,1041.8 L249.2,1040.3 L251.6,1041.9 L254.0,1040.5 L256.3,1042.3 L258.7,1041.7 L261.1,1039.6 L263.4,1039.9 L265.8,1040.2 L268.2,1039.9 L270.5,1039.8 L272.9,1039.8 L275.3,1038.9 L277.6,1041.3 L280.0,1040.9 L282.4,1040.0 L284.8,1039.6 L287.1,1039.7 L289.5,1038.9 L291.9,1040.6 L294.2,1042.1 L296.6,1039.6 L299.0,1040.3 L301.3,1041.0 L303.7,1040.6 L306.1,1041.0 L308.4,1039.6 L310.8,1039.2 L313.2,1039.8 L315.5,1039.7 L317.9,1040.2 L320.3,1039.2 L322.7,1042.6 L325.0,1042.3 L327.4,1041.0 L329.8,1041.0 L332.1,1041.6 L334.5,1040.0 L336.9,1041.3 L339.2,1040.4 L341.6,1040.2 L344.0,1040.2 L346.3,1041.1 L348.7,1040.7 L351.1,1039.0 L353.4,1039.3 L355.8,1038.9 L358.2,1039.9 L360.6,1041.9 L362.9,1041.2 L365.3,1040.6 L367.7,1038.9 L370.0,1038.5 L372.4,1039.2 L374.8,1040.7 L377.1,1040.1 L379.5,1040.4 L381.9,1040.4 L384.2,1041.5 L386.6,1039.9 L389.0,1040.0 L391.3,1039.1 L393.7,1041.3 L396.1,1041.6 L398.5,1036.5 L400.8,1039.8 L403.2,1039.6 L405.6,1039.3 L407.9,1040.8 L410.3,1038.3 L412.7,1039.4 L415.0,1039.6 L417.4,1037.8 L419.8,1040.1 L422.1,1040.4 L424.5,1040.3 L426.9,1041.4 L429.2,1040.0 L431.6,1039.3 L434.0,1039.4 L436.4,1038.9 L438.7,1038.5 L441.1,1039.0 L443.5,1039.7 L445.8,1038.3 L448.2,1040.0 L450.6,1038.2 L452.9,1039.4 L455.3,1038.7 L457.7,1037.3 L460.0,1041.3 L462.4,1040.3 L464.8,1040.2 L467.1,1037.9 L469.5,1039.5 L471.9,1036.5 L474.3,1040.2 L476.6,1039.3 L479.0,1039.8 L481.4,1039.0 L483.7,1039.9 L486.1,1040.0 L488.5,1041.6 L490.8,1039.9 L493.2,1041.1 L495.6,1041.3 L497.9,1039.8 L500.3,1039.6 L502.7,1038.3 L505.0,1040.4 L507.4,1039.2 L509.8,1038.9 L512.2,1039.5 L514.5,1040.2 L516.9,1039.6 L519.3,1038.4 L521.6,1039.3 L524.0,1038.3 L526.4,1039.2 L528.7,1037.3 L531.1,1038.5 L533.5,1039.1 L535.8,1040.8 L538.2,1041.2 L540.6,1039.3 L542.9,1039.4 L545.3,1038.8 L547.7,1039.7 L550.1,1039.4 L552.4,1039.8 L554.8,1038.9 L557.2,1039.2 L559.5,1037.0 L561.9,1039.1 L564.3,1037.8 L566.6,1039.7 L569.0,1039.6 L569.0,1173.5 L145.0,1173.5 Z" fill="#0A437C" fill-opacity="0.1" stroke="none"/>
<path d="M145.0,1043.0 L147.4,1041.3 L149.7,1041.8 L152.1,1040.7 L154.5,1041.0 L156.8,1041.8 L159.2,1040.6 L161.6,1042.4 L163.9,1042.0 L166.3,1042.1 L168.7,1040.8 L171.1,1041.2 L173.4,1041.0 L175.8,1040.6 L178.2,1043.6 L180.5,1043.0 L182.9,1041.6 L185.3,1040.3 L187.6,1040.3 L190.0,1039.5 L192.4,1040.9 L194.7,1041.0 L197.1,1041.7 L199.5,1041.8 L201.8,1042.2 L204.2,1042.0 L206.6,1041.6 L209.0,1042.0 L211.3,1041.3 L213.7,1043.1 L216.1,1041.2 L218.4,1040.9 L220.8,1040.5 L223.2,1041.4 L225.5,1041.7 L227.9,1040.1 L230.3,1040.9 L232.6,1038.8 L235.0,1041.8 L237.4,1041.5 L239.7,1042.3 L242.1,1042.2 L244.5,1042.1 L246.9,1041.8 L249.2,1040.3 L251.6,1041.9 L254.0,1040.5 L256.3,1042.3 L258.7,1041.7 L261.1,1039.6 L263.4,1039.9 L265.8,1040.2 L268.2,1039.9 L270.5,1039.8 L272.9,1039.8 L275.3,1038.9 L277.6,1041.3 L280.0,1040.9 L282.4,1040.0 L284.8,1039.6 L287.1,1039.7 L289.5,1038.9 L291.9,1040.6 L294.2,1042.1 L296.6,1039.6 L299.0,1040.3 L301.3,1041.0 L303.7,1040.6 L306.1,1041.0 L308.4,1039.6 L310.8,1039.2 L313.2,1039.8 L315.5,1039.7 L317.9,1040.2 L320.3,1039.2 L322.7,1042.6 L325.0,1042.3 L327.4,1041.0 L329.8,1041.0 L332.1,1041.6 L334.5,1040.0 L336.9,1041.3 L339.2,1040.4 L341.6,1040.2 L344.0,1040.2 L346.3,1041.1 L348.7,1040.7 L351.1,1039.0 L353.4,1039.3 L355.8,1038.9 L358.2,1039.9 L360.6,1041.9 L362.9,1041.2 L365.3,1040.6 L367.7,1038.9 L370.0,1038.5 L372.4,1039.2 L374.8,1040.7 L377.1,1040.1 L379.5,1040.4 L381.9,1040.4 L384.2,1041.5 L386.6,1039.9 L389.0,1040.0 L391.3,1039.1 L393.7,1041.3 L396.1,1041.6 L398.5,1036.5 L400.8,1039.8 L403.2,1039.6 L405.6,1039.3 L407.9,1040.8 L410.3,1038.3 L412.7,1039.4 L415.0,1039.6 L417.4,1037.8 L419.8,1040.1 L422.1,1040.4 L424.5,1040.3 L426.9,1041.4 L429.2,1040.0 L431.6,1039.3 L434.0,1039.4 L436.4,1038.9 L438.7,1038.5 L441.1,1039.0 L443.5,1039.7 L445.8,1038.3 L448.2,1040.0 L450.6,1038.2 L452.9,1039.4 L455.3,1038.7 L457.7,1037.3 L460.0,1041.3 L462.4,1040.3 L464.8,1040.2 L467.1,1037.9 L469.5,1039.5 L471.9,1036.5 L474.3,1040.2 L476.6,1039.3 L479.0,1039.8 L481.4,1039.0 L483.7,1039.9 L486.1,1040.0 L488.5,1041.6 L490.8,1039.9 L493.2,1041.1 L495.6,1041.3 L497.9,1039.8 L500.3,1039.6 L502.7,1038.3 L505.0,1040.4 L507.4,1039.2 L509.8,1038.9 L512.2,1039.5 L514.5,1040.2 L516.9,1039.6 L519.3,1038.4 L521.6,1039.3 L524.0,1038.3 L526.4,1039.2 L528.7,1037.3 L531.1,1038.5 L533.5,1039.1 L535.8,1040.8 L538.2,1041.2 L540.6,1039.3 L542.9,1039.4 L545.3,1038.8 L547.7,1039.7 L550.1,1039.4 L552.4,1039.8 L554.8,1038.9 L557.2,1039.2 L559.5,1037.0 L561.9,1039.1 L564.3,1037.8 L566.6,1039.7 L569.0,1039.6" fill="none" stroke="#0A437C" stroke-width="1.25" stroke-linejoin="round"/>
<path d="M145.0,1036.5 L147.4,1036.8 L149.7,1034.3 L152.1,1034.1 L154.5,1036.4 L156.8,1036.1 L159.2,1035.2 L161.6,1037.2 L163.9,1032.7 L166.3,1035.1 L168.7,1035.2 L171.1,1033.7 L173.4,1033.9 L175.8,1033.9 L178.2,1033.5 L180.5,1032.4 L182.9,1035.3 L185.3,1033.7 L187.6,1035.4 L190.0,1034.4 L192.4,1034.8 L194.7,1036.2 L197.1,1037.1 L199.5,1035.6 L201.8,1036.2 L204.2,1037.1 L206.6,1037.6 L209.0,1038.4 L211.3,1035.0 L213.7,1035.6 L216.1,1035.1 L218.4,1034.9 L220.8,1035.7 L223.2,1036.0 L225.5,1036.9 L227.9,1038.8 L230.3,1035.2 L232.6,1035.8 L235.0,1035.4 L237.4,1035.3 L239.7,1037.5 L242.1,1034.7 L244.5,1034.4 L246.9,1034.6 L249.2,1034.8 L251.6,1036.0 L254.0,1035.5 L256.3,1038.2 L258.7,1033.3 L261.1,1031.4 L263.4,1033.3 L265.8,1033.5 L268.2,1032.8 L270.5,1034.7 L272.9,1037.6 L275.3,1035.3 L277.6,1036.1 L280.0,1036.4 L282.4,1037.8 L284.8,1035.0 L287.1,1035.0 L289.5,1035.9 L291.9,1033.6 L294.2,1033.5 L296.6,1036.2 L299.0,1036.5 L301.3,1034.5 L303.7,1035.5 L306.1,1034.7 L308.4,1034.3 L310.8,1033.4 L313.2,1033.9 L315.5,1036.6 L317.9,1037.0 L320.3,1035.5 L322.7,1037.7 L325.0,1034.8 L327.4,1037.0 L329.8,1036.4 L332.1,1033.9 L334.5,1037.4 L336.9,1036.1 L339.2,1035.7 L341.6,1034.9 L344.0,1032.2 L346.3,1036.6 L348.7,1036.4 L351.1,1035.6 L353.4,1037.4 L355.8,1035.9 L358.2,1039.5 L360.6,1037.2 L362.9,1032.3 L365.3,1034.6 L367.7,1033.0 L370.0,1032.3 L372.4,1035.6 L374.8,1035.9 L377.1,1036.4 L379.5,1037.8 L381.9,1033.4 L384.2,1035.3 L386.6,1034.6 L389.0,1034.8 L391.3,1035.0 L393.7,1034.6 L396.1,1032.4 L398.5,1033.2 L400.8,1036.6 L403.2,1035.6 L405.6,1036.7 L407.9,1035.5 L410.3,1035.3 L412.7,1035.6 L415.0,1037.2 L417.4,1036.1 L419.8,1035.5 L422.1,1033.8 L424.5,1035.6 L426.9,1035.1 L429.2,1034.3 L431.6,1036.4 L434.0,1037.0 L436.4,1034.1 L438.7,1033.4 L441.1,1036.4 L443.5,1033.1 L445.8,1033.3 L448.2,1034.7 L450.6,1037.6 L452.9,1035.0 L455.3,1034.6 L457.7,1036.2 L460.0,1034.5 L462.4,1035.6 L464.8,1035.8 L467.1,1035.1 L469.5,1037.3 L471.9,1033.7 L474.3,1032.7 L476.6,1034.3 L479.0,1035.4 L481.4,1033.1 L483.7,1034.7 L486.1,1034.1 L488.5,1036.8 L490.8,1034.8 L493.2,1033.9 L495.6,1034.1 L497.9,1006.9 L500.3,1032.8 L502.7,1035.7 L505.0,1032.1 L507.4,1033.2 L509.8,1034.2 L512.2,1033.8 L514.5,1034.7 L516.9,1036.4 L519.3,1033.5 L521.6,1033.3 L524.0,1035.2 L526.4,1033.2 L528.7,1035.3 L531.1,1035.2 L533.5,1034.6 L535.8,1033.7 L538.2,1036.3 L540.6,1036.0 L542.9,1034.5 L545.3,1032.5 L547.7,1030.8 L550.1,1032.4 L552.4,1033.6 L554.8,1032.3 L557.2,1034.3 L559.5,1033.6 L561.9,1031.3 L564.3,1034.6 L566.6,1037.4 L569.0,1036.2 L569.0,1173.5 L145.0,1173.5 Z" fill="#6D1F62" fill-opacity="0.1" stroke="none"/>
<path d="M145.0,1036.5 L147.4,1036.8 L149.7,1034.3 L152.1,1034.1 L154.5,1036.4 L156.8,1036.1 L159.2,1035.2 L161.6,1037.2 L163.9,1032.7 L166.3,1035.1 L168.7,1035.2 L171.1,1033.7 L173.4,1033.9 L175.8,1033.9 L178.2,1033.5 L180.5,1032.4 L182.9,1035.3 L185.3,1033.7 L187.6,1035.4 L190.0,1034.4 L192.4,1034.8 L194.7,1036.2 L197.1,1037.1 L199.5,1035.6 L201.8,1036.2 L204.2,1037.1 L206.6,1037.6 L209.0,1038.4 L211.3,1035.0 L213.7,1035.6 L216.1,1035.1 L218.4,1034.9 L220.8,1035.7 L223.2,1036.0 L225.5,1036.9 L227.9,1038.8 L230.3,1035.2 L232.6,1035.8 L235.0,1035.4 L237.4,1035.3 L239.7,1037.5 L242.1,1034.7 L244.5,1034.4 L246.9,1034.6 L249.2,1034.8 L251.6,1036.0 L254.0,1035.5 L256.3,1038.2 L258.7,1033.3 L261.1,1031.4 L263.4,1033.3 L265.8,1033.5 L268.2,1032.8 L270.5,1034.7 L272.9,1037.6 L275.3,1035.3 L277.6,1036.1 L280.0,1036.4 L282.4,1037.8 L284.8,1035.0 L287.1,1035.0 L289.5,1035.9 L291.9,1033.6 L294.2,1033.5 L296.6,1036.2 L299.0,1036.5 L301.3,1034.5 L303.7,1035.5 L306.1,1034.7 L308.4,1034.3 L310.8,1033.4 L313.2,1033.9 L315.5,1036.6 L317.9,1037.0 L320.3,1035.5 L322.7,1037.7 L325.0,1034.8 L327.4,1037.0 L329.8,1036.4 L332.1,1033.9 L334.5,1037.4 L336.9,1036.1 L339.2,1035.7 L341.6,1034.9 L344.0,1032.2 L346.3,1036.6 L348.7,1036.4 L351.1,1035.6 L353.4,1037.4 L355.8,1035.9 L358.2,1039.5 L360.6,1037.2 L362.9,1032.3 L365.3,1034.6 L367.7,1033.0 L370.0,1032.3 L372.4,1035.6 L374.8,1035.9 L377.1,1036.4 L379.5,1037.8 L381.9,1033.4 L384.2,1035.3 L386.6,1034.6 L389.0,1034.8 L391.3,1035.0 L393.7,1034.6 L396.1,1032.4 L398.5,1033.2 L400.8,1036.6 L403.2,1035.6 L405.6,1036.7 L407.9,1035.5 L410.3,1035.3 L412.7,1035.6 L415.0,1037.2 L417.4,1036.1 L419.8,1035.5 L422.1,1033.8 L424.5,1035.6 L426.9,1035.1 L429.2,1034.3 L431.6,1036.4 L434.0,1037.0 L436.4,1034.1 L438.7,1033.4 L441.1,1036.4 L443.5,1033.1 L445.8,1033.3 L448.2,1034.7 L450.6,1037.6 L452.9,1035.0 L455.3,1034.6 L457.7,1036.2 L460.0,1034.5 L462.4,1035.6 L464.8,1035.8 L467.1,1035.1 L469.5,1037.3 L471.9,1033.7 L474.3,1032.7 L476.6,1034.3 L479.0,1035.4 L481.4,1033.1 L483.7,1034.7 L486.1,1034.1 L488.5,1036.8 L490.8,1034.8 L493.2,1033.9 L495.6,1034.1 L497.9,1006.9 L500.3,1032.8 L502.7,1035.7 L505.0,1032.1 L507.4,1033.2 L509.8,1034.2 L512.2,1033.8 L514.5,1034.7 L516.9,1036.4 L519.3,1033.5 L521.6,1033.3 L524.0,1035.2 L526.4,1033.2 L528.7,1035.3 L531.1,1035.2 L533.5,1034.6 L535.8,1033.7 L538.2,1036.3 L540.6,1036.0 L542.9,1034.5 L545.3,1032.5 L547.7,1030.8 L550.1,1032.4 L552.4,1033.6 L554.8,1032.3 L557.2,1034.3 L559.5,1033.6 L561.9,1031.3 L564.3,1034.6 L566.6,1037.4 L569.0,1036.2" fill="none" stroke="#6D1F62" stroke-width="1.25" stroke-linejoin="round"/>
<path d="M145.0,1040.2 L147.4,1039.1 L149.7,1040.7 L152.1,1038.9 L154.5,1039.2 L156.8,1038.8 L159.2,1040.0 L161.6,1038.6 L163.9,1038.5 L166.3,1039.4 L168.7,1038.2 L171.1,1041.8 L173.4,1039.6 L175.8,1039.4 L178.2,1040.1 L180.5,1039.2 L182.9,1038.6 L185.3,1039.8 L187.6,1039.4 L190.0,1039.2 L192.4,1038.7 L194.7,1037.6 L197.1,1039.1 L199.5,1037.6 L201.8,1040.0 L204.2,1039.0 L206.6,1040.9 L209.0,1039.5 L211.3,1038.4 L213.7,1036.6 L216.1,1038.2 L218.4,1039.5 L220.8,1038.0 L223.2,1038.6 L225.5,1038.7 L227.9,1037.9 L230.3,1037.4 L232.6,1040.3 L235.0,1039.2 L237.4,1039.0 L239.7,1040.0 L242.1,1041.0 L244.5,1039.5 L246.9,1039.5 L249.2,1039.8 L251.6,1039.2 L254.0,1039.3 L256.3,1038.9 L258.7,1037.1 L261.1,1038.3 L263.4,1036.6 L265.8,1036.7 L268.2,1037.1 L270.5,1039.0 L272.9,1039.1 L275.3,1039.8 L277.6,1038.5 L280.0,1038.7 L282.4,1038.2 L284.8,1038.2 L287.1,1038.3 L289.5,1038.9 L291.9,1039.7 L294.2,1039.4 L296.6,1038.0 L299.0,1038.6 L301.3,1038.6 L303.7,1037.6 L306.1,1037.7 L308.4,1039.9 L310.8,1039.0 L313.2,1039.6 L315.5,1038.8 L317.9,1038.1 L320.3,1037.8 L322.7,1036.4 L325.0,1038.4 L327.4,1038.7 L329.8,1037.9 L332.1,1037.2 L334.5,1039.1 L336.9,1037.8 L339.2,1037.5 L341.6,1038.2 L344.0,1038.6 L346.3,1037.6 L348.7,1037.6 L351.1,1037.6 L353.4,1038.9 L355.8,1040.3 L358.2,1039.0 L360.6,1038.7 L362.9,1037.9 L365.3,1038.9 L367.7,1037.7 L370.0,1037.6 L372.4,1038.8 L374.8,1037.3 L377.1,1038.3 L379.5,1038.9 L381.9,1038.1 L384.2,1038.1 L386.6,1039.1 L389.0,1037.7 L391.3,1038.0 L393.7,1038.9 L396.1,1040.2 L398.5,1038.2 L400.8,1038.0 L403.2,1037.9 L405.6,1036.5 L407.9,1040.2 L410.3,1037.3 L412.7,1036.3 L415.0,1038.5 L417.4,1037.0 L419.8,1038.5 L422.1,1039.2 L424.5,1038.4 L426.9,1036.1 L429.2,1036.9 L431.6,1037.5 L434.0,1036.8 L436.4,1038.2 L438.7,1036.3 L441.1,1035.7 L443.5,1036.7 L445.8,1038.3 L448.2,1036.8 L450.6,1037.2 L452.9,1036.9 L455.3,1036.3 L457.7,1036.8 L460.0,1038.4 L462.4,1036.3 L464.8,1037.0 L467.1,1037.1 L469.5,1036.8 L471.9,1037.1 L474.3,1036.7 L476.6,1037.1 L479.0,1037.7 L481.4,1038.2 L483.7,1038.3 L486.1,1038.1 L488.5,1036.7 L490.8,1037.7 L493.2,1037.7 L495.6,1037.7 L497.9,1037.0 L500.3,1036.7 L502.7,1035.1 L505.0,1038.3 L507.4,1038.0 L509.8,1037.0 L512.2,1039.1 L514.5,1036.1 L516.9,1037.1 L519.3,1038.2 L521.6,1036.6 L524.0,1039.5 L526.4,1037.8 L528.7,1038.6 L531.1,1037.7 L533.5,1037.1 L535.8,1036.4 L538.2,1036.6 L540.6,1034.8 L542.9,1036.5 L545.3,1037.4 L547.7,1036.0 L550.1,1036.9 L552.4,1036.7 L554.8,1041.3 L557.2,1038.0 L559.5,1037.5 L561.9,1037.8 L564.3,1038.1 L566.6,1036.5 L569.0,1039.2 L569.0,1173.5 L145.0,1173.5 Z" fill="#584477" fill-opacity="0.1" stroke="none"/>
<path d="M145.0,1040.2 L147.4,1039.1 L149.7,1040.7 L152.1,1038.9 L154.5,1039.2 L156.8,1038.8 L159.2,1040.0 L161.6,1038.6 L163.9,1038.5 L166.3,1039.4 L168.7,1038.2 L171.1,1041.8 L173.4,1039.6 L175.8,1039.4 L178.2,1040.1 L180.5,1039.2 L182.9,1038.6 L185.3,1039.8 L187.6,1039.4 L190.0,1039.2 L192.4,1038.7 L194.7,1037.6 L197.1,1039.1 L199.5,1037.6 L201.8,1040.0 L204.2,1039.0 L206.6,1040.9 L209.0,1039.5 L211.3,1038.4 L213.7,1036.6 L216.1,1038.2 L218.4,1039.5 L220.8,1038.0 L223.2,1038.6 L225.5,1038.7 L227.9,1037.9 L230.3,1037.4 L232.6,1040.3 L235.0,1039.2 L237.4,1039.0 L239.7,1040.0 L242.1,1041.0 L244.5,1039.5 L246.9,1039.5 L249.2,1039.8 L251.6,1039.2 L254.0,1039.3 L256.3,1038.9 L258.7,1037.1 L261.1,1038.3 L263.4,1036.6 L265.8,1036.7 L268.2,1037.1 L270.5,1039.0 L272.9,1039.1 L275.3,1039.8 L277.6,1038.5 L280.0,1038.7 L282.4,1038.2 L284.8,1038.2 L287.1,1038.3 L289.5,1038.9 L291.9,1039.7 L294.2,1039.4 L296.6,1038.0 L299.0,1038.6 L301.3,1038.6 L303.7,1037.6 L306.1,1037.7 L308.4,1039.9 L310.8,1039.0 L313.2,1039.6 L315.5,1038.8 L317.9,1038.1 L320.3,1037.8 L322.7,1036.4 L325.0,1038.4 L327.4,1038.7 L329.8,1037.9 L332.1,1037.2 L334.5,1039.1 L336.9,1037.8 L339.2,1037.5 L341.6,1038.2 L344.0,1038.6 L346.3,1037.6 L348.7,1037.6 L351.1,1037.6 L353.4,1038.9 L355.8,1040.3 L358.2,1039.0 L360.6,1038.7 L362.9,1037.9 L365.3,1038.9 L367.7,1037.7 L370.0,1037.6 L372.4,1038.8 L374.8,1037.3 L377.1,1038.3 L379.5,1038.9 L381.9,1038.1 L384.2,1038.1 L386.6,1039.1 L389.0,1037.7 L391.3,1038.0 L393.7,1038.9 L396.1,1040.2 L398.5,1038.2 L400.8,1038.0 L403.2,1037.9 L405.6,1036.5 L407.9,1040.2 L410.3,1037.3 L412.7,1036.3 L415.0,1038.5 L417.4,1037.0 L419.8,1038.5 L422.1,1039.2 L424.5,1038.4 L426.9,1036.1 L429.2,1036.9 L431.6,1037.5 L434.0,1036.8 L436.4,1038.2 L438.7,1036.3 L441.1,1035.7 L443.5,1036.7 L445.8,1038.3 L448.2,1036.8 L450.6,1037.2 L452.9,1036.9 L455.3,1036.3 L457.7,1036.8 L460.0,1038.4 L462.4,1036.3 L464.8,1037.0 L467.1,1037.1 L469.5,1036.8 L471.9,1037.1 L474.3,1036.7 L476.6,1037.1 L479.0,1037.7 L481.4,1038.2 L483.7,1038.3 L486.1,1038.1 L488.5,1036.7 L490.8,1037.7 L493.2,1037.7 L495.6,1037.7 L497.9,1037.0 L500.3,1036.7 L502.7,1035.1 L505.0,1038.3 L507.4,1038.0 L509.8,1037.0 L512.2,1039.1 L514.5,1036.1 L516.9,1037.1 L519.3,1038.2 L521.6,1036.6 L524.0,1039.5 L526.4,1037.8 L528.7,1038.6 L531.1,1037.7 L533.5,1037.1 L535.8,1036.4 L538.2,1036.6 L540.6,1034.8 L542.9,1036.5 L545.3,1037.4 L547.7,1036.0 L550.1,1036.9 L552.4,1036.7 L554.8,1041.3 L557.2,1038.0 L559.5,1037.5 L561.9,1037.8 L564.3,1038.1 L566.6,1036.5 L569.0,1039.2" fill="none" stroke="#584477" stroke-width="1.25" stroke-linejoin="round"/>
<path d="M145.0,1050.4 L147.4,1046.9 L149.7,1059.2 L152.1,1053.8 L154.5,1049.0 L156.8,1049.1 L159.2,1051.6 L161.6,1054.9 L163.9,1049.6 L166.3,1046.4 L168.7,1052.0 L171.1,1049.9 L173.4,1046.5 L175.8,1048.4 L178.2,1050.9 L180.5,1047.1 L182.9,1048.3 L185.3,1043.5 L187.6,1046.0 L190.0,1046.0 L192.4,1056.5 L194.7,1050.4 L197.1,1049.0 L199.5,1051.9 L201.8,1052.8 L204.2,1050.3 L206.6,1050.4 L209.0,1050.0 L211.3,1046.1 L213.7,1049.0 L216.1,1047.1 L218.4,1048.7 L220.8,1058.1 L223.2,1051.7 L225.5,1054.1 L227.9,1052.6 L230.3,1050.9 L232.6,1051.9 L235.0,1054.7 L237.4,1051.7 L239.7,1054.6 L242.1,1048.3 L244.5,1050.1 L246.9,1057.3 L249.2,1058.6 L251.6,1055.8 L254.0,1050.1 L256.3,1050.0 L258.7,1050.1 L261.1,1053.1 L263.4,1053.5 L265.8,1052.2 L268.2,1052.9 L270.5,1054.2 L272.9,1050.3 L275.3,1049.6 L277.6,1050.9 L280.0,1048.7 L282.4,1050.5 L284.8,1050.9 L287.1,1047.1 L289.5,1051.8 L291.9,1052.4 L294.2,1053.2 L296.6,1056.3 L299.0,1058.9 L301.3,1053.0 L303.7,1052.3 L306.1,1054.4 L308.4,1049.9 L310.8,1060.7 L313.2,1055.8 L315.5,1055.3 L317.9,1057.4 L320.3,1059.1 L322.7,1046.5 L325.0,1053.3 L327.4,1050.3 L329.8,1052.3 L332.1,1051.7 L334.5,1056.2 L336.9,1050.6 L339.2,1055.9 L341.6,1057.7 L344.0,1060.0 L346.3,1057.9 L348.7,1061.6 L351.1,1058.5 L353.4,1055.8 L355.8,1052.7 L358.2,1054.5 L360.6,1063.3 L362.9,1055.8 L365.3,1053.4 L367.7,1055.7 L370.0,1057.5 L372.4,1057.9 L374.8,1057.4 L377.1,1061.2 L379.5,1059.3 L381.9,1059.5 L384.2,1089.1 L386.6,1062.0 L389.0,1053.6 L391.3,1054.1 L393.7,1054.5 L396.1,1058.0 L398.5,1058.5 L400.8,1064.9 L403.2,1060.3 L405.6,1063.0 L407.9,1058.1 L410.3,1059.3 L412.7,1058.0 L415.0,1064.8 L417.4,1058.4 L419.8,1058.7 L422.1,1062.0 L424.5,1056.6 L426.9,1063.4 L429.2,1060.6 L431.6,1059.3 L434.0,1059.1 L436.4,1057.1 L438.7,1048.6 L441.1,1055.5 L443.5,1049.0 L445.8,1051.4 L448.2,1052.1 L450.6,1055.4 L452.9,1056.4 L455.3,1064.1 L457.7,1054.2 L460.0,1057.6 L462.4,1068.6 L464.8,1055.3 L467.1,1063.0 L469.5,1054.2 L471.9,1053.7 L474.3,1058.7 L476.6,1060.5 L479.0,1064.0 L481.4,1065.2 L483.7,1061.5 L486.1,1060.4 L488.5,1056.7 L490.8,1062.2 L493.2,1060.3 L495.6,1059.0 L497.9,1061.0 L500.3,1058.0 L502.7,1057.9 L505.0,1059.7 L507.4,1052.9 L509.8,1061.0 L512.2,1060.2 L514.5,1057.3 L516.9,1060.4 L519.3,1060.5 L521.6,1056.1 L524.0,1051.6 L526.4,1058.4 L528.7,1054.8 L531.1,1052.1 L533.5,1061.9 L535.8,1055.9 L538.2,1056.8 L540.6,1058.1 L542.9,1057.5 L545.3,1056.1 L547.7,1052.2 L550.1,1055.1 L552.4,1057.5 L554.8,1059.0 L557.2,1058.5 L559.5,1062.1 L561.9,1058.9 L564.3,1055.5 L566.6,1056.3 L569.0,1058.5 L569.0,1173.5 L145.0,1173.5 Z" fill="#7b782e" fill-opacity="0.1" stroke="none"/>
<path d="M144,1000.5 L570,1000.5" stroke="#ffffff" stroke-opacity="0.04" stroke-width="1.25"/>
<path d="M144,1043.5 L570,1043.5" stroke="#ffffff" stroke-opacity="0.04" stroke-width="1.25"/>
<path d="M144,1087 L570,1087" stroke="#ffffff" stroke-opacity="0.04" stroke-width="1.25"/>
<path d="M144,1130 L570,1130" stroke="#ffffff" stroke-opacity="0.04" stroke-width="1.25"/>
<path d="M278,1000.5 L278,1173.5" stroke="#ffffff" stroke-opacity="0.04" stroke-width="1.25"/>
<path d="M419.5,1000.5 L419.5,1173.5" stroke="#ffffff" stroke-opacity="0.04" stroke-width="1.25"/>
<path d="M561.5,1000.5 L561.5,1173.5" stroke="#ffffff" stroke-opacity="0.04" stroke-width="1.25"/>
<path d="M1037,1000.5 L1440,1000.5" stroke="#34373d" stroke-width="1.25"/>
<path d="M1037,1043.5 L1440,1043.5" stroke="#34373d" stroke-width="1.25"/>
<path d="M1037,1086.6 L1440,1086.6" stroke="#34373d" stroke-width="1.25"/>
<path d="M1037,1129.8 L1440,1129.8" stroke="#34373d" stroke-width="1.25"/>
<path d="M1037,1173.3 L1440,1173.3" stroke="#34373d" stroke-width="1.25"/>
<path d="M1164,1000.5 L1164,1173.3" stroke="#34373d" stroke-width="1.25"/>
<path d="M1298.4,1000.5 L1298.4,1173.3" stroke="#34373d" stroke-width="1.25"/>
<path d="M1432.3,1000.5 L1432.3,1173.3" stroke="#34373d" stroke-width="1.25"/>
<path d="M1038.0,1107.9 L1040.0,1102.4 L1042.0,1106.7 L1044.0,1108.5 L1046.1,1113.7 L1048.1,1109.4 L1050.1,1098.0 L1052.1,1100.4 L1054.1,1096.2 L1056.1,1101.3 L1058.2,1101.4 L1060.2,1103.0 L1062.2,1117.8 L1064.2,1101.8 L1066.2,1100.5 L1068.2,1100.2 L1070.2,1117.1 L1072.3,1121.7 L1074.3,1116.2 L1076.3,1111.5 L1078.3,1104.3 L1080.3,1105.2 L1082.3,1101.0 L1084.3,1108.9 L1086.4,1103.5 L1088.4,1101.4 L1090.4,1109.1 L1092.4,1092.5 L1094.4,1097.3 L1096.4,1093.5 L1098.5,1106.7 L1100.5,1110.9 L1102.5,1108.8 L1104.5,1106.4 L1106.5,1100.0 L1108.5,1101.4 L1110.5,1107.1 L1112.6,1112.5 L1114.6,1110.4 L1116.6,1096.3 L1118.6,1108.5 L1120.6,1103.3 L1122.6,1100.6 L1124.6,1114.8 L1126.7,1106.3 L1128.7,1094.4 L1130.7,1117.2 L1132.7,1109.7 L1134.7,1106.1 L1136.7,1110.7 L1138.8,1101.6 L1140.8,1103.7 L1142.8,1115.1 L1144.8,1100.1 L1146.8,1097.5 L1148.8,1094.7 L1150.8,1090.1 L1152.9,1097.3 L1154.9,1101.0 L1156.9,1112.9 L1158.9,1100.9 L1160.9,1107.5 L1162.9,1107.8 L1164.9,1114.2 L1167.0,1113.4 L1169.0,1109.8 L1171.0,1094.7 L1173.0,1116.7 L1175.0,1117.8 L1177.0,1104.8 L1179.1,1092.1 L1181.1,1095.7 L1183.1,1115.8 L1185.1,1125.6 L1187.1,1105.7 L1189.1,1109.1 L1191.1,1113.0 L1193.2,1097.6 L1195.2,1092.7 L1197.2,1098.8 L1199.2,1099.6 L1201.2,1098.3 L1203.2,1089.0 L1205.3,1094.2 L1207.3,1096.2 L1209.3,1096.5 L1211.3,1113.0 L1213.3,1094.9 L1215.3,1092.9 L1217.3,1095.7 L1219.4,1115.8 L1221.4,1110.4 L1223.4,1097.5 L1225.4,1114.9 L1227.4,1106.5 L1229.4,1095.1 L1231.4,1110.3 L1233.5,1091.4 L1235.5,1094.8 L1237.5,1101.1 L1239.5,1098.9 L1241.5,1095.8 L1243.5,1099.2 L1245.6,1092.0 L1247.6,1104.2 L1249.6,1105.3 L1251.6,1094.2 L1253.6,1099.3 L1255.6,1107.6 L1257.6,1095.4 L1259.7,1088.3 L1261.7,1101.4 L1263.7,1111.9 L1265.7,1104.8 L1267.7,1103.1 L1269.7,1103.8 L1271.7,1090.7 L1273.8,1106.3 L1275.8,1092.4 L1277.8,1108.5 L1279.8,1108.8 L1281.8,1097.8 L1283.8,1091.2 L1285.9,1091.6 L1287.9,1095.6 L1289.9,1098.2 L1291.9,1098.7 L1293.9,1095.5 L1295.9,1100.5 L1297.9,1098.2 L1300.0,1095.3 L1302.0,1099.0 L1304.0,1094.0 L1306.0,1094.2 L1308.0,1083.0 L1310.0,1093.3 L1312.1,1101.7 L1314.1,1103.3 L1316.1,1100.9 L1318.1,1093.0 L1320.1,1100.8 L1322.1,1097.0 L1324.1,1084.8 L1326.2,1115.9 L1328.2,1112.5 L1330.2,1101.0 L1332.2,1096.8 L1334.2,1097.0 L1336.2,1102.2 L1338.2,1095.1 L1340.3,1096.1 L1342.3,1102.6 L1344.3,1081.3 L1346.3,1092.0 L1348.3,1101.8 L1350.3,1100.6 L1352.4,1101.3 L1354.4,1100.1 L1356.4,1120.5 L1358.4,1108.2 L1360.4,1093.5 L1362.4,1106.7 L1364.4,1101.4 L1366.5,1092.1 L1368.5,1090.5 L1370.5,1085.1 L1372.5,1108.5 L1374.5,1103.9 L1376.5,1102.6 L1378.5,1094.8 L1380.6,1089.1 L1382.6,1117.0 L1384.6,1094.6 L1386.6,1108.7 L1388.6,1095.7 L1390.6,1109.3 L1392.7,1099.7 L1394.7,1089.3 L1396.7,1097.1 L1398.7,1096.4 L1400.7,1091.5 L1402.7,1095.3 L1404.7,1098.0 L1406.8,1086.1 L1408.8,1086.8 L1410.8,1097.4 L1412.8,1076.4 L1414.8,1101.4 L1416.8,1091.6 L1418.8,1098.3 L1420.9,1096.8 L1422.9,1092.0 L1424.9,1094.5 L1426.9,1091.8 L1428.9,1108.0 L1430.9,1111.8 L1433.0,1096.2 L1435.0,1104.6 L1437.0,1107.1 L1439.0,1111.2 L1439.0,1173.3 L1038.0,1173.3 Z" fill="#7EB26D" fill-opacity="0.1" stroke="none"/>
<path d="M1038.0,1107.9 L1040.0,1102.4 L1042.0,1106.7 L1044.0,1108.5 L1046.1,1113.7 L1048.1,1109.4 L1050.1,1098.0 L1052.1,1100.4 L1054.1,1096.2 L1056.1,1101.3 L1058.2,1101.4 L1060.2,1103.0 L1062.2,1117.8 L1064.2,1101.8 L1066.2,1100.5 L1068.2,1100.2 L1070.2,1117.1 L1072.3,1121.7 L1074.3,1116.2 L1076.3,1111.5 L1078.3,1104.3 L1080.3,1105.2 L1082.3,1101.0 L1084.3,1108.9 L1086.4,1103.5 L1088.4,1101.4 L1090.4,1109.1 L1092.4,1092.5 L1094.4,1097.3 L1096.4,1093.5 L1098.5,1106.7 L1100.5,1110.9 L1102.5,1108.8 L1104.5,1106.4 L1106.5,1100.0 L1108.5,1101.4 L1110.5,1107.1 L1112.6,1112.5 L1114.6,1110.4 L1116.6,1096.3 L1118.6,1108.5 L1120.6,1103.3 L1122.6,1100.6 L1124.6,1114.8 L1126.7,1106.3 L1128.7,1094.4 L1130.7,1117.2 L1132.7,1109.7 L1134.7,1106.1 L1136.7,1110.7 L1138.8,1101.6 L1140.8,1103.7 L1142.8,1115.1 L1144.8,1100.1 L1146.8,1097.5 L1148.8,1094.7 L1150.8,1090.1 L1152.9,1097.3 L1154.9,1101.0 L1156.9,1112.9 L1158.9,1100.9 L1160.9,1107.5 L1162.9,1107.8 L1164.9,1114.2 L1167.0,1113.4 L1169.0,1109.8 L1171.0,1094.7 L1173.0,1116.7 L1175.0,1117.8 L1177.0,1104.8 L1179.1,1092.1 L1181.1,1095.7 L1183.1,1115.8 L1185.1,1125.6 L1187.1,1105.7 L1189.1,1109.1 L1191.1,1113.0 L1193.2,1097.6 L1195.2,1092.7 L1197.2,1098.8 L1199.2,1099.6 L1201.2,1098.3 L1203.2,1089.0 L1205.3,1094.2 L1207.3,1096.2 L1209.3,1096.5 L1211.3,1113.0 L1213.3,1094.9 L1215.3,1092.9 L1217.3,1095.7 L1219.4,1115.8 L1221.4,1110.4 L1223.4,1097.5 L1225.4,1114.9 L1227.4,1106.5 L1229.4,1095.1 L1231.4,1110.3 L1233.5,1091.4 L1235.5,1094.8 L1237.5,1101.1 L1239.5,1098.9 L1241.5,1095.8 L1243.5,1099.2 L1245.6,1092.0 L1247.6,1104.2 L1249.6,1105.3 L1251.6,1094.2 L1253.6,1099.3 L1255.6,1107.6 L1257.6,1095.4 L1259.7,1088.3 L1261.7,1101.4 L1263.7,1111.9 L1265.7,1104.8 L1267.7,1103.1 L1269.7,1103.8 L1271.7,1090.7 L1273.8,1106.3 L1275.8,1092.4 L1277.8,1108.5 L1279.8,1108.8 L1281.8,1097.8 L1283.8,1091.2 L1285.9,1091.6 L1287.9,1095.6 L1289.9,1098.2 L1291.9,1098.7 L1293.9,1095.5 L1295.9,1100.5 L1297.9,1098.2 L1300.0,1095.3 L1302.0,1099.0 L1304.0,1094.0 L1306.0,1094.2 L1308.0,1083.0 L1310.0,1093.3 L1312.1,1101.7 L1314.1,1103.3 L1316.1,1100.9 L1318.1,1093.0 L1320.1,1100.8 L1322.1,1097.0 L1324.1,1084.8 L1326.2,1115.9 L1328.2,1112.5 L1330.2,1101.0 L1332.2,1096.8 L1334.2,1097.0 L1336.2,1102.2 L1338.2,1095.1 L1340.3,1096.1 L1342.3,1102.6 L1344.3,1081.3 L1346.3,1092.0 L1348.3,1101.8 L1350.3,1100.6 L1352.4,1101.3 L1354.4,1100.1 L1356.4,1120.5 L1358.4,1108.2 L1360.4,1093.5 L1362.4,1106.7 L1364.4,1101.4 L1366.5,1092.1 L1368.5,1090.5 L1370.5,1085.1 L1372.5,1108.5 L1374.5,1103.9 L1376.5,1102.6 L1378.5,1094.8 L1380.6,1089.1 L1382.6,1117.0 L1384.6,1094.6 L1386.6,1108.7 L1388.6,1095.7 L1390.6,1109.3 L1392.7,1099.7 L1394.7,1089.3 L1396.7,1097.1 L1398.7,1096.4 L1400.7,1091.5 L1402.7,1095.3 L1404.7,1098.0 L1406.8,1086.1 L1408.8,1086.8 L1410.8,1097.4 L1412.8,1076.4 L1414.8,1101.4 L1416.8,1091.6 L1418.8,1098.3 L1420.9,1096.8 L1422.9,1092.0 L1424.9,1094.5 L1426.9,1091.8 L1428.9,1108.0 L1430.9,1111.8 L1433.0,1096.2 L1435.0,1104.6 L1437.0,1107.1 L1439.0,1111.2" fill="none" stroke="#7EB26D" stroke-width="1.25" stroke-linejoin="round"/>
<path d="M1038.0,1082.0 L1040.0,1084.4 L1042.0,1076.1 L1044.0,1103.1 L1046.1,1098.4 L1048.1,1111.0 L1050.1,1091.0 L1052.1,1075.9 L1054.1,1102.1 L1056.1,1078.9 L1058.2,1080.0 L1060.2,1094.2 L1062.2,1119.4 L1064.2,1084.8 L1066.2,1094.2 L1068.2,1102.6 L1070.2,1092.5 L1072.3,1089.8 L1074.3,1075.9 L1076.3,1102.8 L1078.3,1083.4 L1080.3,1074.2 L1082.3,1072.2 L1084.3,1091.4 L1086.4,1102.9 L1088.4,1084.4 L1090.4,1090.6 L1092.4,1092.0 L1094.4,1076.6 L1096.4,1093.0 L1098.5,1121.6 L1100.5,1105.6 L1102.5,1119.3 L1104.5,1090.3 L1106.5,1089.0 L1108.5,1099.9 L1110.5,1095.2 L1112.6,1083.8 L1114.6,1090.0 L1116.6,1076.4 L1118.6,1089.7 L1120.6,1079.6 L1122.6,1071.5 L1124.6,1068.0 L1126.7,1094.6 L1128.7,1082.5 L1130.7,1112.7 L1132.7,1110.5 L1134.7,1120.6 L1136.7,1086.4 L1138.8,1105.5 L1140.8,1095.5 L1142.8,1095.1 L1144.8,1092.9 L1146.8,1099.1 L1148.8,1090.6 L1150.8,1069.6 L1152.9,1085.4 L1154.9,1083.4 L1156.9,1077.1 L1158.9,1089.9 L1160.9,1105.9 L1162.9,1101.3 L1164.9,1080.4 L1167.0,1108.0 L1169.0,1102.1 L1171.0,1081.1 L1173.0,1078.4 L1175.0,1087.2 L1177.0,1079.6 L1179.1,1085.4 L1181.1,1103.0 L1183.1,1112.0 L1185.1,1103.0 L1187.1,1081.8 L1189.1,1094.4 L1191.1,1101.5 L1193.2,1101.6 L1195.2,1110.8 L1197.2,1095.9 L1199.2,1104.9 L1201.2,1088.5 L1203.2,1117.2 L1205.3,1091.8 L1207.3,1097.1 L1209.3,1114.1 L1211.3,1086.0 L1213.3,1091.0 L1215.3,1115.8 L1217.3,1105.5 L1219.4,1088.8 L1221.4,1093.6 L1223.4,1079.7 L1225.4,1076.6 L1227.4,1076.7 L1229.4,1080.8 L1231.4,1069.5 L1233.5,1074.8 L1235.5,1078.5 L1237.5,1110.1 L1239.5,1081.8 L1241.5,1069.7 L1243.5,1086.0 L1245.6,1092.1 L1247.6,1064.4 L1249.6,1102.1 L1251.6,1084.5 L1253.6,1056.4 L1255.6,1089.8 L1257.6,1078.6 L1259.7,1061.2 L1261.7,1081.0 L1263.7,1077.7 L1265.7,1072.6 L1267.7,1093.2 L1269.7,1088.3 L1271.7,1082.4 L1273.8,1074.5 L1275.8,1082.8 L1277.8,1086.7 L1279.8,1097.5 L1281.8,1092.2 L1283.8,1075.7 L1285.9,1081.0 L1287.9,1093.8 L1289.9,1096.8 L1291.9,1055.1 L1293.9,1063.0 L1295.9,1071.0 L1297.9,1112.0 L1300.0,1083.3 L1302.0,1077.7 L1304.0,1061.7 L1306.0,1072.8 L1308.0,1030.0 L1310.0,1076.5 L1312.1,1105.0 L1314.1,1076.0 L1316.1,1077.3 L1318.1,1089.9 L1320.1,1068.5 L1322.1,1057.2 L1324.1,1093.1 L1326.2,1093.1 L1328.2,1081.5 L1330.2,1079.8 L1332.2,1086.3 L1334.2,1094.8 L1336.2,1059.5 L1338.2,1063.6 L1340.3,1091.6 L1342.3,1100.3 L1344.3,1065.6 L1346.3,1065.4 L1348.3,1055.3 L1350.3,1064.9 L1352.4,1087.5 L1354.4,1079.4 L1356.4,1106.6 L1358.4,1096.2 L1360.4,1085.2 L1362.4,1075.4 L1364.4,1087.9 L1366.5,1083.7 L1368.5,1075.5 L1370.5,1074.4 L1372.5,1070.9 L1374.5,1075.1 L1376.5,1082.5 L1378.5,1070.9 L1380.6,1076.8 L1382.6,1088.8 L1384.6,1089.3 L1386.6,1081.8 L1388.6,1081.1 L1390.6,1077.7 L1392.7,1078.6 L1394.7,1076.7 L1396.7,1079.8 L1398.7,1094.2 L1400.7,1077.3 L1402.7,1065.4 L1404.7,1069.8 L1406.8,1078.4 L1408.8,1072.8 L1410.8,1088.4 L1412.8,1103.4 L1414.8,1083.5 L1416.8,1090.4 L1418.8,1071.9 L1420.9,1089.2 L1422.9,1112.1 L1424.9,1098.6 L1426.9,1063.4 L1428.9,1078.3 L1430.9,1093.9 L1433.0,1090.3 L1435.0,1073.9 L1437.0,1070.0 L1439.0,1072.8 L1439.0,1173.3 L1038.0,1173.3 Z" fill="#EAB839" fill-opacity="0.1" stroke="none"/>
<path d="M1038.0,1082.0 L1040.0,1084.4 L1042.0,1076.1 L1044.0,1103.1 L1046.1,1098.4 L1048.1,1111.0 L1050.1,1091.0 L1052.1,1075.9 L1054.1,1102.1 L1056.1,1078.9 L1058.2,1080.0 L1060.2,1094.2 L1062.2,1119.4 L1064.2,1084.8 L1066.2,1094.2 L1068.2,1102.6 L1070.2,1092.5 L1072.3,1089.8 L1074.3,1075.9 L1076.3,1102.8 L1078.3,1083.4 L1080.3,1074.2 L1082.3,1072.2 L1084.3,1091.4 L1086.4,1102.9 L1088.4,1084.4 L1090.4,1090.6 L1092.4,1092.0 L1094.4,1076.6 L1096.4,1093.0 L1098.5,1121.6 L1100.5,1105.6 L1102.5,1119.3 L1104.5,1090.3 L1106.5,1089.0 L1108.5,1099.9 L1110.5,1095.2 L1112.6,1083.8 L1114.6,1090.0 L1116.6,1076.4 L1118.6,1089.7 L1120.6,1079.6 L1122.6,1071.5 L1124.6,1068.0 L1126.7,1094.6 L1128.7,1082.5 L1130.7,1112.7 L1132.7,1110.5 L1134.7,1120.6 L1136.7,1086.4 L1138.8,1105.5 L1140.8,1095.5 L1142.8,1095.1 L1144.8,1092.9 L1146.8,1099.1 L1148.8,1090.6 L1150.8,1069.6 L1152.9,1085.4 L1154.9,1083.4 L1156.9,1077.1 L1158.9,1089.9 L1160.9,1105.9 L1162.9,1101.3 L1164.9,1080.4 L1167.0,1108.0 L1169.0,1102.1 L1171.0,1081.1 L1173.0,1078.4 L1175.0,1087.2 L1177.0,1079.6 L1179.1,1085.4 L1181.1,1103.0 L1183.1,1112.0 L1185.1,1103.0 L1187.1,1081.8 L1189.1,1094.4 L1191.1,1101.5 L1193.2,1101.6 L1195.2,1110.8 L1197.2,1095.9 L1199.2,1104.9 L1201.2,1088.5 L1203.2,1117.2 L1205.3,1091.8 L1207.3,1097.1 L1209.3,1114.1 L1211.3,1086.0 L1213.3,1091.0 L1215.3,1115.8 L1217.3,1105.5 L1219.4,1088.8 L1221.4,1093.6 L1223.4,1079.7 L1225.4,1076.6 L1227.4,1076.7 L1229.4,1080.8 L1231.4,1069.5 L1233.5,1074.8 L1235.5,1078.5 L1237.5,1110.1 L1239.5,1081.8 L1241.5,1069.7 L1243.5,1086.0 L1245.6,1092.1 L1247.6,1064.4 L1249.6,1102.1 L1251.6,1084.5 L1253.6,1056.4 L1255.6,1089.8 L1257.6,1078.6 L1259.7,1061.2 L1261.7,1081.0 L1263.7,1077.7 L1265.7,1072.6 L1267.7,1093.2 L1269.7,1088.3 L1271.7,1082.4 L1273.8,1074.5 L1275.8,1082.8 L1277.8,1086.7 L1279.8,1097.5 L1281.8,1092.2 L1283.8,1075.7 L1285.9,1081.0 L1287.9,1093.8 L1289.9,1096.8 L1291.9,1055.1 L1293.9,1063.0 L1295.9,1071.0 L1297.9,1112.0 L1300.0,1083.3 L1302.0,1077.7 L1304.0,1061.7 L1306.0,1072.8 L1308.0,1030.0 L1310.0,1076.5 L1312.1,1105.0 L1314.1,1076.0 L1316.1,1077.3 L1318.1,1089.9 L1320.1,1068.5 L1322.1,1057.2 L1324.1,1093.1 L1326.2,1093.1 L1328.2,1081.5 L1330.2,1079.8 L1332.2,1086.3 L1334.2,1094.8 L1336.2,1059.5 L1338.2,1063.6 L1340.3,1091.6 L1342.3,1100.3 L1344.3,1065.6 L1346.3,1065.4 L1348.3,1055.3 L1350.3,1064.9 L1352.4,1087.5 L1354.4,1079.4 L1356.4,1106.6 L1358.4,1096.2 L1360.4,1085.2 L1362.4,1075.4 L1364.4,1087.9 L1366.5,1083.7 L1368.5,1075.5 L1370.5,1074.4 L1372.5,1070.9 L1374.5,1075.1 L1376.5,1082.5 L1378.5,1070.9 L1380.6,1076.8 L1382.6,1088.8 L1384.6,1089.3 L1386.6,1081.8 L1388.6,1081.1 L1390.6,1077.7 L1392.7,1078.6 L1394.7,1076.7 L1396.7,1079.8 L1398.7,1094.2 L1400.7,1077.3 L1402.7,1065.4 L1404.7,1069.8 L1406.8,1078.4 L1408.8,1072.8 L1410.8,1088.4 L1412.8,1103.4 L1414.8,1083.5 L1416.8,1090.4 L1418.8,1071.9 L1420.9,1089.2 L1422.9,1112.1 L1424.9,1098.6 L1426.9,1063.4 L1428.9,1078.3 L1430.9,1093.9 L1433.0,1090.3 L1435.0,1073.9 L1437.0,1070.0 L1439.0,1072.8" fill="none" stroke="#EAB839" stroke-width="1.25" stroke-linejoin="round"/>
<path d="M1038.0,1062.5 L1040.0,1066.4 L1042.0,1074.4 L1044.0,1070.6 L1046.1,1059.7 L1048.1,1063.5 L1050.1,1064.0 L1052.1,1084.2 L1054.1,1080.4 L1056.1,1071.2 L1058.2,1078.7 L1060.2,1067.7 L1062.2,1069.5 L1064.2,1067.1 L1066.2,1077.2 L1068.2,1053.5 L1070.2,1060.1 L1072.3,1075.6 L1074.3,1076.7 L1076.3,1053.2 L1078.3,1075.3 L1080.3,1069.4 L1082.3,1066.9 L1084.3,1075.6 L1086.4,1089.0 L1088.4,1079.6 L1090.4,1075.6 L1092.4,1067.4 L1094.4,1068.7 L1096.4,1076.3 L1098.5,1070.4 L1100.5,1071.9 L1102.5,1075.6 L1104.5,1078.0 L1106.5,1081.5 L1108.5,1073.6 L1110.5,1088.2 L1112.6,1112.3 L1114.6,1106.2 L1116.6,1118.6 L1118.6,1112.0 L1120.6,1125.2 L1122.6,1116.0 L1124.6,1101.8 L1126.7,1098.2 L1128.7,1103.2 L1130.7,1106.2 L1132.7,1118.2 L1134.7,1090.3 L1136.7,1095.9 L1138.8,1091.7 L1140.8,1109.5 L1142.8,1107.3 L1144.8,1122.3 L1146.8,1101.3 L1148.8,1094.6 L1150.8,1119.8 L1152.9,1108.6 L1154.9,1099.3 L1156.9,1119.7 L1158.9,1125.4 L1160.9,1119.6 L1162.9,1114.1 L1164.9,1120.0 L1167.0,1107.9 L1169.0,1102.8 L1171.0,1097.8 L1173.0,1096.0 L1175.0,1087.9 L1177.0,1089.1 L1179.1,1112.9 L1181.1,1111.2 L1183.1,1116.0 L1185.1,1117.4 L1187.1,1108.3 L1189.1,1105.2 L1191.1,1099.8 L1193.2,1118.2 L1195.2,1119.5 L1197.2,1108.3 L1199.2,1107.1 L1201.2,1107.9 L1203.2,1105.7 L1205.3,1111.8 L1207.3,1099.5 L1209.3,1099.7 L1211.3,1103.9 L1213.3,1110.5 L1215.3,1107.5 L1217.3,1130.9 L1219.4,1120.2 L1221.4,1107.9 L1223.4,1119.4 L1225.4,1106.1 L1227.4,1103.3 L1229.4,1117.1 L1231.4,1109.8 L1233.5,1108.6 L1235.5,1100.9 L1237.5,1097.6 L1239.5,1102.9 L1241.5,1112.0 L1243.5,1107.5 L1245.6,1105.7 L1247.6,1097.6 L1249.6,1099.8 L1251.6,1110.0 L1253.6,1118.5 L1255.6,1111.3 L1257.6,1113.0 L1259.7,1117.0 L1261.7,1108.5 L1263.7,1110.0 L1265.7,1104.7 L1267.7,1099.4 L1269.7,1106.9 L1271.7,1082.8 L1273.8,1101.9 L1275.8,1093.2 L1277.8,1100.3 L1279.8,1092.6 L1281.8,1123.9 L1283.8,1116.3 L1285.9,1104.9 L1287.9,1098.7 L1289.9,1080.6 L1291.9,1095.3 L1293.9,1089.8 L1295.9,1093.3 L1297.9,1092.5 L1300.0,1096.4 L1302.0,1103.8 L1304.0,1099.3 L1306.0,1113.2 L1308.0,1095.2 L1310.0,1111.6 L1312.1,1103.7 L1314.1,1083.9 L1316.1,1101.3 L1318.1,1103.3 L1320.1,1092.9 L1322.1,1101.2 L1324.1,1111.1 L1326.2,1103.5 L1328.2,1098.5 L1330.2,1096.0 L1332.2,1109.5 L1334.2,1088.9 L1336.2,1084.6 L1338.2,1099.1 L1340.3,1100.4 L1342.3,1107.3 L1344.3,1091.6 L1346.3,1107.8 L1348.3,1098.7 L1350.3,1107.4 L1352.4,1111.6 L1354.4,1099.2 L1356.4,1090.3 L1358.4,1100.8 L1360.4,1109.8 L1362.4,1097.9 L1364.4,1103.1 L1366.5,1101.0 L1368.5,1088.9 L1370.5,1089.7 L1372.5,1105.5 L1374.5,1082.9 L1376.5,1098.8 L1378.5,1095.4 L1380.6,1108.2 L1382.6,1105.6 L1384.6,1121.2 L1386.6,1091.5 L1388.6,1088.1 L1390.6,1111.7 L1392.7,1120.4 L1394.7,1123.7 L1396.7,1097.9 L1398.7,1107.0 L1400.7,1105.5 L1402.7,1107.5 L1404.7,1106.2 L1406.8,1115.0 L1408.8,1106.7 L1410.8,1118.5 L1412.8,1108.5 L1414.8,1102.3 L1416.8,1099.3 L1418.8,1105.2 L1420.9,1113.0 L1422.9,1104.9 L1424.9,1109.0 L1426.9,1090.5 L1428.9,1093.5 L1430.9,1102.6 L1433.0,1108.3 L1435.0,1111.9 L1437.0,1115.0 L1439.0,1110.3 L1439.0,1173.3 L1038.0,1173.3 Z" fill="#6ED0E0" fill-opacity="0.1" stroke="none"/>
<path d="M1038.0,1062.5 L1040.0,1066.4 L1042.0,1074.4 L1044.0,1070.6 L1046.1,1059.7 L1048.1,1063.5 L1050.1,1064.0 L1052.1,1084.2 L1054.1,1080.4 L1056.1,1071.2 L1058.2,1078.7 L1060.2,1067.7 L1062.2,1069.5 L1064.2,1067.1 L1066.2,1077.2 L1068.2,1053.5 L1070.2,1060.1 L1072.3,1075.6 L1074.3,1076.7 L1076.3,1053.2 L1078.3,1075.3 L1080.3,1069.4 L1082.3,1066.9 L1084.3,1075.6 L1086.4,1089.0 L1088.4,1079.6 L1090.4,1075.6 L1092.4,1067.4 L1094.4,1068.7 L1096.4,1076.3 L1098.5,1070.4 L1100.5,1071.9 L1102.5,1075.6 L1104.5,1078.0 L1106.5,1081.5 L1108.5,1073.6 L1110.5,1088.2 L1112.6,1112.3 L1114.6,1106.2 L1116.6,1118.6 L1118.6,1112.0 L1120.6,1125.2 L1122.6,1116.0 L1124.6,1101.8 L1126.7,1098.2 L1128.7,1103.2 L1130.7,1106.2 L1132.7,1118.2 L1134.7,1090.3 L1136.7,1095.9 L1138.8,1091.7 L1140.8,1109.5 L1142.8,1107.3 L1144.8,1122.3 L1146.8,1101.3 L1148.8,1094.6 L1150.8,1119.8 L1152.9,1108.6 L1154.9,1099.3 L1156.9,1119.7 L1158.9,1125.4 L1160.9,1119.6 L1162.9,1114.1 L1164.9,1120.0 L1167.0,1107.9 L1169.0,1102.8 L1171.0,1097.8 L1173.0,1096.0 L1175.0,1087.9 L1177.0,1089.1 L1179.1,1112.9 L1181.1,1111.2 L1183.1,1116.0 L1185.1,1117.4 L1187.1,1108.3 L1189.1,1105.2 L1191.1,1099.8 L1193.2,1118.2 L1195.2,1119.5 L1197.2,1108.3 L1199.2,1107.1 L1201.2,1107.9 L1203.2,1105.7 L1205.3,1111.8 L1207.3,1099.5 L1209.3,1099.7 L1211.3,1103.9 L1213.3,1110.5 L1215.3,1107.5 L1217.3,1130.9 L1219.4,1120.2 L1221.4,1107.9 L1223.4,1119.4 L1225.4,1106.1 L1227.4,1103.3 L1229.4,1117.1 L1231.4,1109.8 L1233.5,1108.6 L1235.5,1100.9 L1237.5,1097.6 L1239.5,1102.9 L1241.5,1112.0 L1243.5,1107.5 L1245.6,1105.7 L1247.6,1097.6 L1249.6,1099.8 L1251.6,1110.0 L1253.6,1118.5 L1255.6,1111.3 L1257.6,1113.0 L1259.7,1117.0 L1261.7,1108.5 L1263.7,1110.0 L1265.7,1104.7 L1267.7,1099.4 L1269.7,1106.9 L1271.7,1082.8 L1273.8,1101.9 L1275.8,1093.2 L1277.8,1100.3 L1279.8,1092.6 L1281.8,1123.9 L1283.8,1116.3 L1285.9,1104.9 L1287.9,1098.7 L1289.9,1080.6 L1291.9,1095.3 L1293.9,1089.8 L1295.9,1093.3 L1297.9,1092.5 L1300.0,1096.4 L1302.0,1103.8 L1304.0,1099.3 L1306.0,1113.2 L1308.0,1095.2 L1310.0,1111.6 L1312.1,1103.7 L1314.1,1083.9 L1316.1,1101.3 L1318.1,1103.3 L1320.1,1092.9 L1322.1,1101.2 L1324.1,1111.1 L1326.2,1103.5 L1328.2,1098.5 L1330.2,1096.0 L1332.2,1109.5 L1334.2,1088.9 L1336.2,1084.6 L1338.2,1099.1 L1340.3,1100.4 L1342.3,1107.3 L1344.3,1091.6 L1346.3,1107.8 L1348.3,1098.7 L1350.3,1107.4 L1352.4,1111.6 L1354.4,1099.2 L1356.4,1090.3 L1358.4,1100.8 L1360.4,1109.8 L1362.4,1097.9 L1364.4,1103.1 L1366.5,1101.0 L1368.5,1088.9 L1370.5,1089.7 L1372.5,1105.5 L1374.5,1082.9 L1376.5,1098.8 L1378.5,1095.4 L1380.6,1108.2 L1382.6,1105.6 L1384.6,1121.2 L1386.6,1091.5 L1388.6,1088.1 L1390.6,1111.7 L1392.7,1120.4 L1394.7,1123.7 L1396.7,1097.9 L1398.7,1107.0 L1400.7,1105.5 L1402.7,1107.5 L1404.7,1106.2 L1406.8,1115.0 L1408.8,1106.7 L1410.8,1118.5 L1412.8,1108.5 L1414.8,1102.3 L1416.8,1099.3 L1418.8,1105.2 L1420.9,1113.0 L1422.9,1104.9 L1424.9,1109.0 L1426.9,1090.5 L1428.9,1093.5 L1430.9,1102.6 L1433.0,1108.3 L1435.0,1111.9 L1437.0,1115.0 L1439.0,1110.3" fill="none" stroke="#6ED0E0" stroke-width="1.25" stroke-linejoin="round"/>
<path d="M1038.0,1107.3 L1040.0,1103.3 L1042.0,1101.5 L1044.0,1081.2 L1046.1,1112.3 L1048.1,1110.6 L1050.1,1074.1 L1052.1,1125.2 L1054.1,1120.4 L1056.1,1110.2 L1058.2,1107.7 L1060.2,1103.7 L1062.2,1110.9 L1064.2,1104.8 L1066.2,1107.2 L1068.2,1098.4 L1070.2,1130.5 L1072.3,1125.4 L1074.3,1112.6 L1076.3,1122.6 L1078.3,1125.1 L1080.3,1104.0 L1082.3,1115.1 L1084.3,1101.2 L1086.4,1096.1 L1088.4,1100.4 L1090.4,1098.8 L1092.4,1106.2 L1094.4,1124.8 L1096.4,1111.5 L1098.5,1101.8 L1100.5,1112.0 L1102.5,1108.8 L1104.5,1096.9 L1106.5,1114.9 L1108.5,1099.6 L1110.5,1079.9 L1112.6,1106.1 L1114.6,1103.5 L1116.6,1106.6 L1118.6,1085.3 L1120.6,1095.7 L1122.6,1090.7 L1124.6,1109.9 L1126.7,1105.8 L1128.7,1104.6 L1130.7,1127.1 L1132.7,1090.9 L1134.7,1088.8 L1136.7,1122.4 L1138.8,1098.4 L1140.8,1103.6 L1142.8,1097.3 L1144.8,1096.7 L1146.8,1120.6 L1148.8,1109.8 L1150.8,1084.9 L1152.9,1105.3 L1154.9,1116.1 L1156.9,1123.0 L1158.9,1122.9 L1160.9,1102.5 L1162.9,1079.8 L1164.9,1090.3 L1167.0,1095.2 L1169.0,1070.6 L1171.0,1099.9 L1173.0,1109.2 L1175.0,1095.8 L1177.0,1092.1 L1179.1,1111.3 L1181.1,1118.0 L1183.1,1100.6 L1185.1,1096.7 L1187.1,1115.7 L1189.1,1106.1 L1191.1,1069.7 L1193.2,1017.9 L1195.2,1099.5 L1197.2,1100.0 L1199.2,1103.5 L1201.2,1086.1 L1203.2,1077.2 L1205.3,1097.6 L1207.3,1086.9 L1209.3,1104.9 L1211.3,1098.5 L1213.3,1088.0 L1215.3,1075.4 L1217.3,1096.7 L1219.4,1097.9 L1221.4,1094.6 L1223.4,1115.6 L1225.4,1101.1 L1227.4,1106.3 L1229.4,1093.9 L1231.4,1110.2 L1233.5,1125.1 L1235.5,1102.6 L1237.5,1094.0 L1239.5,1102.2 L1241.5,1085.5 L1243.5,1096.3 L1245.6,1103.2 L1247.6,1090.7 L1249.6,1114.0 L1251.6,1108.2 L1253.6,1098.1 L1255.6,1084.2 L1257.6,1093.7 L1259.7,1089.8 L1261.7,1101.3 L1263.7,1091.6 L1265.7,1071.4 L1267.7,1096.7 L1269.7,1063.4 L1271.7,1093.9 L1273.8,1092.9 L1275.8,1090.5 L1277.8,1078.7 L1279.8,1104.9 L1281.8,1122.6 L1283.8,1091.8 L1285.9,1081.5 L1287.9,1081.1 L1289.9,1054.9 L1291.9,1079.6 L1293.9,1085.0 L1295.9,1077.5 L1297.9,1082.8 L1300.0,1067.2 L1302.0,1100.8 L1304.0,1097.9 L1306.0,1136.8 L1308.0,1091.3 L1310.0,1095.1 L1312.1,1079.2 L1314.1,1059.2 L1316.1,1082.0 L1318.1,1090.8 L1320.1,1096.1 L1322.1,1101.7 L1324.1,1100.3 L1326.2,1083.3 L1328.2,1086.8 L1330.2,1087.2 L1332.2,1090.2 L1334.2,1076.8 L1336.2,1078.8 L1338.2,1087.4 L1340.3,1079.0 L1342.3,1087.3 L1344.3,1102.3 L1346.3,1072.1 L1348.3,1077.3 L1350.3,1096.9 L1352.4,1075.3 L1354.4,1079.3 L1356.4,1104.9 L1358.4,1070.0 L1360.4,1077.8 L1362.4,1072.3 L1364.4,1079.8 L1366.5,1086.1 L1368.5,1105.7 L1370.5,1077.8 L1372.5,1082.9 L1374.5,1088.2 L1376.5,1081.1 L1378.5,1082.8 L1380.6,1075.3 L1382.6,1086.9 L1384.6,1085.4 L1386.6,1112.1 L1388.6,1096.4 L1390.6,1078.2 L1392.7,1064.9 L1394.7,1083.5 L1396.7,1084.9 L1398.7,1063.1 L1400.7,1082.2 L1402.7,1073.1 L1404.7,1058.5 L1406.8,1076.0 L1408.8,1064.9 L1410.8,1087.0 L1412.8,1080.6 L1414.8,1082.5 L1416.8,1080.4 L1418.8,1066.6 L1420.9,1046.8 L1422.9,1081.2 L1424.9,1088.6 L1426.9,1076.4 L1428.9,1093.3 L1430.9,1077.4 L1433.0,1072.3 L1435.0,1081.9 L1437.0,1073.7 L1439.0,1098.5 L1439.0,1173.3 L1038.0,1173.3 Z" fill="#EF843C" fill-opacity="0.1" stroke="none"/>
<path d="M1038.0,1107.3 L1040.0,1103.3 L1042.0,1101.5 L1044.0,1081.2 L1046.1,1112.3 L1048.1,1110.6 L1050.1,1074.1 L1052.1,1125.2 L1054.1,1120.4 L1056.1,1110.2 L1058.2,1107.7 L1060.2,1103.7 L1062.2,1110.9 L1064.2,1104.8 L1066.2,1107.2 L1068.2,1098.4 L1070.2,1130.5 L1072.3,1125.4 L1074.3,1112.6 L1076.3,1122.6 L1078.3,1125.1 L1080.3,1104.0 L1082.3,1115.1 L1084.3,1101.2 L1086.4,1096.1 L1088.4,1100.4 L1090.4,1098.8 L1092.4,1106.2 L1094.4,1124.8 L1096.4,1111.5 L1098.5,1101.8 L1100.5,1112.0 L1102.5,1108.8 L1104.5,1096.9 L1106.5,1114.9 L1108.5,1099.6 L1110.5,1079.9 L1112.6,1106.1 L1114.6,1103.5 L1116.6,1106.6 L1118.6,1085.3 L1120.6,1095.7 L1122.6,1090.7 L1124.6,1109.9 L1126.7,1105.8 L1128.7,1104.6 L1130.7,1127.1 L1132.7,1090.9 L1134.7,1088.8 L1136.7,1122.4 L1138.8,1098.4 L1140.8,1103.6 L1142.8,1097.3 L1144.8,1096.7 L1146.8,1120.6 L1148.8,1109.8 L1150.8,1084.9 L1152.9,1105.3 L1154.9,1116.1 L1156.9,1123.0 L1158.9,1122.9 L1160.9,1102.5 L1162.9,1079.8 L1164.9,1090.3 L1167.0,1095.2 L1169.0,1070.6 L1171.0,1099.9 L1173.0,1109.2 L1175.0,1095.8 L1177.0,1092.1 L1179.1,1111.3 L1181.1,1118.0 L1183.1,1100.6 L1185.1,1096.7 L1187.1,1115.7 L1189.1,1106.1 L1191.1,1069.7 L1193.2,1017.9 L1195.2,1099.5 L1197.2,1100.0 L1199.2,1103.5 L1201.2,1086.1 L1203.2,1077.2 L1205.3,1097.6 L1207.3,1086.9 L1209.3,1104.9 L1211.3,1098.5 L1213.3,1088.0 L1215.3,1075.4 L1217.3,1096.7 L1219.4,1097.9 L1221.4,1094.6 L1223.4,1115.6 L1225.4,1101.1 L1227.4,1106.3 L1229.4,1093.9 L1231.4,1110.2 L1233.5,1125.1 L1235.5,1102.6 L1237.5,1094.0 L1239.5,1102.2 L1241.5,1085.5 L1243.5,1096.3 L1245.6,1103.2 L1247.6,1090.7 L1249.6,1114.0 L1251.6,1108.2 L1253.6,1098.1 L1255.6,1084.2 L1257.6,1093.7 L1259.7,1089.8 L1261.7,1101.3 L1263.7,1091.6 L1265.7,1071.4 L1267.7,1096.7 L1269.7,1063.4 L1271.7,1093.9 L1273.8,1092.9 L1275.8,1090.5 L1277.8,1078.7 L1279.8,1104.9 L1281.8,1122.6 L1283.8,1091.8 L1285.9,1081.5 L1287.9,1081.1 L1289.9,1054.9 L1291.9,1079.6 L1293.9,1085.0 L1295.9,1077.5 L1297.9,1082.8 L1300.0,1067.2 L1302.0,1100.8 L1304.0,1097.9 L1306.0,1136.8 L1308.0,1091.3 L1310.0,1095.1 L1312.1,1079.2 L1314.1,1059.2 L1316.1,1082.0 L1318.1,1090.8 L1320.1,1096.1 L1322.1,1101.7 L1324.1,1100.3 L1326.2,1083.3 L1328.2,1086.8 L1330.2,1087.2 L1332.2,1090.2 L1334.2,1076.8 L1336.2,1078.8 L1338.2,1087.4 L1340.3,1079.0 L1342.3,1087.3 L1344.3,1102.3 L1346.3,1072.1 L1348.3,1077.3 L1350.3,1096.9 L1352.4,1075.3 L1354.4,1079.3 L1356.4,1104.9 L1358.4,1070.0 L1360.4,1077.8 L1362.4,1072.3 L1364.4,1079.8 L1366.5,1086.1 L1368.5,1105.7 L1370.5,1077.8 L1372.5,1082.9 L1374.5,1088.2 L1376.5,1081.1 L1378.5,1082.8 L1380.6,1075.3 L1382.6,1086.9 L1384.6,1085.4 L1386.6,1112.1 L1388.6,1096.4 L1390.6,1078.2 L1392.7,1064.9 L1394.7,1083.5 L1396.7,1084.9 L1398.7,1063.1 L1400.7,1082.2 L1402.7,1073.1 L1404.7,1058.5 L1406.8,1076.0 L1408.8,1064.9 L1410.8,1087.0 L1412.8,1080.6 L1414.8,1082.5 L1416.8,1080.4 L1418.8,1066.6 L1420.9,1046.8 L1422.9,1081.2 L1424.9,1088.6 L1426.9,1076.4 L1428.9,1093.3 L1430.9,1077.4 L1433.0,1072.3 L1435.0,1081.9 L1437.0,1073.7 L1439.0,1098.5" fill="none" stroke="#EF843C" stroke-width="1.25" stroke-linejoin="round"/>
<path d="M1038.0,1115.8 L1040.0,1126.7 L1042.0,1124.9 L1044.0,1123.6 L1046.1,1122.4 L1048.1,1115.5 L1050.1,1117.7 L1052.1,1120.7 L1054.1,1116.5 L1056.1,1110.0 L1058.2,1116.4 L1060.2,1116.1 L1062.2,1111.4 L1064.2,1115.1 L1066.2,1124.0 L1068.2,1106.6 L1070.2,1103.7 L1072.3,1124.6 L1074.3,1119.6 L1076.3,1115.9 L1078.3,1112.1 L1080.3,1112.6 L1082.3,1117.5 L1084.3,1122.7 L1086.4,1117.9 L1088.4,1111.8 L1090.4,1121.2 L1092.4,1123.1 L1094.4,1118.3 L1096.4,1127.0 L1098.5,1120.3 L1100.5,1119.5 L1102.5,1114.6 L1104.5,1119.3 L1106.5,1121.3 L1108.5,1119.2 L1110.5,1116.8 L1112.6,1119.3 L1114.6,1116.3 L1116.6,1111.7 L1118.6,1108.2 L1120.6,1104.5 L1122.6,1116.4 L1124.6,1117.4 L1126.7,1128.3 L1128.7,1108.2 L1130.7,1116.7 L1132.7,1115.2 L1134.7,1111.8 L1136.7,1120.6 L1138.8,1113.3 L1140.8,1113.9 L1142.8,1123.3 L1144.8,1114.6 L1146.8,1107.7 L1148.8,1121.7 L1150.8,1111.3 L1152.9,1111.7 L1154.9,1110.4 L1156.9,1110.1 L1158.9,1105.5 L1160.9,1112.2 L1162.9,1108.1 L1164.9,1113.6 L1167.0,1109.0 L1169.0,1115.8 L1171.0,1113.7 L1173.0,1103.6 L1175.0,1107.6 L1177.0,1111.7 L1179.1,1117.7 L1181.1,1117.3 L1183.1,1112.0 L1185.1,1106.8 L1187.1,1108.0 L1189.1,1107.7 L1191.1,1110.5 L1193.2,1103.9 L1195.2,1111.2 L1197.2,1113.8 L1199.2,1106.9 L1201.2,1109.3 L1203.2,1111.6 L1205.3,1113.7 L1207.3,1112.4 L1209.3,1107.5 L1211.3,1107.6 L1213.3,1115.6 L1215.3,1109.0 L1217.3,1108.6 L1219.4,1114.5 L1221.4,1106.7 L1223.4,1110.1 L1225.4,1111.2 L1227.4,1105.5 L1229.4,1101.3 L1231.4,1110.6 L1233.5,1107.0 L1235.5,1112.8 L1237.5,1097.6 L1239.5,1108.3 L1241.5,1102.1 L1243.5,1110.0 L1245.6,1104.4 L1247.6,1095.6 L1249.6,1118.0 L1251.6,1112.6 L1253.6,1106.3 L1255.6,1107.7 L1257.6,1111.0 L1259.7,1097.1 L1261.7,1104.3 L1263.7,1114.9 L1265.7,1104.5 L1267.7,1115.2 L1269.7,1102.9 L1271.7,1108.7 L1273.8,1106.3 L1275.8,1099.9 L1277.8,1104.1 L1279.8,1112.9 L1281.8,1116.6 L1283.8,1102.5 L1285.9,1101.2 L1287.9,1108.8 L1289.9,1102.0 L1291.9,1102.1 L1293.9,1101.2 L1295.9,1116.0 L1297.9,1109.4 L1300.0,1101.5 L1302.0,1100.3 L1304.0,1099.1 L1306.0,1116.1 L1308.0,1106.6 L1310.0,1102.5 L1312.1,1090.7 L1314.1,1105.8 L1316.1,1106.3 L1318.1,1104.4 L1320.1,1099.5 L1322.1,1105.0 L1324.1,1098.1 L1326.2,1106.3 L1328.2,1102.8 L1330.2,1106.0 L1332.2,1103.1 L1334.2,1106.7 L1336.2,1112.2 L1338.2,1099.6 L1340.3,1100.4 L1342.3,1105.0 L1344.3,1102.1 L1346.3,1097.3 L1348.3,1106.1 L1350.3,1103.8 L1352.4,1099.7 L1354.4,1098.7 L1356.4,1102.8 L1358.4,1113.0 L1360.4,1098.1 L1362.4,1099.0 L1364.4,1100.8 L1366.5,1102.6 L1368.5,1100.2 L1370.5,1103.1 L1372.5,1106.8 L1374.5,1106.2 L1376.5,1105.2 L1378.5,1105.0 L1380.6,1107.7 L1382.6,1098.9 L1384.6,1106.8 L1386.6,1098.4 L1388.6,1104.9 L1390.6,1099.4 L1392.7,1092.6 L1394.7,1096.9 L1396.7,1102.7 L1398.7,1100.1 L1400.7,1098.8 L1402.7,1108.2 L1404.7,1104.6 L1406.8,1099.6 L1408.8,1101.6 L1410.8,1099.1 L1412.8,1095.0 L1414.8,1093.8 L1416.8,1092.6 L1418.8,1093.9 L1420.9,1098.7 L1422.9,1098.4 L1424.9,1099.6 L1426.9,1100.0 L1428.9,1099.3 L1430.9,1107.1 L1433.0,1101.7 L1435.0,1098.7 L1437.0,1102.8 L1439.0,1098.8 L1439.0,1173.3 L1038.0,1173.3 Z" fill="#E24D42" fill-opacity="0.1" stroke="none"/>
<path d="M1038.0,1115.8 L1040.0,1126.7 L1042.0,1124.9 L1044.0,1123.6 L1046.1,1122.4 L1048.1,1115.5 L1050.1,1117.7 L1052.1,1120.7 L1054.1,1116.5 L1056.1,1110.0 L1058.2,1116.4 L1060.2,1116.1 L1062.2,1111.4 L1064.2,1115.1 L1066.2,1124.0 L1068.2,1106.6 L1070.2,1103.7 L1072.3,1124.6 L1074.3,1119.6 L1076.3,1115.9 L1078.3,1112.1 L1080.3,1112.6 L1082.3,1117.5 L1084.3,1122.7 L1086.4,1117.9 L1088.4,1111.8 L1090.4,1121.2 L1092.4,1123.1 L1094.4,1118.3 L1096.4,1127.0 L1098.5,1120.3 L1100.5,1119.5 L1102.5,1114.6 L1104.5,1119.3 L1106.5,1121.3 L1108.5,1119.2 L1110.5,1116.8 L1112.6,1119.3 L1114.6,1116.3 L1116.6,1111.7 L1118.6,1108.2 L1120.6,1104.5 L1122.6,1116.4 L1124.6,1117.4 L1126.7,1128.3 L1128.7,1108.2 L1130.7,1116.7 L1132.7,1115.2 L1134.7,1111.8 L1136.7,1120.6 L1138.8,1113.3 L1140.8,1113.9 L1142.8,1123.3 L1144.8,1114.6 L1146.8,1107.7 L1148.8,1121.7 L1150.8,1111.3 L1152.9,1111.7 L1154.9,1110.4 L1156.9,1110.1 L1158.9,1105.5 L1160.9,1112.2 L1162.9,1108.1 L1164.9,1113.6 L1167.0,1109.0 L1169.0,1115.8 L1171.0,1113.7 L1173.0,1103.6 L1175.0,1107.6 L1177.0,1111.7 L1179.1,1117.7 L1181.1,1117.3 L1183.1,1112.0 L1185.1,1106.8 L1187.1,1108.0 L1189.1,1107.7 L1191.1,1110.5 L1193.2,1103.9 L1195.2,1111.2 L1197.2,1113.8 L1199.2,1106.9 L1201.2,1109.3 L1203.2,1111.6 L1205.3,1113.7 L1207.3,1112.4 L1209.3,1107.5 L1211.3,1107.6 L1213.3,1115.6 L1215.3,1109.0 L1217.3,1108.6 L1219.4,1114.5 L1221.4,1106.7 L1223.4,1110.1 L1225.4,1111.2 L1227.4,1105.5 L1229.4,1101.3 L1231.4,1110.6 L1233.5,1107.0 L1235.5,1112.8 L1237.5,1097.6 L1239.5,1108.3 L1241.5,1102.1 L1243.5,1110.0 L1245.6,1104.4 L1247.6,1095.6 L1249.6,1118.0 L1251.6,1112.6 L1253.6,1106.3 L1255.6,1107.7 L1257.6,1111.0 L1259.7,1097.1 L1261.7,1104.3 L1263.7,1114.9 L1265.7,1104.5 L1267.7,1115.2 L1269.7,1102.9 L1271.7,1108.7 L1273.8,1106.3 L1275.8,1099.9 L1277.8,1104.1 L1279.8,1112.9 L1281.8,1116.6 L1283.8,1102.5 L1285.9,1101.2 L1287.9,1108.8 L1289.9,1102.0 L1291.9,1102.1 L1293.9,1101.2 L1295.9,1116.0 L1297.9,1109.4 L1300.0,1101.5 L1302.0,1100.3 L1304.0,1099.1 L1306.0,1116.1 L1308.0,1106.6 L1310.0,1102.5 L1312.1,1090.7 L1314.1,1105.8 L1316.1,1106.3 L1318.1,1104.4 L1320.1,1099.5 L1322.1,1105.0 L1324.1,1098.1 L1326.2,1106.3 L1328.2,1102.8 L1330.2,1106.0 L1332.2,1103.1 L1334.2,1106.7 L1336.2,1112.2 L1338.2,1099.6 L1340.3,1100.4 L1342.3,1105.0 L1344.3,1102.1 L1346.3,1097.3 L1348.3,1106.1 L1350.3,1103.8 L1352.4,1099.7 L1354.4,1098.7 L1356.4,1102.8 L1358.4,1113.0 L1360.4,1098.1 L1362.4,1099.0 L1364.4,1100.8 L1366.5,1102.6 L1368.5,1100.2 L1370.5,1103.1 L1372.5,1106.8 L1374.5,1106.2 L1376.5,1105.2 L1378.5,1105.0 L1380.6,1107.7 L1382.6,1098.9 L1384.6,1106.8 L1386.6,1098.4 L1388.6,1104.9 L1390.6,1099.4 L1392.7,1092.6 L1394.7,1096.9 L1396.7,1102.7 L1398.7,1100.1 L1400.7,1098.8 L1402.7,1108.2 L1404.7,1104.6 L1406.8,1099.6 L1408.8,1101.6 L1410.8,1099.1 L1412.8,1095.0 L1414.8,1093.8 L1416.8,1092.6 L1418.8,1093.9 L1420.9,1098.7 L1422.9,1098.4 L1424.9,1099.6 L1426.9,1100.0 L1428.9,1099.3 L1430.9,1107.1 L1433.0,1101.7 L1435.0,1098.7 L1437.0,1102.8 L1439.0,1098.8" fill="none" stroke="#E24D42" stroke-width="1.25" stroke-linejoin="round"/>
<path d="M1038.0,1098.0 L1040.0,1102.7 L1042.0,1084.5 L1044.0,1120.4 L1046.1,1108.5 L1048.1,1119.5 L1050.1,1098.0 L1052.1,1078.1 L1054.1,1117.6 L1056.1,1104.7 L1058.2,1098.1 L1060.2,1103.5 L1062.2,1097.4 L1064.2,1120.0 L1066.2,1098.9 L1068.2,1097.7 L1070.2,1100.3 L1072.3,1106.2 L1074.3,1097.1 L1076.3,1104.5 L1078.3,1100.1 L1080.3,1105.3 L1082.3,1121.6 L1084.3,1106.5 L1086.4,1100.6 L1088.4,1094.4 L1090.4,1106.8 L1092.4,1102.6 L1094.4,1095.9 L1096.4,1098.3 L1098.5,1089.3 L1100.5,1080.6 L1102.5,1103.4 L1104.5,1117.8 L1106.5,1097.4 L1108.5,1086.4 L1110.5,1088.8 L1112.6,1090.4 L1114.6,1103.1 L1116.6,1107.0 L1118.6,1094.1 L1120.6,1106.4 L1122.6,1117.2 L1124.6,1112.8 L1126.7,1081.5 L1128.7,1078.6 L1130.7,1100.3 L1132.7,1106.1 L1134.7,1099.2 L1136.7,1105.9 L1138.8,1089.7 L1140.8,1097.6 L1142.8,1108.3 L1144.8,1090.2 L1146.8,1102.0 L1148.8,1097.9 L1150.8,1098.9 L1152.9,1101.7 L1154.9,1096.8 L1156.9,1104.4 L1158.9,1116.1 L1160.9,1122.2 L1162.9,1115.5 L1164.9,1109.4 L1167.0,1101.5 L1169.0,1098.8 L1171.0,1093.7 L1173.0,1096.2 L1175.0,1104.7 L1177.0,1106.0 L1179.1,1118.5 L1181.1,1104.7 L1183.1,1095.6 L1185.1,1092.8 L1187.1,1097.7 L1189.1,1099.4 L1191.1,1090.2 L1193.2,1095.8 L1195.2,1090.9 L1197.2,1090.9 L1199.2,1094.1 L1201.2,1085.4 L1203.2,1099.4 L1205.3,1101.0 L1207.3,1105.3 L1209.3,1106.2 L1211.3,1086.0 L1213.3,1079.2 L1215.3,1092.4 L1217.3,1091.0 L1219.4,1085.4 L1221.4,1087.1 L1223.4,1084.0 L1225.4,1104.5 L1227.4,1104.2 L1229.4,1094.7 L1231.4,1083.8 L1233.5,1092.5 L1235.5,1102.9 L1237.5,1101.1 L1239.5,1103.3 L1241.5,1105.5 L1243.5,1085.6 L1245.6,1099.0 L1247.6,1096.7 L1249.6,1077.6 L1251.6,1081.2 L1253.6,1089.4 L1255.6,1099.6 L1257.6,1093.2 L1259.7,1081.1 L1261.7,1086.7 L1263.7,1082.5 L1265.7,1091.5 L1267.7,1090.1 L1269.7,1095.9 L1271.7,1091.9 L1273.8,1083.3 L1275.8,1104.7 L1277.8,1098.1 L1279.8,1093.8 L1281.8,1099.7 L1283.8,1098.9 L1285.9,1089.2 L1287.9,1076.2 L1289.9,1084.8 L1291.9,1089.5 L1293.9,1106.8 L1295.9,1081.1 L1297.9,1090.6 L1300.0,1093.9 L1302.0,1104.0 L1304.0,1097.3 L1306.0,1104.6 L1308.0,1096.3 L1310.0,1090.7 L1312.1,1093.1 L1314.1,1091.5 L1316.1,1100.8 L1318.1,1083.4 L1320.1,1097.0 L1322.1,1110.4 L1324.1,1099.6 L1326.2,1101.8 L1328.2,1104.5 L1330.2,1099.4 L1332.2,1092.5 L1334.2,1103.5 L1336.2,1097.2 L1338.2,1082.0 L1340.3,1084.6 L1342.3,1092.4 L1344.3,1091.9 L1346.3,1093.9 L1348.3,1093.7 L1350.3,1086.9 L1352.4,1092.3 L1354.4,1113.5 L1356.4,1098.2 L1358.4,1101.8 L1360.4,1089.4 L1362.4,1097.1 L1364.4,1092.5 L1366.5,1073.7 L1368.5,1096.9 L1370.5,1103.3 L1372.5,1107.3 L1374.5,1116.7 L1376.5,1114.6 L1378.5,1094.7 L1380.6,1098.3 L1382.6,1109.8 L1384.6,1109.3 L1386.6,1091.0 L1388.6,1098.4 L1390.6,1096.6 L1392.7,1090.1 L1394.7,1079.6 L1396.7,1071.9 L1398.7,1077.8 L1400.7,1086.9 L1402.7,1088.7 L1404.7,1075.2 L1406.8,1075.0 L1408.8,1089.9 L1410.8,1086.9 L1412.8,1087.6 L1414.8,1089.8 L1416.8,1095.1 L1418.8,1103.5 L1420.9,1043.8 L1422.9,1033.4 L1424.9,1069.7 L1426.9,1084.4 L1428.9,1099.5 L1430.9,1080.8 L1433.0,1080.4 L1435.0,1104.5 L1437.0,1078.0 L1439.0,1080.3 L1439.0,1173.3 L1038.0,1173.3 Z" fill="#1F78C1" fill-opacity="0.1" stroke="none"/>
<path d="M1038.0,1098.0 L1040.0,1102.7 L1042.0,1084.5 L1044.0,1120.4 L1046.1,1108.5 L1048.1,1119.5 L1050.1,1098.0 L1052.1,1078.1 L1054.1,1117.6 L1056.1,1104.7 L1058.2,1098.1 L1060.2,1103.5 L1062.2,1097.4 L1064.2,1120.0 L1066.2,1098.9 L1068.2,1097.7 L1070.2,1100.3 L1072.3,1106.2 L1074.3,1097.1 L1076.3,1104.5 L1078.3,1100.1 L1080.3,1105.3 L1082.3,1121.6 L1084.3,1106.5 L1086.4,1100.6 L1088.4,1094.4 L1090.4,1106.8 L1092.4,1102.6 L1094.4,1095.9 L1096.4,1098.3 L1098.5,1089.3 L1100.5,1080.6 L1102.5,1103.4 L1104.5,1117.8 L1106.5,1097.4 L1108.5,1086.4 L1110.5,1088.8 L1112.6,1090.4 L1114.6,1103.1 L1116.6,1107.0 L1118.6,1094.1 L1120.6,1106.4 L1122.6,1117.2 L1124.6,1112.8 L1126.7,1081.5 L1128.7,1078.6 L1130.7,1100.3 L1132.7,1106.1 L1134.7,1099.2 L1136.7,1105.9 L1138.8,1089.7 L1140.8,1097.6 L1142.8,1108.3 L1144.8,1090.2 L1146.8,1102.0 L1148.8,1097.9 L1150.8,1098.9 L1152.9,1101.7 L1154.9,1096.8 L1156.9,1104.4 L1158.9,1116.1 L1160.9,1122.2 L1162.9,1115.5 L1164.9,1109.4 L1167.0,1101.5 L1169.0,1098.8 L1171.0,1093.7 L1173.0,1096.2 L1175.0,1104.7 L1177.0,1106.0 L1179.1,1118.5 L1181.1,1104.7 L1183.1,1095.6 L1185.1,1092.8 L1187.1,1097.7 L1189.1,1099.4 L1191.1,1090.2 L1193.2,1095.8 L1195.2,1090.9 L1197.2,1090.9 L1199.2,1094.1 L1201.2,1085.4 L1203.2,1099.4 L1205.3,1101.0 L1207.3,1105.3 L1209.3,1106.2 L1211.3,1086.0 L1213.3,1079.2 L1215.3,1092.4 L1217.3,1091.0 L1219.4,1085.4 L1221.4,1087.1 L1223.4,1084.0 L1225.4,1104.5 L1227.4,1104.2 L1229.4,1094.7 L1231.4,1083.8 L1233.5,1092.5 L1235.5,1102.9 L1237.5,1101.1 L1239.5,1103.3 L1241.5,1105.5 L1243.5,1085.6 L1245.6,1099.0 L1247.6,1096.7 L1249.6,1077.6 L1251.6,1081.2 L1253.6,1089.4 L1255.6,1099.6 L1257.6,1093.2 L1259.7,1081.1 L1261.7,1086.7 L1263.7,1082.5 L1265.7,1091.5 L1267.7,1090.1 L1269.7,1095.9 L1271.7,1091.9 L1273.8,1083.3 L1275.8,1104.7 L1277.8,1098.1 L1279.8,1093.8 L1281.8,1099.7 L1283.8,1098.9 L1285.9,1089.2 L1287.9,1076.2 L1289.9,1084.8 L1291.9,1089.5 L1293.9,1106.8 L1295.9,1081.1 L1297.9,1090.6 L1300.0,1093.9 L1302.0,1104.0 L1304.0,1097.3 L1306.0,1104.6 L1308.0,1096.3 L1310.0,1090.7 L1312.1,1093.1 L1314.1,1091.5 L1316.1,1100.8 L1318.1,1083.4 L1320.1,1097.0 L1322.1,1110.4 L1324.1,1099.6 L1326.2,1101.8 L1328.2,1104.5 L1330.2,1099.4 L1332.2,1092.5 L1334.2,1103.5 L1336.2,1097.2 L1338.2,1082.0 L1340.3,1084.6 L1342.3,1092.4 L1344.3,1091.9 L1346.3,1093.9 L1348.3,1093.7 L1350.3,1086.9 L1352.4,1092.3 L1354.4,1113.5 L1356.4,1098.2 L1358.4,1101.8 L1360.4,1089.4 L1362.4,1097.1 L1364.4,1092.5 L1366.5,1073.7 L1368.5,1096.9 L1370.5,1103.3 L1372.5,1107.3 L1374.5,1116.7 L1376.5,1114.6 L1378.5,1094.7 L1380.6,1098.3 L1382.6,1109.8 L1384.6,1109.3 L1386.6,1091.0 L1388.6,1098.4 L1390.6,1096.6 L1392.7,1090.1 L1394.7,1079.6 L1396.7,1071.9 L1398.7,1077.8 L1400.7,1086.9 L1402.7,1088.7 L1404.7,1075.2 L1406.8,1075.0 L1408.8,1089.9 L1410.8,1086.9 L1412.8,1087.6 L1414.8,1089.8 L1416.8,1095.1 L1418.8,1103.5 L1420.9,1043.8 L1422.9,1033.4 L1424.9,1069.7 L1426.9,1084.4 L1428.9,1099.5 L1430.9,1080.8 L1433.0,1080.4 L1435.0,1104.5 L1437.0,1078.0 L1439.0,1080.3" fill="none" stroke="#1F78C1" stroke-width="1.25" stroke-linejoin="round"/>
<path d="M1038.0,1124.6 L1040.0,1141.2 L1042.0,1134.6 L1044.0,1133.5 L1046.1,1134.5 L1048.1,1134.8 L1050.1,1129.4 L1052.1,1143.4 L1054.1,1145.3 L1056.1,1146.5 L1058.2,1141.7 L1060.2,1140.7 L1062.2,1134.4 L1064.2,1133.4 L1066.2,1134.4 L1068.2,1138.9 L1070.2,1138.5 L1072.3,1129.8 L1074.3,1128.7 L1076.3,1132.3 L1078.3,1135.7 L1080.3,1125.1 L1082.3,1135.3 L1084.3,1130.3 L1086.4,1125.8 L1088.4,1133.2 L1090.4,1128.3 L1092.4,1138.8 L1094.4,1128.4 L1096.4,1130.6 L1098.5,1141.9 L1100.5,1130.9 L1102.5,1137.5 L1104.5,1125.9 L1106.5,1134.8 L1108.5,1133.8 L1110.5,1130.7 L1112.6,1133.6 L1114.6,1130.6 L1116.6,1134.7 L1118.6,1128.2 L1120.6,1130.5 L1122.6,1129.7 L1124.6,1147.3 L1126.7,1128.0 L1128.7,1129.9 L1130.7,1141.2 L1132.7,1132.6 L1134.7,1128.1 L1136.7,1123.2 L1138.8,1134.9 L1140.8,1121.8 L1142.8,1128.7 L1144.8,1114.9 L1146.8,1126.7 L1148.8,1124.6 L1150.8,1130.3 L1152.9,1136.1 L1154.9,1124.1 L1156.9,1122.1 L1158.9,1117.7 L1160.9,1120.6 L1162.9,1129.9 L1164.9,1138.7 L1167.0,1134.7 L1169.0,1133.7 L1171.0,1134.2 L1173.0,1125.8 L1175.0,1125.1 L1177.0,1128.5 L1179.1,1126.5 L1181.1,1127.9 L1183.1,1125.9 L1185.1,1122.1 L1187.1,1119.8 L1189.1,1129.0 L1191.1,1136.2 L1193.2,1120.1 L1195.2,1124.0 L1197.2,1118.8 L1199.2,1134.0 L1201.2,1129.8 L1203.2,1126.5 L1205.3,1134.4 L1207.3,1130.7 L1209.3,1122.2 L1211.3,1117.8 L1213.3,1113.5 L1215.3,1127.2 L1217.3,1133.7 L1219.4,1123.7 L1221.4,1118.5 L1223.4,1121.6 L1225.4,1131.3 L1227.4,1121.1 L1229.4,1118.3 L1231.4,1119.0 L1233.5,1125.3 L1235.5,1122.0 L1237.5,1118.2 L1239.5,1125.2 L1241.5,1134.7 L1243.5,1123.8 L1245.6,1120.1 L1247.6,1121.8 L1249.6,1116.9 L1251.6,1124.5 L1253.6,1123.2 L1255.6,1124.1 L1257.6,1119.0 L1259.7,1111.4 L1261.7,1120.5 L1263.7,1108.8 L1265.7,1108.9 L1267.7,1113.3 L1269.7,1115.5 L1271.7,1108.8 L1273.8,1118.9 L1275.8,1120.8 L1277.8,1127.0 L1279.8,1119.1 L1281.8,1111.8 L1283.8,1114.8 L1285.9,1116.1 L1287.9,1120.1 L1289.9,1118.7 L1291.9,1127.9 L1293.9,1115.2 L1295.9,1120.7 L1297.9,1126.2 L1300.0,1125.3 L1302.0,1125.4 L1304.0,1115.2 L1306.0,1111.3 L1308.0,1124.8 L1310.0,1114.3 L1312.1,1111.8 L1314.1,1119.9 L1316.1,1127.3 L1318.1,1124.6 L1320.1,1123.1 L1322.1,1116.8 L1324.1,1119.3 L1326.2,1129.9 L1328.2,1118.8 L1330.2,1126.6 L1332.2,1113.7 L1334.2,1123.2 L1336.2,1122.3 L1338.2,1123.0 L1340.3,1121.1 L1342.3,1109.5 L1344.3,1109.1 L1346.3,1110.5 L1348.3,1112.4 L1350.3,1124.1 L1352.4,1120.7 L1354.4,1119.9 L1356.4,1122.2 L1358.4,1113.6 L1360.4,1119.0 L1362.4,1120.0 L1364.4,1122.2 L1366.5,1128.7 L1368.5,1114.2 L1370.5,1106.1 L1372.5,1110.9 L1374.5,1119.0 L1376.5,1131.3 L1378.5,1116.9 L1380.6,1106.9 L1382.6,1109.9 L1384.6,1106.7 L1386.6,1102.5 L1388.6,1103.4 L1390.6,1113.0 L1392.7,1106.3 L1394.7,1106.2 L1396.7,1120.0 L1398.7,1116.6 L1400.7,1121.7 L1402.7,1115.0 L1404.7,1109.0 L1406.8,1117.4 L1408.8,1125.4 L1410.8,1107.0 L1412.8,1107.8 L1414.8,1101.3 L1416.8,1116.5 L1418.8,1105.8 L1420.9,1096.9 L1422.9,1094.9 L1424.9,1107.7 L1426.9,1108.0 L1428.9,1110.5 L1430.9,1104.0 L1433.0,1102.1 L1435.0,1107.2 L1437.0,1117.1 L1439.0,1106.8 L1439.0,1173.3 L1038.0,1173.3 Z" fill="#BA43A9" fill-opacity="0.1" stroke="none"/>
<path d="M1038.0,1124.6 L1040.0,1141.2 L1042.0,1134.6 L1044.0,1133.5 L1046.1,1134.5 L1048.1,1134.8 L1050.1,1129.4 L1052.1,1143.4 L1054.1,1145.3 L1056.1,1146.5 L1058.2,1141.7 L1060.2,1140.7 L1062.2,1134.4 L1064.2,1133.4 L1066.2,1134.4 L1068.2,1138.9 L1070.2,1138.5 L1072.3,1129.8 L1074.3,1128.7 L1076.3,1132.3 L1078.3,1135.7 L1080.3,1125.1 L1082.3,1135.3 L1084.3,1130.3 L1086.4,1125.8 L1088.4,1133.2 L1090.4,1128.3 L1092.4,1138.8 L1094.4,1128.4 L1096.4,1130.6 L1098.5,1141.9 L1100.5,1130.9 L1102.5,1137.5 L1104.5,1125.9 L1106.5,1134.8 L1108.5,1133.8 L1110.5,1130.7 L1112.6,1133.6 L1114.6,1130.6 L1116.6,1134.7 L1118.6,1128.2 L1120.6,1130.5 L1122.6,1129.7 L1124.6,1147.3 L1126.7,1128.0 L1128.7,1129.9 L1130.7,1141.2 L1132.7,1132.6 L1134.7,1128.1 L1136.7,1123.2 L1138.8,1134.9 L1140.8,1121.8 L1142.8,1128.7 L1144.8,1114.9 L1146.8,1126.7 L1148.8,1124.6 L1150.8,1130.3 L1152.9,1136.1 L1154.9,1124.1 L1156.9,1122.1 L1158.9,1117.7 L1160.9,1120.6 L1162.9,1129.9 L1164.9,1138.7 L1167.0,1134.7 L1169.0,1133.7 L1171.0,1134.2 L1173.0,1125.8 L1175.0,1125.1 L1177.0,1128.5 L1179.1,1126.5 L1181.1,1127.9 L1183.1,1125.9 L1185.1,1122.1 L1187.1,1119.8 L1189.1,1129.0 L1191.1,1136.2 L1193.2,1120.1 L1195.2,1124.0 L1197.2,1118.8 L1199.2,1134.0 L1201.2,1129.8 L1203.2,1126.5 L1205.3,1134.4 L1207.3,1130.7 L1209.3,1122.2 L1211.3,1117.8 L1213.3,1113.5 L1215.3,1127.2 L1217.3,1133.7 L1219.4,1123.7 L1221.4,1118.5 L1223.4,1121.6 L1225.4,1131.3 L1227.4,1121.1 L1229.4,1118.3 L1231.4,1119.0 L1233.5,1125.3 L1235.5,1122.0 L1237.5,1118.2 L1239.5,1125.2 L1241.5,1134.7 L1243.5,1123.8 L1245.6,1120.1 L1247.6,1121.8 L1249.6,1116.9 L1251.6,1124.5 L1253.6,1123.2 L1255.6,1124.1 L1257.6,1119.0 L1259.7,1111.4 L1261.7,1120.5 L1263.7,1108.8 L1265.7,1108.9 L1267.7,1113.3 L1269.7,1115.5 L1271.7,1108.8 L1273.8,1118.9 L1275.8,1120.8 L1277.8,1127.0 L1279.8,1119.1 L1281.8,1111.8 L1283.8,1114.8 L1285.9,1116.1 L1287.9,1120.1 L1289.9,1118.7 L1291.9,1127.9 L1293.9,1115.2 L1295.9,1120.7 L1297.9,1126.2 L1300.0,1125.3 L1302.0,1125.4 L1304.0,1115.2 L1306.0,1111.3 L1308.0,1124.8 L1310.0,1114.3 L1312.1,1111.8 L1314.1,1119.9 L1316.1,1127.3 L1318.1,1124.6 L1320.1,1123.1 L1322.1,1116.8 L1324.1,1119.3 L1326.2,1129.9 L1328.2,1118.8 L1330.2,1126.6 L1332.2,1113.7 L1334.2,1123.2 L1336.2,1122.3 L1338.2,1123.0 L1340.3,1121.1 L1342.3,1109.5 L1344.3,1109.1 L1346.3,1110.5 L1348.3,1112.4 L1350.3,1124.1 L1352.4,1120.7 L1354.4,1119.9 L1356.4,1122.2 L1358.4,1113.6 L1360.4,1119.0 L1362.4,1120.0 L1364.4,1122.2 L1366.5,1128.7 L1368.5,1114.2 L1370.5,1106.1 L1372.5,1110.9 L1374.5,1119.0 L1376.5,1131.3 L1378.5,1116.9 L1380.6,1106.9 L1382.6,1109.9 L1384.6,1106.7 L1386.6,1102.5 L1388.6,1103.4 L1390.6,1113.0 L1392.7,1106.3 L1394.7,1106.2 L1396.7,1120.0 L1398.7,1116.6 L1400.7,1121.7 L1402.7,1115.0 L1404.7,1109.0 L1406.8,1117.4 L1408.8,1125.4 L1410.8,1107.0 L1412.8,1107.8 L1414.8,1101.3 L1416.8,1116.5 L1418.8,1105.8 L1420.9,1096.9 L1422.9,1094.9 L1424.9,1107.7 L1426.9,1108.0 L1428.9,1110.5 L1430.9,1104.0 L1433.0,1102.1 L1435.0,1107.2 L1437.0,1117.1 L1439.0,1106.8" fill="none" stroke="#BA43A9" stroke-width="1.25" stroke-linejoin="round"/>
<path d="M1038.0,1142.1 L1040.0,1138.7 L1042.0,1139.0 L1044.0,1134.4 L1046.1,1134.8 L1048.1,1140.4 L1050.1,1139.0 L1052.1,1133.7 L1054.1,1140.3 L1056.1,1138.5 L1058.2,1135.4 L1060.2,1134.4 L1062.2,1136.6 L1064.2,1143.5 L1066.2,1144.9 L1068.2,1140.0 L1070.2,1138.3 L1072.3,1130.3 L1074.3,1140.1 L1076.3,1135.6 L1078.3,1135.7 L1080.3,1144.1 L1082.3,1143.2 L1084.3,1139.5 L1086.4,1140.8 L1088.4,1140.0 L1090.4,1137.5 L1092.4,1141.3 L1094.4,1137.8 L1096.4,1140.7 L1098.5,1141.0 L1100.5,1137.3 L1102.5,1140.2 L1104.5,1137.9 L1106.5,1132.8 L1108.5,1136.9 L1110.5,1138.4 L1112.6,1135.7 L1114.6,1138.8 L1116.6,1134.5 L1118.6,1141.6 L1120.6,1136.7 L1122.6,1139.4 L1124.6,1141.0 L1126.7,1132.5 L1128.7,1139.4 L1130.7,1132.0 L1132.7,1133.9 L1134.7,1131.6 L1136.7,1139.4 L1138.8,1133.8 L1140.8,1131.4 L1142.8,1136.2 L1144.8,1137.4 L1146.8,1128.8 L1148.8,1134.4 L1150.8,1137.9 L1152.9,1139.4 L1154.9,1136.0 L1156.9,1135.5 L1158.9,1135.9 L1160.9,1130.6 L1162.9,1136.3 L1164.9,1134.9 L1167.0,1131.1 L1169.0,1138.6 L1171.0,1133.4 L1173.0,1129.3 L1175.0,1139.3 L1177.0,1140.8 L1179.1,1141.0 L1181.1,1143.7 L1183.1,1136.4 L1185.1,1142.5 L1187.1,1135.9 L1189.1,1130.9 L1191.1,1140.2 L1193.2,1138.0 L1195.2,1142.9 L1197.2,1134.8 L1199.2,1137.9 L1201.2,1137.1 L1203.2,1135.7 L1205.3,1133.6 L1207.3,1136.1 L1209.3,1135.5 L1211.3,1137.2 L1213.3,1135.3 L1215.3,1139.2 L1217.3,1135.9 L1219.4,1141.9 L1221.4,1138.4 L1223.4,1129.1 L1225.4,1133.1 L1227.4,1138.7 L1229.4,1134.8 L1231.4,1138.0 L1233.5,1141.1 L1235.5,1138.7 L1237.5,1133.0 L1239.5,1132.7 L1241.5,1134.3 L1243.5,1137.5 L1245.6,1138.7 L1247.6,1130.6 L1249.6,1132.4 L1251.6,1136.9 L1253.6,1142.0 L1255.6,1140.7 L1257.6,1127.0 L1259.7,1136.1 L1261.7,1134.6 L1263.7,1133.2 L1265.7,1134.0 L1267.7,1134.6 L1269.7,1138.5 L1271.7,1138.3 L1273.8,1128.8 L1275.8,1134.8 L1277.8,1130.7 L1279.8,1138.4 L1281.8,1135.4 L1283.8,1132.7 L1285.9,1129.3 L1287.9,1135.9 L1289.9,1131.6 L1291.9,1131.2 L1293.9,1134.9 L1295.9,1131.6 L1297.9,1135.5 L1300.0,1136.0 L1302.0,1133.5 L1304.0,1142.1 L1306.0,1135.2 L1308.0,1136.5 L1310.0,1138.4 L1312.1,1135.2 L1314.1,1130.3 L1316.1,1133.0 L1318.1,1127.9 L1320.1,1135.0 L1322.1,1137.2 L1324.1,1127.8 L1326.2,1129.4 L1328.2,1127.9 L1330.2,1133.6 L1332.2,1129.3 L1334.2,1130.1 L1336.2,1128.9 L1338.2,1130.7 L1340.3,1127.0 L1342.3,1132.5 L1344.3,1134.9 L1346.3,1137.2 L1348.3,1128.6 L1350.3,1133.0 L1352.4,1135.1 L1354.4,1135.2 L1356.4,1133.5 L1358.4,1135.9 L1360.4,1133.0 L1362.4,1133.4 L1364.4,1133.2 L1366.5,1134.5 L1368.5,1131.4 L1370.5,1132.3 L1372.5,1130.5 L1374.5,1129.5 L1376.5,1128.9 L1378.5,1137.4 L1380.6,1133.8 L1382.6,1133.8 L1384.6,1128.3 L1386.6,1135.0 L1388.6,1133.6 L1390.6,1131.8 L1392.7,1131.4 L1394.7,1126.7 L1396.7,1130.4 L1398.7,1126.5 L1400.7,1133.8 L1402.7,1136.8 L1404.7,1127.1 L1406.8,1127.3 L1408.8,1127.1 L1410.8,1128.3 L1412.8,1127.3 L1414.8,1132.8 L1416.8,1126.7 L1418.8,1130.3 L1420.9,1125.9 L1422.9,1127.8 L1424.9,1135.4 L1426.9,1134.8 L1428.9,1126.3 L1430.9,1128.5 L1433.0,1129.9 L1435.0,1128.0 L1437.0,1129.8 L1439.0,1130.6 L1439.0,1173.3 L1038.0,1173.3 Z" fill="#705DA0" fill-opacity="0.1" stroke="none"/>
<path d="M1038.0,1142.1 L1040.0,1138.7 L1042.0,1139.0 L1044.0,1134.4 L1046.1,1134.8 L1048.1,1140.4 L1050.1,1139.0 L1052.1,1133.7 L1054.1,1140.3 L1056.1,1138.5 L1058.2,1135.4 L1060.2,1134.4 L1062.2,1136.6 L1064.2,1143.5 L1066.2,1144.9 L1068.2,1140.0 L1070.2,1138.3 L1072.3,1130.3 L1074.3,1140.1 L1076.3,1135.6 L1078.3,1135.7 L1080.3,1144.1 L1082.3,1143.2 L1084.3,1139.5 L1086.4,1140.8 L1088.4,1140.0 L1090.4,1137.5 L1092.4,1141.3 L1094.4,1137.8 L1096.4,1140.7 L1098.5,1141.0 L1100.5,1137.3 L1102.5,1140.2 L1104.5,1137.9 L1106.5,1132.8 L1108.5,1136.9 L1110.5,1138.4 L1112.6,1135.7 L1114.6,1138.8 L1116.6,1134.5 L1118.6,1141.6 L1120.6,1136.7 L1122.6,1139.4 L1124.6,1141.0 L1126.7,1132.5 L1128.7,1139.4 L1130.7,1132.0 L1132.7,1133.9 L1134.7,1131.6 L1136.7,1139.4 L1138.8,1133.8 L1140.8,1131.4 L1142.8,1136.2 L1144.8,1137.4 L1146.8,1128.8 L1148.8,1134.4 L1150.8,1137.9 L1152.9,1139.4 L1154.9,1136.0 L1156.9,1135.5 L1158.9,1135.9 L1160.9,1130.6 L1162.9,1136.3 L1164.9,1134.9 L1167.0,1131.1 L1169.0,1138.6 L1171.0,1133.4 L1173.0,1129.3 L1175.0,1139.3 L1177.0,1140.8 L1179.1,1141.0 L1181.1,1143.7 L1183.1,1136.4 L1185.1,1142.5 L1187.1,1135.9 L1189.1,1130.9 L1191.1,1140.2 L1193.2,1138.0 L1195.2,1142.9 L1197.2,1134.8 L1199.2,1137.9 L1201.2,1137.1 L1203.2,1135.7 L1205.3,1133.6 L1207.3,1136.1 L1209.3,1135.5 L1211.3,1137.2 L1213.3,1135.3 L1215.3,1139.2 L1217.3,1135.9 L1219.4,1141.9 L1221.4,1138.4 L1223.4,1129.1 L1225.4,1133.1 L1227.4,1138.7 L1229.4,1134.8 L1231.4,1138.0 L1233.5,1141.1 L1235.5,1138.7 L1237.5,1133.0 L1239.5,1132.7 L1241.5,1134.3 L1243.5,1137.5 L1245.6,1138.7 L1247.6,1130.6 L1249.6,1132.4 L1251.6,1136.9 L1253.6,1142.0 L1255.6,1140.7 L1257.6,1127.0 L1259.7,1136.1 L1261.7,1134.6 L1263.7,1133.2 L1265.7,1134.0 L1267.7,1134.6 L1269.7,1138.5 L1271.7,1138.3 L1273.8,1128.8 L1275.8,1134.8 L1277.8,1130.7 L1279.8,1138.4 L1281.8,1135.4 L1283.8,1132.7 L1285.9,1129.3 L1287.9,1135.9 L1289.9,1131.6 L1291.9,1131.2 L1293.9,1134.9 L1295.9,1131.6 L1297.9,1135.5 L1300.0,1136.0 L1302.0,1133.5 L1304.0,1142.1 L1306.0,1135.2 L1308.0,1136.5 L1310.0,1138.4 L1312.1,1135.2 L1314.1,1130.3 L1316.1,1133.0 L1318.1,1127.9 L1320.1,1135.0 L1322.1,1137.2 L1324.1,1127.8 L1326.2,1129.4 L1328.2,1127.9 L1330.2,1133.6 L1332.2,1129.3 L1334.2,1130.1 L1336.2,1128.9 L1338.2,1130.7 L1340.3,1127.0 L1342.3,1132.5 L1344.3,1134.9 L1346.3,1137.2 L1348.3,1128.6 L1350.3,1133.0 L1352.4,1135.1 L1354.4,1135.2 L1356.4,1133.5 L1358.4,1135.9 L1360.4,1133.0 L1362.4,1133.4 L1364.4,1133.2 L1366.5,1134.5 L1368.5,1131.4 L1370.5,1132.3 L1372.5,1130.5 L1374.5,1129.5 L1376.5,1128.9 L1378.5,1137.4 L1380.6,1133.8 L1382.6,1133.8 L1384.6,1128.3 L1386.6,1135.0 L1388.6,1133.6 L1390.6,1131.8 L1392.7,1131.4 L1394.7,1126.7 L1396.7,1130.4 L1398.7,1126.5 L1400.7,1133.8 L1402.7,1136.8 L1404.7,1127.1 L1406.8,1127.3 L1408.8,1127.1 L1410.8,1128.3 L1412.8,1127.3 L1414.8,1132.8 L1416.8,1126.7 L1418.8,1130.3 L1420.9,1125.9 L1422.9,1127.8 L1424.9,1135.4 L1426.9,1134.8 L1428.9,1126.3 L1430.9,1128.5 L1433.0,1129.9 L1435.0,1128.0 L1437.0,1129.8 L1439.0,1130.6" fill="none" stroke="#705DA0" stroke-width="1.25" stroke-linejoin="round"/>
<path d="M1038.0,1103.4 L1040.0,1102.9 L1042.0,1092.1 L1044.0,1100.8 L1046.1,1088.7 L1048.1,1086.2 L1050.1,1086.3 L1052.1,1091.3 L1054.1,1099.8 L1056.1,1101.9 L1058.2,1104.5 L1060.2,1109.8 L1062.2,1105.9 L1064.2,1109.4 L1066.2,1092.5 L1068.2,1096.8 L1070.2,1105.5 L1072.3,1119.1 L1074.3,1108.0 L1076.3,1108.0 L1078.3,1113.2 L1080.3,1114.9 L1082.3,1123.9 L1084.3,1104.3 L1086.4,1104.3 L1088.4,1083.7 L1090.4,1098.8 L1092.4,1103.5 L1094.4,1092.3 L1096.4,1099.6 L1098.5,1101.2 L1100.5,1105.7 L1102.5,1108.7 L1104.5,1093.0 L1106.5,1093.0 L1108.5,1087.4 L1110.5,1102.0 L1112.6,1102.7 L1114.6,1109.9 L1116.6,1097.4 L1118.6,1112.5 L1120.6,1101.1 L1122.6,1094.1 L1124.6,1089.9 L1126.7,1107.1 L1128.7,1095.6 L1130.7,1106.7 L1132.7,1109.8 L1134.7,1115.0 L1136.7,1097.0 L1138.8,1088.6 L1140.8,1103.9 L1142.8,1109.0 L1144.8,1107.0 L1146.8,1084.4 L1148.8,1090.4 L1150.8,1103.9 L1152.9,1117.0 L1154.9,1111.5 L1156.9,1095.7 L1158.9,1086.4 L1160.9,1100.6 L1162.9,1107.5 L1164.9,1107.8 L1167.0,1118.5 L1169.0,1099.5 L1171.0,1110.2 L1173.0,1096.1 L1175.0,1114.1 L1177.0,1115.2 L1179.1,1103.4 L1181.1,1108.5 L1183.1,1097.8 L1185.1,1101.1 L1187.1,1111.1 L1189.1,1099.6 L1191.1,1095.0 L1193.2,1115.3 L1195.2,1091.3 L1197.2,1095.6 L1199.2,1094.6 L1201.2,1114.7 L1203.2,1110.8 L1205.3,1107.0 L1207.3,1094.9 L1209.3,1111.6 L1211.3,1111.2 L1213.3,1120.0 L1215.3,1108.3 L1217.3,1100.8 L1219.4,1114.7 L1221.4,1109.7 L1223.4,1099.8 L1225.4,1089.0 L1227.4,1093.4 L1229.4,1102.0 L1231.4,1110.9 L1233.5,1111.3 L1235.5,1109.2 L1237.5,1102.4 L1239.5,1102.2 L1241.5,1088.8 L1243.5,1096.1 L1245.6,1108.5 L1247.6,1091.3 L1249.6,1091.5 L1251.6,1098.2 L1253.6,1106.2 L1255.6,1117.1 L1257.6,1113.3 L1259.7,1097.2 L1261.7,1106.5 L1263.7,1112.9 L1265.7,1102.6 L1267.7,1099.7 L1269.7,1096.1 L1271.7,1094.8 L1273.8,1088.6 L1275.8,1104.5 L1277.8,1094.4 L1279.8,1107.1 L1281.8,1097.2 L1283.8,1098.7 L1285.9,1098.5 L1287.9,1092.8 L1289.9,1099.1 L1291.9,1091.8 L1293.9,1091.8 L1295.9,1097.6 L1297.9,1104.4 L1300.0,1107.6 L1302.0,1106.6 L1304.0,1103.8 L1306.0,1101.7 L1308.0,1077.8 L1310.0,1090.0 L1312.1,1092.0 L1314.1,1105.2 L1316.1,1107.3 L1318.1,1104.7 L1320.1,1100.1 L1322.1,1108.5 L1324.1,1090.0 L1326.2,1102.2 L1328.2,1092.5 L1330.2,1116.6 L1332.2,1104.5 L1334.2,1099.3 L1336.2,1098.6 L1338.2,1095.2 L1340.3,1096.9 L1342.3,1098.2 L1344.3,1114.4 L1346.3,1109.3 L1348.3,1120.7 L1350.3,1100.4 L1352.4,1097.8 L1354.4,1101.1 L1356.4,1106.7 L1358.4,1106.3 L1360.4,1087.3 L1362.4,1083.4 L1364.4,1096.3 L1366.5,1089.0 L1368.5,1109.6 L1370.5,1117.4 L1372.5,1108.0 L1374.5,1108.7 L1376.5,1106.4 L1378.5,1100.0 L1380.6,1076.3 L1382.6,1099.0 L1384.6,1099.2 L1386.6,1097.4 L1388.6,1099.4 L1390.6,1092.4 L1392.7,1084.0 L1394.7,1105.4 L1396.7,1099.8 L1398.7,1101.7 L1400.7,1097.3 L1402.7,1110.9 L1404.7,1116.0 L1406.8,1121.6 L1408.8,1100.9 L1410.8,1098.3 L1412.8,1098.5 L1414.8,1117.5 L1416.8,1106.8 L1418.8,1107.0 L1420.9,1112.2 L1422.9,1109.6 L1424.9,1096.4 L1426.9,1094.3 L1428.9,1098.1 L1430.9,1094.9 L1433.0,1102.7 L1435.0,1099.4 L1437.0,1098.8 L1439.0,1094.7 L1439.0,1173.3 L1038.0,1173.3 Z" fill="#508642" fill-opacity="0.1" stroke="none"/>
<path d="M1038.0,1103.4 L1040.0,1102.9 L1042.0,1092.1 L1044.0,1100.8 L1046.1,1088.7 L1048.1,1086.2 L1050.1,1086.3 L1052.1,1091.3 L1054.1,1099.8 L1056.1,1101.9 L1058.2,1104.5 L1060.2,1109.8 L1062.2,1105.9 L1064.2,1109.4 L1066.2,1092.5 L1068.2,1096.8 L1070.2,1105.5 L1072.3,1119.1 L1074.3,1108.0 L1076.3,1108.0 L1078.3,1113.2 L1080.3,1114.9 L1082.3,1123.9 L1084.3,1104.3 L1086.4,1104.3 L1088.4,1083.7 L1090.4,1098.8 L1092.4,1103.5 L1094.4,1092.3 L1096.4,1099.6 L1098.5,1101.2 L1100.5,1105.7 L1102.5,1108.7 L1104.5,1093.0 L1106.5,1093.0 L1108.5,1087.4 L1110.5,1102.0 L1112.6,1102.7 L1114.6,1109.9 L1116.6,1097.4 L1118.6,1112.5 L1120.6,1101.1 L1122.6,1094.1 L1124.6,1089.9 L1126.7,1107.1 L1128.7,1095.6 L1130.7,1106.7 L1132.7,1109.8 L1134.7,1115.0 L1136.7,1097.0 L1138.8,1088.6 L1140.8,1103.9 L1142.8,1109.0 L1144.8,1107.0 L1146.8,1084.4 L1148.8,1090.4 L1150.8,1103.9 L1152.9,1117.0 L1154.9,1111.5 L1156.9,1095.7 L1158.9,1086.4 L1160.9,1100.6 L1162.9,1107.5 L1164.9,1107.8 L1167.0,1118.5 L1169.0,1099.5 L1171.0,1110.2 L1173.0,1096.1 L1175.0,1114.1 L1177.0,1115.2 L1179.1,1103.4 L1181.1,1108.5 L1183.1,1097.8 L1185.1,1101.1 L1187.1,1111.1 L1189.1,1099.6 L1191.1,1095.0 L1193.2,1115.3 L1195.2,1091.3 L1197.2,1095.6 L1199.2,1094.6 L1201.2,1114.7 L1203.2,1110.8 L1205.3,1107.0 L1207.3,1094.9 L1209.3,1111.6 L1211.3,1111.2 L1213.3,1120.0 L1215.3,1108.3 L1217.3,1100.8 L1219.4,1114.7 L1221.4,1109.7 L1223.4,1099.8 L1225.4,1089.0 L1227.4,1093.4 L1229.4,1102.0 L1231.4,1110.9 L1233.5,1111.3 L1235.5,1109.2 L1237.5,1102.4 L1239.5,1102.2 L1241.5,1088.8 L1243.5,1096.1 L1245.6,1108.5 L1247.6,1091.3 L1249.6,1091.5 L1251.6,1098.2 L1253.6,1106.2 L1255.6,1117.1 L1257.6,1113.3 L1259.7,1097.2 L1261.7,1106.5 L1263.7,1112.9 L1265.7,1102.6 L1267.7,1099.7 L1269.7,1096.1 L1271.7,1094.8 L1273.8,1088.6 L1275.8,1104.5 L1277.8,1094.4 L1279.8,1107.1 L1281.8,1097.2 L1283.8,1098.7 L1285.9,1098.5 L1287.9,1092.8 L1289.9,1099.1 L1291.9,1091.8 L1293.9,1091.8 L1295.9,1097.6 L1297.9,1104.4 L1300.0,1107.6 L1302.0,1106.6 L1304.0,1103.8 L1306.0,1101.7 L1308.0,1077.8 L1310.0,1090.0 L1312.1,1092.0 L1314.1,1105.2 L1316.1,1107.3 L1318.1,1104.7 L1320.1,1100.1 L1322.1,1108.5 L1324.1,1090.0 L1326.2,1102.2 L1328.2,1092.5 L1330.2,1116.6 L1332.2,1104.5 L1334.2,1099.3 L1336.2,1098.6 L1338.2,1095.2 L1340.3,1096.9 L1342.3,1098.2 L1344.3,1114.4 L1346.3,1109.3 L1348.3,1120.7 L1350.3,1100.4 L1352.4,1097.8 L1354.4,1101.1 L1356.4,1106.7 L1358.4,1106.3 L1360.4,1087.3 L1362.4,1083.4 L1364.4,1096.3 L1366.5,1089.0 L1368.5,1109.6 L1370.5,1117.4 L1372.5,1108.0 L1374.5,1108.7 L1376.5,1106.4 L1378.5,1100.0 L1380.6,1076.3 L1382.6,1099.0 L1384.6,1099.2 L1386.6,1097.4 L1388.6,1099.4 L1390.6,1092.4 L1392.7,1084.0 L1394.7,1105.4 L1396.7,1099.8 L1398.7,1101.7 L1400.7,1097.3 L1402.7,1110.9 L1404.7,1116.0 L1406.8,1121.6 L1408.8,1100.9 L1410.8,1098.3 L1412.8,1098.5 L1414.8,1117.5 L1416.8,1106.8 L1418.8,1107.0 L1420.9,1112.2 L1422.9,1109.6 L1424.9,1096.4 L1426.9,1094.3 L1428.9,1098.1 L1430.9,1094.9 L1433.0,1102.7 L1435.0,1099.4 L1437.0,1098.8 L1439.0,1094.7" fill="none" stroke="#508642" stroke-width="1.25" stroke-linejoin="round"/>
<path d="M1038.0,1066.9 L1040.0,1067.8 L1042.0,1067.9 L1044.0,1072.8 L1046.1,1046.7 L1048.1,1056.5 L1050.1,1059.8 L1052.1,1042.9 L1054.1,1047.1 L1056.1,1076.3 L1058.2,1062.2 L1060.2,1057.3 L1062.2,1046.2 L1064.2,1048.8 L1066.2,1054.6 L1068.2,1074.6 L1070.2,1076.7 L1072.3,1066.4 L1074.3,1061.6 L1076.3,1074.9 L1078.3,1072.2 L1080.3,1071.7 L1082.3,1067.2 L1084.3,1063.4 L1086.4,1068.4 L1088.4,1078.7 L1090.4,1057.7 L1092.4,1049.1 L1094.4,1063.1 L1096.4,1055.9 L1098.5,1059.6 L1100.5,1058.5 L1102.5,1059.9 L1104.5,1072.1 L1106.5,1062.5 L1108.5,1055.9 L1110.5,1072.4 L1112.6,1049.3 L1114.6,1042.4 L1116.6,1043.2 L1118.6,1041.8 L1120.6,1053.3 L1122.6,1066.5 L1124.6,1072.3 L1126.7,1075.7 L1128.7,1067.8 L1130.7,1067.2 L1132.7,1060.4 L1134.7,1084.3 L1136.7,1049.1 L1138.8,1040.6 L1140.8,1060.4 L1142.8,1058.7 L1144.8,1060.2 L1146.8,1062.5 L1148.8,1067.6 L1150.8,1068.1 L1152.9,1074.9 L1154.9,1067.1 L1156.9,1067.1 L1158.9,1063.8 L1160.9,1074.1 L1162.9,1068.2 L1164.9,1066.7 L1167.0,1061.0 L1169.0,1075.4 L1171.0,1065.0 L1173.0,1057.0 L1175.0,1058.7 L1177.0,1068.3 L1179.1,1071.9 L1181.1,1070.3 L1183.1,1060.8 L1185.1,1050.6 L1187.1,1064.3 L1189.1,1072.3 L1191.1,1064.7 L1193.2,1064.4 L1195.2,1074.9 L1197.2,1075.9 L1199.2,1070.1 L1201.2,1061.4 L1203.2,1076.9 L1205.3,1079.1 L1207.3,1065.3 L1209.3,1078.2 L1211.3,1068.7 L1213.3,1064.1 L1215.3,1067.3 L1217.3,1076.8 L1219.4,1070.0 L1221.4,1070.9 L1223.4,1064.8 L1225.4,1074.4 L1227.4,1058.5 L1229.4,1080.8 L1231.4,1072.2 L1233.5,1068.3 L1235.5,1058.2 L1237.5,1070.7 L1239.5,1062.8 L1241.5,1071.4 L1243.5,1061.2 L1245.6,1049.1 L1247.6,1066.4 L1249.6,1062.8 L1251.6,1074.9 L1253.6,1059.8 L1255.6,1053.8 L1257.6,1063.5 L1259.7,1077.0 L1261.7,1065.8 L1263.7,1055.9 L1265.7,1054.0 L1267.7,1056.2 L1269.7,1081.9 L1271.7,1077.3 L1273.8,1056.3 L1275.8,1076.2 L1277.8,1058.7 L1279.8,1047.3 L1281.8,1055.0 L1283.8,1053.6 L1285.9,1067.0 L1287.9,1078.9 L1289.9,1071.2 L1291.9,1070.2 L1293.9,1068.5 L1295.9,1061.0 L1297.9,1067.1 L1300.0,1065.5 L1302.0,1062.9 L1304.0,1066.3 L1306.0,1049.6 L1308.0,1058.7 L1310.0,1064.4 L1312.1,1068.6 L1314.1,1073.7 L1316.1,1056.2 L1318.1,1063.2 L1320.1,1076.6 L1322.1,1075.1 L1324.1,1070.7 L1326.2,1072.5 L1328.2,1058.4 L1330.2,1076.3 L1332.2,1065.0 L1334.2,1065.5 L1336.2,1078.2 L1338.2,1069.7 L1340.3,1069.0 L1342.3,1063.1 L1344.3,1070.7 L1346.3,1065.5 L1348.3,1082.9 L1350.3,1081.7 L1352.4,1063.7 L1354.4,1056.7 L1356.4,1065.0 L1358.4,1072.6 L1360.4,1058.6 L1362.4,1085.2 L1364.4,1079.6 L1366.5,1064.3 L1368.5,1060.6 L1370.5,1075.7 L1372.5,1087.6 L1374.5,1058.9 L1376.5,1064.0 L1378.5,1075.3 L1380.6,1069.1 L1382.6,1059.5 L1384.6,1090.3 L1386.6,1062.8 L1388.6,1059.5 L1390.6,1085.4 L1392.7,1064.9 L1394.7,1083.9 L1396.7,1061.0 L1398.7,1062.3 L1400.7,1045.0 L1402.7,1067.9 L1404.7,1067.8 L1406.8,1057.9 L1408.8,1071.4 L1410.8,1075.4 L1412.8,1073.3 L1414.8,1069.9 L1416.8,1078.6 L1418.8,1066.0 L1420.9,1062.2 L1422.9,1065.8 L1424.9,1051.2 L1426.9,1066.8 L1428.9,1055.2 L1430.9,1069.9 L1433.0,1061.3 L1435.0,1084.6 L1437.0,1070.2 L1439.0,1070.2 L1439.0,1173.3 L1038.0,1173.3 Z" fill="#CCA300" fill-opacity="0.1" stroke="none"/>
<path d="M1038.0,1066.9 L1040.0,1067.8 L1042.0,1067.9 L1044.0,1072.8 L1046.1,1046.7 L1048.1,1056.5 L1050.1,1059.8 L1052.1,1042.9 L1054.1,1047.1 L1056.1,1076.3 L1058.2,1062.2 L1060.2,1057.3 L1062.2,1046.2 L1064.2,1048.8 L1066.2,1054.6 L1068.2,1074.6 L1070.2,1076.7 L1072.3,1066.4 L1074.3,1061.6 L1076.3,1074.9 L1078.3,1072.2 L1080.3,1071.7 L1082.3,1067.2 L1084.3,1063.4 L1086.4,1068.4 L1088.4,1078.7 L1090.4,1057.7 L1092.4,1049.1 L1094.4,1063.1 L1096.4,1055.9 L1098.5,1059.6 L1100.5,1058.5 L1102.5,1059.9 L1104.5,1072.1 L1106.5,1062.5 L1108.5,1055.9 L1110.5,1072.4 L1112.6,1049.3 L1114.6,1042.4 L1116.6,1043.2 L1118.6,1041.8 L1120.6,1053.3 L1122.6,1066.5 L1124.6,1072.3 L1126.7,1075.7 L1128.7,1067.8 L1130.7,1067.2 L1132.7,1060.4 L1134.7,1084.3 L1136.7,1049.1 L1138.8,1040.6 L1140.8,1060.4 L1142.8,1058.7 L1144.8,1060.2 L1146.8,1062.5 L1148.8,1067.6 L1150.8,1068.1 L1152.9,1074.9 L1154.9,1067.1 L1156.9,1067.1 L1158.9,1063.8 L1160.9,1074.1 L1162.9,1068.2 L1164.9,1066.7 L1167.0,1061.0 L1169.0,1075.4 L1171.0,1065.0 L1173.0,1057.0 L1175.0,1058.7 L1177.0,1068.3 L1179.1,1071.9 L1181.1,1070.3 L1183.1,1060.8 L1185.1,1050.6 L1187.1,1064.3 L1189.1,1072.3 L1191.1,1064.7 L1193.2,1064.4 L1195.2,1074.9 L1197.2,1075.9 L1199.2,1070.1 L1201.2,1061.4 L1203.2,1076.9 L1205.3,1079.1 L1207.3,1065.3 L1209.3,1078.2 L1211.3,1068.7 L1213.3,1064.1 L1215.3,1067.3 L1217.3,1076.8 L1219.4,1070.0 L1221.4,1070.9 L1223.4,1064.8 L1225.4,1074.4 L1227.4,1058.5 L1229.4,1080.8 L1231.4,1072.2 L1233.5,1068.3 L1235.5,1058.2 L1237.5,1070.7 L1239.5,1062.8 L1241.5,1071.4 L1243.5,1061.2 L1245.6,1049.1 L1247.6,1066.4 L1249.6,1062.8 L1251.6,1074.9 L1253.6,1059.8 L1255.6,1053.8 L1257.6,1063.5 L1259.7,1077.0 L1261.7,1065.8 L1263.7,1055.9 L1265.7,1054.0 L1267.7,1056.2 L1269.7,1081.9 L1271.7,1077.3 L1273.8,1056.3 L1275.8,1076.2 L1277.8,1058.7 L1279.8,1047.3 L1281.8,1055.0 L1283.8,1053.6 L1285.9,1067.0 L1287.9,1078.9 L1289.9,1071.2 L1291.9,1070.2 L1293.9,1068.5 L1295.9,1061.0 L1297.9,1067.1 L1300.0,1065.5 L1302.0,1062.9 L1304.0,1066.3 L1306.0,1049.6 L1308.0,1058.7 L1310.0,1064.4 L1312.1,1068.6 L1314.1,1073.7 L1316.1,1056.2 L1318.1,1063.2 L1320.1,1076.6 L1322.1,1075.1 L1324.1,1070.7 L1326.2,1072.5 L1328.2,1058.4 L1330.2,1076.3 L1332.2,1065.0 L1334.2,1065.5 L1336.2,1078.2 L1338.2,1069.7 L1340.3,1069.0 L1342.3,1063.1 L1344.3,1070.7 L1346.3,1065.5 L1348.3,1082.9 L1350.3,1081.7 L1352.4,1063.7 L1354.4,1056.7 L1356.4,1065.0 L1358.4,1072.6 L1360.4,1058.6 L1362.4,1085.2 L1364.4,1079.6 L1366.5,1064.3 L1368.5,1060.6 L1370.5,1075.7 L1372.5,1087.6 L1374.5,1058.9 L1376.5,1064.0 L1378.5,1075.3 L1380.6,1069.1 L1382.6,1059.5 L1384.6,1090.3 L1386.6,1062.8 L1388.6,1059.5 L1390.6,1085.4 L1392.7,1064.9 L1394.7,1083.9 L1396.7,1061.0 L1398.7,1062.3 L1400.7,1045.0 L1402.7,1067.9 L1404.7,1067.8 L1406.8,1057.9 L1408.8,1071.4 L1410.8,1075.4 L1412.8,1073.3 L1414.8,1069.9 L1416.8,1078.6 L1418.8,1066.0 L1420.9,1062.2 L1422.9,1065.8 L1424.9,1051.2 L1426.9,1066.8 L1428.9,1055.2 L1430.9,1069.9 L1433.0,1061.3 L1435.0,1084.6 L1437.0,1070.2 L1439.0,1070.2" fill="none" stroke="#CCA300" stroke-width="1.25" stroke-linejoin="round"/>
<path d="M1038.0,1102.9 L1040.0,1104.7 L1042.0,1103.1 L1044.0,1105.5 L1046.1,1117.5 L1048.1,1108.1 L1050.1,1105.3 L1052.1,1104.4 L1054.1,1108.3 L1056.1,1102.0 L1058.2,1093.3 L1060.2,1099.1 L1062.2,1102.4 L1064.2,1088.8 L1066.2,1088.3 L1068.2,1088.6 L1070.2,1086.8 L1072.3,1097.8 L1074.3,1099.0 L1076.3,1089.6 L1078.3,1100.2 L1080.3,1099.4 L1082.3,1095.3 L1084.3,1094.3 L1086.4,1099.1 L1088.4,1090.4 L1090.4,1097.2 L1092.4,1091.9 L1094.4,1087.8 L1096.4,1090.0 L1098.5,1089.9 L1100.5,1104.5 L1102.5,1109.3 L1104.5,1105.1 L1106.5,1095.5 L1108.5,1085.1 L1110.5,1103.6 L1112.6,1096.3 L1114.6,1103.5 L1116.6,1104.3 L1118.6,1100.9 L1120.6,1092.5 L1122.6,1094.1 L1124.6,1086.9 L1126.7,1101.9 L1128.7,1091.1 L1130.7,1088.0 L1132.7,1093.9 L1134.7,1092.2 L1136.7,1099.8 L1138.8,1105.7 L1140.8,1101.9 L1142.8,1102.7 L1144.8,1075.4 L1146.8,1094.8 L1148.8,1083.0 L1150.8,1091.3 L1152.9,1092.4 L1154.9,1089.3 L1156.9,1100.3 L1158.9,1089.9 L1160.9,1091.4 L1162.9,1106.5 L1164.9,1093.8 L1167.0,1090.9 L1169.0,1090.9 L1171.0,1082.1 L1173.0,1095.4 L1175.0,1091.5 L1177.0,1088.6 L1179.1,1100.7 L1181.1,1087.3 L1183.1,1104.6 L1185.1,1107.7 L1187.1,1094.2 L1189.1,1103.4 L1191.1,1098.0 L1193.2,1108.6 L1195.2,1097.8 L1197.2,1104.4 L1199.2,1094.6 L1201.2,1106.7 L1203.2,1094.2 L1205.3,1096.7 L1207.3,1094.7 L1209.3,1095.1 L1211.3,1093.7 L1213.3,1104.6 L1215.3,1116.9 L1217.3,1099.8 L1219.4,1103.0 L1221.4,1100.0 L1223.4,1092.4 L1225.4,1109.2 L1227.4,1103.8 L1229.4,1101.3 L1231.4,1104.0 L1233.5,1093.9 L1235.5,1095.0 L1237.5,1100.5 L1239.5,1103.1 L1241.5,1089.8 L1243.5,1097.9 L1245.6,1090.2 L1247.6,1089.3 L1249.6,1107.2 L1251.6,1105.3 L1253.6,1096.4 L1255.6,1091.5 L1257.6,1086.8 L1259.7,1085.4 L1261.7,1083.3 L1263.7,1093.6 L1265.7,1094.9 L1267.7,1087.5 L1269.7,1095.0 L1271.7,1085.3 L1273.8,1103.4 L1275.8,1090.4 L1277.8,1093.6 L1279.8,1108.3 L1281.8,1089.0 L1283.8,1089.3 L1285.9,1091.6 L1287.9,1100.7 L1289.9,1098.2 L1291.9,1082.1 L1293.9,1096.3 L1295.9,1120.3 L1297.9,1106.0 L1300.0,1105.0 L1302.0,1096.4 L1304.0,1096.3 L1306.0,1100.2 L1308.0,1100.6 L1310.0,1086.0 L1312.1,1101.7 L1314.1,1079.1 L1316.1,1092.9 L1318.1,1100.6 L1320.1,1087.8 L1322.1,1086.3 L1324.1,1098.4 L1326.2,1087.5 L1328.2,1104.8 L1330.2,1102.0 L1332.2,1085.3 L1334.2,1091.8 L1336.2,1101.6 L1338.2,1089.8 L1340.3,1083.7 L1342.3,1089.5 L1344.3,1104.7 L1346.3,1097.2 L1348.3,1089.3 L1350.3,1084.6 L1352.4,1074.9 L1354.4,1088.8 L1356.4,1094.1 L1358.4,1091.9 L1360.4,1081.6 L1362.4,1095.7 L1364.4,1081.7 L1366.5,1109.7 L1368.5,1089.1 L1370.5,1095.3 L1372.5,1088.1 L1374.5,1084.4 L1376.5,1098.0 L1378.5,1092.8 L1380.6,1089.0 L1382.6,1085.3 L1384.6,1096.1 L1386.6,1099.2 L1388.6,1107.2 L1390.6,1074.5 L1392.7,1087.5 L1394.7,1091.0 L1396.7,1101.7 L1398.7,1085.5 L1400.7,1092.8 L1402.7,1079.2 L1404.7,1080.3 L1406.8,1087.0 L1408.8,1083.2 L1410.8,1096.5 L1412.8,1093.7 L1414.8,1094.9 L1416.8,1100.5 L1418.8,1091.9 L1420.9,1090.9 L1422.9,1078.4 L1424.9,1112.4 L1426.9,1100.1 L1428.9,1098.8 L1430.9,1095.0 L1433.0,1087.1 L1435.0,1085.2 L1437.0,1087.6 L1439.0,1092.1 L1439.0,1173.3 L1038.0,1173.3 Z" fill="#447EBC" fill-opacity="0.1" stroke="none"/>
<path d="M1038.0,1102.9 L1040.0,1104.7 L1042.0,1103.1 L1044.0,1105.5 L1046.1,1117.5 L1048.1,1108.1 L1050.1,1105.3 L1052.1,1104.4 L1054.1,1108.3 L1056.1,1102.0 L1058.2,1093.3 L1060.2,1099.1 L1062.2,1102.4 L1064.2,1088.8 L1066.2,1088.3 L1068.2,1088.6 L1070.2,1086.8 L1072.3,1097.8 L1074.3,1099.0 L1076.3,1089.6 L1078.3,1100.2 L1080.3,1099.4 L1082.3,1095.3 L1084.3,1094.3 L1086.4,1099.1 L1088.4,1090.4 L1090.4,1097.2 L1092.4,1091.9 L1094.4,1087.8 L1096.4,1090.0 L1098.5,1089.9 L1100.5,1104.5 L1102.5,1109.3 L1104.5,1105.1 L1106.5,1095.5 L1108.5,1085.1 L1110.5,1103.6 L1112.6,1096.3 L1114.6,1103.5 L1116.6,1104.3 L1118.6,1100.9 L1120.6,1092.5 L1122.6,1094.1 L1124.6,1086.9 L1126.7,1101.9 L1128.7,1091.1 L1130.7,1088.0 L1132.7,1093.9 L1134.7,1092.2 L1136.7,1099.8 L1138.8,1105.7 L1140.8,1101.9 L1142.8,1102.7 L1144.8,1075.4 L1146.8,1094.8 L1148.8,1083.0 L1150.8,1091.3 L1152.9,1092.4 L1154.9,1089.3 L1156.9,1100.3 L1158.9,1089.9 L1160.9,1091.4 L1162.9,1106.5 L1164.9,1093.8 L1167.0,1090.9 L1169.0,1090.9 L1171.0,1082.1 L1173.0,1095.4 L1175.0,1091.5 L1177.0,1088.6 L1179.1,1100.7 L1181.1,1087.3 L1183.1,1104.6 L1185.1,1107.7 L1187.1,1094.2 L1189.1,1103.4 L1191.1,1098.0 L1193.2,1108.6 L1195.2,1097.8 L1197.2,1104.4 L1199.2,1094.6 L1201.2,1106.7 L1203.2,1094.2 L1205.3,1096.7 L1207.3,1094.7 L1209.3,1095.1 L1211.3,1093.7 L1213.3,1104.6 L1215.3,1116.9 L1217.3,1099.8 L1219.4,1103.0 L1221.4,1100.0 L1223.4,1092.4 L1225.4,1109.2 L1227.4,1103.8 L1229.4,1101.3 L1231.4,1104.0 L1233.5,1093.9 L1235.5,1095.0 L1237.5,1100.5 L1239.5,1103.1 L1241.5,1089.8 L1243.5,1097.9 L1245.6,1090.2 L1247.6,1089.3 L1249.6,1107.2 L1251.6,1105.3 L1253.6,1096.4 L1255.6,1091.5 L1257.6,1086.8 L1259.7,1085.4 L1261.7,1083.3 L1263.7,1093.6 L1265.7,1094.9 L1267.7,1087.5 L1269.7,1095.0 L1271.7,1085.3 L1273.8,1103.4 L1275.8,1090.4 L1277.8,1093.6 L1279.8,1108.3 L1281.8,1089.0 L1283.8,1089.3 L1285.9,1091.6 L1287.9,1100.7 L1289.9,1098.2 L1291.9,1082.1 L1293.9,1096.3 L1295.9,1120.3 L1297.9,1106.0 L1300.0,1105.0 L1302.0,1096.4 L1304.0,1096.3 L1306.0,1100.2 L1308.0,1100.6 L1310.0,1086.0 L1312.1,1101.7 L1314.1,1079.1 L1316.1,1092.9 L1318.1,1100.6 L1320.1,1087.8 L1322.1,1086.3 L1324.1,1098.4 L1326.2,1087.5 L1328.2,1104.8 L1330.2,1102.0 L1332.2,1085.3 L1334.2,1091.8 L1336.2,1101.6 L1338.2,1089.8 L1340.3,1083.7 L1342.3,1089.5 L1344.3,1104.7 L1346.3,1097.2 L1348.3,1089.3 L1350.3,1084.6 L1352.4,1074.9 L1354.4,1088.8 L1356.4,1094.1 L1358.4,1091.9 L1360.4,1081.6 L1362.4,1095.7 L1364.4,1081.7 L1366.5,1109.7 L1368.5,1089.1 L1370.5,1095.3 L1372.5,1088.1 L1374.5,1084.4 L1376.5,1098.0 L1378.5,1092.8 L1380.6,1089.0 L1382.6,1085.3 L1384.6,1096.1 L1386.6,1099.2 L1388.6,1107.2 L1390.6,1074.5 L1392.7,1087.5 L1394.7,1091.0 L1396.7,1101.7 L1398.7,1085.5 L1400.7,1092.8 L1402.7,1079.2 L1404.7,1080.3 L1406.8,1087.0 L1408.8,1083.2 L1410.8,1096.5 L1412.8,1093.7 L1414.8,1094.9 L1416.8,1100.5 L1418.8,1091.9 L1420.9,1090.9 L1422.9,1078.4 L1424.9,1112.4 L1426.9,1100.1 L1428.9,1098.8 L1430.9,1095.0 L1433.0,1087.1 L1435.0,1085.2 L1437.0,1087.6 L1439.0,1092.1" fill="none" stroke="#447EBC" stroke-width="1.25" stroke-linejoin="round"/>
<path d="M1038.0,1123.7 L1040.0,1123.6 L1042.0,1144.4 L1044.0,1134.5 L1046.1,1142.4 L1048.1,1142.4 L1050.1,1129.7 L1052.1,1127.2 L1054.1,1125.9 L1056.1,1134.9 L1058.2,1130.6 L1060.2,1136.1 L1062.2,1125.1 L1064.2,1119.3 L1066.2,1107.6 L1068.2,1109.2 L1070.2,1129.1 L1072.3,1130.7 L1074.3,1135.5 L1076.3,1124.7 L1078.3,1106.0 L1080.3,1113.3 L1082.3,1142.6 L1084.3,1140.9 L1086.4,1140.6 L1088.4,1123.3 L1090.4,1123.7 L1092.4,1120.8 L1094.4,1105.9 L1096.4,1126.8 L1098.5,1132.1 L1100.5,1106.6 L1102.5,1115.5 L1104.5,1128.2 L1106.5,1143.2 L1108.5,1142.0 L1110.5,1150.3 L1112.6,1128.4 L1114.6,1123.0 L1116.6,1112.5 L1118.6,1120.5 L1120.6,1127.6 L1122.6,1129.7 L1124.6,1105.0 L1126.7,1133.6 L1128.7,1122.1 L1130.7,1120.6 L1132.7,1114.4 L1134.7,1122.5 L1136.7,1115.7 L1138.8,1110.9 L1140.8,1118.8 L1142.8,1123.5 L1144.8,1122.0 L1146.8,1128.9 L1148.8,1123.3 L1150.8,1122.7 L1152.9,1117.5 L1154.9,1105.4 L1156.9,1102.5 L1158.9,1118.3 L1160.9,1112.2 L1162.9,1113.4 L1164.9,1109.2 L1167.0,1115.0 L1169.0,1114.0 L1171.0,1120.6 L1173.0,1125.1 L1175.0,1110.4 L1177.0,1102.5 L1179.1,1106.5 L1181.1,1109.5 L1183.1,1111.7 L1185.1,1119.0 L1187.1,1133.3 L1189.1,1113.5 L1191.1,1112.8 L1193.2,1119.7 L1195.2,1125.2 L1197.2,1105.1 L1199.2,1129.3 L1201.2,1101.3 L1203.2,1104.8 L1205.3,1089.1 L1207.3,1114.4 L1209.3,1114.0 L1211.3,1118.4 L1213.3,1113.0 L1215.3,1115.1 L1217.3,1120.5 L1219.4,1104.5 L1221.4,1118.0 L1223.4,1118.6 L1225.4,1108.5 L1227.4,1116.3 L1229.4,1117.1 L1231.4,1109.6 L1233.5,1114.5 L1235.5,1124.0 L1237.5,1115.3 L1239.5,1114.2 L1241.5,1095.5 L1243.5,1117.3 L1245.6,1103.0 L1247.6,1115.9 L1249.6,1114.9 L1251.6,1114.3 L1253.6,1108.3 L1255.6,1101.1 L1257.6,1090.7 L1259.7,1110.7 L1261.7,1096.8 L1263.7,1096.4 L1265.7,1097.9 L1267.7,1113.1 L1269.7,1101.0 L1271.7,1107.4 L1273.8,1104.5 L1275.8,1109.6 L1277.8,1101.9 L1279.8,1095.5 L1281.8,1093.6 L1283.8,1105.7 L1285.9,1097.2 L1287.9,1090.6 L1289.9,1111.5 L1291.9,1093.7 L1293.9,1115.8 L1295.9,1103.4 L1297.9,1099.7 L1300.0,1090.2 L1302.0,1099.1 L1304.0,1108.4 L1306.0,1113.6 L1308.0,1119.1 L1310.0,1101.2 L1312.1,1106.1 L1314.1,1111.8 L1316.1,1101.2 L1318.1,1110.7 L1320.1,1109.9 L1322.1,1109.7 L1324.1,1089.5 L1326.2,1086.1 L1328.2,1100.5 L1330.2,1117.4 L1332.2,1104.0 L1334.2,1102.4 L1336.2,1099.3 L1338.2,1096.3 L1340.3,1103.8 L1342.3,1093.8 L1344.3,1092.0 L1346.3,1097.3 L1348.3,1104.4 L1350.3,1106.7 L1352.4,1096.1 L1354.4,1110.3 L1356.4,1104.8 L1358.4,1108.9 L1360.4,1115.9 L1362.4,1098.5 L1364.4,1100.0 L1366.5,1099.7 L1368.5,1091.5 L1370.5,1111.8 L1372.5,1103.2 L1374.5,1097.6 L1376.5,1090.9 L1378.5,1107.3 L1380.6,1094.1 L1382.6,1095.4 L1384.6,1084.8 L1386.6,1084.1 L1388.6,1089.4 L1390.6,1075.4 L1392.7,1092.2 L1394.7,1100.3 L1396.7,1101.4 L1398.7,1107.2 L1400.7,1099.9 L1402.7,1115.5 L1404.7,1102.2 L1406.8,1093.9 L1408.8,1086.4 L1410.8,1097.1 L1412.8,1083.1 L1414.8,1098.9 L1416.8,1097.8 L1418.8,1113.9 L1420.9,1107.2 L1422.9,1105.7 L1424.9,1083.8 L1426.9,1087.2 L1428.9,1103.0 L1430.9,1091.7 L1433.0,1089.2 L1435.0,1095.1 L1437.0,1094.0 L1439.0,1096.7 L1439.0,1173.3 L1038.0,1173.3 Z" fill="#C15C17" fill-opacity="0.1" stroke="none"/>
<path d="M1038.0,1123.7 L1040.0,1123.6 L1042.0,1144.4 L1044.0,1134.5 L1046.1,1142.4 L1048.1,1142.4 L1050.1,1129.7 L1052.1,1127.2 L1054.1,1125.9 L1056.1,1134.9 L1058.2,1130.6 L1060.2,1136.1 L1062.2,1125.1 L1064.2,1119.3 L1066.2,1107.6 L1068.2,1109.2 L1070.2,1129.1 L1072.3,1130.7 L1074.3,1135.5 L1076.3,1124.7 L1078.3,1106.0 L1080.3,1113.3 L1082.3,1142.6 L1084.3,1140.9 L1086.4,1140.6 L1088.4,1123.3 L1090.4,1123.7 L1092.4,1120.8 L1094.4,1105.9 L1096.4,1126.8 L1098.5,1132.1 L1100.5,1106.6 L1102.5,1115.5 L1104.5,1128.2 L1106.5,1143.2 L1108.5,1142.0 L1110.5,1150.3 L1112.6,1128.4 L1114.6,1123.0 L1116.6,1112.5 L1118.6,1120.5 L1120.6,1127.6 L1122.6,1129.7 L1124.6,1105.0 L1126.7,1133.6 L1128.7,1122.1 L1130.7,1120.6 L1132.7,1114.4 L1134.7,1122.5 L1136.7,1115.7 L1138.8,1110.9 L1140.8,1118.8 L1142.8,1123.5 L1144.8,1122.0 L1146.8,1128.9 L1148.8,1123.3 L1150.8,1122.7 L1152.9,1117.5 L1154.9,1105.4 L1156.9,1102.5 L1158.9,1118.3 L1160.9,1112.2 L1162.9,1113.4 L1164.9,1109.2 L1167.0,1115.0 L1169.0,1114.0 L1171.0,1120.6 L1173.0,1125.1 L1175.0,1110.4 L1177.0,1102.5 L1179.1,1106.5 L1181.1,1109.5 L1183.1,1111.7 L1185.1,1119.0 L1187.1,1133.3 L1189.1,1113.5 L1191.1,1112.8 L1193.2,1119.7 L1195.2,1125.2 L1197.2,1105.1 L1199.2,1129.3 L1201.2,1101.3 L1203.2,1104.8 L1205.3,1089.1 L1207.3,1114.4 L1209.3,1114.0 L1211.3,1118.4 L1213.3,1113.0 L1215.3,1115.1 L1217.3,1120.5 L1219.4,1104.5 L1221.4,1118.0 L1223.4,1118.6 L1225.4,1108.5 L1227.4,1116.3 L1229.4,1117.1 L1231.4,1109.6 L1233.5,1114.5 L1235.5,1124.0 L1237.5,1115.3 L1239.5,1114.2 L1241.5,1095.5 L1243.5,1117.3 L1245.6,1103.0 L1247.6,1115.9 L1249.6,1114.9 L1251.6,1114.3 L1253.6,1108.3 L1255.6,1101.1 L1257.6,1090.7 L1259.7,1110.7 L1261.7,1096.8 L1263.7,1096.4 L1265.7,1097.9 L1267.7,1113.1 L1269.7,1101.0 L1271.7,1107.4 L1273.8,1104.5 L1275.8,1109.6 L1277.8,1101.9 L1279.8,1095.5 L1281.8,1093.6 L1283.8,1105.7 L1285.9,1097.2 L1287.9,1090.6 L1289.9,1111.5 L1291.9,1093.7 L1293.9,1115.8 L1295.9,1103.4 L1297.9,1099.7 L1300.0,1090.2 L1302.0,1099.1 L1304.0,1108.4 L1306.0,1113.6 L1308.0,1119.1 L1310.0,1101.2 L1312.1,1106.1 L1314.1,1111.8 L1316.1,1101.2 L1318.1,1110.7 L1320.1,1109.9 L1322.1,1109.7 L1324.1,1089.5 L1326.2,1086.1 L1328.2,1100.5 L1330.2,1117.4 L1332.2,1104.0 L1334.2,1102.4 L1336.2,1099.3 L1338.2,1096.3 L1340.3,1103.8 L1342.3,1093.8 L1344.3,1092.0 L1346.3,1097.3 L1348.3,1104.4 L1350.3,1106.7 L1352.4,1096.1 L1354.4,1110.3 L1356.4,1104.8 L1358.4,1108.9 L1360.4,1115.9 L1362.4,1098.5 L1364.4,1100.0 L1366.5,1099.7 L1368.5,1091.5 L1370.5,1111.8 L1372.5,1103.2 L1374.5,1097.6 L1376.5,1090.9 L1378.5,1107.3 L1380.6,1094.1 L1382.6,1095.4 L1384.6,1084.8 L1386.6,1084.1 L1388.6,1089.4 L1390.6,1075.4 L1392.7,1092.2 L1394.7,1100.3 L1396.7,1101.4 L1398.7,1107.2 L1400.7,1099.9 L1402.7,1115.5 L1404.7,1102.2 L1406.8,1093.9 L1408.8,1086.4 L1410.8,1097.1 L1412.8,1083.1 L1414.8,1098.9 L1416.8,1097.8 L1418.8,1113.9 L1420.9,1107.2 L1422.9,1105.7 L1424.9,1083.8 L1426.9,1087.2 L1428.9,1103.0 L1430.9,1091.7 L1433.0,1089.2 L1435.0,1095.1 L1437.0,1094.0 L1439.0,1096.7" fill="none" stroke="#C15C17" stroke-width="1.25" stroke-linejoin="round"/>
<path d="M1038.0,1131.1 L1040.0,1138.0 L1042.0,1131.1 L1044.0,1122.3 L1046.1,1119.3 L1048.1,1127.2 L1050.1,1131.4 L1052.1,1129.7 L1054.1,1123.6 L1056.1,1124.7 L1058.2,1129.7 L1060.2,1126.1 L1062.2,1128.0 L1064.2,1124.7 L1066.2,1128.5 L1068.2,1134.8 L1070.2,1128.5 L1072.3,1123.3 L1074.3,1131.4 L1076.3,1128.3 L1078.3,1122.5 L1080.3,1127.3 L1082.3,1129.8 L1084.3,1116.8 L1086.4,1119.6 L1088.4,1119.2 L1090.4,1129.0 L1092.4,1118.3 L1094.4,1132.2 L1096.4,1129.9 L1098.5,1122.9 L1100.5,1118.1 L1102.5,1128.2 L1104.5,1129.3 L1106.5,1125.2 L1108.5,1134.8 L1110.5,1124.2 L1112.6,1121.8 L1114.6,1126.3 L1116.6,1122.3 L1118.6,1120.1 L1120.6,1121.8 L1122.6,1121.1 L1124.6,1115.9 L1126.7,1124.5 L1128.7,1123.4 L1130.7,1126.4 L1132.7,1119.3 L1134.7,1124.7 L1136.7,1121.6 L1138.8,1122.4 L1140.8,1122.9 L1142.8,1114.7 L1144.8,1121.6 L1146.8,1115.7 L1148.8,1117.1 L1150.8,1114.9 L1152.9,1121.8 L1154.9,1117.9 L1156.9,1117.7 L1158.9,1124.5 L1160.9,1121.7 L1162.9,1122.9 L1164.9,1122.7 L1167.0,1115.8 L1169.0,1124.2 L1171.0,1131.0 L1173.0,1133.0 L1175.0,1126.9 L1177.0,1126.3 L1179.1,1122.8 L1181.1,1119.1 L1183.1,1112.1 L1185.1,1117.5 L1187.1,1118.0 L1189.1,1124.1 L1191.1,1119.0 L1193.2,1113.7 L1195.2,1112.4 L1197.2,1128.5 L1199.2,1118.2 L1201.2,1112.1 L1203.2,1114.3 L1205.3,1126.4 L1207.3,1123.4 L1209.3,1118.1 L1211.3,1117.6 L1213.3,1123.5 L1215.3,1125.3 L1217.3,1116.4 L1219.4,1125.6 L1221.4,1114.0 L1223.4,1118.1 L1225.4,1117.6 L1227.4,1125.6 L1229.4,1123.8 L1231.4,1116.9 L1233.5,1125.9 L1235.5,1110.4 L1237.5,1123.8 L1239.5,1126.2 L1241.5,1120.4 L1243.5,1116.7 L1245.6,1114.4 L1247.6,1119.3 L1249.6,1119.6 L1251.6,1119.8 L1253.6,1121.4 L1255.6,1131.7 L1257.6,1116.6 L1259.7,1116.3 L1261.7,1116.6 L1263.7,1120.5 L1265.7,1117.1 L1267.7,1117.4 L1269.7,1117.8 L1271.7,1111.9 L1273.8,1124.4 L1275.8,1117.7 L1277.8,1122.5 L1279.8,1119.9 L1281.8,1110.1 L1283.8,1120.5 L1285.9,1118.1 L1287.9,1119.9 L1289.9,1112.6 L1291.9,1120.3 L1293.9,1125.6 L1295.9,1116.0 L1297.9,1117.8 L1300.0,1118.0 L1302.0,1111.0 L1304.0,1119.0 L1306.0,1118.4 L1308.0,1115.5 L1310.0,1113.4 L1312.1,1117.5 L1314.1,1110.7 L1316.1,1102.9 L1318.1,1114.1 L1320.1,1105.5 L1322.1,1123.0 L1324.1,1109.9 L1326.2,1115.2 L1328.2,1114.1 L1330.2,1116.1 L1332.2,1118.0 L1334.2,1121.6 L1336.2,1118.0 L1338.2,1108.7 L1340.3,1107.0 L1342.3,1114.0 L1344.3,1116.5 L1346.3,1117.9 L1348.3,1120.7 L1350.3,1106.4 L1352.4,1108.4 L1354.4,1111.6 L1356.4,1115.3 L1358.4,1118.8 L1360.4,1108.0 L1362.4,1107.9 L1364.4,1116.4 L1366.5,1108.8 L1368.5,1117.2 L1370.5,1110.6 L1372.5,1116.8 L1374.5,1115.6 L1376.5,1110.7 L1378.5,1109.7 L1380.6,1106.5 L1382.6,1114.8 L1384.6,1104.8 L1386.6,1103.4 L1388.6,1109.7 L1390.6,1108.9 L1392.7,1114.8 L1394.7,1113.0 L1396.7,1118.4 L1398.7,1112.6 L1400.7,1110.5 L1402.7,1104.3 L1404.7,1104.6 L1406.8,1105.3 L1408.8,1111.2 L1410.8,1112.0 L1412.8,1112.6 L1414.8,1109.9 L1416.8,1119.9 L1418.8,1108.9 L1420.9,1117.7 L1422.9,1114.6 L1424.9,1111.1 L1426.9,1112.8 L1428.9,1102.3 L1430.9,1108.4 L1433.0,1101.5 L1435.0,1101.7 L1437.0,1110.0 L1439.0,1107.5 L1439.0,1173.3 L1038.0,1173.3 Z" fill="#890F02" fill-opacity="0.1" stroke="none"/>
<path d="M1038.0,1131.1 L1040.0,1138.0 L1042.0,1131.1 L1044.0,1122.3 L1046.1,1119.3 L1048.1,1127.2 L1050.1,1131.4 L1052.1,1129.7 L1054.1,1123.6 L1056.1,1124.7 L1058.2,1129.7 L1060.2,1126.1 L1062.2,1128.0 L1064.2,1124.7 L1066.2,1128.5 L1068.2,1134.8 L1070.2,1128.5 L1072.3,1123.3 L1074.3,1131.4 L1076.3,1128.3 L1078.3,1122.5 L1080.3,1127.3 L1082.3,1129.8 L1084.3,1116.8 L1086.4,1119.6 L1088.4,1119.2 L1090.4,1129.0 L1092.4,1118.3 L1094.4,1132.2 L1096.4,1129.9 L1098.5,1122.9 L1100.5,1118.1 L1102.5,1128.2 L1104.5,1129.3 L1106.5,1125.2 L1108.5,1134.8 L1110.5,1124.2 L1112.6,1121.8 L1114.6,1126.3 L1116.6,1122.3 L1118.6,1120.1 L1120.6,1121.8 L1122.6,1121.1 L1124.6,1115.9 L1126.7,1124.5 L1128.7,1123.4 L1130.7,1126.4 L1132.7,1119.3 L1134.7,1124.7 L1136.7,1121.6 L1138.8,1122.4 L1140.8,1122.9 L1142.8,1114.7 L1144.8,1121.6 L1146.8,1115.7 L1148.8,1117.1 L1150.8,1114.9 L1152.9,1121.8 L1154.9,1117.9 L1156.9,1117.7 L1158.9,1124.5 L1160.9,1121.7 L1162.9,1122.9 L1164.9,1122.7 L1167.0,1115.8 L1169.0,1124.2 L1171.0,1131.0 L1173.0,1133.0 L1175.0,1126.9 L1177.0,1126.3 L1179.1,1122.8 L1181.1,1119.1 L1183.1,1112.1 L1185.1,1117.5 L1187.1,1118.0 L1189.1,1124.1 L1191.1,1119.0 L1193.2,1113.7 L1195.2,1112.4 L1197.2,1128.5 L1199.2,1118.2 L1201.2,1112.1 L1203.2,1114.3 L1205.3,1126.4 L1207.3,1123.4 L1209.3,1118.1 L1211.3,1117.6 L1213.3,1123.5 L1215.3,1125.3 L1217.3,1116.4 L1219.4,1125.6 L1221.4,1114.0 L1223.4,1118.1 L1225.4,1117.6 L1227.4,1125.6 L1229.4,1123.8 L1231.4,1116.9 L1233.5,1125.9 L1235.5,1110.4 L1237.5,1123.8 L1239.5,1126.2 L1241.5,1120.4 L1243.5,1116.7 L1245.6,1114.4 L1247.6,1119.3 L1249.6,1119.6 L1251.6,1119.8 L1253.6,1121.4 L1255.6,1131.7 L1257.6,1116.6 L1259.7,1116.3 L1261.7,1116.6 L1263.7,1120.5 L1265.7,1117.1 L1267.7,1117.4 L1269.7,1117.8 L1271.7,1111.9 L1273.8,1124.4 L1275.8,1117.7 L1277.8,1122.5 L1279.8,1119.9 L1281.8,1110.1 L1283.8,1120.5 L1285.9,1118.1 L1287.9,1119.9 L1289.9,1112.6 L1291.9,1120.3 L1293.9,1125.6 L1295.9,1116.0 L1297.9,1117.8 L1300.0,1118.0 L1302.0,1111.0 L1304.0,1119.0 L1306.0,1118.4 L1308.0,1115.5 L1310.0,1113.4 L1312.1,1117.5 L1314.1,1110.7 L1316.1,1102.9 L1318.1,1114.1 L1320.1,1105.5 L1322.1,1123.0 L1324.1,1109.9 L1326.2,1115.2 L1328.2,1114.1 L1330.2,1116.1 L1332.2,1118.0 L1334.2,1121.6 L1336.2,1118.0 L1338.2,1108.7 L1340.3,1107.0 L1342.3,1114.0 L1344.3,1116.5 L1346.3,1117.9 L1348.3,1120.7 L1350.3,1106.4 L1352.4,1108.4 L1354.4,1111.6 L1356.4,1115.3 L1358.4,1118.8 L1360.4,1108.0 L1362.4,1107.9 L1364.4,1116.4 L1366.5,1108.8 L1368.5,1117.2 L1370.5,1110.6 L1372.5,1116.8 L1374.5,1115.6 L1376.5,1110.7 L1378.5,1109.7 L1380.6,1106.5 L1382.6,1114.8 L1384.6,1104.8 L1386.6,1103.4 L1388.6,1109.7 L1390.6,1108.9 L1392.7,1114.8 L1394.7,1113.0 L1396.7,1118.4 L1398.7,1112.6 L1400.7,1110.5 L1402.7,1104.3 L1404.7,1104.6 L1406.8,1105.3 L1408.8,1111.2 L1410.8,1112.0 L1412.8,1112.6 L1414.8,1109.9 L1416.8,1119.9 L1418.8,1108.9 L1420.9,1117.7 L1422.9,1114.6 L1424.9,1111.1 L1426.9,1112.8 L1428.9,1102.3 L1430.9,1108.4 L1433.0,1101.5 L1435.0,1101.7 L1437.0,1110.0 L1439.0,1107.5" fill="none" stroke="#890F02" stroke-width="1.25" stroke-linejoin="round"/>
<path d="M1038.0,1091.1 L1040.0,1100.8 L1042.0,1100.1 L1044.0,1104.7 L1046.1,1101.3 L1048.1,1103.5 L1050.1,1100.7 L1052.1,1093.2 L1054.1,1088.4 L1056.1,1096.6 L1058.2,1098.1 L1060.2,1093.6 L1062.2,1101.0 L1064.2,1108.5 L1066.2,1094.2 L1068.2,1105.9 L1070.2,1094.9 L1072.3,1106.3 L1074.3,1088.2 L1076.3,1105.2 L1078.3,1095.3 L1080.3,1087.9 L1082.3,1104.4 L1084.3,1090.3 L1086.4,1104.0 L1088.4,1114.4 L1090.4,1098.4 L1092.4,1094.6 L1094.4,1100.4 L1096.4,1119.1 L1098.5,1105.4 L1100.5,1103.8 L1102.5,1103.9 L1104.5,1103.3 L1106.5,1114.3 L1108.5,1107.9 L1110.5,1088.7 L1112.6,1085.7 L1114.6,1099.2 L1116.6,1105.2 L1118.6,1098.4 L1120.6,1091.7 L1122.6,1092.6 L1124.6,1106.9 L1126.7,1100.5 L1128.7,1099.1 L1130.7,1089.0 L1132.7,1088.3 L1134.7,1093.1 L1136.7,1089.1 L1138.8,1100.2 L1140.8,1088.5 L1142.8,1100.2 L1144.8,1097.0 L1146.8,1092.3 L1148.8,1104.7 L1150.8,1106.3 L1152.9,1114.5 L1154.9,1102.2 L1156.9,1100.8 L1158.9,1102.4 L1160.9,1096.7 L1162.9,1114.7 L1164.9,1103.6 L1167.0,1100.0 L1169.0,1101.7 L1171.0,1094.2 L1173.0,1085.2 L1175.0,1099.3 L1177.0,1106.5 L1179.1,1105.8 L1181.1,1100.4 L1183.1,1095.4 L1185.1,1104.9 L1187.1,1093.4 L1189.1,1105.6 L1191.1,1094.8 L1193.2,1095.1 L1195.2,1094.9 L1197.2,1082.2 L1199.2,1097.0 L1201.2,1100.0 L1203.2,1096.0 L1205.3,1092.0 L1207.3,1107.5 L1209.3,1099.3 L1211.3,1104.8 L1213.3,1095.9 L1215.3,1088.2 L1217.3,1096.1 L1219.4,1099.2 L1221.4,1097.8 L1223.4,1120.9 L1225.4,1098.8 L1227.4,1094.9 L1229.4,1096.8 L1231.4,1101.5 L1233.5,1105.1 L1235.5,1101.9 L1237.5,1090.7 L1239.5,1097.7 L1241.5,1088.6 L1243.5,1115.6 L1245.6,1106.6 L1247.6,1098.8 L1249.6,1099.0 L1251.6,1111.3 L1253.6,1107.0 L1255.6,1091.6 L1257.6,1106.7 L1259.7,1108.2 L1261.7,1109.4 L1263.7,1105.6 L1265.7,1095.7 L1267.7,1093.6 L1269.7,1112.6 L1271.7,1091.3 L1273.8,1101.3 L1275.8,1103.7 L1277.8,1087.5 L1279.8,1096.5 L1281.8,1107.4 L1283.8,1105.6 L1285.9,1105.8 L1287.9,1107.9 L1289.9,1103.4 L1291.9,1093.2 L1293.9,1094.6 L1295.9,1107.9 L1297.9,1080.1 L1300.0,1101.3 L1302.0,1098.3 L1304.0,1098.2 L1306.0,1092.7 L1308.0,1099.5 L1310.0,1095.3 L1312.1,1081.9 L1314.1,1093.5 L1316.1,1105.2 L1318.1,1097.6 L1320.1,1104.1 L1322.1,1102.5 L1324.1,1098.0 L1326.2,1095.7 L1328.2,1099.7 L1330.2,1092.3 L1332.2,1098.2 L1334.2,1107.9 L1336.2,1094.1 L1338.2,1099.9 L1340.3,1089.5 L1342.3,1100.9 L1344.3,1094.5 L1346.3,1094.9 L1348.3,1117.4 L1350.3,1114.0 L1352.4,1110.4 L1354.4,1090.6 L1356.4,1110.3 L1358.4,1094.2 L1360.4,1088.9 L1362.4,1092.0 L1364.4,1091.4 L1366.5,1100.0 L1368.5,1098.5 L1370.5,1096.4 L1372.5,1094.4 L1374.5,1091.7 L1376.5,1097.9 L1378.5,1103.1 L1380.6,1103.3 L1382.6,1096.1 L1384.6,1109.8 L1386.6,1110.1 L1388.6,1103.9 L1390.6,1103.4 L1392.7,1101.1 L1394.7,1118.4 L1396.7,1105.4 L1398.7,1101.5 L1400.7,1092.8 L1402.7,1111.2 L1404.7,1103.3 L1406.8,1095.5 L1408.8,1093.4 L1410.8,1087.6 L1412.8,1087.2 L1414.8,1102.8 L1416.8,1094.1 L1418.8,1099.1 L1420.9,1103.9 L1422.9,1087.6 L1424.9,1099.7 L1426.9,1104.4 L1428.9,1102.2 L1430.9,1104.9 L1433.0,1091.7 L1435.0,1093.1 L1437.0,1085.8 L1439.0,1091.4 L1439.0,1173.3 L1038.0,1173.3 Z" fill="#0A437C" fill-opacity="0.1" stroke="none"/>
<path d="M1038.0,1091.1 L1040.0,1100.8 L1042.0,1100.1 L1044.0,1104.7 L1046.1,1101.3 L1048.1,1103.5 L1050.1,1100.7 L1052.1,1093.2 L1054.1,1088.4 L1056.1,1096.6 L1058.2,1098.1 L1060.2,1093.6 L1062.2,1101.0 L1064.2,1108.5 L1066.2,1094.2 L1068.2,1105.9 L1070.2,1094.9 L1072.3,1106.3 L1074.3,1088.2 L1076.3,1105.2 L1078.3,1095.3 L1080.3,1087.9 L1082.3,1104.4 L1084.3,1090.3 L1086.4,1104.0 L1088.4,1114.4 L1090.4,1098.4 L1092.4,1094.6 L1094.4,1100.4 L1096.4,1119.1 L1098.5,1105.4 L1100.5,1103.8 L1102.5,1103.9 L1104.5,1103.3 L1106.5,1114.3 L1108.5,1107.9 L1110.5,1088.7 L1112.6,1085.7 L1114.6,1099.2 L1116.6,1105.2 L1118.6,1098.4 L1120.6,1091.7 L1122.6,1092.6 L1124.6,1106.9 L1126.7,1100.5 L1128.7,1099.1 L1130.7,1089.0 L1132.7,1088.3 L1134.7,1093.1 L1136.7,1089.1 L1138.8,1100.2 L1140.8,1088.5 L1142.8,1100.2 L1144.8,1097.0 L1146.8,1092.3 L1148.8,1104.7 L1150.8,1106.3 L1152.9,1114.5 L1154.9,1102.2 L1156.9,1100.8 L1158.9,1102.4 L1160.9,1096.7 L1162.9,1114.7 L1164.9,1103.6 L1167.0,1100.0 L1169.0,1101.7 L1171.0,1094.2 L1173.0,1085.2 L1175.0,1099.3 L1177.0,1106.5 L1179.1,1105.8 L1181.1,1100.4 L1183.1,1095.4 L1185.1,1104.9 L1187.1,1093.4 L1189.1,1105.6 L1191.1,1094.8 L1193.2,1095.1 L1195.2,1094.9 L1197.2,1082.2 L1199.2,1097.0 L1201.2,1100.0 L1203.2,1096.0 L1205.3,1092.0 L1207.3,1107.5 L1209.3,1099.3 L1211.3,1104.8 L1213.3,1095.9 L1215.3,1088.2 L1217.3,1096.1 L1219.4,1099.2 L1221.4,1097.8 L1223.4,1120.9 L1225.4,1098.8 L1227.4,1094.9 L1229.4,1096.8 L1231.4,1101.5 L1233.5,1105.1 L1235.5,1101.9 L1237.5,1090.7 L1239.5,1097.7 L1241.5,1088.6 L1243.5,1115.6 L1245.6,1106.6 L1247.6,1098.8 L1249.6,1099.0 L1251.6,1111.3 L1253.6,1107.0 L1255.6,1091.6 L1257.6,1106.7 L1259.7,1108.2 L1261.7,1109.4 L1263.7,1105.6 L1265.7,1095.7 L1267.7,1093.6 L1269.7,1112.6 L1271.7,1091.3 L1273.8,1101.3 L1275.8,1103.7 L1277.8,1087.5 L1279.8,1096.5 L1281.8,1107.4 L1283.8,1105.6 L1285.9,1105.8 L1287.9,1107.9 L1289.9,1103.4 L1291.9,1093.2 L1293.9,1094.6 L1295.9,1107.9 L1297.9,1080.1 L1300.0,1101.3 L1302.0,1098.3 L1304.0,1098.2 L1306.0,1092.7 L1308.0,1099.5 L1310.0,1095.3 L1312.1,1081.9 L1314.1,1093.5 L1316.1,1105.2 L1318.1,1097.6 L1320.1,1104.1 L1322.1,1102.5 L1324.1,1098.0 L1326.2,1095.7 L1328.2,1099.7 L1330.2,1092.3 L1332.2,1098.2 L1334.2,1107.9 L1336.2,1094.1 L1338.2,1099.9 L1340.3,1089.5 L1342.3,1100.9 L1344.3,1094.5 L1346.3,1094.9 L1348.3,1117.4 L1350.3,1114.0 L1352.4,1110.4 L1354.4,1090.6 L1356.4,1110.3 L1358.4,1094.2 L1360.4,1088.9 L1362.4,1092.0 L1364.4,1091.4 L1366.5,1100.0 L1368.5,1098.5 L1370.5,1096.4 L1372.5,1094.4 L1374.5,1091.7 L1376.5,1097.9 L1378.5,1103.1 L1380.6,1103.3 L1382.6,1096.1 L1384.6,1109.8 L1386.6,1110.1 L1388.6,1103.9 L1390.6,1103.4 L1392.7,1101.1 L1394.7,1118.4 L1396.7,1105.4 L1398.7,1101.5 L1400.7,1092.8 L1402.7,1111.2 L1404.7,1103.3 L1406.8,1095.5 L1408.8,1093.4 L1410.8,1087.6 L1412.8,1087.2 L1414.8,1102.8 L1416.8,1094.1 L1418.8,1099.1 L1420.9,1103.9 L1422.9,1087.6 L1424.9,1099.7 L1426.9,1104.4 L1428.9,1102.2 L1430.9,1104.9 L1433.0,1091.7 L1435.0,1093.1 L1437.0,1085.8 L1439.0,1091.4" fill="none" stroke="#0A437C" stroke-width="1.25" stroke-linejoin="round"/>
<path d="M1038.0,1138.9 L1040.0,1130.0 L1042.0,1137.6 L1044.0,1138.3 L1046.1,1136.7 L1048.1,1135.0 L1050.1,1127.7 L1052.1,1136.3 L1054.1,1132.8 L1056.1,1134.1 L1058.2,1141.4 L1060.2,1142.2 L1062.2,1137.3 L1064.2,1132.3 L1066.2,1131.5 L1068.2,1130.3 L1070.2,1132.4 L1072.3,1135.7 L1074.3,1131.4 L1076.3,1138.5 L1078.3,1142.2 L1080.3,1137.2 L1082.3,1142.2 L1084.3,1138.1 L1086.4,1138.3 L1088.4,1137.1 L1090.4,1133.8 L1092.4,1137.3 L1094.4,1135.9 L1096.4,1142.9 L1098.5,1133.8 L1100.5,1137.4 L1102.5,1130.7 L1104.5,1147.8 L1106.5,1140.2 L1108.5,1132.1 L1110.5,1145.7 L1112.6,1136.8 L1114.6,1131.9 L1116.6,1130.5 L1118.6,1139.4 L1120.6,1131.5 L1122.6,1129.9 L1124.6,1136.0 L1126.7,1127.4 L1128.7,1129.8 L1130.7,1129.9 L1132.7,1132.6 L1134.7,1127.3 L1136.7,1128.6 L1138.8,1122.7 L1140.8,1125.2 L1142.8,1131.9 L1144.8,1131.3 L1146.8,1124.3 L1148.8,1130.0 L1150.8,1127.0 L1152.9,1125.3 L1154.9,1128.9 L1156.9,1142.3 L1158.9,1131.2 L1160.9,1127.8 L1162.9,1127.4 L1164.9,1132.4 L1167.0,1122.1 L1169.0,1127.3 L1171.0,1131.3 L1173.0,1132.8 L1175.0,1126.8 L1177.0,1133.7 L1179.1,1134.8 L1181.1,1117.5 L1183.1,1117.1 L1185.1,1118.4 L1187.1,1116.8 L1189.1,1120.8 L1191.1,1135.1 L1193.2,1121.7 L1195.2,1118.0 L1197.2,1121.4 L1199.2,1136.5 L1201.2,1121.4 L1203.2,1116.9 L1205.3,1126.5 L1207.3,1125.2 L1209.3,1121.0 L1211.3,1124.9 L1213.3,1118.9 L1215.3,1123.3 L1217.3,1120.7 L1219.4,1123.5 L1221.4,1133.3 L1223.4,1132.8 L1225.4,1108.2 L1227.4,1118.9 L1229.4,1115.5 L1231.4,1115.5 L1233.5,1112.1 L1235.5,1117.9 L1237.5,1126.0 L1239.5,1124.4 L1241.5,1135.2 L1243.5,1127.7 L1245.6,1119.4 L1247.6,1135.2 L1249.6,1125.2 L1251.6,1119.0 L1253.6,1114.4 L1255.6,1126.3 L1257.6,1127.6 L1259.7,1135.1 L1261.7,1131.8 L1263.7,1121.8 L1265.7,1110.2 L1267.7,1126.1 L1269.7,1115.2 L1271.7,1117.9 L1273.8,1123.9 L1275.8,1109.6 L1277.8,1133.6 L1279.8,1125.1 L1281.8,1121.2 L1283.8,1108.9 L1285.9,1107.7 L1287.9,1104.6 L1289.9,1116.2 L1291.9,1114.1 L1293.9,1111.2 L1295.9,1115.4 L1297.9,1117.3 L1300.0,1120.8 L1302.0,1123.0 L1304.0,1128.2 L1306.0,1110.8 L1308.0,1120.4 L1310.0,1132.4 L1312.1,1121.5 L1314.1,1120.4 L1316.1,1118.8 L1318.1,1108.7 L1320.1,1117.4 L1322.1,1120.4 L1324.1,1123.9 L1326.2,1120.5 L1328.2,1122.0 L1330.2,1118.5 L1332.2,1100.4 L1334.2,1111.8 L1336.2,1121.9 L1338.2,1108.0 L1340.3,1110.7 L1342.3,1111.5 L1344.3,1112.3 L1346.3,1111.8 L1348.3,1112.4 L1350.3,1108.1 L1352.4,1109.4 L1354.4,1107.6 L1356.4,1117.9 L1358.4,1117.5 L1360.4,1121.6 L1362.4,1112.6 L1364.4,1111.0 L1366.5,1118.2 L1368.5,1113.7 L1370.5,1100.5 L1372.5,1105.2 L1374.5,1120.2 L1376.5,1117.8 L1378.5,1112.9 L1380.6,1115.5 L1382.6,1113.6 L1384.6,1108.3 L1386.6,1112.0 L1388.6,1121.2 L1390.6,1112.7 L1392.7,1115.3 L1394.7,1114.6 L1396.7,1118.4 L1398.7,1124.0 L1400.7,1124.6 L1402.7,1119.4 L1404.7,1122.2 L1406.8,1132.5 L1408.8,1112.2 L1410.8,1120.7 L1412.8,1120.2 L1414.8,1112.5 L1416.8,1127.9 L1418.8,1109.5 L1420.9,1117.3 L1422.9,1110.7 L1424.9,1115.7 L1426.9,1112.3 L1428.9,1112.5 L1430.9,1113.1 L1433.0,1123.9 L1435.0,1124.4 L1437.0,1116.0 L1439.0,1105.3 L1439.0,1173.3 L1038.0,1173.3 Z" fill="#6D1F62" fill-opacity="0.1" stroke="none"/>
<path d="M1038.0,1138.9 L1040.0,1130.0 L1042.0,1137.6 L1044.0,1138.3 L1046.1,1136.7 L1048.1,1135.0 L1050.1,1127.7 L1052.1,1136.3 L1054.1,1132.8 L1056.1,1134.1 L1058.2,1141.4 L1060.2,1142.2 L1062.2,1137.3 L1064.2,1132.3 L1066.2,1131.5 L1068.2,1130.3 L1070.2,1132.4 L1072.3,1135.7 L1074.3,1131.4 L1076.3,1138.5 L1078.3,1142.2 L1080.3,1137.2 L1082.3,1142.2 L1084.3,1138.1 L1086.4,1138.3 L1088.4,1137.1 L1090.4,1133.8 L1092.4,1137.3 L1094.4,1135.9 L1096.4,1142.9 L1098.5,1133.8 L1100.5,1137.4 L1102.5,1130.7 L1104.5,1147.8 L1106.5,1140.2 L1108.5,1132.1 L1110.5,1145.7 L1112.6,1136.8 L1114.6,1131.9 L1116.6,1130.5 L1118.6,1139.4 L1120.6,1131.5 L1122.6,1129.9 L1124.6,1136.0 L1126.7,1127.4 L1128.7,1129.8 L1130.7,1129.9 L1132.7,1132.6 L1134.7,1127.3 L1136.7,1128.6 L1138.8,1122.7 L1140.8,1125.2 L1142.8,1131.9 L1144.8,1131.3 L1146.8,1124.3 L1148.8,1130.0 L1150.8,1127.0 L1152.9,1125.3 L1154.9,1128.9 L1156.9,1142.3 L1158.9,1131.2 L1160.9,1127.8 L1162.9,1127.4 L1164.9,1132.4 L1167.0,1122.1 L1169.0,1127.3 L1171.0,1131.3 L1173.0,1132.8 L1175.0,1126.8 L1177.0,1133.7 L1179.1,1134.8 L1181.1,1117.5 L1183.1,1117.1 L1185.1,1118.4 L1187.1,1116.8 L1189.1,1120.8 L1191.1,1135.1 L1193.2,1121.7 L1195.2,1118.0 L1197.2,1121.4 L1199.2,1136.5 L1201.2,1121.4 L1203.2,1116.9 L1205.3,1126.5 L1207.3,1125.2 L1209.3,1121.0 L1211.3,1124.9 L1213.3,1118.9 L1215.3,1123.3 L1217.3,1120.7 L1219.4,1123.5 L1221.4,1133.3 L1223.4,1132.8 L1225.4,1108.2 L1227.4,1118.9 L1229.4,1115.5 L1231.4,1115.5 L1233.5,1112.1 L1235.5,1117.9 L1237.5,1126.0 L1239.5,1124.4 L1241.5,1135.2 L1243.5,1127.7 L1245.6,1119.4 L1247.6,1135.2 L1249.6,1125.2 L1251.6,1119.0 L1253.6,1114.4 L1255.6,1126.3 L1257.6,1127.6 L1259.7,1135.1 L1261.7,1131.8 L1263.7,1121.8 L1265.7,1110.2 L1267.7,1126.1 L1269.7,1115.2 L1271.7,1117.9 L1273.8,1123.9 L1275.8,1109.6 L1277.8,1133.6 L1279.8,1125.1 L1281.8,1121.2 L1283.8,1108.9 L1285.9,1107.7 L1287.9,1104.6 L1289.9,1116.2 L1291.9,1114.1 L1293.9,1111.2 L1295.9,1115.4 L1297.9,1117.3 L1300.0,1120.8 L1302.0,1123.0 L1304.0,1128.2 L1306.0,1110.8 L1308.0,1120.4 L1310.0,1132.4 L1312.1,1121.5 L1314.1,1120.4 L1316.1,1118.8 L1318.1,1108.7 L1320.1,1117.4 L1322.1,1120.4 L1324.1,1123.9 L1326.2,1120.5 L1328.2,1122.0 L1330.2,1118.5 L1332.2,1100.4 L1334.2,1111.8 L1336.2,1121.9 L1338.2,1108.0 L1340.3,1110.7 L1342.3,1111.5 L1344.3,1112.3 L1346.3,1111.8 L1348.3,1112.4 L1350.3,1108.1 L1352.4,1109.4 L1354.4,1107.6 L1356.4,1117.9 L1358.4,1117.5 L1360.4,1121.6 L1362.4,1112.6 L1364.4,1111.0 L1366.5,1118.2 L1368.5,1113.7 L1370.5,1100.5 L1372.5,1105.2 L1374.5,1120.2 L1376.5,1117.8 L1378.5,1112.9 L1380.6,1115.5 L1382.6,1113.6 L1384.6,1108.3 L1386.6,1112.0 L1388.6,1121.2 L1390.6,1112.7 L1392.7,1115.3 L1394.7,1114.6 L1396.7,1118.4 L1398.7,1124.0 L1400.7,1124.6 L1402.7,1119.4 L1404.7,1122.2 L1406.8,1132.5 L1408.8,1112.2 L1410.8,1120.7 L1412.8,1120.2 L1414.8,1112.5 L1416.8,1127.9 L1418.8,1109.5 L1420.9,1117.3 L1422.9,1110.7 L1424.9,1115.7 L1426.9,1112.3 L1428.9,1112.5 L1430.9,1113.1 L1433.0,1123.9 L1435.0,1124.4 L1437.0,1116.0 L1439.0,1105.3" fill="none" stroke="#6D1F62" stroke-width="1.25" stroke-linejoin="round"/>
<path d="M1038.0,1132.4 L1040.0,1128.4 L1042.0,1128.9 L1044.0,1127.7 L1046.1,1125.2 L1048.1,1135.0 L1050.1,1130.0 L1052.1,1130.6 L1054.1,1131.3 L1056.1,1133.7 L1058.2,1134.0 L1060.2,1135.1 L1062.2,1135.6 L1064.2,1120.5 L1066.2,1120.1 L1068.2,1127.1 L1070.2,1125.7 L1072.3,1132.6 L1074.3,1141.8 L1076.3,1140.1 L1078.3,1131.4 L1080.3,1123.7 L1082.3,1128.0 L1084.3,1133.0 L1086.4,1131.1 L1088.4,1133.7 L1090.4,1136.0 L1092.4,1131.7 L1094.4,1131.3 L1096.4,1132.9 L1098.5,1133.6 L1100.5,1133.9 L1102.5,1129.0 L1104.5,1122.9 L1106.5,1128.1 L1108.5,1119.1 L1110.5,1133.0 L1112.6,1128.5 L1114.6,1133.3 L1116.6,1130.3 L1118.6,1128.4 L1120.6,1126.0 L1122.6,1123.0 L1124.6,1129.3 L1126.7,1133.7 L1128.7,1130.3 L1130.7,1127.4 L1132.7,1130.9 L1134.7,1125.0 L1136.7,1120.1 L1138.8,1132.0 L1140.8,1127.4 L1142.8,1123.5 L1144.8,1134.8 L1146.8,1128.7 L1148.8,1128.9 L1150.8,1134.0 L1152.9,1123.7 L1154.9,1125.7 L1156.9,1129.1 L1158.9,1126.0 L1160.9,1124.4 L1162.9,1123.4 L1164.9,1123.9 L1167.0,1124.8 L1169.0,1131.6 L1171.0,1130.1 L1173.0,1127.4 L1175.0,1138.9 L1177.0,1121.1 L1179.1,1127.2 L1181.1,1131.5 L1183.1,1135.8 L1185.1,1128.1 L1187.1,1127.1 L1189.1,1129.4 L1191.1,1129.2 L1193.2,1131.1 L1195.2,1131.0 L1197.2,1128.2 L1199.2,1129.7 L1201.2,1124.5 L1203.2,1126.6 L1205.3,1126.0 L1207.3,1124.6 L1209.3,1120.6 L1211.3,1122.4 L1213.3,1124.4 L1215.3,1126.5 L1217.3,1129.7 L1219.4,1128.5 L1221.4,1123.9 L1223.4,1124.6 L1225.4,1127.3 L1227.4,1132.0 L1229.4,1133.9 L1231.4,1126.6 L1233.5,1121.8 L1235.5,1123.3 L1237.5,1131.0 L1239.5,1128.0 L1241.5,1125.4 L1243.5,1129.5 L1245.6,1125.1 L1247.6,1126.3 L1249.6,1129.3 L1251.6,1131.7 L1253.6,1123.6 L1255.6,1123.5 L1257.6,1128.6 L1259.7,1130.4 L1261.7,1122.8 L1263.7,1122.1 L1265.7,1125.7 L1267.7,1118.6 L1269.7,1124.7 L1271.7,1129.4 L1273.8,1121.5 L1275.8,1124.9 L1277.8,1123.5 L1279.8,1124.4 L1281.8,1129.0 L1283.8,1130.8 L1285.9,1127.1 L1287.9,1119.4 L1289.9,1127.6 L1291.9,1119.7 L1293.9,1122.4 L1295.9,1128.7 L1297.9,1124.4 L1300.0,1122.1 L1302.0,1127.6 L1304.0,1134.1 L1306.0,1125.3 L1308.0,1129.2 L1310.0,1123.6 L1312.1,1132.1 L1314.1,1126.7 L1316.1,1128.2 L1318.1,1131.3 L1320.1,1126.9 L1322.1,1124.0 L1324.1,1126.3 L1326.2,1129.5 L1328.2,1124.4 L1330.2,1131.3 L1332.2,1123.4 L1334.2,1121.6 L1336.2,1116.1 L1338.2,1118.1 L1340.3,1120.7 L1342.3,1121.7 L1344.3,1123.0 L1346.3,1128.9 L1348.3,1118.7 L1350.3,1120.0 L1352.4,1123.7 L1354.4,1128.2 L1356.4,1118.3 L1358.4,1119.7 L1360.4,1127.3 L1362.4,1121.3 L1364.4,1114.7 L1366.5,1121.0 L1368.5,1120.8 L1370.5,1124.2 L1372.5,1125.9 L1374.5,1119.1 L1376.5,1109.0 L1378.5,1118.8 L1380.6,1122.3 L1382.6,1119.3 L1384.6,1123.1 L1386.6,1119.7 L1388.6,1118.4 L1390.6,1125.7 L1392.7,1127.8 L1394.7,1124.1 L1396.7,1119.3 L1398.7,1120.4 L1400.7,1116.6 L1402.7,1126.6 L1404.7,1121.2 L1406.8,1124.5 L1408.8,1122.3 L1410.8,1120.8 L1412.8,1125.8 L1414.8,1123.9 L1416.8,1127.3 L1418.8,1122.1 L1420.9,1125.5 L1422.9,1124.8 L1424.9,1121.6 L1426.9,1124.4 L1428.9,1117.6 L1430.9,1123.3 L1433.0,1118.5 L1435.0,1119.6 L1437.0,1125.4 L1439.0,1123.4 L1439.0,1173.3 L1038.0,1173.3 Z" fill="#584477" fill-opacity="0.1" stroke="none"/>
<path d="M1038.0,1132.4 L1040.0,1128.4 L1042.0,1128.9 L1044.0,1127.7 L1046.1,1125.2 L1048.1,1135.0 L1050.1,1130.0 L1052.1,1130.6 L1054.1,1131.3 L1056.1,1133.7 L1058.2,1134.0 L1060.2,1135.1 L1062.2,1135.6 L1064.2,1120.5 L1066.2,1120.1 L1068.2,1127.1 L1070.2,1125.7 L1072.3,1132.6 L1074.3,1141.8 L1076.3,1140.1 L1078.3,1131.4 L1080.3,1123.7 L1082.3,1128.0 L1084.3,1133.0 L1086.4,1131.1 L1088.4,1133.7 L1090.4,1136.0 L1092.4,1131.7 L1094.4,1131.3 L1096.4,1132.9 L1098.5,1133.6 L1100.5,1133.9 L1102.5,1129.0 L1104.5,1122.9 L1106.5,1128.1 L1108.5,1119.1 L1110.5,1133.0 L1112.6,1128.5 L1114.6,1133.3 L1116.6,1130.3 L1118.6,1128.4 L1120.6,1126.0 L1122.6,1123.0 L1124.6,1129.3 L1126.7,1133.7 L1128.7,1130.3 L1130.7,1127.4 L1132.7,1130.9 L1134.7,1125.0 L1136.7,1120.1 L1138.8,1132.0 L1140.8,1127.4 L1142.8,1123.5 L1144.8,1134.8 L1146.8,1128.7 L1148.8,1128.9 L1150.8,1134.0 L1152.9,1123.7 L1154.9,1125.7 L1156.9,1129.1 L1158.9,1126.0 L1160.9,1124.4 L1162.9,1123.4 L1164.9,1123.9 L1167.0,1124.8 L1169.0,1131.6 L1171.0,1130.1 L1173.0,1127.4 L1175.0,1138.9 L1177.0,1121.1 L1179.1,1127.2 L1181.1,1131.5 L1183.1,1135.8 L1185.1,1128.1 L1187.1,1127.1 L1189.1,1129.4 L1191.1,1129.2 L1193.2,1131.1 L1195.2,1131.0 L1197.2,1128.2 L1199.2,1129.7 L1201.2,1124.5 L1203.2,1126.6 L1205.3,1126.0 L1207.3,1124.6 L1209.3,1120.6 L1211.3,1122.4 L1213.3,1124.4 L1215.3,1126.5 L1217.3,1129.7 L1219.4,1128.5 L1221.4,1123.9 L1223.4,1124.6 L1225.4,1127.3 L1227.4,1132.0 L1229.4,1133.9 L1231.4,1126.6 L1233.5,1121.8 L1235.5,1123.3 L1237.5,1131.0 L1239.5,1128.0 L1241.5,1125.4 L1243.5,1129.5 L1245.6,1125.1 L1247.6,1126.3 L1249.6,1129.3 L1251.6,1131.7 L1253.6,1123.6 L1255.6,1123.5 L1257.6,1128.6 L1259.7,1130.4 L1261.7,1122.8 L1263.7,1122.1 L1265.7,1125.7 L1267.7,1118.6 L1269.7,1124.7 L1271.7,1129.4 L1273.8,1121.5 L1275.8,1124.9 L1277.8,1123.5 L1279.8,1124.4 L1281.8,1129.0 L1283.8,1130.8 L1285.9,1127.1 L1287.9,1119.4 L1289.9,1127.6 L1291.9,1119.7 L1293.9,1122.4 L1295.9,1128.7 L1297.9,1124.4 L1300.0,1122.1 L1302.0,1127.6 L1304.0,1134.1 L1306.0,1125.3 L1308.0,1129.2 L1310.0,1123.6 L1312.1,1132.1 L1314.1,1126.7 L1316.1,1128.2 L1318.1,1131.3 L1320.1,1126.9 L1322.1,1124.0 L1324.1,1126.3 L1326.2,1129.5 L1328.2,1124.4 L1330.2,1131.3 L1332.2,1123.4 L1334.2,1121.6 L1336.2,1116.1 L1338.2,1118.1 L1340.3,1120.7 L1342.3,1121.7 L1344.3,1123.0 L1346.3,1128.9 L1348.3,1118.7 L1350.3,1120.0 L1352.4,1123.7 L1354.4,1128.2 L1356.4,1118.3 L1358.4,1119.7 L1360.4,1127.3 L1362.4,1121.3 L1364.4,1114.7 L1366.5,1121.0 L1368.5,1120.8 L1370.5,1124.2 L1372.5,1125.9 L1374.5,1119.1 L1376.5,1109.0 L1378.5,1118.8 L1380.6,1122.3 L1382.6,1119.3 L1384.6,1123.1 L1386.6,1119.7 L1388.6,1118.4 L1390.6,1125.7 L1392.7,1127.8 L1394.7,1124.1 L1396.7,1119.3 L1398.7,1120.4 L1400.7,1116.6 L1402.7,1126.6 L1404.7,1121.2 L1406.8,1124.5 L1408.8,1122.3 L1410.8,1120.8 L1412.8,1125.8 L1414.8,1123.9 L1416.8,1127.3 L1418.8,1122.1 L1420.9,1125.5 L1422.9,1124.8 L1424.9,1121.6 L1426.9,1124.4 L1428.9,1117.6 L1430.9,1123.3 L1433.0,1118.5 L1435.0,1119.6 L1437.0,1125.4 L1439.0,1123.4" fill="none" stroke="#584477" stroke-width="1.25" stroke-linejoin="round"/>
<path d="M1038.0,1142.1 L1040.0,1141.2 L1042.0,1144.4 L1044.0,1138.3 L1046.1,1142.4 L1048.1,1142.4 L1050.1,1139.0 L1052.1,1143.4 L1054.1,1145.3 L1056.1,1146.5 L1058.2,1141.7 L1060.2,1142.2 L1062.2,1137.3 L1064.2,1143.5 L1066.2,1144.9 L1068.2,1140.0 L1070.2,1138.5 L1072.3,1135.7 L1074.3,1141.8 L1076.3,1140.1 L1078.3,1142.2 L1080.3,1144.1 L1082.3,1143.2 L1084.3,1140.9 L1086.4,1140.8 L1088.4,1140.0 L1090.4,1137.5 L1092.4,1141.3 L1094.4,1137.8 L1096.4,1142.9 L1098.5,1141.9 L1100.5,1137.4 L1102.5,1140.2 L1104.5,1147.8 L1106.5,1143.2 L1108.5,1142.0 L1110.5,1150.3 L1112.6,1136.8 L1114.6,1138.8 L1116.6,1134.7 L1118.6,1141.6 L1120.6,1136.7 L1122.6,1139.4 L1124.6,1147.3 L1126.7,1133.7 L1128.7,1139.4 L1130.7,1141.2 L1132.7,1133.9 L1134.7,1131.6 L1136.7,1139.4 L1138.8,1134.9 L1140.8,1131.4 L1142.8,1136.2 L1144.8,1137.4 L1146.8,1128.9 L1148.8,1134.4 L1150.8,1137.9 L1152.9,1139.4 L1154.9,1136.0 L1156.9,1142.3 L1158.9,1135.9 L1160.9,1130.6 L1162.9,1136.3 L1164.9,1138.7 L1167.0,1134.7 L1169.0,1138.6 L1171.0,1134.2 L1173.0,1133.0 L1175.0,1139.3 L1177.0,1140.8 L1179.1,1141.0 L1181.1,1143.7 L1183.1,1136.4 L1185.1,1142.5 L1187.1,1135.9 L1189.1,1130.9 L1191.1,1140.2 L1193.2,1138.0 L1195.2,1142.9 L1197.2,1134.8 L1199.2,1137.9 L1201.2,1137.1 L1203.2,1135.7 L1205.3,1134.4 L1207.3,1136.1 L1209.3,1135.5 L1211.3,1137.2 L1213.3,1135.3 L1215.3,1139.2 L1217.3,1135.9 L1219.4,1141.9 L1221.4,1138.4 L1223.4,1132.8 L1225.4,1133.1 L1227.4,1138.7 L1229.4,1134.8 L1231.4,1138.0 L1233.5,1141.1 L1235.5,1138.7 L1237.5,1133.0 L1239.5,1132.7 L1241.5,1135.2 L1243.5,1137.5 L1245.6,1138.7 L1247.6,1135.2 L1249.6,1132.4 L1251.6,1136.9 L1253.6,1142.0 L1255.6,1140.7 L1257.6,1128.6 L1259.7,1136.1 L1261.7,1134.6 L1263.7,1133.2 L1265.7,1134.0 L1267.7,1134.6 L1269.7,1138.5 L1271.7,1138.3 L1273.8,1128.8 L1275.8,1134.8 L1277.8,1133.6 L1279.8,1138.4 L1281.8,1135.4 L1283.8,1132.7 L1285.9,1129.3 L1287.9,1135.9 L1289.9,1131.6 L1291.9,1131.2 L1293.9,1134.9 L1295.9,1131.6 L1297.9,1135.5 L1300.0,1136.0 L1302.0,1133.5 L1304.0,1142.1 L1306.0,1136.8 L1308.0,1136.5 L1310.0,1138.4 L1312.1,1135.2 L1314.1,1130.3 L1316.1,1133.0 L1318.1,1131.3 L1320.1,1135.0 L1322.1,1137.2 L1324.1,1127.8 L1326.2,1129.9 L1328.2,1127.9 L1330.2,1133.6 L1332.2,1129.3 L1334.2,1130.1 L1336.2,1128.9 L1338.2,1130.7 L1340.3,1127.0 L1342.3,1132.5 L1344.3,1134.9 L1346.3,1137.2 L1348.3,1128.6 L1350.3,1133.0 L1352.4,1135.1 L1354.4,1135.2 L1356.4,1133.5 L1358.4,1135.9 L1360.4,1133.0 L1362.4,1133.4 L1364.4,1133.2 L1366.5,1134.5 L1368.5,1131.4 L1370.5,1132.3 L1372.5,1130.5 L1374.5,1129.5 L1376.5,1131.3 L1378.5,1137.4 L1380.6,1133.8 L1382.6,1133.8 L1384.6,1128.3 L1386.6,1135.0 L1388.6,1133.6 L1390.6,1131.8 L1392.7,1131.4 L1394.7,1126.7 L1396.7,1130.4 L1398.7,1126.5 L1400.7,1133.8 L1402.7,1136.8 L1404.7,1127.1 L1406.8,1132.5 L1408.8,1127.1 L1410.8,1128.3 L1412.8,1127.3 L1414.8,1132.8 L1416.8,1127.9 L1418.8,1130.3 L1420.9,1125.9 L1422.9,1127.8 L1424.9,1135.4 L1426.9,1134.8 L1428.9,1126.3 L1430.9,1128.5 L1433.0,1129.9 L1435.0,1128.0 L1437.0,1129.8 L1439.0,1130.6 L1439.0,1173.3 L1038.0,1173.3 Z" fill="#7b782e" fill-opacity="0.1" stroke="none"/>
<path d="M1037,1000.5 L1440,1000.5" stroke="#ffffff" stroke-opacity="0.04" stroke-width="1.25"/>
<path d="M1037,1043.5 L1440,1043.5" stroke="#ffffff" stroke-opacity="0.04" stroke-width="1.25"/>
<path d="M1037,1086.6 L1440,1086.6" stroke="#ffffff" stroke-opacity="0.04" stroke-width="1.25"/>
<path d="M1037,1129.8 L1440,1129.8" stroke="#ffffff" stroke-opacity="0.04" stroke-width="1.25"/>
<path d="M1164,1000.5 L1164,1173.3" stroke="#ffffff" stroke-opacity="0.04" stroke-width="1.25"/>
<path d="M1298.4,1000.5 L1298.4,1173.3" stroke="#ffffff" stroke-opacity="0.04" stroke-width="1.25"/>
<path d="M1432.3,1000.5 L1432.3,1173.3" stroke="#ffffff" stroke-opacity="0.04" stroke-width="1.25"/>
<rect x="598.8" y="1035.3" width="17.5" height="5.0" rx="1.2" fill="#7EB26D"/>
<rect x="596" y="1052.2" width="328.5" height="32.6" fill="#22242a"/>
<rect x="598.8" y="1067.8" width="17.5" height="5.0" rx="1.2" fill="#EAB839"/>
<rect x="598.8" y="1100.3" width="17.5" height="5.0" rx="1.2" fill="#6ED0E0"/>
<rect x="596" y="1117.2" width="328.5" height="32.6" fill="#22242a"/>
<rect x="598.8" y="1132.8" width="17.5" height="5.0" rx="1.2" fill="#EF843C"/>
<rect x="598.8" y="1165.3" width="17.5" height="5.0" rx="1.2" fill="#E24D42"/>
<rect x="596" y="1182.2" width="328.5" height="19.8" fill="#22242a"/>
<rect x="598.8" y="1197.8" width="17.5" height="4.2" rx="1.2" fill="#1F78C1"/>
<rect x="1468" y="1035.3" width="17.5" height="5.0" rx="1.2" fill="#7EB26D"/>
<rect x="1466" y="1052.2" width="331" height="32.6" fill="#22242a"/>
<rect x="1468" y="1067.8" width="17.5" height="5.0" rx="1.2" fill="#EAB839"/>
<rect x="1468" y="1100.3" width="17.5" height="5.0" rx="1.2" fill="#6ED0E0"/>
<rect x="1466" y="1117.2" width="331" height="32.6" fill="#22242a"/>
<rect x="1468" y="1132.8" width="17.5" height="5.0" rx="1.2" fill="#EF843C"/>
<rect x="1468" y="1165.3" width="17.5" height="5.0" rx="1.2" fill="#E24D42"/>
<rect x="1466" y="1182.2" width="331" height="19.8" fill="#22242a"/>
<rect x="1468" y="1197.8" width="17.5" height="4.2" rx="1.2" fill="#1F78C1"/>
<rect x="922.5" y="999" width="9.5" height="80.5" rx="4.7" fill="#393a40"/>
<rect x="1794.5" y="999" width="9.5" height="80.5" rx="4.7" fill="#393a40"/>
<rect x="700" y="1213" width="78" height="10" fill="#181b1f"/>
<path d="M124,1284.6 L597.5,1284.6" stroke="#34373d" stroke-width="1.25"/>
<path d="M193.5,1284.6 L193.5,1294" stroke="#34373d" stroke-width="1.25"/>
<path d="M272.5,1284.6 L272.5,1294" stroke="#34373d" stroke-width="1.25"/>
<path d="M351.5,1284.6 L351.5,1294" stroke="#34373d" stroke-width="1.25"/>
<path d="M430.5,1284.6 L430.5,1294" stroke="#34373d" stroke-width="1.25"/>
<path d="M509,1284.6 L509,1294" stroke="#34373d" stroke-width="1.25"/>
<path d="M587.5,1284.6 L587.5,1294" stroke="#34373d" stroke-width="1.25"/>
<path d="M1009,1284.6 L1698,1284.6" stroke="#34373d" stroke-width="1.25"/>
<path d="M1111.6,1284.6 L1111.6,1294" stroke="#34373d" stroke-width="1.25"/>
<path d="M1226,1284.6 L1226,1294" stroke="#34373d" stroke-width="1.25"/>
<path d="M1340.3,1284.6 L1340.3,1294" stroke="#34373d" stroke-width="1.25"/>
<path d="M1455,1284.6 L1455,1294" stroke="#34373d" stroke-width="1.25"/>
<path d="M1569.4,1284.6 L1569.4,1294" stroke="#34373d" stroke-width="1.25"/>
<path d="M1683.8,1284.6 L1683.8,1294" stroke="#34373d" stroke-width="1.25"/>
<rect x="922.5" y="1283" width="9.5" height="30" rx="4.7" fill="#393a40"/>
<rect x="1794.5" y="1283" width="9.5" height="30" rx="4.7" fill="#393a40"/>
</svg>
<div class="t" style="left:91.55px;top:991.00px;font-size:15px;color:#ccccdc;letter-spacing:0.260px;-webkit-text-stroke:0.25px #ccccdc;">4 Gb/s</div>
<div class="t" style="left:91.56px;top:1034.00px;font-size:15px;color:#ccccdc;letter-spacing:0.259px;-webkit-text-stroke:0.25px #ccccdc;">3 Gb/s</div>
<div class="t" style="left:91.56px;top:1077.00px;font-size:15px;color:#ccccdc;letter-spacing:0.257px;-webkit-text-stroke:0.25px #ccccdc;">2 Gb/s</div>
<div class="t" style="left:91.57px;top:1120.00px;font-size:15px;color:#ccccdc;letter-spacing:0.255px;-webkit-text-stroke:0.25px #ccccdc;">1 Gb/s</div>
<div class="t" style="left:95.26px;top:1164.00px;font-size:15px;color:#ccccdc;letter-spacing:0.343px;-webkit-text-stroke:0.25px #ccccdc;">0 kb/s</div>
<div class="t" style="left:258.22px;top:1182.00px;font-size:15px;color:#ccccdc;letter-spacing:0.117px;-webkit-text-stroke:0.25px #ccccdc;">10:00</div>
<div class="t" style="left:399.72px;top:1182.00px;font-size:15px;color:#ccccdc;letter-spacing:0.117px;-webkit-text-stroke:0.25px #ccccdc;">12:00</div>
<div class="t" style="left:542.22px;top:1182.00px;font-size:15px;color:#ccccdc;letter-spacing:0.117px;-webkit-text-stroke:0.25px #ccccdc;">14:00</div>
<div class="t" style="left:963.73px;top:991.00px;font-size:15px;color:#ccccdc;letter-spacing:0.553px;-webkit-text-stroke:0.25px #ccccdc;">200 Mb/s</div>
<div class="t" style="left:963.76px;top:1034.00px;font-size:15px;color:#ccccdc;letter-spacing:0.549px;-webkit-text-stroke:0.25px #ccccdc;">150 Mb/s</div>
<div class="t" style="left:963.76px;top:1077.00px;font-size:15px;color:#ccccdc;letter-spacing:0.549px;-webkit-text-stroke:0.25px #ccccdc;">100 Mb/s</div>
<div class="t" style="left:973.70px;top:1120.00px;font-size:15px;color:#ccccdc;letter-spacing:0.383px;-webkit-text-stroke:0.25px #ccccdc;">50 Mb/s</div>
<div class="t" style="left:987.56px;top:1164.00px;font-size:15px;color:#ccccdc;letter-spacing:0.343px;-webkit-text-stroke:0.25px #ccccdc;">0 kb/s</div>
<div class="t" style="left:1143.72px;top:1182.00px;font-size:15px;color:#ccccdc;letter-spacing:0.117px;-webkit-text-stroke:0.25px #ccccdc;">10:00</div>
<div class="t" style="left:1277.72px;top:1182.00px;font-size:15px;color:#ccccdc;letter-spacing:0.117px;-webkit-text-stroke:0.25px #ccccdc;">12:00</div>
<div class="t" style="left:1412.22px;top:1182.00px;font-size:15px;color:#ccccdc;letter-spacing:0.117px;-webkit-text-stroke:0.25px #ccccdc;">14:00</div>
<div class="b" style="left:590px;top:990px;width:345px;height:212px;overflow:hidden;"><div class="b" style="left:-590px;top:-990px;width:1px;height:1px;">
<div class="t" style="left:628.02px;top:1028.00px;font-size:15px;color:#ccccdc;letter-spacing:0.611px;-webkit-text-stroke:0.25px #ccccdc;">nsms1000</div>
<div class="t" style="left:854.86px;top:1028.00px;font-size:15px;color:#ccccdc;letter-spacing:0.368px;-webkit-text-stroke:0.25px #ccccdc;">3.26 Gb/s</div>
<div class="t" style="left:628.02px;top:1060.00px;font-size:15px;color:#ccccdc;letter-spacing:0.632px;-webkit-text-stroke:0.25px #ccccdc;">nsms1001</div>
<div class="t" style="left:854.86px;top:1060.00px;font-size:15px;color:#ccccdc;letter-spacing:0.368px;-webkit-text-stroke:0.25px #ccccdc;">3.12 Gb/s</div>
<div class="t" style="left:628.02px;top:1093.00px;font-size:15px;color:#ccccdc;letter-spacing:0.632px;-webkit-text-stroke:0.25px #ccccdc;">nsms1002</div>
<div class="t" style="left:854.86px;top:1093.00px;font-size:15px;color:#ccccdc;letter-spacing:0.368px;-webkit-text-stroke:0.25px #ccccdc;">3.27 Gb/s</div>
<div class="t" style="left:628.02px;top:1125.00px;font-size:15px;color:#ccccdc;letter-spacing:0.621px;-webkit-text-stroke:0.25px #ccccdc;">nsms1003</div>
<div class="t" style="left:854.86px;top:1125.00px;font-size:15px;color:#ccccdc;letter-spacing:0.368px;-webkit-text-stroke:0.25px #ccccdc;">3.06 Gb/s</div>
<div class="t" style="left:628.02px;top:1158.00px;font-size:15px;color:#ccccdc;letter-spacing:0.589px;-webkit-text-stroke:0.25px #ccccdc;">nsms1004</div>
<div class="t" style="left:854.86px;top:1158.00px;font-size:15px;color:#ccccdc;letter-spacing:0.368px;-webkit-text-stroke:0.25px #ccccdc;">3.23 Gb/s</div>
<div class="t" style="left:628.02px;top:1190.00px;font-size:15px;color:#ccccdc;letter-spacing:0.621px;-webkit-text-stroke:0.25px #ccccdc;">nsms1005</div>
<div class="t" style="left:854.86px;top:1190.00px;font-size:15px;color:#ccccdc;letter-spacing:0.368px;-webkit-text-stroke:0.25px #ccccdc;">3.27 Gb/s</div>
<div class="t" style="left:863.40px;top:999.00px;font-size:15px;color:#33a2e5;letter-spacing:0.408px;-webkit-text-stroke:0.75px #33a2e5;">current</div>
</div></div>
<div class="b" style="left:1460px;top:990px;width:350px;height:212px;overflow:hidden;"><div class="b" style="left:-1460px;top:-990px;width:1px;height:1px;">
<div class="t" style="left:1497.73px;top:1028.00px;font-size:15px;color:#ccccdc;letter-spacing:0.625px;-webkit-text-stroke:0.25px #ccccdc;">nsms1000</div>
<div class="t" style="left:1724.79px;top:1028.00px;font-size:15px;color:#ccccdc;letter-spacing:0.485px;-webkit-text-stroke:0.25px #ccccdc;">56.5 Mb/s</div>
<div class="t" style="left:1497.73px;top:1060.00px;font-size:15px;color:#ccccdc;letter-spacing:0.646px;-webkit-text-stroke:0.25px #ccccdc;">nsms1001</div>
<div class="t" style="left:1729.20px;top:1060.00px;font-size:15px;color:#ccccdc;letter-spacing:0.515px;-webkit-text-stroke:0.25px #ccccdc;">123 Mb/s</div>
<div class="t" style="left:1497.73px;top:1093.00px;font-size:15px;color:#ccccdc;letter-spacing:0.646px;-webkit-text-stroke:0.25px #ccccdc;">nsms1002</div>
<div class="t" style="left:1724.79px;top:1093.00px;font-size:15px;color:#ccccdc;letter-spacing:0.485px;-webkit-text-stroke:0.25px #ccccdc;">84.5 Mb/s</div>
<div class="t" style="left:1497.73px;top:1125.00px;font-size:15px;color:#ccccdc;letter-spacing:0.636px;-webkit-text-stroke:0.25px #ccccdc;">nsms1003</div>
<div class="t" style="left:1730.39px;top:1125.00px;font-size:15px;color:#ccccdc;letter-spacing:0.505px;-webkit-text-stroke:0.25px #ccccdc;">117 Mb/s</div>
<div class="t" style="left:1497.73px;top:1158.00px;font-size:15px;color:#ccccdc;letter-spacing:0.604px;-webkit-text-stroke:0.25px #ccccdc;">nsms1004</div>
<div class="t" style="left:1729.20px;top:1158.00px;font-size:15px;color:#ccccdc;letter-spacing:0.515px;-webkit-text-stroke:0.25px #ccccdc;">106 Mb/s</div>
<div class="t" style="left:1497.73px;top:1190.00px;font-size:15px;color:#ccccdc;letter-spacing:0.636px;-webkit-text-stroke:0.25px #ccccdc;">nsms1005</div>
<div class="t" style="left:1724.79px;top:1190.00px;font-size:15px;color:#ccccdc;letter-spacing:0.485px;-webkit-text-stroke:0.25px #ccccdc;">82.2 Mb/s</div>
<div class="t" style="left:1735.70px;top:999.00px;font-size:15px;color:#33a2e5;letter-spacing:0.342px;-webkit-text-stroke:0.75px #33a2e5;">current</div>
</div></div>
<div class="t" style="left:91.60px;top:1275.00px;font-size:15px;color:#ccccdc;letter-spacing:0.676px;">400</div>
<div class="t" style="left:992.55px;top:1275.00px;font-size:15px;color:#ccccdc;letter-spacing:-0.000px;transform:scaleX(1.000);transform-origin:1.12px 50%;">1</div>
<div class="t" style="left:863.40px;top:1283.00px;font-size:15px;color:#33a2e5;letter-spacing:0.408px;-webkit-text-stroke:0.75px #33a2e5;">current</div>
<div class="t" style="left:1735.70px;top:1283.00px;font-size:15px;color:#33a2e5;letter-spacing:0.342px;-webkit-text-stroke:0.75px #33a2e5;">current</div>
<div class="t" style="left:25.60px;top:1248.00px;font-size:15.5px;color:#8e8f9a;letter-spacing:-0.305px;font-weight:700;transform:scaleX(0.961);transform-origin:0.70px 50%;">?</div>
<svg width="1834" height="1294" viewBox="0 0 1834 1294">
<defs><linearGradient id="lg" x1="0" y1="13" x2="0" y2="48" gradientUnits="userSpaceOnUse"><stop offset="0" stop-color="#f05a28"/><stop offset="0.25" stop-color="#f05a28"/><stop offset="1" stop-color="#fbca0a"/></linearGradient></defs>
<polygon points="30.70,14.08 33.79,17.36 37.84,18.33 41.13,18.14 42.70,19.90 43.80,21.80 45.30,25.50 46.20,30.10 46.00,31.40 45.10,30.60 44.20,29.20 43.40,27.60 42.50,26.20 41.30,24.90 40.10,24.00 38.00,27.00 43.00,33.00 43.90,36.00 44.80,39.20 44.99,39.78 42.09,42.09 39.78,44.03 38.62,46.73 35.14,48.08 32.82,46.92 30.12,45.57 26.64,45.96 23.16,47.70 21.23,45.96 21.04,42.87 20.07,39.78 17.75,37.84 13.11,35.33 15.82,32.82 18.14,30.12 18.52,26.64 17.36,23.16 16.98,20.07 20.46,19.30 23.55,19.10 26.64,17.36 28.57,15.43" fill="url(#lg)" stroke="url(#lg)" stroke-width="0.8" stroke-linejoin="round"/>
<circle cx="33.4" cy="31.5" r="10.55" fill="#181b1f"/>
<polygon points="35.30,37.75 32.50,38.30 29.60,37.20 27.60,35.20 27.10,32.80 27.60,30.20 29.20,28.00 31.50,26.50 34.00,26.00 37.00,26.60 40.00,28.40 41.80,30.20 42.90,32.10 43.60,34.00 43.95,35.80 44.70,39.20 43.00,41.20 41.00,41.60 38.60,40.60 38.20,39.60 38.90,37.60 39.30,35.00 39.20,32.60 38.20,30.60 36.50,29.70 34.60,29.45 32.60,29.80 31.00,30.80 30.10,32.40 30.15,34.00 31.00,35.50 32.60,36.35 35.30,36.55" fill="url(#lg)" stroke="url(#lg)" stroke-width="0.4" stroke-linejoin="round"/>
<circle cx="28.4" cy="138.7" r="10" fill="none" stroke="#8e8f9a" stroke-width="2.4"/>
<path d="M35.8,146 L41.6,151.6" stroke="#8e8f9a" stroke-width="2.4" stroke-linecap="round"/>
<rect x="18.3" y="188.5" width="9.2" height="9.2" rx="0.8" fill="none" stroke="#8e8f9a" stroke-width="2.3"/>
<rect x="18.3" y="202.3" width="9.2" height="9.2" rx="0.8" fill="none" stroke="#8e8f9a" stroke-width="2.3"/>
<rect x="32.2" y="188.5" width="9.2" height="9.2" rx="0.8" fill="none" stroke="#8e8f9a" stroke-width="2.3"/>
<rect x="32.2" y="202.3" width="9.2" height="9.2" rx="0.8" fill="none" stroke="#8e8f9a" stroke-width="2.3"/>
<path d="M23.6,264.5 V258 a6.4,6.4 0 0 1 12.8,0 V264.5" fill="none" stroke="#8e8f9a" stroke-width="2.3"/>
<rect x="21.4" y="264.6" width="17.4" height="3.2" rx="1" fill="none" stroke="#8e8f9a" stroke-width="2.2"/>
<path d="M26.6,268.6 a3.5,3.2 0 0 0 6.8,0" fill="none" stroke="#8e8f9a" stroke-width="2.2"/>
<path d="M30,248.6 V251" stroke="#8e8f9a" stroke-width="2.2" stroke-linecap="round"/>
<circle cx="30" cy="1196" r="15.1" fill="#0c9a0c"/>
<rect x="23.95" y="1183.95" width="3.3" height="3.3" fill="#b4bea6"/>
<rect x="26.95" y="1183.95" width="3.3" height="3.3" fill="#b4bea6"/>
<rect x="29.95" y="1183.95" width="3.3" height="3.3" fill="#b4bea6"/>
<rect x="32.95" y="1183.95" width="3.3" height="3.3" fill="#b4bea6"/>
<rect x="23.95" y="1186.95" width="3.3" height="3.3" fill="#b4bea6"/>
<rect x="26.95" y="1186.95" width="3.3" height="3.3" fill="#b4bea6"/>
<rect x="29.95" y="1186.95" width="3.3" height="3.3" fill="#b4bea6"/>
<rect x="32.95" y="1186.95" width="3.3" height="3.3" fill="#b4bea6"/>
<rect x="26.95" y="1189.95" width="3.3" height="3.3" fill="#b4bea6"/>
<rect x="29.95" y="1189.95" width="3.3" height="3.3" fill="#b4bea6"/>
<rect x="23.95" y="1192.95" width="3.3" height="3.3" fill="#b4bea6"/>
<rect x="32.95" y="1192.95" width="3.3" height="3.3" fill="#b4bea6"/>
<rect x="17.95" y="1195.95" width="3.3" height="3.3" fill="#b4bea6"/>
<rect x="23.95" y="1195.95" width="3.3" height="3.3" fill="#b4bea6"/>
<rect x="26.95" y="1195.95" width="3.3" height="3.3" fill="#b4bea6"/>
<rect x="29.95" y="1195.95" width="3.3" height="3.3" fill="#b4bea6"/>
<rect x="32.95" y="1195.95" width="3.3" height="3.3" fill="#b4bea6"/>
<rect x="38.95" y="1195.95" width="3.3" height="3.3" fill="#b4bea6"/>
<rect x="17.95" y="1198.95" width="3.3" height="3.3" fill="#b4bea6"/>
<rect x="20.95" y="1198.95" width="3.3" height="3.3" fill="#b4bea6"/>
<rect x="26.95" y="1198.95" width="3.3" height="3.3" fill="#b4bea6"/>
<rect x="29.95" y="1198.95" width="3.3" height="3.3" fill="#b4bea6"/>
<rect x="35.95" y="1198.95" width="3.3" height="3.3" fill="#b4bea6"/>
<rect x="38.95" y="1198.95" width="3.3" height="3.3" fill="#b4bea6"/>
<rect x="17.95" y="1201.95" width="3.3" height="3.3" fill="#b4bea6"/>
<rect x="20.95" y="1201.95" width="3.3" height="3.3" fill="#b4bea6"/>
<rect x="23.95" y="1201.95" width="3.3" height="3.3" fill="#b4bea6"/>
<rect x="32.95" y="1201.95" width="3.3" height="3.3" fill="#b4bea6"/>
<rect x="35.95" y="1201.95" width="3.3" height="3.3" fill="#b4bea6"/>
<rect x="38.95" y="1201.95" width="3.3" height="3.3" fill="#b4bea6"/>
<circle cx="30.1" cy="1255" r="11.5" fill="none" stroke="#8e8f9a" stroke-width="2.3"/>
<rect x="82.4" y="31" width="7" height="7" rx="0.5" fill="none" stroke="#d0d0e0" stroke-width="1.9"/>
<rect x="82.4" y="41.3" width="7" height="7" rx="0.5" fill="none" stroke="#d0d0e0" stroke-width="1.9"/>
<rect x="92.9" y="31" width="7" height="7" rx="0.5" fill="none" stroke="#d0d0e0" stroke-width="1.9"/>
<rect x="92.9" y="41.3" width="7" height="7" rx="0.5" fill="none" stroke="#d0d0e0" stroke-width="1.9"/>
<polygon points="591.60,31.70 594.25,37.46 600.54,38.20 595.88,42.49 597.13,48.70 591.60,45.60 586.07,48.70 587.32,42.49 582.66,38.20 588.95,37.46" fill="none" stroke="#d0d0e0" stroke-width="1.9" stroke-linejoin="round"/>
<circle cx="628.4" cy="40" r="2.7" fill="none" stroke="#d0d0e0" stroke-width="1.9"/>
<circle cx="639.5" cy="34.4" r="2.7" fill="none" stroke="#d0d0e0" stroke-width="1.9"/>
<circle cx="639.5" cy="45.6" r="2.7" fill="none" stroke="#d0d0e0" stroke-width="1.9"/>
<path d="M630.9,38.7 L637,35.6 M630.9,41.3 L637,44.4" stroke="#d0d0e0" stroke-width="1.9"/>
<path d="M179.2,98.6 L182.7,102 L186.2,98.6" fill="none" stroke="#d0d0e0" stroke-width="1.7" stroke-linecap="round" stroke-linejoin="round"/>
<path d="M86.6,147.2 L90.2,150.8 L93.8,147.2" fill="none" stroke="#d0d0e0" stroke-width="1.8" stroke-linecap="round" stroke-linejoin="round"/>
<path d="M86.6,669.7 L90.2,673.3 L93.8,669.7" fill="none" stroke="#d0d0e0" stroke-width="1.8" stroke-linecap="round" stroke-linejoin="round"/>
<circle cx="1433" cy="40.5" r="8.15" fill="none" stroke="#9d9fab" stroke-width="2.1"/>
<path d="M1433.2,35.2 V41 H1429.4" fill="none" stroke="#9d9fab" stroke-width="2.1" stroke-linecap="round" stroke-linejoin="round"/>
<path d="M1571.8,37.6 L1576,41.8 L1580.2,37.6" fill="none" stroke="#9d9fab" stroke-width="2" stroke-linecap="round" stroke-linejoin="round"/>
<circle cx="1617.6" cy="39.6" r="7.6" fill="none" stroke="#9d9fab" stroke-width="1.95"/>
<path d="M1613.4,39.5 H1621.8 M1623.2,45.2 L1627.6,49.4" fill="none" stroke="#9d9fab" stroke-width="1.95" stroke-linecap="round"/>
<path d="M1665.6,36.2 A8.1,8.1 0 0 1 1681.2,40.6" fill="none" stroke="#9d9fab" stroke-width="2"/>
<path d="M1665.5,31.6 V36.6 H1670.4" fill="none" stroke="#9d9fab" stroke-width="2" stroke-linejoin="miter"/>
<path d="M1680.6,44.6 A8.1,8.1 0 0 1 1665,40.2" fill="none" stroke="#9d9fab" stroke-width="2"/>
<path d="M1680.7,49.2 V44.3 H1675.9" fill="none" stroke="#9d9fab" stroke-width="2" stroke-linejoin="miter"/>
<path d="M1735.9,37.6 L1740,41.8 L1744.1,37.6" fill="none" stroke="#9d9fab" stroke-width="2" stroke-linecap="round" stroke-linejoin="round"/>
<rect x="1785" y="32.3" width="15.9" height="12.7" rx="2" fill="none" stroke="#9d9fab" stroke-width="2.1"/>
<path d="M1785,41.9 H1800.9" stroke="#9d9fab" stroke-width="2"/>
<path d="M1790.5,45.5 L1789.3,48.8 H1796.5 L1795.3,45.5" fill="none" stroke="#9d9fab" stroke-width="1.9" stroke-linejoin="round"/>
</svg>
</body></html>
